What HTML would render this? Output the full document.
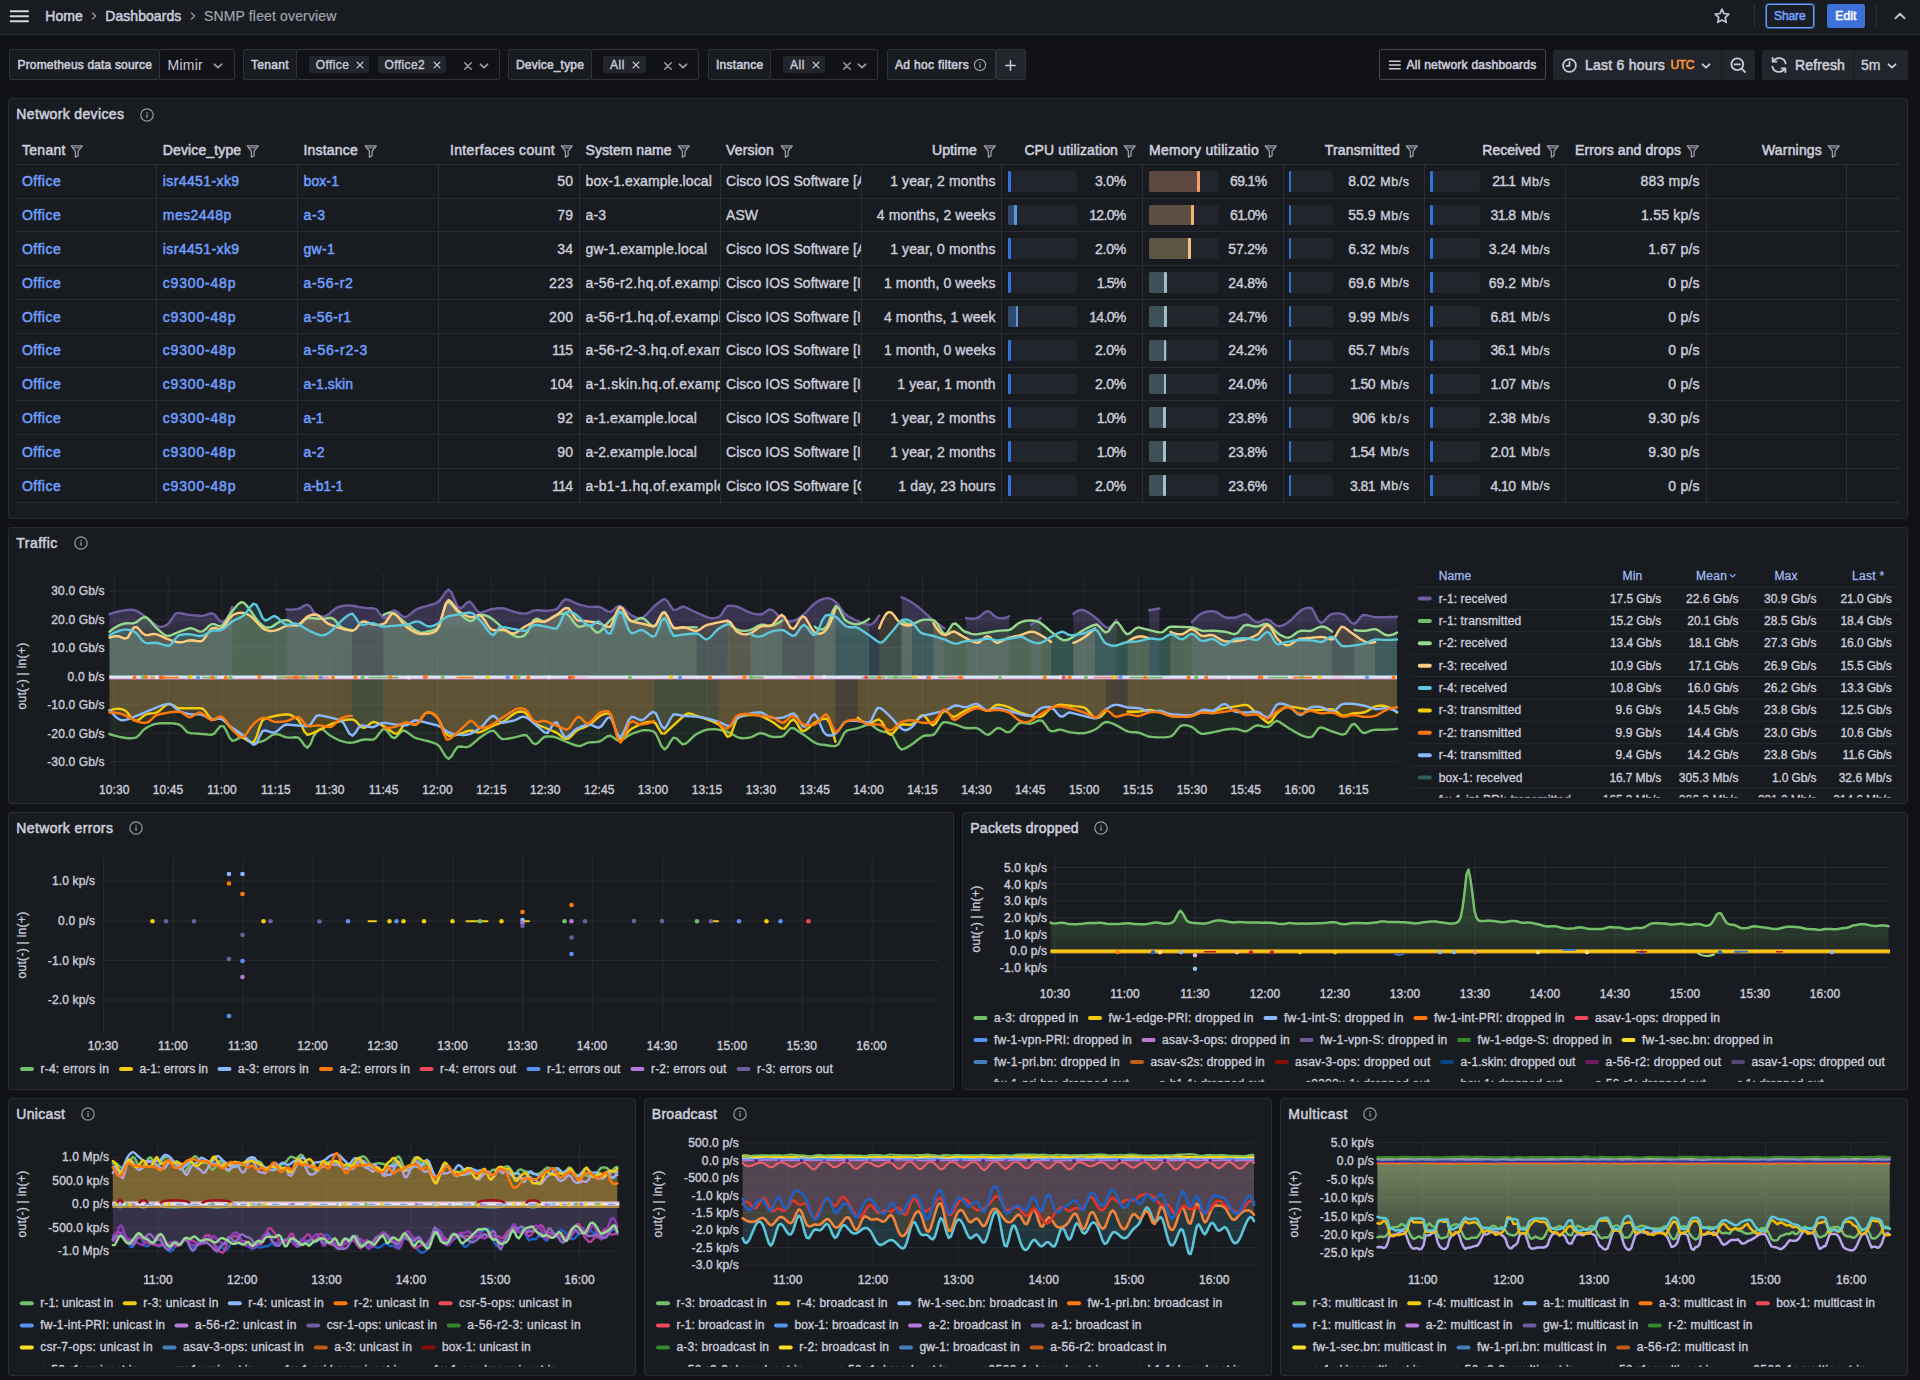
<!DOCTYPE html>
<html lang="en"><head><meta charset="utf-8"><title>SNMP fleet overview - Dashboards - Grafana</title>
<style>
html,body{margin:0;padding:0}
body{width:1920px;height:1380px;background:#111217;overflow:hidden;position:relative;font-family:"Liberation Sans",Arial,sans-serif;color:#ccccdc;font-size:12px}
.a{position:absolute;box-sizing:border-box}
.bx{box-sizing:border-box}
.t{position:absolute;white-space:nowrap;line-height:20px;height:20px}
svg{overflow:hidden}
svg text{font-family:"Liberation Sans",Arial,sans-serif;font-size:12px;fill:#ccccdc}
</style></head>
<body>
<div class="a" style="left:0;top:0;width:1920px;height:35px;background:#181b1f;border-bottom:1px solid #2a2d33"></div>
<svg class="a" style="left:9px;top:7.5px" width="22" height="16" viewBox="0 0 22 16"><path d="M1.7 3.2H19M1.7 8.2H19M1.7 13.2H19" stroke="#d5d5e2" stroke-width="2" stroke-linecap="round"/></svg>
<span class="t" style="top:5.5px;font-size:14px;left:45.3px;letter-spacing:0.04px;-webkit-text-stroke:0.5px #ccccdc;">Home</span>
<svg class="a" style="left:89px;top:10px" width="10" height="12" viewBox="0 0 10 12"><path d="M3.5 3 L6.7 6 L3.5 9" fill="none" stroke="#9a9aa8" stroke-width="1.3" stroke-linecap="round" stroke-linejoin="round"/></svg>
<span class="t" style="top:5.5px;font-size:14px;left:105.3px;letter-spacing:0.05px;-webkit-text-stroke:0.5px #ccccdc;">Dashboards</span>
<svg class="a" style="left:187.5px;top:10px" width="10" height="12" viewBox="0 0 10 12"><path d="M3.5 3 L6.7 6 L3.5 9" fill="none" stroke="#9a9aa8" stroke-width="1.3" stroke-linecap="round" stroke-linejoin="round"/></svg>
<span class="t" style="top:5.5px;font-size:14px;left:204.0px;letter-spacing:0.15px;color:#a4a4b3;-webkit-text-stroke:0.2px #a4a4b3;">SNMP fleet overview</span>
<svg class="a" style="left:1713px;top:7px" width="18" height="18" viewBox="0 0 18 18"><path d="M9 2.2 L11 6.6 L15.8 7.2 L12.3 10.5 L13.2 15.3 L9 13 L4.8 15.3 L5.7 10.5 L2.2 7.2 L7 6.6 Z" fill="none" stroke="#bdbdcc" stroke-width="1.8" stroke-linejoin="round"/></svg>
<div class="a" style="left:1754px;top:4px;width:1px;height:23px;background:#2e3036"></div>
<div class="a bx" style="left:1766.0px;top:4.0px;width:47.5px;height:23.5px;background:#1b1d24;border:1px solid #6e9fff;border-radius:3px;box-shadow:0 0 0 1px #3a5a9a;"></div>
<span class="t" style="top:5.5px;font-size:12px;left:1774.0px;letter-spacing:-0.10px;color:#6e9fff;-webkit-text-stroke:0.55px #6e9fff;">Share</span>
<div class="a bx" style="left:1827.0px;top:4.0px;width:37.5px;height:23.5px;background:#3d71d9;border-radius:2px;"></div>
<span class="t" style="top:5.5px;font-size:12px;left:1835.3px;letter-spacing:0.08px;color:#ffffff;-webkit-text-stroke:0.55px #ffffff;">Edit</span>
<div class="a" style="left:1875.5px;top:4px;width:1px;height:23px;background:#2e3036"></div>
<svg class="a" style="left:1893px;top:10px" width="14" height="12" viewBox="0 0 14 12"><path d="M2.5 8.2 L7 3.8 L11.5 8.2" fill="none" stroke="#bdbdcc" stroke-width="2" stroke-linecap="round" stroke-linejoin="round"/></svg>
<div class="a bx" style="left:9.0px;top:49.0px;width:151.0px;height:31.0px;background:#181b1f;border:1px solid #2f3239;border-radius:2px;"></div>
<span class="t" style="top:54.7px;font-size:12px;left:17.5px;letter-spacing:0.17px;-webkit-text-stroke:0.55px #ccccdc;">Prometheus data source</span>
<div class="a bx" style="left:159.0px;top:49.0px;width:75.5px;height:31.0px;background:#111217;border:1px solid #2f3239;border-radius:2px;"></div>
<span class="t" style="top:55.0px;font-size:14px;left:167.5px;letter-spacing:0.26px;">Mimir</span>
<svg class="a" style="left:212.0px;top:59.5px" width="12" height="12" viewBox="0 0 12 12"><path d="M2.5 4.3 L6 7.7 L9.5 4.3" fill="none" stroke="#9a9aa8" stroke-width="1.8" stroke-linecap="round" stroke-linejoin="round"/></svg>
<div class="a bx" style="left:242.5px;top:49.0px;width:54.5px;height:31.0px;background:#181b1f;border:1px solid #2f3239;border-radius:2px;"></div>
<span class="t" style="top:54.7px;font-size:12px;left:251.0px;letter-spacing:0.33px;-webkit-text-stroke:0.55px #ccccdc;">Tenant</span>
<div class="a bx" style="left:296.0px;top:49.0px;width:203.5px;height:31.0px;background:#111217;border:1px solid #2f3239;border-radius:2px;"></div>
<div class="a bx" style="left:308.8px;top:56.3px;width:60.7px;height:16.5px;background:#22252b;border-radius:2px;"></div>
<span class="t" style="top:54.5px;font-size:12px;left:315.8px;letter-spacing:0.40px;-webkit-text-stroke:0.35px #ccccdc;">Office</span>
<svg class="a" style="left:354.0px;top:58.8px" width="12" height="12" viewBox="-6 -6 12 12"><path d="M-2.9 -2.9 L2.9 2.9 M2.9 -2.9 L-2.9 2.9" fill="none" stroke="#ccccdc" stroke-width="1.3" stroke-linecap="round"/></svg>
<div class="a bx" style="left:377.5px;top:56.3px;width:68.5px;height:16.5px;background:#22252b;border-radius:2px;"></div>
<span class="t" style="top:54.5px;font-size:12px;left:384.5px;letter-spacing:0.39px;-webkit-text-stroke:0.35px #ccccdc;">Office2</span>
<svg class="a" style="left:430.5px;top:58.8px" width="12" height="12" viewBox="-6 -6 12 12"><path d="M-2.9 -2.9 L2.9 2.9 M2.9 -2.9 L-2.9 2.9" fill="none" stroke="#ccccdc" stroke-width="1.3" stroke-linecap="round"/></svg>
<svg class="a" style="left:462.2px;top:59.5px" width="12" height="12" viewBox="-6 -6 12 12"><path d="M-3.3 -3.3 L3.3 3.3 M3.3 -3.3 L-3.3 3.3" fill="none" stroke="#9a9aa8" stroke-width="1.5" stroke-linecap="round"/></svg>
<svg class="a" style="left:477.5px;top:59.5px" width="12" height="12" viewBox="0 0 12 12"><path d="M2.5 4.3 L6 7.7 L9.5 4.3" fill="none" stroke="#9a9aa8" stroke-width="1.8" stroke-linecap="round" stroke-linejoin="round"/></svg>
<div class="a bx" style="left:507.5px;top:49.0px;width:84.5px;height:31.0px;background:#181b1f;border:1px solid #2f3239;border-radius:2px;"></div>
<span class="t" style="top:54.7px;font-size:12px;left:516.0px;letter-spacing:0.18px;-webkit-text-stroke:0.55px #ccccdc;">Device_type</span>
<div class="a bx" style="left:591.0px;top:49.0px;width:107.5px;height:31.0px;background:#111217;border:1px solid #2f3239;border-radius:2px;"></div>
<div class="a bx" style="left:603.0px;top:56.3px;width:42.5px;height:16.5px;background:#22252b;border-radius:2px;"></div>
<span class="t" style="top:54.5px;font-size:12px;left:610.0px;letter-spacing:0.55px;-webkit-text-stroke:0.35px #ccccdc;">All</span>
<svg class="a" style="left:630.0px;top:58.8px" width="12" height="12" viewBox="-6 -6 12 12"><path d="M-2.9 -2.9 L2.9 2.9 M2.9 -2.9 L-2.9 2.9" fill="none" stroke="#ccccdc" stroke-width="1.3" stroke-linecap="round"/></svg>
<svg class="a" style="left:661.7px;top:59.5px" width="12" height="12" viewBox="-6 -6 12 12"><path d="M-3.3 -3.3 L3.3 3.3 M3.3 -3.3 L-3.3 3.3" fill="none" stroke="#9a9aa8" stroke-width="1.5" stroke-linecap="round"/></svg>
<svg class="a" style="left:677.0px;top:59.5px" width="12" height="12" viewBox="0 0 12 12"><path d="M2.5 4.3 L6 7.7 L9.5 4.3" fill="none" stroke="#9a9aa8" stroke-width="1.8" stroke-linecap="round" stroke-linejoin="round"/></svg>
<div class="a bx" style="left:707.5px;top:49.0px;width:63.5px;height:31.0px;background:#181b1f;border:1px solid #2f3239;border-radius:2px;"></div>
<span class="t" style="top:54.7px;font-size:12px;left:716.0px;letter-spacing:0.27px;-webkit-text-stroke:0.55px #ccccdc;">Instance</span>
<div class="a bx" style="left:770.0px;top:49.0px;width:108.0px;height:31.0px;background:#111217;border:1px solid #2f3239;border-radius:2px;"></div>
<div class="a bx" style="left:783.0px;top:56.3px;width:42.0px;height:16.5px;background:#22252b;border-radius:2px;"></div>
<span class="t" style="top:54.5px;font-size:12px;left:790.0px;letter-spacing:0.55px;-webkit-text-stroke:0.35px #ccccdc;">All</span>
<svg class="a" style="left:809.5px;top:58.8px" width="12" height="12" viewBox="-6 -6 12 12"><path d="M-2.9 -2.9 L2.9 2.9 M2.9 -2.9 L-2.9 2.9" fill="none" stroke="#ccccdc" stroke-width="1.3" stroke-linecap="round"/></svg>
<svg class="a" style="left:841.0px;top:59.5px" width="12" height="12" viewBox="-6 -6 12 12"><path d="M-3.3 -3.3 L3.3 3.3 M3.3 -3.3 L-3.3 3.3" fill="none" stroke="#9a9aa8" stroke-width="1.5" stroke-linecap="round"/></svg>
<svg class="a" style="left:856.0px;top:59.5px" width="12" height="12" viewBox="0 0 12 12"><path d="M2.5 4.3 L6 7.7 L9.5 4.3" fill="none" stroke="#9a9aa8" stroke-width="1.8" stroke-linecap="round" stroke-linejoin="round"/></svg>
<div class="a bx" style="left:886.7px;top:49.0px;width:109.3px;height:31.0px;background:#181b1f;border:1px solid #2f3239;border-radius:2px;"></div>
<span class="t" style="top:55.0px;font-size:12px;left:895.0px;letter-spacing:0.33px;-webkit-text-stroke:0.55px #ccccdc;">Ad hoc filters</span>
<svg class="a" style="left:972.3px;top:57.0px" width="16" height="16" viewBox="0 0 16 16"><circle cx="8" cy="8" r="5.6" fill="none" stroke="#9a9aa8" stroke-width="1.2"/><rect x="7.4" y="7.2" width="1.3" height="3.6" fill="#9a9aa8"/><rect x="7.4" y="5" width="1.3" height="1.3" fill="#9a9aa8"/></svg>
<div class="a bx" style="left:995.5px;top:49.0px;width:30.0px;height:31.0px;background:#22252b;border:1px solid #2f3239;border-radius:2px;"></div>
<svg class="a" style="left:1004px;top:58.5px" width="13" height="13" viewBox="0 0 13 13"><path d="M6.5 1.8V11.2M1.8 6.5H11.2" stroke="#ccccdc" stroke-width="1.5" stroke-linecap="round"/></svg>
<div class="a bx" style="left:1379.0px;top:49.0px;width:166.5px;height:31.0px;background:#111217;border:1px solid #44474f;border-radius:2px;"></div>
<svg class="a" style="left:1388px;top:59px" width="14" height="12" viewBox="0 0 14 12"><path d="M1.5 2.2H12.2M1.5 6H12.2M1.5 9.8H12.2" stroke="#ccccdc" stroke-width="1.5" stroke-linecap="round"/></svg>
<span class="t" style="top:55.0px;font-size:12px;left:1406.5px;letter-spacing:0.24px;-webkit-text-stroke:0.55px #ccccdc;">All network dashboards</span>
<div class="a bx" style="left:1552.5px;top:49.5px;width:168.5px;height:30.5px;background:#22252b;border-radius:2px;"></div>
<div class="a bx" style="left:1721.5px;top:49.5px;width:33.0px;height:30.5px;background:#22252b;border-radius:2px;"></div>
<div class="a" style="left:1721px;top:49.5px;width:1px;height:30.5px;background:#1b1d22"></div>
<svg class="a" style="left:1561px;top:56.5px" width="17" height="17" viewBox="0 0 17 17"><circle cx="8.5" cy="8.5" r="6.4" fill="none" stroke="#ccccdc" stroke-width="1.7"/><path d="M8.5 4.8V8.8H5.6" fill="none" stroke="#ccccdc" stroke-width="1.7" stroke-linecap="round" stroke-linejoin="round"/></svg>
<span class="t" style="top:55.0px;font-size:14px;left:1585.0px;letter-spacing:0.25px;-webkit-text-stroke:0.55px #ccccdc;">Last 6 hours</span>
<span class="t" style="top:55.3px;font-size:12px;left:1670.5px;letter-spacing:-0.39px;color:#ff9830;-webkit-text-stroke:0.55px #ff9830;">UTC</span>
<svg class="a" style="left:1699.5px;top:59.5px" width="12" height="12" viewBox="0 0 12 12"><path d="M2.5 4.3 L6 7.7 L9.5 4.3" fill="none" stroke="#ccccdc" stroke-width="1.8" stroke-linecap="round" stroke-linejoin="round"/></svg>
<svg class="a" style="left:1728.5px;top:56px" width="19" height="19" viewBox="0 0 19 19"><circle cx="8.3" cy="8.3" r="5.9" fill="none" stroke="#ccccdc" stroke-width="1.8"/><path d="M5.6 8.3H11M12.8 12.8L16 16" fill="none" stroke="#ccccdc" stroke-width="1.8" stroke-linecap="round"/></svg>
<div class="a bx" style="left:1761.5px;top:49.5px;width:91.5px;height:30.5px;background:#22252b;border-radius:2px;"></div>
<div class="a bx" style="left:1853.5px;top:49.5px;width:54.5px;height:30.5px;background:#22252b;border-radius:2px;"></div>
<div class="a" style="left:1853px;top:49.5px;width:1px;height:30.5px;background:#1b1d22"></div>
<svg class="a" style="left:1768.5px;top:55px" width="20" height="20" viewBox="0 0 20 20"><path d="M16.6 8.3A6.8 6.8 0 0 0 4.3 6.2M3.4 11.7A6.8 6.8 0 0 0 15.7 13.8" fill="none" stroke="#ccccdc" stroke-width="1.8" stroke-linecap="round"/><path d="M3.6 2.8V6.6H7.4M16.4 17.2V13.4H12.6" fill="none" stroke="#ccccdc" stroke-width="1.8" stroke-linecap="round" stroke-linejoin="round"/></svg>
<span class="t" style="top:55.0px;font-size:14px;left:1795.0px;letter-spacing:0.14px;-webkit-text-stroke:0.55px #ccccdc;">Refresh</span>
<span class="t" style="top:55.0px;font-size:14px;left:1861.0px;letter-spacing:0.03px;-webkit-text-stroke:0.4px #ccccdc;">5m</span>
<svg class="a" style="left:1885.5px;top:59.5px" width="12" height="12" viewBox="0 0 12 12"><path d="M2.5 4.3 L6 7.7 L9.5 4.3" fill="none" stroke="#ccccdc" stroke-width="1.8" stroke-linecap="round" stroke-linejoin="round"/></svg>
<div class="a" style="left:8.0px;top:98.0px;width:1900.0px;height:421.0px;background:#181b1f;border:1px solid #292b32;border-radius:3px"></div>
<span class="t" style="top:104.3px;font-size:14px;left:16.3px;letter-spacing:0.35px;-webkit-text-stroke:0.55px #ccccdc;">Network devices</span>
<svg class="a" style="left:138.5px;top:106.5px" width="16" height="16" viewBox="0 0 16 16"><circle cx="8" cy="8" r="6.2" fill="none" stroke="#9a9aa8" stroke-width="1.2"/><rect x="7.4" y="7.2" width="1.3" height="3.6" fill="#9a9aa8"/><rect x="7.4" y="5" width="1.3" height="1.3" fill="#9a9aa8"/></svg>
<span class="t" style="top:140.3px;font-size:14px;left:22.0px;letter-spacing:0.29px;-webkit-text-stroke:0.55px #ccccdc;">Tenant</span>
<svg class="a" style="left:70.3px;top:143.8px" width="14" height="15" viewBox="0 0 14 15"><path d="M1.2 1.8H12.3L8.1 7.2V11.6L5.4 13.2V7.2Z" fill="none" stroke="#a0a0ae" stroke-width="1.25" stroke-linejoin="round"/><path d="M2.6 3.9H10.9" stroke="#a0a0ae" stroke-width="1"/></svg>
<span class="t" style="top:140.3px;font-size:14px;left:162.8px;letter-spacing:0.13px;-webkit-text-stroke:0.55px #ccccdc;">Device_type</span>
<svg class="a" style="left:246.2px;top:143.8px" width="14" height="15" viewBox="0 0 14 15"><path d="M1.2 1.8H12.3L8.1 7.2V11.6L5.4 13.2V7.2Z" fill="none" stroke="#a0a0ae" stroke-width="1.25" stroke-linejoin="round"/><path d="M2.6 3.9H10.9" stroke="#a0a0ae" stroke-width="1"/></svg>
<span class="t" style="top:140.3px;font-size:14px;left:303.5px;letter-spacing:0.20px;-webkit-text-stroke:0.55px #ccccdc;">Instance</span>
<svg class="a" style="left:363.5px;top:143.8px" width="14" height="15" viewBox="0 0 14 15"><path d="M1.2 1.8H12.3L8.1 7.2V11.6L5.4 13.2V7.2Z" fill="none" stroke="#a0a0ae" stroke-width="1.25" stroke-linejoin="round"/><path d="M2.6 3.9H10.9" stroke="#a0a0ae" stroke-width="1"/></svg>
<span class="t" style="top:140.3px;font-size:14px;left:450.0px;letter-spacing:0.34px;-webkit-text-stroke:0.55px #ccccdc;">Interfaces count</span>
<svg class="a" style="left:559.5px;top:143.8px" width="14" height="15" viewBox="0 0 14 15"><path d="M1.2 1.8H12.3L8.1 7.2V11.6L5.4 13.2V7.2Z" fill="none" stroke="#a0a0ae" stroke-width="1.25" stroke-linejoin="round"/><path d="M2.6 3.9H10.9" stroke="#a0a0ae" stroke-width="1"/></svg>
<span class="t" style="top:140.3px;font-size:14px;left:585.5px;letter-spacing:0.04px;-webkit-text-stroke:0.55px #ccccdc;">System name</span>
<svg class="a" style="left:677.0px;top:143.8px" width="14" height="15" viewBox="0 0 14 15"><path d="M1.2 1.8H12.3L8.1 7.2V11.6L5.4 13.2V7.2Z" fill="none" stroke="#a0a0ae" stroke-width="1.25" stroke-linejoin="round"/><path d="M2.6 3.9H10.9" stroke="#a0a0ae" stroke-width="1"/></svg>
<span class="t" style="top:140.3px;font-size:14px;left:726.0px;letter-spacing:0.19px;-webkit-text-stroke:0.55px #ccccdc;">Version</span>
<svg class="a" style="left:779.5px;top:143.8px" width="14" height="15" viewBox="0 0 14 15"><path d="M1.2 1.8H12.3L8.1 7.2V11.6L5.4 13.2V7.2Z" fill="none" stroke="#a0a0ae" stroke-width="1.25" stroke-linejoin="round"/><path d="M2.6 3.9H10.9" stroke="#a0a0ae" stroke-width="1"/></svg>
<span class="t" style="top:140.3px;font-size:14px;left:932.0px;letter-spacing:0.11px;-webkit-text-stroke:0.55px #ccccdc;">Uptime</span>
<svg class="a" style="left:982.5px;top:143.8px" width="14" height="15" viewBox="0 0 14 15"><path d="M1.2 1.8H12.3L8.1 7.2V11.6L5.4 13.2V7.2Z" fill="none" stroke="#a0a0ae" stroke-width="1.25" stroke-linejoin="round"/><path d="M2.6 3.9H10.9" stroke="#a0a0ae" stroke-width="1"/></svg>
<span class="t" style="top:140.3px;font-size:14px;left:1024.4px;letter-spacing:0.12px;-webkit-text-stroke:0.55px #ccccdc;">CPU utilization</span>
<svg class="a" style="left:1123.1px;top:143.8px" width="14" height="15" viewBox="0 0 14 15"><path d="M1.2 1.8H12.3L8.1 7.2V11.6L5.4 13.2V7.2Z" fill="none" stroke="#a0a0ae" stroke-width="1.25" stroke-linejoin="round"/><path d="M2.6 3.9H10.9" stroke="#a0a0ae" stroke-width="1"/></svg>
<span class="t" style="top:140.3px;font-size:14px;left:1149.0px;letter-spacing:0.29px;-webkit-text-stroke:0.55px #ccccdc;">Memory utilizatio</span>
<svg class="a" style="left:1264.0px;top:143.8px" width="14" height="15" viewBox="0 0 14 15"><path d="M1.2 1.8H12.3L8.1 7.2V11.6L5.4 13.2V7.2Z" fill="none" stroke="#a0a0ae" stroke-width="1.25" stroke-linejoin="round"/><path d="M2.6 3.9H10.9" stroke="#a0a0ae" stroke-width="1"/></svg>
<span class="t" style="top:140.3px;font-size:14px;left:1324.8px;letter-spacing:0.16px;-webkit-text-stroke:0.55px #ccccdc;">Transmitted</span>
<svg class="a" style="left:1404.5px;top:143.8px" width="14" height="15" viewBox="0 0 14 15"><path d="M1.2 1.8H12.3L8.1 7.2V11.6L5.4 13.2V7.2Z" fill="none" stroke="#a0a0ae" stroke-width="1.25" stroke-linejoin="round"/><path d="M2.6 3.9H10.9" stroke="#a0a0ae" stroke-width="1"/></svg>
<span class="t" style="top:140.3px;font-size:14px;left:1482.3px;letter-spacing:-0.02px;-webkit-text-stroke:0.55px #ccccdc;">Received</span>
<svg class="a" style="left:1545.5px;top:143.8px" width="14" height="15" viewBox="0 0 14 15"><path d="M1.2 1.8H12.3L8.1 7.2V11.6L5.4 13.2V7.2Z" fill="none" stroke="#a0a0ae" stroke-width="1.25" stroke-linejoin="round"/><path d="M2.6 3.9H10.9" stroke="#a0a0ae" stroke-width="1"/></svg>
<span class="t" style="top:140.3px;font-size:14px;left:1575.0px;letter-spacing:0.11px;-webkit-text-stroke:0.55px #ccccdc;">Errors and drops</span>
<svg class="a" style="left:1686.0px;top:143.8px" width="14" height="15" viewBox="0 0 14 15"><path d="M1.2 1.8H12.3L8.1 7.2V11.6L5.4 13.2V7.2Z" fill="none" stroke="#a0a0ae" stroke-width="1.25" stroke-linejoin="round"/><path d="M2.6 3.9H10.9" stroke="#a0a0ae" stroke-width="1"/></svg>
<span class="t" style="top:140.3px;font-size:14px;left:1762.0px;letter-spacing:0.17px;-webkit-text-stroke:0.55px #ccccdc;">Warnings</span>
<svg class="a" style="left:1827.0px;top:143.8px" width="14" height="15" viewBox="0 0 14 15"><path d="M1.2 1.8H12.3L8.1 7.2V11.6L5.4 13.2V7.2Z" fill="none" stroke="#a0a0ae" stroke-width="1.25" stroke-linejoin="round"/><path d="M2.6 3.9H10.9" stroke="#a0a0ae" stroke-width="1"/></svg>
<div class="a" style="left:16px;top:163.7px;width:1884px;height:1px;background:#2a2d33"></div>
<div class="a" style="left:16px;top:197.5px;width:1884px;height:1px;background:#2a2d33"></div>
<div class="a" style="left:16px;top:231.3px;width:1884px;height:1px;background:#2a2d33"></div>
<div class="a" style="left:16px;top:265.1px;width:1884px;height:1px;background:#2a2d33"></div>
<div class="a" style="left:16px;top:298.9px;width:1884px;height:1px;background:#2a2d33"></div>
<div class="a" style="left:16px;top:332.7px;width:1884px;height:1px;background:#2a2d33"></div>
<div class="a" style="left:16px;top:366.5px;width:1884px;height:1px;background:#2a2d33"></div>
<div class="a" style="left:16px;top:400.3px;width:1884px;height:1px;background:#2a2d33"></div>
<div class="a" style="left:16px;top:434.1px;width:1884px;height:1px;background:#2a2d33"></div>
<div class="a" style="left:16px;top:467.9px;width:1884px;height:1px;background:#2a2d33"></div>
<div class="a" style="left:16px;top:501.7px;width:1884px;height:1px;background:#2a2d33"></div>
<div class="a" style="left:156.3px;top:164.2px;width:1px;height:340.0px;background:#2a2d33"></div>
<div class="a" style="left:297.2px;top:164.2px;width:1px;height:340.0px;background:#2a2d33"></div>
<div class="a" style="left:438.0px;top:164.2px;width:1px;height:340.0px;background:#2a2d33"></div>
<div class="a" style="left:578.8px;top:164.2px;width:1px;height:340.0px;background:#2a2d33"></div>
<div class="a" style="left:719.7px;top:164.2px;width:1px;height:340.0px;background:#2a2d33"></div>
<div class="a" style="left:860.5px;top:164.2px;width:1px;height:340.0px;background:#2a2d33"></div>
<div class="a" style="left:1001.3px;top:164.2px;width:1px;height:340.0px;background:#2a2d33"></div>
<div class="a" style="left:1142.1px;top:164.2px;width:1px;height:340.0px;background:#2a2d33"></div>
<div class="a" style="left:1283.0px;top:164.2px;width:1px;height:340.0px;background:#2a2d33"></div>
<div class="a" style="left:1423.8px;top:164.2px;width:1px;height:340.0px;background:#2a2d33"></div>
<div class="a" style="left:1564.6px;top:164.2px;width:1px;height:340.0px;background:#2a2d33"></div>
<div class="a" style="left:1705.5px;top:164.2px;width:1px;height:340.0px;background:#2a2d33"></div>
<div class="a" style="left:1846.3px;top:164.2px;width:1px;height:340.0px;background:#2a2d33"></div>
<span class="t" style="top:171.4px;font-size:14px;left:22.0px;letter-spacing:0.48px;color:#6e9fff;-webkit-text-stroke:0.5px #6e9fff;">Office</span>
<span class="t" style="top:171.4px;font-size:14px;left:162.8px;letter-spacing:0.39px;color:#6e9fff;-webkit-text-stroke:0.5px #6e9fff;">isr4451-xk9</span>
<span class="t" style="top:171.4px;font-size:14px;left:303.5px;letter-spacing:0.10px;color:#6e9fff;-webkit-text-stroke:0.5px #6e9fff;">box-1</span>
<span class="t" style="top:171.4px;font-size:14px;right:1346.7px;letter-spacing:0.30px;-webkit-text-stroke:0.4px #ccccdc;">50</span>
<div class="a" style="left:585.5px;top:169.4px;width:134.5px;height:24px;overflow:hidden"><span class="t" style="left:0;top:2px;font-size:14px;letter-spacing:0.1px;-webkit-text-stroke:0.4px #ccccdc">box-1.example.local</span></div>
<div class="a" style="left:726px;top:169.4px;width:135px;height:24px;overflow:hidden"><span class="t" style="left:0;top:2px;font-size:14px;letter-spacing:0.05px;-webkit-text-stroke:0.4px #ccccdc">Cisco IOS Software [Amsterdam], ISR Software</span></div>
<span class="t" style="top:171.4px;font-size:14px;right:924.4px;letter-spacing:0.12px;-webkit-text-stroke:0.4px #ccccdc;">1 year, 2 months</span>
<div class="a bx" style="left:1007.6px;top:170.8px;width:69.2px;height:20.8px;background:#22252b;border-radius:2px;"></div>
<div class="a bx" style="left:1008.0px;top:170.8px;width:2.6px;height:20.8px;background:#3274d9;border-radius:1px;"></div>
<span class="t" style="top:171.4px;font-size:14px;right:793.9px;letter-spacing:-0.20px;-webkit-text-stroke:0.4px #ccccdc;">3.0%</span>
<div class="a bx" style="left:1148.5px;top:170.8px;width:70.0px;height:20.8px;background:#22252b;border-radius:2px;"></div>
<div class="a bx" style="left:1148.5px;top:170.8px;width:51.5px;height:20.8px;background:#5c4840;border-radius:2px;"></div>
<div class="a bx" style="left:1197.2px;top:170.8px;width:2.8px;height:20.8px;background:#f2a06e;border-radius:1px;"></div>
<span class="t" style="top:171.4px;font-size:14px;right:653.5px;letter-spacing:-0.66px;-webkit-text-stroke:0.4px #ccccdc;">69.1%</span>
<div class="a bx" style="left:1288.6px;top:170.8px;width:44.8px;height:20.8px;background:#22252b;border-radius:2px;"></div>
<div class="a bx" style="left:1288.8px;top:170.8px;width:2.6px;height:20.8px;background:#3274d9;border-radius:1px;"></div>
<span class="t" style="top:171.9px;font-size:12.5px;right:510.4px;letter-spacing:0.55px;-webkit-text-stroke:0.4px #ccccdc;">Mb/s</span>
<span class="t" style="top:171.4px;font-size:14px;right:544.5px;-webkit-text-stroke:0.4px #ccccdc;">8.02</span>
<div class="a bx" style="left:1429.7px;top:170.8px;width:50.8px;height:20.8px;background:#22252b;border-radius:2px;"></div>
<div class="a bx" style="left:1430.0px;top:170.8px;width:2.6px;height:20.8px;background:#3274d9;border-radius:1px;"></div>
<span class="t" style="top:171.9px;font-size:12.5px;right:369.7px;letter-spacing:0.55px;-webkit-text-stroke:0.4px #ccccdc;">Mb/s</span>
<span class="t" style="top:171.4px;font-size:14px;right:405.1px;letter-spacing:-1.15px;-webkit-text-stroke:0.4px #ccccdc;">21.1</span>
<span class="t" style="top:171.4px;font-size:14px;right:220.3px;letter-spacing:0.20px;-webkit-text-stroke:0.4px #ccccdc;">883 mp/s</span>
<span class="t" style="top:205.2px;font-size:14px;left:22.0px;letter-spacing:0.48px;color:#6e9fff;-webkit-text-stroke:0.5px #6e9fff;">Office</span>
<span class="t" style="top:205.2px;font-size:14px;left:162.8px;letter-spacing:0.45px;color:#6e9fff;-webkit-text-stroke:0.5px #6e9fff;">mes2448p</span>
<span class="t" style="top:205.2px;font-size:14px;left:303.5px;letter-spacing:0.59px;color:#6e9fff;-webkit-text-stroke:0.5px #6e9fff;">a-3</span>
<span class="t" style="top:205.2px;font-size:14px;right:1346.7px;letter-spacing:0.30px;-webkit-text-stroke:0.4px #ccccdc;">79</span>
<div class="a" style="left:585.5px;top:203.2px;width:134.5px;height:24px;overflow:hidden"><span class="t" style="left:0;top:2px;font-size:14px;letter-spacing:0.1px;-webkit-text-stroke:0.4px #ccccdc">a-3</span></div>
<div class="a" style="left:726px;top:203.2px;width:135px;height:24px;overflow:hidden"><span class="t" style="left:0;top:2px;font-size:14px;letter-spacing:0.05px;-webkit-text-stroke:0.4px #ccccdc">ASW</span></div>
<span class="t" style="top:205.2px;font-size:14px;right:924.4px;letter-spacing:0.12px;-webkit-text-stroke:0.4px #ccccdc;">4 months, 2 weeks</span>
<div class="a bx" style="left:1007.6px;top:204.6px;width:69.2px;height:20.8px;background:#22252b;border-radius:2px;"></div>
<div class="a bx" style="left:1007.6px;top:204.6px;width:9.1px;height:20.8px;background:#2f4a6b;border-radius:2px;"></div>
<div class="a bx" style="left:1014.1px;top:204.6px;width:2.6px;height:20.8px;background:#5a98e4;border-radius:1px;"></div>
<span class="t" style="top:205.2px;font-size:14px;right:794.4px;letter-spacing:-0.66px;-webkit-text-stroke:0.4px #ccccdc;">12.0%</span>
<div class="a bx" style="left:1148.5px;top:204.6px;width:70.0px;height:20.8px;background:#22252b;border-radius:2px;"></div>
<div class="a bx" style="left:1148.5px;top:204.6px;width:45.4px;height:20.8px;background:#5c4e42;border-radius:2px;"></div>
<div class="a bx" style="left:1191.1px;top:204.6px;width:2.8px;height:20.8px;background:#f2b072;border-radius:1px;"></div>
<span class="t" style="top:205.2px;font-size:14px;right:653.5px;letter-spacing:-0.66px;-webkit-text-stroke:0.4px #ccccdc;">61.0%</span>
<div class="a bx" style="left:1288.6px;top:204.6px;width:44.8px;height:20.8px;background:#22252b;border-radius:2px;"></div>
<div class="a bx" style="left:1288.8px;top:204.6px;width:2.6px;height:20.8px;background:#3274d9;border-radius:1px;"></div>
<span class="t" style="top:205.7px;font-size:12.5px;right:510.4px;letter-spacing:0.55px;-webkit-text-stroke:0.4px #ccccdc;">Mb/s</span>
<span class="t" style="top:205.2px;font-size:14px;right:544.5px;-webkit-text-stroke:0.4px #ccccdc;">55.9</span>
<div class="a bx" style="left:1429.7px;top:204.6px;width:50.8px;height:20.8px;background:#22252b;border-radius:2px;"></div>
<div class="a bx" style="left:1430.0px;top:204.6px;width:2.6px;height:20.8px;background:#3274d9;border-radius:1px;"></div>
<span class="t" style="top:205.7px;font-size:12.5px;right:369.7px;letter-spacing:0.55px;-webkit-text-stroke:0.4px #ccccdc;">Mb/s</span>
<span class="t" style="top:205.2px;font-size:14px;right:404.6px;letter-spacing:-0.58px;-webkit-text-stroke:0.4px #ccccdc;">31.8</span>
<span class="t" style="top:205.2px;font-size:14px;right:220.3px;letter-spacing:0.20px;-webkit-text-stroke:0.4px #ccccdc;">1.55 kp/s</span>
<span class="t" style="top:239.0px;font-size:14px;left:22.0px;letter-spacing:0.48px;color:#6e9fff;-webkit-text-stroke:0.5px #6e9fff;">Office</span>
<span class="t" style="top:239.0px;font-size:14px;left:162.8px;letter-spacing:0.39px;color:#6e9fff;-webkit-text-stroke:0.5px #6e9fff;">isr4451-xk9</span>
<span class="t" style="top:239.0px;font-size:14px;left:303.5px;letter-spacing:0.29px;color:#6e9fff;-webkit-text-stroke:0.5px #6e9fff;">gw-1</span>
<span class="t" style="top:239.0px;font-size:14px;right:1346.7px;letter-spacing:0.30px;-webkit-text-stroke:0.4px #ccccdc;">34</span>
<div class="a" style="left:585.5px;top:237.0px;width:134.5px;height:24px;overflow:hidden"><span class="t" style="left:0;top:2px;font-size:14px;letter-spacing:0.1px;-webkit-text-stroke:0.4px #ccccdc">gw-1.example.local</span></div>
<div class="a" style="left:726px;top:237.0px;width:135px;height:24px;overflow:hidden"><span class="t" style="left:0;top:2px;font-size:14px;letter-spacing:0.05px;-webkit-text-stroke:0.4px #ccccdc">Cisco IOS Software [Amsterdam], ISR Software</span></div>
<span class="t" style="top:239.0px;font-size:14px;right:924.4px;letter-spacing:0.12px;-webkit-text-stroke:0.4px #ccccdc;">1 year, 0 months</span>
<div class="a bx" style="left:1007.6px;top:238.4px;width:69.2px;height:20.8px;background:#22252b;border-radius:2px;"></div>
<div class="a bx" style="left:1008.0px;top:238.4px;width:2.6px;height:20.8px;background:#3274d9;border-radius:1px;"></div>
<span class="t" style="top:239.0px;font-size:14px;right:793.9px;letter-spacing:-0.20px;-webkit-text-stroke:0.4px #ccccdc;">2.0%</span>
<div class="a bx" style="left:1148.5px;top:238.4px;width:70.0px;height:20.8px;background:#22252b;border-radius:2px;"></div>
<div class="a bx" style="left:1148.5px;top:238.4px;width:42.6px;height:20.8px;background:#5e5444;border-radius:2px;"></div>
<div class="a bx" style="left:1188.3px;top:238.4px;width:2.8px;height:20.8px;background:#f2c27e;border-radius:1px;"></div>
<span class="t" style="top:239.0px;font-size:14px;right:653.0px;letter-spacing:-0.20px;-webkit-text-stroke:0.4px #ccccdc;">57.2%</span>
<div class="a bx" style="left:1288.6px;top:238.4px;width:44.8px;height:20.8px;background:#22252b;border-radius:2px;"></div>
<div class="a bx" style="left:1288.8px;top:238.4px;width:2.6px;height:20.8px;background:#3274d9;border-radius:1px;"></div>
<span class="t" style="top:239.5px;font-size:12.5px;right:510.4px;letter-spacing:0.55px;-webkit-text-stroke:0.4px #ccccdc;">Mb/s</span>
<span class="t" style="top:239.0px;font-size:14px;right:544.5px;-webkit-text-stroke:0.4px #ccccdc;">6.32</span>
<div class="a bx" style="left:1429.7px;top:238.4px;width:50.8px;height:20.8px;background:#22252b;border-radius:2px;"></div>
<div class="a bx" style="left:1430.0px;top:238.4px;width:2.6px;height:20.8px;background:#3274d9;border-radius:1px;"></div>
<span class="t" style="top:239.5px;font-size:12.5px;right:369.7px;letter-spacing:0.55px;-webkit-text-stroke:0.4px #ccccdc;">Mb/s</span>
<span class="t" style="top:239.0px;font-size:14px;right:404.0px;-webkit-text-stroke:0.4px #ccccdc;">3.24</span>
<span class="t" style="top:239.0px;font-size:14px;right:220.3px;letter-spacing:0.20px;-webkit-text-stroke:0.4px #ccccdc;">1.67 p/s</span>
<span class="t" style="top:272.8px;font-size:14px;left:22.0px;letter-spacing:0.48px;color:#6e9fff;-webkit-text-stroke:0.5px #6e9fff;">Office</span>
<span class="t" style="top:272.8px;font-size:14px;left:162.8px;letter-spacing:0.81px;color:#6e9fff;-webkit-text-stroke:0.5px #6e9fff;">c9300-48p</span>
<span class="t" style="top:272.8px;font-size:14px;left:303.5px;letter-spacing:0.70px;color:#6e9fff;-webkit-text-stroke:0.5px #6e9fff;">a-56-r2</span>
<span class="t" style="top:272.8px;font-size:14px;right:1346.7px;letter-spacing:0.30px;-webkit-text-stroke:0.4px #ccccdc;">223</span>
<div class="a" style="left:585.5px;top:270.8px;width:134.5px;height:24px;overflow:hidden"><span class="t" style="left:0;top:2px;font-size:14px;letter-spacing:0.38px;-webkit-text-stroke:0.4px #ccccdc">a-56-r2.hq.of.example.local</span></div>
<div class="a" style="left:726px;top:270.8px;width:135px;height:24px;overflow:hidden"><span class="t" style="left:0;top:2px;font-size:14px;letter-spacing:0.05px;-webkit-text-stroke:0.4px #ccccdc">Cisco IOS Software [IOSXE], Catalyst L3 Switch</span></div>
<span class="t" style="top:272.8px;font-size:14px;right:924.4px;letter-spacing:0.12px;-webkit-text-stroke:0.4px #ccccdc;">1 month, 0 weeks</span>
<div class="a bx" style="left:1007.6px;top:272.2px;width:69.2px;height:20.8px;background:#22252b;border-radius:2px;"></div>
<div class="a bx" style="left:1008.0px;top:272.2px;width:2.6px;height:20.8px;background:#3274d9;border-radius:1px;"></div>
<span class="t" style="top:272.8px;font-size:14px;right:794.5px;letter-spacing:-0.78px;-webkit-text-stroke:0.4px #ccccdc;">1.5%</span>
<div class="a bx" style="left:1148.5px;top:272.2px;width:70.0px;height:20.8px;background:#22252b;border-radius:2px;"></div>
<div class="a bx" style="left:1148.5px;top:272.2px;width:18.5px;height:20.8px;background:#3e5058;border-radius:2px;"></div>
<div class="a bx" style="left:1164.2px;top:272.2px;width:2.8px;height:20.8px;background:#a3bec6;border-radius:1px;"></div>
<span class="t" style="top:272.8px;font-size:14px;right:653.0px;letter-spacing:-0.20px;-webkit-text-stroke:0.4px #ccccdc;">24.8%</span>
<div class="a bx" style="left:1288.6px;top:272.2px;width:44.8px;height:20.8px;background:#22252b;border-radius:2px;"></div>
<div class="a bx" style="left:1288.8px;top:272.2px;width:2.6px;height:20.8px;background:#3274d9;border-radius:1px;"></div>
<span class="t" style="top:273.3px;font-size:12.5px;right:510.4px;letter-spacing:0.55px;-webkit-text-stroke:0.4px #ccccdc;">Mb/s</span>
<span class="t" style="top:272.8px;font-size:14px;right:544.5px;-webkit-text-stroke:0.4px #ccccdc;">69.6</span>
<div class="a bx" style="left:1429.7px;top:272.2px;width:50.8px;height:20.8px;background:#22252b;border-radius:2px;"></div>
<div class="a bx" style="left:1430.0px;top:272.2px;width:2.6px;height:20.8px;background:#3274d9;border-radius:1px;"></div>
<span class="t" style="top:273.3px;font-size:12.5px;right:369.7px;letter-spacing:0.55px;-webkit-text-stroke:0.4px #ccccdc;">Mb/s</span>
<span class="t" style="top:272.8px;font-size:14px;right:404.0px;-webkit-text-stroke:0.4px #ccccdc;">69.2</span>
<span class="t" style="top:272.8px;font-size:14px;right:220.3px;letter-spacing:0.20px;-webkit-text-stroke:0.4px #ccccdc;">0 p/s</span>
<span class="t" style="top:306.6px;font-size:14px;left:22.0px;letter-spacing:0.48px;color:#6e9fff;-webkit-text-stroke:0.5px #6e9fff;">Office</span>
<span class="t" style="top:306.6px;font-size:14px;left:162.8px;letter-spacing:0.81px;color:#6e9fff;-webkit-text-stroke:0.5px #6e9fff;">c9300-48p</span>
<span class="t" style="top:306.6px;font-size:14px;left:303.5px;letter-spacing:0.41px;color:#6e9fff;-webkit-text-stroke:0.5px #6e9fff;">a-56-r1</span>
<span class="t" style="top:306.6px;font-size:14px;right:1346.7px;letter-spacing:0.30px;-webkit-text-stroke:0.4px #ccccdc;">200</span>
<div class="a" style="left:585.5px;top:304.6px;width:134.5px;height:24px;overflow:hidden"><span class="t" style="left:0;top:2px;font-size:14px;letter-spacing:0.38px;-webkit-text-stroke:0.4px #ccccdc">a-56-r1.hq.of.example.local</span></div>
<div class="a" style="left:726px;top:304.6px;width:135px;height:24px;overflow:hidden"><span class="t" style="left:0;top:2px;font-size:14px;letter-spacing:0.05px;-webkit-text-stroke:0.4px #ccccdc">Cisco IOS Software [IOSXE], Catalyst L3 Switch</span></div>
<span class="t" style="top:306.6px;font-size:14px;right:924.4px;letter-spacing:0.12px;-webkit-text-stroke:0.4px #ccccdc;">4 months, 1 week</span>
<div class="a bx" style="left:1007.6px;top:306.0px;width:69.2px;height:20.8px;background:#22252b;border-radius:2px;"></div>
<div class="a bx" style="left:1007.6px;top:306.0px;width:10.6px;height:20.8px;background:#2f4a6b;border-radius:2px;"></div>
<div class="a bx" style="left:1015.6px;top:306.0px;width:2.6px;height:20.8px;background:#5a98e4;border-radius:1px;"></div>
<span class="t" style="top:306.6px;font-size:14px;right:794.4px;letter-spacing:-0.66px;-webkit-text-stroke:0.4px #ccccdc;">14.0%</span>
<div class="a bx" style="left:1148.5px;top:306.0px;width:70.0px;height:20.8px;background:#22252b;border-radius:2px;"></div>
<div class="a bx" style="left:1148.5px;top:306.0px;width:18.4px;height:20.8px;background:#3e5058;border-radius:2px;"></div>
<div class="a bx" style="left:1164.1px;top:306.0px;width:2.8px;height:20.8px;background:#a3bec6;border-radius:1px;"></div>
<span class="t" style="top:306.6px;font-size:14px;right:653.0px;letter-spacing:-0.20px;-webkit-text-stroke:0.4px #ccccdc;">24.7%</span>
<div class="a bx" style="left:1288.6px;top:306.0px;width:44.8px;height:20.8px;background:#22252b;border-radius:2px;"></div>
<div class="a bx" style="left:1288.8px;top:306.0px;width:2.6px;height:20.8px;background:#3274d9;border-radius:1px;"></div>
<span class="t" style="top:307.1px;font-size:12.5px;right:510.4px;letter-spacing:0.55px;-webkit-text-stroke:0.4px #ccccdc;">Mb/s</span>
<span class="t" style="top:306.6px;font-size:14px;right:544.5px;-webkit-text-stroke:0.4px #ccccdc;">9.99</span>
<div class="a bx" style="left:1429.7px;top:306.0px;width:50.8px;height:20.8px;background:#22252b;border-radius:2px;"></div>
<div class="a bx" style="left:1430.0px;top:306.0px;width:2.6px;height:20.8px;background:#3274d9;border-radius:1px;"></div>
<span class="t" style="top:307.1px;font-size:12.5px;right:369.7px;letter-spacing:0.55px;-webkit-text-stroke:0.4px #ccccdc;">Mb/s</span>
<span class="t" style="top:306.6px;font-size:14px;right:404.6px;letter-spacing:-0.58px;-webkit-text-stroke:0.4px #ccccdc;">6.81</span>
<span class="t" style="top:306.6px;font-size:14px;right:220.3px;letter-spacing:0.20px;-webkit-text-stroke:0.4px #ccccdc;">0 p/s</span>
<span class="t" style="top:340.4px;font-size:14px;left:22.0px;letter-spacing:0.48px;color:#6e9fff;-webkit-text-stroke:0.5px #6e9fff;">Office</span>
<span class="t" style="top:340.4px;font-size:14px;left:162.8px;letter-spacing:0.81px;color:#6e9fff;-webkit-text-stroke:0.5px #6e9fff;">c9300-48p</span>
<span class="t" style="top:340.4px;font-size:14px;left:303.5px;letter-spacing:0.77px;color:#6e9fff;-webkit-text-stroke:0.5px #6e9fff;">a-56-r2-3</span>
<span class="t" style="top:340.4px;font-size:14px;right:1347.7px;letter-spacing:-0.70px;-webkit-text-stroke:0.4px #ccccdc;">115</span>
<div class="a" style="left:585.5px;top:338.4px;width:134.5px;height:24px;overflow:hidden"><span class="t" style="left:0;top:2px;font-size:14px;letter-spacing:0.38px;-webkit-text-stroke:0.4px #ccccdc">a-56-r2-3.hq.of.example.local</span></div>
<div class="a" style="left:726px;top:338.4px;width:135px;height:24px;overflow:hidden"><span class="t" style="left:0;top:2px;font-size:14px;letter-spacing:0.05px;-webkit-text-stroke:0.4px #ccccdc">Cisco IOS Software [IOSXE], Catalyst L3 Switch</span></div>
<span class="t" style="top:340.4px;font-size:14px;right:924.4px;letter-spacing:0.12px;-webkit-text-stroke:0.4px #ccccdc;">1 month, 0 weeks</span>
<div class="a bx" style="left:1007.6px;top:339.8px;width:69.2px;height:20.8px;background:#22252b;border-radius:2px;"></div>
<div class="a bx" style="left:1008.0px;top:339.8px;width:2.6px;height:20.8px;background:#3274d9;border-radius:1px;"></div>
<span class="t" style="top:340.4px;font-size:14px;right:793.9px;letter-spacing:-0.20px;-webkit-text-stroke:0.4px #ccccdc;">2.0%</span>
<div class="a bx" style="left:1148.5px;top:339.8px;width:70.0px;height:20.8px;background:#22252b;border-radius:2px;"></div>
<div class="a bx" style="left:1148.5px;top:339.8px;width:18.0px;height:20.8px;background:#3e5058;border-radius:2px;"></div>
<div class="a bx" style="left:1163.7px;top:339.8px;width:2.8px;height:20.8px;background:#a3bec6;border-radius:1px;"></div>
<span class="t" style="top:340.4px;font-size:14px;right:653.0px;letter-spacing:-0.20px;-webkit-text-stroke:0.4px #ccccdc;">24.2%</span>
<div class="a bx" style="left:1288.6px;top:339.8px;width:44.8px;height:20.8px;background:#22252b;border-radius:2px;"></div>
<div class="a bx" style="left:1288.8px;top:339.8px;width:2.6px;height:20.8px;background:#3274d9;border-radius:1px;"></div>
<span class="t" style="top:340.9px;font-size:12.5px;right:510.4px;letter-spacing:0.55px;-webkit-text-stroke:0.4px #ccccdc;">Mb/s</span>
<span class="t" style="top:340.4px;font-size:14px;right:544.5px;-webkit-text-stroke:0.4px #ccccdc;">65.7</span>
<div class="a bx" style="left:1429.7px;top:339.8px;width:50.8px;height:20.8px;background:#22252b;border-radius:2px;"></div>
<div class="a bx" style="left:1430.0px;top:339.8px;width:2.6px;height:20.8px;background:#3274d9;border-radius:1px;"></div>
<span class="t" style="top:340.9px;font-size:12.5px;right:369.7px;letter-spacing:0.55px;-webkit-text-stroke:0.4px #ccccdc;">Mb/s</span>
<span class="t" style="top:340.4px;font-size:14px;right:404.6px;letter-spacing:-0.58px;-webkit-text-stroke:0.4px #ccccdc;">36.1</span>
<span class="t" style="top:340.4px;font-size:14px;right:220.3px;letter-spacing:0.20px;-webkit-text-stroke:0.4px #ccccdc;">0 p/s</span>
<span class="t" style="top:374.2px;font-size:14px;left:22.0px;letter-spacing:0.48px;color:#6e9fff;-webkit-text-stroke:0.5px #6e9fff;">Office</span>
<span class="t" style="top:374.2px;font-size:14px;left:162.8px;letter-spacing:0.81px;color:#6e9fff;-webkit-text-stroke:0.5px #6e9fff;">c9300-48p</span>
<span class="t" style="top:374.2px;font-size:14px;left:303.5px;letter-spacing:0.06px;color:#6e9fff;-webkit-text-stroke:0.5px #6e9fff;">a-1.skin</span>
<span class="t" style="top:374.2px;font-size:14px;right:1347.2px;letter-spacing:-0.20px;-webkit-text-stroke:0.4px #ccccdc;">104</span>
<div class="a" style="left:585.5px;top:372.2px;width:134.5px;height:24px;overflow:hidden"><span class="t" style="left:0;top:2px;font-size:14px;letter-spacing:0.38px;-webkit-text-stroke:0.4px #ccccdc">a-1.skin.hq.of.example.local</span></div>
<div class="a" style="left:726px;top:372.2px;width:135px;height:24px;overflow:hidden"><span class="t" style="left:0;top:2px;font-size:14px;letter-spacing:0.05px;-webkit-text-stroke:0.4px #ccccdc">Cisco IOS Software [IOSXE], Catalyst L3 Switch</span></div>
<span class="t" style="top:374.2px;font-size:14px;right:924.4px;letter-spacing:0.12px;-webkit-text-stroke:0.4px #ccccdc;">1 year, 1 month</span>
<div class="a bx" style="left:1007.6px;top:373.6px;width:69.2px;height:20.8px;background:#22252b;border-radius:2px;"></div>
<div class="a bx" style="left:1008.0px;top:373.6px;width:2.6px;height:20.8px;background:#3274d9;border-radius:1px;"></div>
<span class="t" style="top:374.2px;font-size:14px;right:793.9px;letter-spacing:-0.20px;-webkit-text-stroke:0.4px #ccccdc;">2.0%</span>
<div class="a bx" style="left:1148.5px;top:373.6px;width:70.0px;height:20.8px;background:#22252b;border-radius:2px;"></div>
<div class="a bx" style="left:1148.5px;top:373.6px;width:17.9px;height:20.8px;background:#3e5058;border-radius:2px;"></div>
<div class="a bx" style="left:1163.6px;top:373.6px;width:2.8px;height:20.8px;background:#a3bec6;border-radius:1px;"></div>
<span class="t" style="top:374.2px;font-size:14px;right:653.0px;letter-spacing:-0.20px;-webkit-text-stroke:0.4px #ccccdc;">24.0%</span>
<div class="a bx" style="left:1288.6px;top:373.6px;width:44.8px;height:20.8px;background:#22252b;border-radius:2px;"></div>
<div class="a bx" style="left:1288.8px;top:373.6px;width:2.6px;height:20.8px;background:#3274d9;border-radius:1px;"></div>
<span class="t" style="top:374.7px;font-size:12.5px;right:510.4px;letter-spacing:0.55px;-webkit-text-stroke:0.4px #ccccdc;">Mb/s</span>
<span class="t" style="top:374.2px;font-size:14px;right:545.1px;letter-spacing:-0.58px;-webkit-text-stroke:0.4px #ccccdc;">1.50</span>
<div class="a bx" style="left:1429.7px;top:373.6px;width:50.8px;height:20.8px;background:#22252b;border-radius:2px;"></div>
<div class="a bx" style="left:1430.0px;top:373.6px;width:2.6px;height:20.8px;background:#3274d9;border-radius:1px;"></div>
<span class="t" style="top:374.7px;font-size:12.5px;right:369.7px;letter-spacing:0.55px;-webkit-text-stroke:0.4px #ccccdc;">Mb/s</span>
<span class="t" style="top:374.2px;font-size:14px;right:404.6px;letter-spacing:-0.58px;-webkit-text-stroke:0.4px #ccccdc;">1.07</span>
<span class="t" style="top:374.2px;font-size:14px;right:220.3px;letter-spacing:0.20px;-webkit-text-stroke:0.4px #ccccdc;">0 p/s</span>
<span class="t" style="top:408.0px;font-size:14px;left:22.0px;letter-spacing:0.48px;color:#6e9fff;-webkit-text-stroke:0.5px #6e9fff;">Office</span>
<span class="t" style="top:408.0px;font-size:14px;left:162.8px;letter-spacing:0.81px;color:#6e9fff;-webkit-text-stroke:0.5px #6e9fff;">c9300-48p</span>
<span class="t" style="top:408.0px;font-size:14px;left:303.5px;letter-spacing:-0.08px;color:#6e9fff;-webkit-text-stroke:0.5px #6e9fff;">a-1</span>
<span class="t" style="top:408.0px;font-size:14px;right:1346.7px;letter-spacing:0.30px;-webkit-text-stroke:0.4px #ccccdc;">92</span>
<div class="a" style="left:585.5px;top:406.0px;width:134.5px;height:24px;overflow:hidden"><span class="t" style="left:0;top:2px;font-size:14px;letter-spacing:0.1px;-webkit-text-stroke:0.4px #ccccdc">a-1.example.local</span></div>
<div class="a" style="left:726px;top:406.0px;width:135px;height:24px;overflow:hidden"><span class="t" style="left:0;top:2px;font-size:14px;letter-spacing:0.05px;-webkit-text-stroke:0.4px #ccccdc">Cisco IOS Software [IOSXE], Catalyst L3 Switch</span></div>
<span class="t" style="top:408.0px;font-size:14px;right:924.4px;letter-spacing:0.12px;-webkit-text-stroke:0.4px #ccccdc;">1 year, 2 months</span>
<div class="a bx" style="left:1007.6px;top:407.4px;width:69.2px;height:20.8px;background:#22252b;border-radius:2px;"></div>
<div class="a bx" style="left:1008.0px;top:407.4px;width:2.6px;height:20.8px;background:#3274d9;border-radius:1px;"></div>
<span class="t" style="top:408.0px;font-size:14px;right:794.5px;letter-spacing:-0.78px;-webkit-text-stroke:0.4px #ccccdc;">1.0%</span>
<div class="a bx" style="left:1148.5px;top:407.4px;width:70.0px;height:20.8px;background:#22252b;border-radius:2px;"></div>
<div class="a bx" style="left:1148.5px;top:407.4px;width:17.7px;height:20.8px;background:#3e5058;border-radius:2px;"></div>
<div class="a bx" style="left:1163.4px;top:407.4px;width:2.8px;height:20.8px;background:#a3bec6;border-radius:1px;"></div>
<span class="t" style="top:408.0px;font-size:14px;right:653.0px;letter-spacing:-0.20px;-webkit-text-stroke:0.4px #ccccdc;">23.8%</span>
<div class="a bx" style="left:1288.6px;top:407.4px;width:44.8px;height:20.8px;background:#22252b;border-radius:2px;"></div>
<div class="a bx" style="left:1288.8px;top:407.4px;width:2.6px;height:20.8px;background:#3274d9;border-radius:1px;"></div>
<span class="t" style="top:408.5px;font-size:12.5px;right:509.4px;letter-spacing:1.59px;-webkit-text-stroke:0.4px #ccccdc;">kb/s</span>
<span class="t" style="top:408.0px;font-size:14px;right:544.5px;-webkit-text-stroke:0.4px #ccccdc;">906</span>
<div class="a bx" style="left:1429.7px;top:407.4px;width:50.8px;height:20.8px;background:#22252b;border-radius:2px;"></div>
<div class="a bx" style="left:1430.0px;top:407.4px;width:2.6px;height:20.8px;background:#3274d9;border-radius:1px;"></div>
<span class="t" style="top:408.5px;font-size:12.5px;right:369.7px;letter-spacing:0.55px;-webkit-text-stroke:0.4px #ccccdc;">Mb/s</span>
<span class="t" style="top:408.0px;font-size:14px;right:404.0px;-webkit-text-stroke:0.4px #ccccdc;">2.38</span>
<span class="t" style="top:408.0px;font-size:14px;right:220.3px;letter-spacing:0.20px;-webkit-text-stroke:0.4px #ccccdc;">9.30 p/s</span>
<span class="t" style="top:441.8px;font-size:14px;left:22.0px;letter-spacing:0.48px;color:#6e9fff;-webkit-text-stroke:0.5px #6e9fff;">Office</span>
<span class="t" style="top:441.8px;font-size:14px;left:162.8px;letter-spacing:0.81px;color:#6e9fff;-webkit-text-stroke:0.5px #6e9fff;">c9300-48p</span>
<span class="t" style="top:441.8px;font-size:14px;left:303.5px;letter-spacing:0.42px;color:#6e9fff;-webkit-text-stroke:0.5px #6e9fff;">a-2</span>
<span class="t" style="top:441.8px;font-size:14px;right:1346.7px;letter-spacing:0.30px;-webkit-text-stroke:0.4px #ccccdc;">90</span>
<div class="a" style="left:585.5px;top:439.8px;width:134.5px;height:24px;overflow:hidden"><span class="t" style="left:0;top:2px;font-size:14px;letter-spacing:0.1px;-webkit-text-stroke:0.4px #ccccdc">a-2.example.local</span></div>
<div class="a" style="left:726px;top:439.8px;width:135px;height:24px;overflow:hidden"><span class="t" style="left:0;top:2px;font-size:14px;letter-spacing:0.05px;-webkit-text-stroke:0.4px #ccccdc">Cisco IOS Software [IOSXE], Catalyst L3 Switch</span></div>
<span class="t" style="top:441.8px;font-size:14px;right:924.4px;letter-spacing:0.12px;-webkit-text-stroke:0.4px #ccccdc;">1 year, 2 months</span>
<div class="a bx" style="left:1007.6px;top:441.2px;width:69.2px;height:20.8px;background:#22252b;border-radius:2px;"></div>
<div class="a bx" style="left:1008.0px;top:441.2px;width:2.6px;height:20.8px;background:#3274d9;border-radius:1px;"></div>
<span class="t" style="top:441.8px;font-size:14px;right:794.5px;letter-spacing:-0.78px;-webkit-text-stroke:0.4px #ccccdc;">1.0%</span>
<div class="a bx" style="left:1148.5px;top:441.2px;width:70.0px;height:20.8px;background:#22252b;border-radius:2px;"></div>
<div class="a bx" style="left:1148.5px;top:441.2px;width:17.7px;height:20.8px;background:#3e5058;border-radius:2px;"></div>
<div class="a bx" style="left:1163.4px;top:441.2px;width:2.8px;height:20.8px;background:#a3bec6;border-radius:1px;"></div>
<span class="t" style="top:441.8px;font-size:14px;right:653.0px;letter-spacing:-0.20px;-webkit-text-stroke:0.4px #ccccdc;">23.8%</span>
<div class="a bx" style="left:1288.6px;top:441.2px;width:44.8px;height:20.8px;background:#22252b;border-radius:2px;"></div>
<div class="a bx" style="left:1288.8px;top:441.2px;width:2.6px;height:20.8px;background:#3274d9;border-radius:1px;"></div>
<span class="t" style="top:442.3px;font-size:12.5px;right:510.4px;letter-spacing:0.55px;-webkit-text-stroke:0.4px #ccccdc;">Mb/s</span>
<span class="t" style="top:441.8px;font-size:14px;right:545.1px;letter-spacing:-0.58px;-webkit-text-stroke:0.4px #ccccdc;">1.54</span>
<div class="a bx" style="left:1429.7px;top:441.2px;width:50.8px;height:20.8px;background:#22252b;border-radius:2px;"></div>
<div class="a bx" style="left:1430.0px;top:441.2px;width:2.6px;height:20.8px;background:#3274d9;border-radius:1px;"></div>
<span class="t" style="top:442.3px;font-size:12.5px;right:369.7px;letter-spacing:0.55px;-webkit-text-stroke:0.4px #ccccdc;">Mb/s</span>
<span class="t" style="top:441.8px;font-size:14px;right:404.6px;letter-spacing:-0.58px;-webkit-text-stroke:0.4px #ccccdc;">2.01</span>
<span class="t" style="top:441.8px;font-size:14px;right:220.3px;letter-spacing:0.20px;-webkit-text-stroke:0.4px #ccccdc;">9.30 p/s</span>
<span class="t" style="top:475.6px;font-size:14px;left:22.0px;letter-spacing:0.48px;color:#6e9fff;-webkit-text-stroke:0.5px #6e9fff;">Office</span>
<span class="t" style="top:475.6px;font-size:14px;left:162.8px;letter-spacing:0.81px;color:#6e9fff;-webkit-text-stroke:0.5px #6e9fff;">c9300-48p</span>
<span class="t" style="top:475.6px;font-size:14px;left:303.5px;letter-spacing:-0.16px;color:#6e9fff;-webkit-text-stroke:0.5px #6e9fff;">a-b1-1</span>
<span class="t" style="top:475.6px;font-size:14px;right:1347.7px;letter-spacing:-0.70px;-webkit-text-stroke:0.4px #ccccdc;">114</span>
<div class="a" style="left:585.5px;top:473.6px;width:134.5px;height:24px;overflow:hidden"><span class="t" style="left:0;top:2px;font-size:14px;letter-spacing:0.38px;-webkit-text-stroke:0.4px #ccccdc">a-b1-1.hq.of.example.local</span></div>
<div class="a" style="left:726px;top:473.6px;width:135px;height:24px;overflow:hidden"><span class="t" style="left:0;top:2px;font-size:14px;letter-spacing:0.05px;-webkit-text-stroke:0.4px #ccccdc">Cisco IOS Software [Cupertino], Catalyst L3 Switch</span></div>
<span class="t" style="top:475.6px;font-size:14px;right:924.4px;letter-spacing:0.12px;-webkit-text-stroke:0.4px #ccccdc;">1 day, 23 hours</span>
<div class="a bx" style="left:1007.6px;top:475.0px;width:69.2px;height:20.8px;background:#22252b;border-radius:2px;"></div>
<div class="a bx" style="left:1008.0px;top:475.0px;width:2.6px;height:20.8px;background:#3274d9;border-radius:1px;"></div>
<span class="t" style="top:475.6px;font-size:14px;right:793.9px;letter-spacing:-0.20px;-webkit-text-stroke:0.4px #ccccdc;">2.0%</span>
<div class="a bx" style="left:1148.5px;top:475.0px;width:70.0px;height:20.8px;background:#22252b;border-radius:2px;"></div>
<div class="a bx" style="left:1148.5px;top:475.0px;width:17.6px;height:20.8px;background:#3e5058;border-radius:2px;"></div>
<div class="a bx" style="left:1163.3px;top:475.0px;width:2.8px;height:20.8px;background:#a3bec6;border-radius:1px;"></div>
<span class="t" style="top:475.6px;font-size:14px;right:653.0px;letter-spacing:-0.20px;-webkit-text-stroke:0.4px #ccccdc;">23.6%</span>
<div class="a bx" style="left:1288.6px;top:475.0px;width:44.8px;height:20.8px;background:#22252b;border-radius:2px;"></div>
<div class="a bx" style="left:1288.8px;top:475.0px;width:2.6px;height:20.8px;background:#3274d9;border-radius:1px;"></div>
<span class="t" style="top:476.1px;font-size:12.5px;right:510.4px;letter-spacing:0.55px;-webkit-text-stroke:0.4px #ccccdc;">Mb/s</span>
<span class="t" style="top:475.6px;font-size:14px;right:545.1px;letter-spacing:-0.58px;-webkit-text-stroke:0.4px #ccccdc;">3.81</span>
<div class="a bx" style="left:1429.7px;top:475.0px;width:50.8px;height:20.8px;background:#22252b;border-radius:2px;"></div>
<div class="a bx" style="left:1430.0px;top:475.0px;width:2.6px;height:20.8px;background:#3274d9;border-radius:1px;"></div>
<span class="t" style="top:476.1px;font-size:12.5px;right:369.7px;letter-spacing:0.55px;-webkit-text-stroke:0.4px #ccccdc;">Mb/s</span>
<span class="t" style="top:475.6px;font-size:14px;right:404.6px;letter-spacing:-0.58px;-webkit-text-stroke:0.4px #ccccdc;">4.10</span>
<span class="t" style="top:475.6px;font-size:14px;right:220.3px;letter-spacing:0.20px;-webkit-text-stroke:0.4px #ccccdc;">0 p/s</span>
<div class="a" style="left:8.0px;top:527.0px;width:1900.0px;height:276.5px;background:#181b1f;border:1px solid #292b32;border-radius:3px"></div>
<span class="t" style="top:533.3px;font-size:14px;left:16.3px;letter-spacing:0.48px;-webkit-text-stroke:0.55px #ccccdc;">Traffic</span>
<svg class="a" style="left:72.5px;top:535.0px" width="16" height="16" viewBox="0 0 16 16"><circle cx="8" cy="8" r="6.2" fill="none" stroke="#9a9aa8" stroke-width="1.2"/><rect x="7.4" y="7.2" width="1.3" height="3.6" fill="#9a9aa8"/><rect x="7.4" y="5" width="1.3" height="1.3" fill="#9a9aa8"/></svg>
<svg class="a" style="left:9px;top:560px" width="1898" height="242.5" viewBox="9 560 1898 242.5">
<path d="M114.2 573.0V775.0M168.1 573.0V775.0M222.0 573.0V775.0M275.9 573.0V775.0M329.8 573.0V775.0M383.6 573.0V775.0M437.5 573.0V775.0M491.4 573.0V775.0M545.3 573.0V775.0M599.2 573.0V775.0M653.1 573.0V775.0M707.0 573.0V775.0M760.9 573.0V775.0M814.7 573.0V775.0M868.6 573.0V775.0M922.5 573.0V775.0M976.4 573.0V775.0M1030.3 573.0V775.0M1084.2 573.0V775.0M1138.1 573.0V775.0M1192.0 573.0V775.0M1245.8 573.0V775.0M1299.7 573.0V775.0M1353.6 573.0V775.0M109.4 590.9H1397.0M109.4 619.4H1397.0M109.4 647.8H1397.0M109.4 676.3H1397.0M109.4 704.8H1397.0M109.4 733.2H1397.0M109.4 761.6H1397.0" stroke="#272a30" stroke-width="1" fill="none"/>
<defs><linearGradient id="gp" gradientUnits="userSpaceOnUse" x1="0" y1="620.8" x2="0" y2="636.5"><stop offset="0" stop-color="#705DA0" stop-opacity="0.36"/><stop offset="1" stop-color="#705DA0" stop-opacity="0.17"/></linearGradient></defs>
<path d="M109.5 614.2l3-1.1 3-.9 3-.7 3-.6 3-.5 3-.5 3-.2 3 .3 3 .9 3 1.7 3 2 3 2.2 3 2.3 3 2.5 3 2.4 3 2.1 3 .8 3-.5 3-1.3 3-2.7 3-4.8 3-4 3-.7 3 .5 3 .6 3 .6 3 .4 3 .3 3 .2 3 .3 3 .1 3-.7 3-1.2 3-.8 3 1.3 3 3.7 3 3.3 3 .5 3-2.8 3-5.3 2.8-7.1V676.3H109.5Z" fill="url(#gp)"/>
<path d="M286.5 609.4l3 .2 3 0 3-.3 3-.4 3-1.5 3-1.8 3-1 3 2.4 3 5.2 3 2.4 3 1.5 3 .6 3-.6 3-1.8 3-2.5 3-2.6 3-1.9 3-.9 3-.5 3-.4 3 0 3 .3 3 .5 3 .6 3 .5 3 .4 3 .3 3 .1 3 .2 3 .9 3 4.1 3 3.9 3 .3 3-2.8 3-3.4 3-1.1 3 1.7 3 2.8 3 2.2 3-.1 3-2.1 3-2.6 3-2.4 3-1.4 3-.9 3-.8 3-.8 3-.9 3-1 3-1.2 3-2.1 3-4.1 3-4.4 3-2.6 3 2.7 3 7.2 3 6.9 3 2.1 3-2.3 3-3.3 3-1.4 3 2.7 3 4.5 3 3.6 3 .3 3-1 3-1.3 3-1 3-.4 3-.4 3-.3 3 .1 3 .5 3 1 3 1.2 3 .9 3 .8 3 .6 3 .3 3-.1 3-1.2 3-1.4 3-.7 3 .1 3 .2 3 .2 3 0 3-.3 3-.5 3-.8 3-3.3 3-4.3 3-2.4 3 .7 3 1.4 3 1.5 3 1.3 3 .9 3 .8 3 .7 3 .5 3 .1 3-.2 3 0 3 .9 3 1.9 3 1.8 3 .5 3-2 3-2.7 3-1.4 3 1.4 3 2.9 3 3.1 3 2.2 3 1.5 3 1.1 3 .3 3-1.2 3-2.6 3-3.3 3-3.2 3-2.8 3-2.5 3-2.2 3-1.6 3 2.2 3 5 3 3.8 3-.1 3-1.7 3-1.5 3 .6 3 1.5 3 1.5 3 1.5 3 1.4 3 1.3 3 1.2 3 1.3 3 1 3 .3 3-.3 3-.6 3-2.6 3-5.3 3-3.4 3-.3 3 .2 3 .6 3 1.1 3 1.4 3 1.6 3 1.4 3 1.2 3 .7 3 .4 3 .2 3-1 3-2.4 3-1.7 3 .7 3 2.6 3 3.1 3 2.3 3 1.6 3 1.3 3 .5 3-.6 3-1.3 3-1.8 3-2.3 3-2.7 3-3.1 3-3.2 3-2.8 3-2.1 3-1.7 3-1.1 3-.7 3 .3 3 1.3 3 2.2 3 3.1 3 4.4 3 4.1 3 2.5 3 1.6 3 1.5 3 1.4 3 1.3 3 1.2 3 1 3 .8 3-.4 3-2.5 3-3.9 1.7-2.6V676.3H286.5Z" fill="url(#gp)"/>
<path d="M901.6 597.3l3 1.3 3 1.4 3 1.7 3 1.9 3 2.2 3 2.3 3 2.5 3 2.7 3 2.8 3 2.8 3 2.4 3 2.3 3 2.1 3 2 .9 .6V676.3H901.6Z" fill="url(#gp)"/>
<path d="M966 618l3 .6 3 .1 3-.3 3-.7 3-2.1 3-2.7 3-1.7 3 .7 3 2.7 3 2.6 3 .9 3 .1 3-.4 3-1 1-.6V676.3H966Z" fill="url(#gp)"/>
<path d="M1031.3 624.8l3-2.1 3-2.2 3-2.2 .5-.3V676.3H1031.3Z" fill="url(#gp)"/>
<path d="M1073.4 613.7l3-2.2 3-1.4 3-.2 3 1.1 3 1.6 3 2 3 2.2 3 2.4 3 3.1 3 3 3 2.3 3 .1 3-2.5 3-4 1-1.5V676.3H1073.4Z" fill="url(#gp)"/>
<path d="M1149.1 610.2l3-.5 3-.5 3-.5 1.3-.2V676.3H1149.1Z" fill="url(#gp)"/>
<path d="M1192 622.3l3-3.5 3-2.9 3-2.1 3-1.3 3-.9 3-.4 3 .1 3 .6 3 1.7 3 2.2 3 1.4 3 .5 3 .1 3-.1 3-.5 3-1.3 3-1.3 3-.3 3 1.8 3 3 3 2.6 3 .6 3-1 3-1.4 3-.6 3 1.2 3 2.7 3 2.4 3 .6 3-.6 3-1.3 3-1.9 3-2.4 3-3 3-3 3-2.7 3-2 3-1.2 3-.4 3 .8 3 5.4 3 6.4 3 2.8 3-1.9 3-3.5 3-2.9 3-1 3-.4 3 0 3 .5 3 1.4 3 3.5 3 3.7 3 1.5 3-2.3 3-4 3-2.7 3 .2 3 .7 3 .7 3 .5 3 0 3 .1 3 0 3-.1 3-.1 3-.1 3-.2 1-.1V676.3H1192Z" fill="url(#gp)"/>
<path d="M109.5 631.7l3-2.4 3-2.1 3-1.6 3-1.3 3-.8 3-.2 3 .1 3-.1 3-1.1 3-2.4 3-2.2 3-.5 3 2 3 3.4 3 3.6 3 2.8 3 2.7 3 2.6 3 1.7 3-.1 3-1.1 3-1.4 3-1.3 3-1.1 3-1.1 3-.9 3-.8 3 .7 3 1.5 3 1.3 3-.2 3-2.1 3-3 3-2.2 3 0 3 1.6 3 .7 3-2.1 3-4.3 3-4.8 3-4.2 3-3.8 3-3.4 3-1.7 3 1.1 3 3.4 3 4 3 4.3 3 4.4 3 3.6 3 2.7 3 1.6 3 .5 3-.8 3-1.8 3-2.1 3-1.6 3-.9 3-.5 3 1 3 2.2 3 2 3 .3 3-2.3 3-3.2 3-2 3 0 3 .2 3 .3 3 .3 3 0 3-.3 3-.5 3-.1 3 1.6 3 3.8 3 3.2 3 1.5 3 1.2 3 .7 2.3 .1V676.3H109.5Z" fill="#96D98D" fill-opacity="0.17"/>
<path d="M383.6 614.9l3-1.6 3-.8 3 .4 3 2 3 2.4 3 2.4 3 2.4 3 2.3 3 2.3 3 2.2 3 2 3 1.5 3 .2 3-.5 3-.9 3-.6 3-1 3-1.6 3-6.9 3-10.5 3-8 3-.1 3 3.1 3 3.8 3 3.4 3 2.6 3 2.5 3 2.1 3 1.2 3-1.6 3-3.1 3-1.9 3 .2 3 .7 3 1.1 3 1.8 3 2.4 3 2.6 3 2.7 3 2.5 3 2.3 3 2.1 3 1.9 3 1.6 3 .6 3-.5 3-1.3 3-3.6 3-6.1 3-5.4 3-1.6 3 1.1 3 1.6 3 .1 3-1.7 3-2 3-1.8 3-1.2 3-.8 3-.4 3 .3 3 2.5 3 4.2 3 4.1 3 2.1 3-.2 3-1.1 3-.6 3 1.4 3 3.7 3 2.8 3-.8 3-3 3-3.6 3-3.4 3-2.9 3-2.8 3-2.5 3-1.9 3 1.2 3 3.8 3 3.7 3 .9 3-1.1 3-1.6 3-.7 3 1.2 3 2.7 3 2.9 3 1.7 3-2.6 3-6.3 3-5.1 3 .7 3 5.9 3 6.5 3 2.7 3-.3 3-.3 3-.3 3 0 3 0 3-.1 3 .1 1.1 0V676.3H383.6Z" fill="#96D98D" fill-opacity="0.17"/>
<path d="M727.7 621.4l3 3.5 3 2.7 3 1.9 3 1 3 .4 3 0 3-.5 3-.9 3-1.7 3-1.8 3-1.2 3 0 3 .6 3 .4 3-.5 3-1 3-1.5 3-1.9 .4-.4V676.3H727.7Z" fill="#96D98D" fill-opacity="0.17"/>
<path d="M814.8 626.6l3 2.4 3 .6 3-.8 3-2.3 3-7 3-8.7 3-4.8 3 2.3 3 5.8 3 5.6 3 2.2 3 1.2 3 .9 3 .2 3-.5 3-1.1 3-1.5 3-2.2 .1-.1V676.3H814.8Z" fill="#96D98D" fill-opacity="0.17"/>
<path d="M901.6 620.5l3 1.9 3 1.2 3 .4 3-.4 3-1.2 3-1.5 3-1 3-.3 3 0 3 .4 3 .7 3 3.3 3 5.4 3 4.3 3-.2 3-4.7 3-4.7 3-.6 3 2.6 3 3.1 3 2.3 3 1 3 1.1 3 .7 3 .1 3-.5 3-.5 3-.5 3-.5 3-.5 3-.5 3-.5 3-.3 3-.2 3-.1 3-.4 3-1.8 3-2.6 3-2.4 3-1.3 3-.8 3-.4 3-.1 3 .2 3 .4 3 1.2 3 2.2 3 2.5 3 2.6 3 2.5 3 2.4 3 2.3 3 2.1 3 1.4 3-.2 3-1.3 3-1.7 3-1.9 3-2 3-1.9 3-1.8 3-1.6 3-1.5 3-1.3 3-.6 3 2.3 3 3.4 3 2.3 3-1.4 3-4.4 3-4.1 3-.4 3 3.7 3 4.9 3 3.3 3-.6 3-2.6 3-2.6 3-.9 3 .7 3 .8 3 .7 3 .8 3 .7 3 .7 3 .6 3-.3 3-2.4 3-2.5 3-.6 3 .1 3 0 3 .2 3 .1 3 .1 3 .2 3 .2 3 .9 3 1.3 3 1 3 .3 3-.1 3-.1 3 0 3 .1 3 .3 3 .3 3 .3 3 .8 3 1 3 .6 3-1.2 3-3.7 3-3.6 3-.9 3 .5 3 .7 3 .5 3-.3 3-1.1 3-1.1 3 0 3 1.8 3 3.3 3 3.2 3 2.2 3 1.7 3 1.2 3 .3 3-1.2 3-2.2 3-2.3 3-1.2 3-.1 3 .2 3 .1 3-.7 3-1.5 3-1.5 3-.8 3 .4 3 1.4 3 2.1 1.5 1.3V676.3H901.6Z" fill="#96D98D" fill-opacity="0.17"/>
<path d="M1354.5 630l3 .5 3 .2 3 .1 3-.1 3-.7 3-.6 3-.2 3 1.2 3 2.1 3 2 3 .8 3-.1 3-.8 3-1.5 .5-.3V676.3H1354.5Z" fill="#96D98D" fill-opacity="0.17"/>
<path d="M109.5 637.7l3-1.1 3-.4 3-.1 3 1.3 3 1.3 3-.8 3-5.1 3-5.2 3-.7 3 2.8 3 3.5 3 1.9 3-.1 3-.7 3-.4 3 .7 3 1.2 3 1.4 3 1.4 3 1.1 3 1.1 3 .9 3 .6 3 0 3-.7 3-.9 3-.5 3 .3 3 .5 3 .3 3-.6 3-3.6 3-4.9 3-3.7 3-.7 3 .8 3 .3 3-1.9 3-4.2 3-4.5 3-3 3-1.5 3-.9 3-.2 3 .5 3 1.1 3 1.7 3 2.7 3 3.2 3 3.3 3 2.8 3 1.9 3 .8 3 .3 3-.4 3-.7 3-1.4 3-1.5 3-1.3 3-.4 3 0 3 0 3-.8 3-2.4 3-3 3-2.6 3-1.3 3-.7 3 .2 3 1.4 3 2.7 3 3 3 2.1 3 1.2 3 1.1 3 1.1 3 .9 3 .9 3 .8 3 .5 3 .4 3-1.5 3-3.9 3-3.4 3-.5 3 .9 3 1.2 3 1 3 .3 3-.2 3-.5 3-1.5 3-4.4 3-4.2 3-.7 3 2.6 3 4.1 3 4 3 2.8 3 2.1 3 1.9 3 1.6 3 1.1 3 .4 3 0 3-.2 3-.4 3-1 3-1.9 3-4.9 3-10.8 3-10.7 3-4.1 3 2.3 3 3.9 3 3.9 3 2.4 3 1.7 3 1.6 3 1.2 3 .1 3-1.1 3-.8 3 1 3 3.8 3 4.9 3 4 3 1.3 3 0 3-.2 3-.2 3 .6 3 1.5 3 1.4 3 .2 3-1.6 3-2.2 3-2.3 3-1.7 3-1.6 3-1.5 3-1.3 3-.2 3 .6 3 0 3-1.3 3-1.7 3-1.8 3-1.9 3-2.4 3-2.5 3-2.1 3 .2 3 3.9 3 5 3 3.2 3 .5 3 .2 3 .2 3 .4 3 .4 3 .5 3 .6 3 .9 3 1.5 3 1.4 3-.1 3-6.3 3-8.5 3-5.1 3 1.7 3 4.9 3 5.2 3 2.7 3 .7 3 .6 3 .6 3 .7 3 .7 3 .8 3 .8 3-.5 3-5.4 3-6.1 3-2.2 3 4 3 6.8 3 4.9 3 .5 3-.5 3-.5 3 .3 3 1 3 1.3 3 .9 3-.1 3-1.7 3-2.3 3-1.7 3-.7 3-.6 3-.7 3-.6 3-.6 3-.6 3-.6 3 1.6 3 4.6 3 4.5 3 1.9 3 .9 3 .3 3-.4 3-1.1 3-2.1 3-2.3 3-1.9 3-.7 3 .1 3 0 3-1.2 3-3.5 3-4 3-2.5 3 2.2 3 5.5 3 5.2 3 1.2 3-3.7 3-5.5 3-3.4 3 1.5 3 5 3 5.8 3 3.8 3 1.2 3 0 3-1.3 3-2.9 3-5 3-7.1 2.9-8.8V676.3H109.5Z" fill="#FFCB7D" fill-opacity="0.17"/>
<path d="M879.2 628.3l3-7.5 3-5.6 3-3.1 3 .3 3 3.1 3 4.2 3 3.5 3 1.4 3 .7 3 .2 2.7-.7V676.3H879.2Z" fill="#FFCB7D" fill-opacity="0.17"/>
<path d="M933.4 623.1l3 4.9 3 3.8 3 2.5 3 .9 3-1.2 3-2 3-.5 3 1.6 3 1.8 3 1.8 3 1.7 3 1.5 3 1.4 3 1.2 3 .3 3-2.3 3-2.9 3-1.6 3 1.5 3 3.1 3 2.2 3-.5 3-1.5 3-1.6 3-1.3 3-.7 3-.7 3-.7 3-.7 3-1 3-1.2 3-.9 3-.4 3 .8 3 1.4 3 1.7 3 1.7 3 2 3 2.2 .7 .6V676.3H933.4Z" fill="#FFCB7D" fill-opacity="0.17"/>
<path d="M1073.4 642.9l3-1.1 3-1.5 3-1.7 3-2 3-2.4 3-2.6 3-2.8 .5-.5V676.3H1073.4Z" fill="#FFCB7D" fill-opacity="0.17"/>
<path d="M1127.6 642l3-2.2 3-1.7 3-1.1 3-.6 3 .1 3 .6 3 1.2 .5 .3V676.3H1127.6Z" fill="#FFCB7D" fill-opacity="0.17"/>
<path d="M1170.5 631.7l3 1.5 3 .8 3 .3 3-.1 3-1.7 3-2.1 3-1.3 3 1.1 3 2.6 3 2.5 3 .8 3-.4 3-.7 3 .1 3 1.3 3 1.9 3 1.8 3 1.1 3 .2 3 .1 3-.2 3-.3 3-.5 3-.5 3-.6 3-.9 3-1.2 3-1.3 3-1.5 3-3.1 3-3.8 3-2.5 3 .8 3 4.6 3 5.7 3 3.8 3 2.6 3 2 3 .9 3-.9 3-2.1 3-2.3 3-1.5 3-.3 3-.2 3-.3 3-.2 3-.3 3-.2 3-.3 3 .2 3 .9 3 1 3 .4 3-3.3 3-5.5 3-4 3 .8 3 2.3 3 2.3 3 2.3 3 2 3 2.1 3 1.9 3 1.7 3 .7 3-.1 3-.5 .6-.1V676.3H1170.5Z" fill="#FFCB7D" fill-opacity="0.17"/>
<path d="M109.5 635.5l3-1.9 3-1.5 3-1.1 3-.9 3-.5 3 0 3 .6 3 1.1 3 2 3 3.7 3 3.7 3 2.2 3 .3 3-.2 3-.2 3 .2 3 .8 3 1 3 .8 3 .1 3-2.9 3-4.3 3-3.1 3-.7 3-.4 3-.1 3 .2 3 .5 3 .7 3 .4 3-.2 3-1.4 3-1.9 3-1.6 3-.4 3 0 3-.3 3-1.4 3-2.4 3-2.7 3-2.4 3-1.6 3-1.4 3-1.4 3-2.1 3-4 3-4.2 3-3 3 1.3 3 6.2 3 6.7 3 2.8 3-1.2 3-2.3 3-1.1 3 1.6 3 2.8 3 2.8 3 1.6 3 0 3-.9 3-.4 3 .9 3 1.7 3 1.9 3 1.7 3 1.6 3 1.4 3 1.3 3 1 3 .4 3-.6 3-1.7 3-2.4 3-2.9 3-3.2 3-3 3-2.8 3-2.4 3-2 3-.6 3 3.7 3 4.9 3 2.5 3-.3 3-.8 3-.7 3 .1 3 1.1 3 1.4 3 .8 3-.1 3-.2 3-.3 3-.2 3-.3 3-.2 3-.2 3-.2 3-.9 3-1.3 3-1 3 0 3 1.3 3 1.8 3 1.5 3 .3 3-.8 3-1.3 3-2 3-2.5 3-2.3 3-1.4 3-.6 3-.5 3-.5 3-.6 3-.5 3-.5 3-.5 3 .6 3 2.5 3 3.2 3 3.1 3 3.9 3 4.3 3 3.6 3 1.5 3-3.8 3-4.3 3-.2 3 .5 3 .6 3 .6 3 .5 3 .6 3 .5 3 .5 3-.1 3-2.2 3-2.7 3-.8 3 .4 3 .5 3 .6 3 .5 3 .7 3 .6 3 .3 3-4.2 3-7 3-5 3-.7 3 .6 3 1.3 3 2.3 3 2.9 3 3.1 3 2.6 3 1.6 3-1 3-2.3 3-1.3 3 2.1 3 5 3 4.6 3 .5 3-7.1 3-9.5 3-5.8 3 2.6 3 7.7 3 8.1 3 3.8 3-.6 3-1.6 3-1.2 3 .5 3 2 3 2.3 3 1.8 3-1 3-7 3-7.8 3-2.7 3 4.8 3 7.6 3 5.2 3 0 3-.6 3-.5 3-.4 3-.2 3-.3 3-.2 3 0 3 1.9 3 2.8 3 1.3 3-1.5 3-3 3-3.5 3-2.8 3-1.8 3-1.5 3-1.1 1-.3V676.3H109.5Z" fill="#5BC8DC" fill-opacity="0.17"/>
<path d="M750.3 633.4l3 1.9 3 1.1 3 .3 3-.7 3-1.5 3-1.7 3-1.2 3-.7 3-.5 3-.3 3 0 3 1.6 3 2.3 3 1.8 3-.6 3-4 3-4.5 3-1.9 3 2.5 3 4.6 3 3.2 3-1.4 3-6.1 3-7.3 3-4.6 3-.7 3 0 3 1 3 1.9 3 3.1 3 3.1 3 2.3 3 .8 3 0 3-.1 3 1 3 2 3 2 3 2 3 2 3 2.2 3 2.2 3 1.9 3-.2 3-2.7 3-3.7 3-3.3 3-3.6 3-3.9 3-3.4 3-2 3-.2 3 1.2 3 2 3 3.4 3 4.1 3 2.9 3 1 3 .6 3 .6 3 .8 3 .9 3 .9 3 1 3 .9 3 1.4 3 1.5 3 1 3 0 3-.9 3-1.1 3-.5 3-.3 3-.2 3-.2 3-.3 3-.6 3-.5 3-.4 3 .3 3 .8 3 .7 3-.3 3-.5 3-.4 3-.5 3-.5 3-.4 3-.5 3-.4 3 .5 3 1.6 3 1.7 3 1.1 3 1.1 3 .4 3-.6 3-1.6 3-1.9 3-1.9 3-1.6 3-1.7 3-1.4 3-1 3 1.2 3 1.9 3 .4 3-.2 3-.4 3-.4 3-.6 3-.9 3-1.5 3-1.3 3-.6 3 2.7 3 5.4 3 4.9 3 2 3 1 3 .5 3-.2 3-.9 3-1.1 3-1 3-.6 3-.2 3-.1 3-.2 3-.5 3-.8 3-.9 3-.6 3-.1 3 .5 3 .4 3-.1 3-1.6 3-2 3-1.4 3 .5 3 2 3 1.9 3 .7 3-1.6 3-2.5 3-1.5 3 1 3 2.8 3 2.7 3 .9 3-.7 3-1.1 3-.5 3 1.1 3 2.1 3 2.1 3 1 3-1.2 3-2.3 3-2.2 3-.8 3-.3 3-.1 3-.1 3 .3 3 .6 3 .6 3 .2 3-2.1 3-3.2 3-2.5 3 .5 3 4.8 3 5.3 3 1.8 3-.8 3-1 3-.8 3-.5 3-.6 3-.4 3-.4 3-.1 3 .1 3 .2 3 .2 3 .4 3 .6 3 .6 3-.5 3-2 3-2.2 3-.7 3 2 3 3.8 3 3.2 3 .7 3-.2 3-.2 3-.4 3-.4 3-.5 3-.5 3-.7 3-1.4 3-1.4 3-1 3-.2 3 .2 3 .3 3 .1 3-.1 3-.1 3-.2 1.7-.1V676.3H750.3Z" fill="#5BC8DC" fill-opacity="0.17"/>
<path d="M109.5 734l3 1 3 .9 3 .7 3 .6 3 .6 3 .4 3 .1 3-.2 3-.8 3-2.7 3-3.7 3-2.5 3-1.7 3-1.5 3-1.1 3-.5 3-.3 3-.1 3-.1 3 .1 3 .2 3 .4 3 .6 3 1.6 3 3.3 3 3 3 .9 3 .2 3 .2 3 .2 3 .3 3 .2 3 .3 3 .2 3-1.4 3-3.9 3-3.4 3 0 3 5.1 3 6.5 3 3.2 3-.8 3-1.7 3-1.1 3 .9 3 1.9 3 1.8 3 .7 3-.1 3-.5 3-.9 3-1.3 3-2.1 3-2.2 3-1.4 3 .1 3 1 3 1.3 3 .9 3 .2 3-.1 3-.2 3 .4 3 3.3 3 4.5 3 2.3 3-3.8 3-7.6 3-4.4 3-3 3 .2 3 2.5 3 2.7 3 1.9 3 1.7 3 1.5 3 1.3 3 .9 3 .7 3 .3 3-.1 3-.6 3-1 3-1 3-.5 3 0 3 .2 3-.1 3-2.4 3-4.2 3-3.6 3-.1 3 3.5 3 4.1 3 1.3 3-2.4 3-3.5 3-1.9 3 1.3 3 2.2 3 2.4 3 1.7 3 .9 3 .7 3 .7 3 .7 3 .8 3 1 3 1.2 3 2.4 3 5 3 5 3 2.5 3-2.5 3-5.4 3-4 3-.5 3 .4 3 .3 3-.9 3-2.3 3-2.6 3-2.6 3-2.3 3-2.1 3-1.9 3-1.4 3-.5 3 2.8 3 3.9 3 1.8 3-.2 3-.4 3-.5 3-.6 3-.7 3-.8 3-.8 3 .2 3 3.3 3 4.1 3 1.6 3-1.9 3-3.2 3-2.4 3-.3 3-.1 3 .3 3 1 3 1.2 3 1.3 3 1.3 3 1.2 3 1.2 3 1.1 3 .9 3 .1 3-1.3 3-1.5 3-.8 3-.2 3-.1 3-.3 3-1.2 3-2.2 3-2.1 3-.6 3 1.8 3 2.4 3 1.1 3-1.3 3-2 3-2.1 3-1.6 3-1.2 3-1 3-.9 3-.7 3-.1 3 .3 3 .7 3 1.9 3 6.2 3 7 3 3.3 3-2.6 3-5.3 3-3.9 3 .7 3 3.1 3 2.8 3-.5 3-2.5 3-3 3-2.8 3-1.9 3-1.5 3-1.4 3-.9 3-.4 3-.2 3 .1 3 .3 3 .6 3 .7 3 1 3 1.3 3 1.8 3 1.8 3 1 3 .4 3-.1 3-.4 3-.6 3-1.5 3-1.6 3-.9 3 .6 3 1.2 3 1.3 3 .6 3 .2 3-.1 3-.2 3-1.6 3-3.6 3-3.2 3-.2 3 1.9 3 2 3 2.1 3 2 3 2.2 3 2.1 3 2 3 1.4 3 .7 3 .3 3 .5 3 .5 3 .2 3 .1 3-1.9 3-5.7 3-5.9 3-2.3 3-.7 3-.5 3-.6 3-.8 3-1.2 3-1.1 3-.8 3 .5 3 2.1 3 2.3 3 1.5 3 .7 3 .4 3 .7 3 2.4 3 5.8 3 5.9 3 2.6 3-.9 3-1.5 3-1.8 3-2.1 3-2.4 3-2.3 3-2.1 3-.9 3 0 3-.1 3-1.3 3-4.1 3-4.8 3-3.1 3 .2 3 .7 3 .8 3 .9 3 1 3 1.1 3 1 3 .5 3-.1 3-.3 3 .1 3 1.4 3 2.4 3 2.3 3 .7 3-1.9 3-2.9 3-2 3 .5 3 1.8 3 1.8 3 0 3-2.3 3-3.4 3-2.9 3-.8 3 .3 3 .5 3 .2 3-.9 3-1.4 3-1 3 .6 3 3.9 3 4.5 3 2 3-.4 3-1 3-.4 3 .7 3 1 3 .9 3 .4 3 .4 3 .2 3 0 3-.1 3-.7 3-.9 3-1.2 3-1.5 3-2.5 3-2.7 3-1.6 3 .2 3 .9 3 1.3 3 1.5 3 1.7 3 1.8 3 1.6 3 .9 3 .3 3 .1 3 .4 3 1 3 1.3 3 1.2 3 .6 3 .3 3 .2 3 .1 3 0 3-.1 3-.4 3-.7 3-2.9 3-4.1 3-3.2 3-.9 3 .2 3 .8 3 1.2 3 2.3 3 2.7 3 1.6 3-.2 3-.4 3-.6 3-.6 3-.6 3-.7 3-.7 3-.6 3-.3 3-.2 3-.2 3 .3 3 1.1 3 1 3 0 3-1.5 3-2.2 3-1.8 3-.4 3 .7 3 .8 3 .3 3-1.5 3-2.9 3-1.9 3 1.1 3 2.1 3 2.1 3 2 3 1.7 3 1.8 3 1.7 3 1.6 3 1.3 3 .8 3 .4 3-.9 3-4.1 3-4.2 3-.9 3 1.1 3 1.2 3 1.2 3 1.1 3 1 3 .9 3 .8 3-.7 3-4.3 3-4.6 3-1.1 3 2.9 3 4.1 3 2.2 3-.6 3-1.3 3-1.1 3-.4 3 0 3 .1 3 0 3-.2 3-.2 3-.2 3-.3 .5-.1V676.3H109.5Z" fill="#73BF69" fill-opacity="0.08"/>
<path d="M109.5 710.8l3-1.3 3-.6 3-.1 3 .4 3 .9 3 2.6 3 4 3 3.4 3 .9 3-1.6 3-2.6 3-2.2 3-.8 3-.4 3-.3 3-.9 3-2.2 3-2.9 3-2.4 3-.8 3 1.2 3 1.8 3 1.3 3 0 3 0 3 0 3 0 3 0 3 0 3 0 3 .3 3 3 3 4.4 3 3.3 3 .2 3-1.6 3-.9 3 2.1 3 3.7 3 3.9 3 3.2 3 2.3 3 2.3 3 2.2 3 2.1 3 1.8 3 1.4 3 .6 3-5.5 3-9.7 3-7.2 3-1.5 3-1 3-.8 3-.7 3-.6 3-.5 3-.4 3-.4 3 .4 3 1.3 3 1.9 3 2.3 3 5.3 3 6.3 3 3.2 3-.9 3-1.2 3-1.4 3-1.4 3-1.6 3-1.5 3-1.5 3-1.4 3-1 3-1 3-.9 3-.7 3-.6 3-.3 3-.1 3 1.4 3 3.4 3 3.1 3 .6 3-1.9 3-2.6 3-1.6 3 .8 3 1.4 3 1.6 3 1.8 3 2 3 2.1 3 1.9 3 .3 3-3.7 3-4.8 3-2.5 3 .3 3 1.3 3 .5 3-2.1 3-4.4 3-4.3 3-1.7 3 .4 3 1.6 3 2.6 3 4.1 3 6.3 3 5.8 3 2.6 3 0 3-.4 3-.7 3-.9 3-1.1 3-1.1 3-.9 3 .1 3 1.1 3 .8 3-.9 3-1.5 3-1.6 3-1.5 3-1.4 3-1.2 3-1.2 3-1.3 3-1.8 3-2.3 3-2.4 3-2.1 3-1.4 3-.5 3 .4 3 1.8 3 3.7 3 4 3 2.4 3 1.2 3 1.3 3 1.2 3 1.3 3 1.2 3 1.3 3 1.3 3 2.2 3 2.6 3 1.6 3-.5 3-2.5 3-3.3 3-2.6 3-1.4 3-1.1 3-1.2 3-1.7 3-2.4 3-2.7 3-2.6 3-1.9 3-1.2 3-.5 3 1.2 3 8.4 3 10.7 3 6.2 3-1.5 3-3.4 3-3.6 3-2.6 3-1.6 3-1.6 3-1.4 3-1.1 3-.8 3-.3 3-.1 3 1.2 3 5.2 3 5.1 3 .2 3-2.7 3-2.8 3-2.7 3-2.8 3-2.7 3-2.8 3-2.6 3-1.1 3 .5 3 1.2 3 1.1 3 .9 3 1 3 1.1 3 1.1 3 1.2 3 1.4 3 1.4 3 2.8 3 5.4 3 4.3 3-1.2 3-8 3-8.2 3-2.3 3-.9 3-.7 3-.4 3 0 3 0 3 .2 3 .6 3 1.2 3 1.5 3 1.7 3 1.7 3 2.1 3 2.3 3 2 3 .2 3-3.4 3-4.1 3-1.7 3 3.1 3 5.4 3 3.5 3-1.1 3-2.3 3-2.7 3-2.3 3-1.7 3-1.5 3-.9 3-.3 3 3.9 3 8.5 2.9 10.7V676.3H109.5Z" fill="#F2CC0C" fill-opacity="0.15"/>
<path d="M857.7 717.7l3 2.5 3 1.8 3 1.1 3 .6 3-1.1 3-2.1 3-1.1 3 2.2 3 5.7 3 5.6 3 1.9 3-2.2 3-3.7 3-3.3 3-1.3 3 .2 3 .3 3-.2 3-2.1 3-3.4 3-3.2 3-.7 3 3.2 3 4.4 3 2.6 3-1.9 3-5.2 3-5.2 3-2.3 3 1.6 3 2.9 3 1.7 3-1.2 3-1.9 3-1.8 3-1.6 3-1.3 3-1.2 3-1.1 3-.5 3 1.2 3 2 3 1.2 3-.9 3-2.4 3-2.2 3-.5 3 .4 3 .7 3 .9 3 1.3 3 1.5 3 1.4 3 1.3 3 1.2 3 1 3 .9 3 .9 3 .6 3 .2 3-.3 3-1.7 3-3.1 3-2.9 3-1.7 3-1.4 3-1 3-.2 3 .3 3 .3 3 .3 3 .4 3 .3 3 .4 3 .4 3 1.1 3 3.1 3 3.7 3 2.5 3 .3 3-1.3 3-2.8 2.4-3V676.3H857.7Z" fill="#F2CC0C" fill-opacity="0.15"/>
<path d="M1127.6 711.6l3 .2 3 0 3-.1 3-.1 3-.6 3-.8 3-.3 3 .3 3 .7 3 .8 3 .9 3 1 3 1.1 3 1 3 .6 3 .3 3 .2 3 0 3-.1 3-.2 3-.3 3-.7 3-1.4 3-1.5 3-1 3-.1 3 .3 3 0 3-.7 3-.9 3-1 3-.8 3-.5 3-.5 3-.5 3-.5 3-.5 3-.5 3-.5 3 .3 3 2.2 3 3.2 3 2.8 3 2.7 3 2.8 3 2.5 3 1.7 3-2.1 3-4.4 3-3.8 3-2.3 3-2.4 3-1.5 3 0 3 .4 3 .4 3 .5 3 .5 3 .5 3 .6 3 .4 3 .2 3 0 3-.1 3-.1 3-.3 3-.3 3-.2 3 .8 3 2.6 3 2.5 3 .9 3-.6 3-.9 3-.9 3-.3 3-.2 3-.2 3-.5 3-1.4 3-2 3-1.8 3-1 3-.4 3 .1 3 .5 3 1 3 1.4 3 1.9 2.4 1.9V676.3H1127.6Z" fill="#F2CC0C" fill-opacity="0.15"/>
<path d="M109.5 709.9l3 3.6 3 3.1 3 2.4 3 1.3 3-.2 3-.8 3-1 3-1.1 3-1.3 3-1.3 3-1.3 3-1.3 3-1.2 3-1.3 3-1.2 3-1.3 3-1.2 3-1 3-.7 3-.1 3 1.5 3 2.7 3 2.3 3 1.3 3 1.1 3 .9 3 .6 3-.1 3-.2 3 .1 3 .9 3 1.4 3 1.6 3 1.2 3 .2 3-.7 3 0 3 1.5 3 2.6 3 2.7 3 2.4 3 2.1 3 2 3 1.9 3 2.3 3 3 3 3.1 3 2.5 3-1.5 3-6.7 3-5.6 3-.7 3 .9 3 1.1 3 .1 3-1.6 3-2.8 3-2.5 3-1.1 3 .2 3 .3 3 .2 3 .3 3 .2 3 .3 3 .2 3-1.6 3-4.6 3-4.2 3-.5 3 .6 3 .6 3 .7 3 .7 3 .8 3 .7 3 .8 3 2.8 3 5.5 3 5.3 3 1.9 3-3.1 3-4.8 3-2.4 3 .3 3 .8 3 .7 3-.1 3-1.4 3-1.7 3-1.1 3 .1 3 .4 3 .5 3 .5 3 .3 3 .3 3 .3 3 .1 3-1.5 3-2.4 3-1.3 3 .6 3 .7 3 .7 3 .8 3 .7 3 .8 3 .7 3 1.1 3 2.1 3 2.2 3 1.7 3 1.1 3 .7 3 .5 3 .3 3 .1 3-.3 3-.6 3-1.2 3-1.7 3-2.1 3-2.2 3-3.2 3-3.6 3-3 3-1.3 3 2.2 3 3.3 3 1.5 3-.5 3-.6 3-.7 3-.7 3-1.3 3-1.6 3-.8 3 .9 3 2.1 3 2.6 3 2.6 3 2.4 3 2.6 3 2.5 3 .7 3-4.3 3-5.1 3-1.4 3 4.8 3 6.8 3 3.7 3-1.5 3-2.7 3-2.8 3-2.2 3-1.3 3-1.1 3-.9 3-.5 3 .9 3 1.5 3 1 3-1.6 3-4.3 3-4.1 3-.5 3 6.3 3 8.5 3 5.1 3-2.3 3-7.1 3-7.5 3-3.6 3 .6 3 1.6 3 1.2 3-.6 3-2.5 3-2.9 3-2.2 3 .8 3 6.4 3 7.1 3 2.4 3-3.9 3-6.2 3-4.2 3 .1 3 .6 3 .6 3 .3 3 .2 3 .2 3 .2 3 .3 3 .4 3 .5 3 .6 3 .7 3 .8 3 .9 3 1 3 1.2 3 1.7 3 1.3 3-.4 3-3.2 3-3.7 3-1.7 3-1.2 3-1.1 3-.9 3-.7 3-.5 3-.2 3 .1 3 1 3 1.9 3 1.8 3 .7 3 .2 3-.1 3-.3 3-.6 3-1.4 3-1.5 3-.9 3 2.6 3 5.6 3 4.7 3 .4 3-4.6 3-5.6 3-2.3 3 3.7 3 7.2 3 6.9 3 3.1 3 .5 3-.3 3-1.5 3-3 3-4.5 3-3.9 3-1.3 3-.3 3 .1 3 .1 3 .3 3 .5 3 .6 3 .5 3-2.5 3-6.8 3-5.6 3 .2 3 2.2 3 2.7 3 2.9 3 3.1 3 3.4 3 3.4 3 2.9 3 1.5 3-.5 3-1.6 3-2.5 3-3.9 3-3.9 3-1.9 3-.7 3-.7 3-.7 3-.7 3-.7 3-.7 3-.7 3-.9 3-1.7 3-1.8 3-1.1 3 .2 3 1 3 .6 3-.4 3-1.2 3-1.3 3-.5 3 1.3 3 2.6 3 2.3 3 .6 3-.9 3-1.2 3-.5 3 .6 3 .7 3 .7 3 .8 3 .9 3 1 3 .9 3 .9 3 .7 3 .5 3 .1 3-1.3 3-2.8 3-2.8 3-1.4 3-.6 3-.1 3 .6 3 2.5 3 3.8 3 2.7 3-.3 3-2.3 3-1.5 3 .7 3 .8 3 .7 3 .8 3 .7 3 .7 3 .8 3 .6 3 .1 3-2.3 3-3.5 3-3 3-1.8 3-1.7 3-1.1 3 0 3 .6 3 .9 3 .8 3 .3 3 .2 3 .2 3 .3 3 .7 3 1.2 3 1.1 3 .6 3-.4 3-.5 3-.2 3 .7 3 1.2 3 1.2 3 .5 3 .3 3 .2 3 .2 3 .2 3 0 3 0 3-.2 3-1.1 3-2 3-1.7 3-.5 3 .5 3 .5 3-.1 3-1.7 3-2.5 3-2 3-.3 3 2.1 3 3.2 3 2.1 3 .5 3 .3 3 .2 3 0 3-.2 3-.4 3-.2 3 .4 3 2 3 2.3 3 1.3 3-2.4 3-5.5 3-4.9 3-1.2 3 .1 3 .7 3 1.2 3 2.3 3 3.1 3 2.8 3 1.2 3-1.5 3-3.1 3-2.7 3-.8 3-.3 3 .1 3 .3 3 1.2 3 1.8 3 1.3 3-.1 3-2.2 3-3 3-2 3-.4 3-.1 3 .1 3 .3 3 .5 3 .5 3 .5 3 .8 3 1 3 1.1 3 .7 3 0 3-.5 3-.4 3 .2 3 .6 3 1 3 1.4 .5 .2V676.3H109.5Z" fill="#8AB8FF" fill-opacity="0.12"/>
<path d="M109.5 712.5l3 0 3 .2 3 .5 3 .7 3 1.2 3 1.5 3 1.7 3 1.5 3 1.3 3 1 3 .6 3 .2 3-.9 3-2.7 3-2.9 3-1.5 3-.8 3-.6 3-.6 3-.5 3-.4 3-.2 3-.1 3 .6 3 2.1 3 2.2 3 .7 3-1.5 3-2.2 3-1.1 3 1.1 3 2.3 3 2.6 3 1.7 3-.6 3-2.1 3-1.2 3 1.7 3 3.8 3 4.3 3 3.7 3 3.2 3 2.9 3 1.5 3-1 3-4 3-4.8 3-3.5 3-2.7 3-2.3 3-1.3 3 .1 3 1.3 3 1.6 3 1.1 3 .1 3-.2 3-.3 3-.4 3-1 3-1.5 3-1.3 3-.4 3 2.6 3 4 3 2.6 3 .2 3-.4 3-.4 3-.1 3 .4 3 .7 3 .6 3-.3 3-2.5 3-3.2 3-2.5 3-1.3 3-.9 3-.5 2.3 0V676.3H109.5Z" fill="#FF780A" fill-opacity="0.125"/>
<path d="M383.6 728l3 0 3-.2 3-.4 3-.8 3-1.3 3-1.5 3-1.1 3 0 3 .9 3 .9 3-.1 3-2.8 3-4.6 3-3.8 3-1.2 3 .6 3 1.9 3 2.8 3 6.8 3 9.1 3 6.4 3-.5 3-2.4 3-2.6 3-2.7 3-2.7 3-2.9 3-2.8 3-2.3 3 1.3 3 3.6 3 2.3 3-.2 3-.5 3-.8 3-1.5 3-2 3-2 3-2 3-2 3-1.9 3-1.9 3-1.9 3-1.9 3-.9 3-.1 3 .7 3 2.6 3 5 3 4.3 3 1.2 3-.5 3-.8 3 .3 3 1.3 3 1.2 3 1.3 3 1.2 3 1.3 3 1.2 3 1.2 3-1.8 3-4.6 3-4.6 3-2.1 3 1.9 3 3.4 3 1.9 3-1.8 3-3.3 3-3.5 3-2.5 3-1.3 3-.4 3 .4 3 4.6 3 11 3 11.1 3 4.4 3-4.5 3-8.5 3-7.1 3-1.2 3 1.3 3 1.5 3 .4 3-.4 3-.6 3-.9 3-1.4 .2-.1V676.3H383.6Z" fill="#FF780A" fill-opacity="0.125"/>
<path d="M718.2 722l3 3.9 3 2.3 3 .3 3-2.2 3-5.1 3-4.9 3-1.5 3-.5 3-.3 3 0 3 .4 3 .5 3 .5 3 .5 3 .3 3 .2 3 .2 3 .5 3 1.6 3 2.1 3 1.7 3 0 3-2.6 3-2.9 3-1.1 3 1.9 3 3.2 3 2.8 3 1.2 3 .3 3-.2 3-.4 3-1.6 3-3.5 3-3.5 3-1.9 3 4.1 3 8 3 5.7 3-1.1 3-4 3-4.1 3-1.8 3-.7 3-.4 3-.1 3 .6 3 1.3 3 1.5 3 1.2 3 .4 3-.2 3-.2 3 .4 3 1.8 3 2.3 3 1.5 3-.5 3-2.5 3-3.1 3-2.2 3-.9 3-.7 3-.3 3 .2 3 .8 3 .9 3 .7 3 .2 3-.1 3-.5 3-.8 3-3.3 3-4.7 3-3.8 3-.2 3 4.4 3 5 3 1 3-1.9 3-2.2 3-2 3-1.6 3-1.7 3-1.4 3-1 3 .1 3 1 3 1.1 3 .4 3-.3 3-.4 3-.2 3 .2 3 .6 3 .8 3 1.1 3 2 3 2.7 3 2.6 3 1.6 3 .8 3 0 3-1.1 3-1.9 3-2 3-2.1 3-1.9 3-1.8 3-1.7 3-1.7 3-1.1 3-.6 3 0 3 .3 3 .6 3 .7 3 .8 3 .9 3 1 3 1 3 1 3 1.3 3 1.5 3 1.5 3 .7 3-2.1 3-3.3 3-2.3 3 .8 3 2.6 3 2.7 3 .6 3-.7 3-1 3-.7 3 .1 3 .6 3 .7 3 .3 3-.6 3-1.3 3-1.2 3-.5 3-.3 3 0 3 .2 3 .7 3 1.2 3 1.1 3 .7 3 .4 3 .3 3 .1 3 0 3-.2 3-.3 3-.4 3-.9 3-1.3 3-1 3-.2 3 .4 3 .5 3-.1 3-.4 3-.4 3-.5 3-.4 3-.5 3-.6 3-.5 3 .3 3 1.8 3 2.2 3 .9 3-.2 3-.5 3-.3 3 .4 3 1.6 3 1.7 3 .7 3-1.3 3-2.6 3-2.7 3-1.8 3-1.4 3-1 3-.5 3 1 3 2.3 3 2.4 3 1.2 3-.7 3-1.5 3-1.1 3 .1 3 .9 3 1 3 .5 3-.2 3-.4 3-.3 3 .2 3 1.2 3 1.6 3 1.1 3 .1 3-.7 3-.8 3-.1 3 .5 3 .6 3 .5 3 .2 3 0 3-.3 3-.7 3-1.3 3-1.9 3-1.8 3-1.3 3-.9 3-.8 3-.5 .8-.1V676.3H718.2Z" fill="#FF780A" fill-opacity="0.125"/>
<path d="M109.5 614.2l3-1.1 3-.9 3-.7 3-.6 3-.5 3-.5 3-.2 3 .3 3 .9 3 1.7 3 2 3 2.2 3 2.3 3 2.5 3 2.4 3 2.1 3 .8 3-.5 3-1.3 3-2.7 3-4.8 3-4 3-.7 3 .5 3 .6 3 .6 3 .4 3 .3 3 .2 3 .3 3 .1 3-.7 3-1.2 3-.8 3 1.3 3 3.7 3 3.3 3 .5 3-2.8 3-5.3 2.8-7.1" fill="none" stroke="#705DA0" stroke-width="2.4" stroke-linejoin="round" stroke-linecap="round"/>
<path d="M286.5 609.4l3 .2 3 0 3-.3 3-.4 3-1.5 3-1.8 3-1 3 2.4 3 5.2 3 2.4 3 1.5 3 .6 3-.6 3-1.8 3-2.5 3-2.6 3-1.9 3-.9 3-.5 3-.4 3 0 3 .3 3 .5 3 .6 3 .5 3 .4 3 .3 3 .1 3 .2 3 .9 3 4.1 3 3.9 3 .3 3-2.8 3-3.4 3-1.1 3 1.7 3 2.8 3 2.2 3-.1 3-2.1 3-2.6 3-2.4 3-1.4 3-.9 3-.8 3-.8 3-.9 3-1 3-1.2 3-2.1 3-4.1 3-4.4 3-2.6 3 2.7 3 7.2 3 6.9 3 2.1 3-2.3 3-3.3 3-1.4 3 2.7 3 4.5 3 3.6 3 .3 3-1 3-1.3 3-1 3-.4 3-.4 3-.3 3 .1 3 .5 3 1 3 1.2 3 .9 3 .8 3 .6 3 .3 3-.1 3-1.2 3-1.4 3-.7 3 .1 3 .2 3 .2 3 0 3-.3 3-.5 3-.8 3-3.3 3-4.3 3-2.4 3 .7 3 1.4 3 1.5 3 1.3 3 .9 3 .8 3 .7 3 .5 3 .1 3-.2 3 0 3 .9 3 1.9 3 1.8 3 .5 3-2 3-2.7 3-1.4 3 1.4 3 2.9 3 3.1 3 2.2 3 1.5 3 1.1 3 .3 3-1.2 3-2.6 3-3.3 3-3.2 3-2.8 3-2.5 3-2.2 3-1.6 3 2.2 3 5 3 3.8 3-.1 3-1.7 3-1.5 3 .6 3 1.5 3 1.5 3 1.5 3 1.4 3 1.3 3 1.2 3 1.3 3 1 3 .3 3-.3 3-.6 3-2.6 3-5.3 3-3.4 3-.3 3 .2 3 .6 3 1.1 3 1.4 3 1.6 3 1.4 3 1.2 3 .7 3 .4 3 .2 3-1 3-2.4 3-1.7 3 .7 3 2.6 3 3.1 3 2.3 3 1.6 3 1.3 3 .5 3-.6 3-1.3 3-1.8 3-2.3 3-2.7 3-3.1 3-3.2 3-2.8 3-2.1 3-1.7 3-1.1 3-.7 3 .3 3 1.3 3 2.2 3 3.1 3 4.4 3 4.1 3 2.5 3 1.6 3 1.5 3 1.4 3 1.3 3 1.2 3 1 3 .8 3-.4 3-2.5 3-3.9 1.7-2.6" fill="none" stroke="#705DA0" stroke-width="2.4" stroke-linejoin="round" stroke-linecap="round"/>
<path d="M901.6 597.3l3 1.3 3 1.4 3 1.7 3 1.9 3 2.2 3 2.3 3 2.5 3 2.7 3 2.8 3 2.8 3 2.4 3 2.3 3 2.1 3 2 .9 .6" fill="none" stroke="#705DA0" stroke-width="2.4" stroke-linejoin="round" stroke-linecap="round"/>
<path d="M966 618l3 .6 3 .1 3-.3 3-.7 3-2.1 3-2.7 3-1.7 3 .7 3 2.7 3 2.6 3 .9 3 .1 3-.4 3-1 1-.6" fill="none" stroke="#705DA0" stroke-width="2.4" stroke-linejoin="round" stroke-linecap="round"/>
<path d="M1031.3 624.8l3-2.1 3-2.2 3-2.2 .5-.3" fill="none" stroke="#705DA0" stroke-width="2.4" stroke-linejoin="round" stroke-linecap="round"/>
<path d="M1073.4 613.7l3-2.2 3-1.4 3-.2 3 1.1 3 1.6 3 2 3 2.2 3 2.4 3 3.1 3 3 3 2.3 3 .1 3-2.5 3-4 1-1.5" fill="none" stroke="#705DA0" stroke-width="2.4" stroke-linejoin="round" stroke-linecap="round"/>
<path d="M1149.1 610.2l3-.5 3-.5 3-.5 1.3-.2" fill="none" stroke="#705DA0" stroke-width="2.4" stroke-linejoin="round" stroke-linecap="round"/>
<path d="M1192 622.3l3-3.5 3-2.9 3-2.1 3-1.3 3-.9 3-.4 3 .1 3 .6 3 1.7 3 2.2 3 1.4 3 .5 3 .1 3-.1 3-.5 3-1.3 3-1.3 3-.3 3 1.8 3 3 3 2.6 3 .6 3-1 3-1.4 3-.6 3 1.2 3 2.7 3 2.4 3 .6 3-.6 3-1.3 3-1.9 3-2.4 3-3 3-3 3-2.7 3-2 3-1.2 3-.4 3 .8 3 5.4 3 6.4 3 2.8 3-1.9 3-3.5 3-2.9 3-1 3-.4 3 0 3 .5 3 1.4 3 3.5 3 3.7 3 1.5 3-2.3 3-4 3-2.7 3 .2 3 .7 3 .7 3 .5 3 0 3 .1 3 0 3-.1 3-.1 3-.1 3-.2 1-.1" fill="none" stroke="#705DA0" stroke-width="2.4" stroke-linejoin="round" stroke-linecap="round"/>
<path d="M109.5 631.7l3-2.4 3-2.1 3-1.6 3-1.3 3-.8 3-.2 3 .1 3-.1 3-1.1 3-2.4 3-2.2 3-.5 3 2 3 3.4 3 3.6 3 2.8 3 2.7 3 2.6 3 1.7 3-.1 3-1.1 3-1.4 3-1.3 3-1.1 3-1.1 3-.9 3-.8 3 .7 3 1.5 3 1.3 3-.2 3-2.1 3-3 3-2.2 3 0 3 1.6 3 .7 3-2.1 3-4.3 3-4.8 3-4.2 3-3.8 3-3.4 3-1.7 3 1.1 3 3.4 3 4 3 4.3 3 4.4 3 3.6 3 2.7 3 1.6 3 .5 3-.8 3-1.8 3-2.1 3-1.6 3-.9 3-.5 3 1 3 2.2 3 2 3 .3 3-2.3 3-3.2 3-2 3 0 3 .2 3 .3 3 .3 3 0 3-.3 3-.5 3-.1 3 1.6 3 3.8 3 3.2 3 1.5 3 1.2 3 .7 2.3 .1" fill="none" stroke="#96D98D" stroke-width="2.4" stroke-linejoin="round" stroke-linecap="round"/>
<path d="M383.6 614.9l3-1.6 3-.8 3 .4 3 2 3 2.4 3 2.4 3 2.4 3 2.3 3 2.3 3 2.2 3 2 3 1.5 3 .2 3-.5 3-.9 3-.6 3-1 3-1.6 3-6.9 3-10.5 3-8 3-.1 3 3.1 3 3.8 3 3.4 3 2.6 3 2.5 3 2.1 3 1.2 3-1.6 3-3.1 3-1.9 3 .2 3 .7 3 1.1 3 1.8 3 2.4 3 2.6 3 2.7 3 2.5 3 2.3 3 2.1 3 1.9 3 1.6 3 .6 3-.5 3-1.3 3-3.6 3-6.1 3-5.4 3-1.6 3 1.1 3 1.6 3 .1 3-1.7 3-2 3-1.8 3-1.2 3-.8 3-.4 3 .3 3 2.5 3 4.2 3 4.1 3 2.1 3-.2 3-1.1 3-.6 3 1.4 3 3.7 3 2.8 3-.8 3-3 3-3.6 3-3.4 3-2.9 3-2.8 3-2.5 3-1.9 3 1.2 3 3.8 3 3.7 3 .9 3-1.1 3-1.6 3-.7 3 1.2 3 2.7 3 2.9 3 1.7 3-2.6 3-6.3 3-5.1 3 .7 3 5.9 3 6.5 3 2.7 3-.3 3-.3 3-.3 3 0 3 0 3-.1 3 .1 1.1 0" fill="none" stroke="#96D98D" stroke-width="2.4" stroke-linejoin="round" stroke-linecap="round"/>
<path d="M727.7 621.4l3 3.5 3 2.7 3 1.9 3 1 3 .4 3 0 3-.5 3-.9 3-1.7 3-1.8 3-1.2 3 0 3 .6 3 .4 3-.5 3-1 3-1.5 3-1.9 .4-.4" fill="none" stroke="#96D98D" stroke-width="2.4" stroke-linejoin="round" stroke-linecap="round"/>
<path d="M814.8 626.6l3 2.4 3 .6 3-.8 3-2.3 3-7 3-8.7 3-4.8 3 2.3 3 5.8 3 5.6 3 2.2 3 1.2 3 .9 3 .2 3-.5 3-1.1 3-1.5 3-2.2 .1-.1" fill="none" stroke="#96D98D" stroke-width="2.4" stroke-linejoin="round" stroke-linecap="round"/>
<path d="M901.6 620.5l3 1.9 3 1.2 3 .4 3-.4 3-1.2 3-1.5 3-1 3-.3 3 0 3 .4 3 .7 3 3.3 3 5.4 3 4.3 3-.2 3-4.7 3-4.7 3-.6 3 2.6 3 3.1 3 2.3 3 1 3 1.1 3 .7 3 .1 3-.5 3-.5 3-.5 3-.5 3-.5 3-.5 3-.5 3-.3 3-.2 3-.1 3-.4 3-1.8 3-2.6 3-2.4 3-1.3 3-.8 3-.4 3-.1 3 .2 3 .4 3 1.2 3 2.2 3 2.5 3 2.6 3 2.5 3 2.4 3 2.3 3 2.1 3 1.4 3-.2 3-1.3 3-1.7 3-1.9 3-2 3-1.9 3-1.8 3-1.6 3-1.5 3-1.3 3-.6 3 2.3 3 3.4 3 2.3 3-1.4 3-4.4 3-4.1 3-.4 3 3.7 3 4.9 3 3.3 3-.6 3-2.6 3-2.6 3-.9 3 .7 3 .8 3 .7 3 .8 3 .7 3 .7 3 .6 3-.3 3-2.4 3-2.5 3-.6 3 .1 3 0 3 .2 3 .1 3 .1 3 .2 3 .2 3 .9 3 1.3 3 1 3 .3 3-.1 3-.1 3 0 3 .1 3 .3 3 .3 3 .3 3 .8 3 1 3 .6 3-1.2 3-3.7 3-3.6 3-.9 3 .5 3 .7 3 .5 3-.3 3-1.1 3-1.1 3 0 3 1.8 3 3.3 3 3.2 3 2.2 3 1.7 3 1.2 3 .3 3-1.2 3-2.2 3-2.3 3-1.2 3-.1 3 .2 3 .1 3-.7 3-1.5 3-1.5 3-.8 3 .4 3 1.4 3 2.1 1.5 1.3" fill="none" stroke="#96D98D" stroke-width="2.4" stroke-linejoin="round" stroke-linecap="round"/>
<path d="M1354.5 630l3 .5 3 .2 3 .1 3-.1 3-.7 3-.6 3-.2 3 1.2 3 2.1 3 2 3 .8 3-.1 3-.8 3-1.5 .5-.3" fill="none" stroke="#96D98D" stroke-width="2.4" stroke-linejoin="round" stroke-linecap="round"/>
<path d="M109.5 637.7l3-1.1 3-.4 3-.1 3 1.3 3 1.3 3-.8 3-5.1 3-5.2 3-.7 3 2.8 3 3.5 3 1.9 3-.1 3-.7 3-.4 3 .7 3 1.2 3 1.4 3 1.4 3 1.1 3 1.1 3 .9 3 .6 3 0 3-.7 3-.9 3-.5 3 .3 3 .5 3 .3 3-.6 3-3.6 3-4.9 3-3.7 3-.7 3 .8 3 .3 3-1.9 3-4.2 3-4.5 3-3 3-1.5 3-.9 3-.2 3 .5 3 1.1 3 1.7 3 2.7 3 3.2 3 3.3 3 2.8 3 1.9 3 .8 3 .3 3-.4 3-.7 3-1.4 3-1.5 3-1.3 3-.4 3 0 3 0 3-.8 3-2.4 3-3 3-2.6 3-1.3 3-.7 3 .2 3 1.4 3 2.7 3 3 3 2.1 3 1.2 3 1.1 3 1.1 3 .9 3 .9 3 .8 3 .5 3 .4 3-1.5 3-3.9 3-3.4 3-.5 3 .9 3 1.2 3 1 3 .3 3-.2 3-.5 3-1.5 3-4.4 3-4.2 3-.7 3 2.6 3 4.1 3 4 3 2.8 3 2.1 3 1.9 3 1.6 3 1.1 3 .4 3 0 3-.2 3-.4 3-1 3-1.9 3-4.9 3-10.8 3-10.7 3-4.1 3 2.3 3 3.9 3 3.9 3 2.4 3 1.7 3 1.6 3 1.2 3 .1 3-1.1 3-.8 3 1 3 3.8 3 4.9 3 4 3 1.3 3 0 3-.2 3-.2 3 .6 3 1.5 3 1.4 3 .2 3-1.6 3-2.2 3-2.3 3-1.7 3-1.6 3-1.5 3-1.3 3-.2 3 .6 3 0 3-1.3 3-1.7 3-1.8 3-1.9 3-2.4 3-2.5 3-2.1 3 .2 3 3.9 3 5 3 3.2 3 .5 3 .2 3 .2 3 .4 3 .4 3 .5 3 .6 3 .9 3 1.5 3 1.4 3-.1 3-6.3 3-8.5 3-5.1 3 1.7 3 4.9 3 5.2 3 2.7 3 .7 3 .6 3 .6 3 .7 3 .7 3 .8 3 .8 3-.5 3-5.4 3-6.1 3-2.2 3 4 3 6.8 3 4.9 3 .5 3-.5 3-.5 3 .3 3 1 3 1.3 3 .9 3-.1 3-1.7 3-2.3 3-1.7 3-.7 3-.6 3-.7 3-.6 3-.6 3-.6 3-.6 3 1.6 3 4.6 3 4.5 3 1.9 3 .9 3 .3 3-.4 3-1.1 3-2.1 3-2.3 3-1.9 3-.7 3 .1 3 0 3-1.2 3-3.5 3-4 3-2.5 3 2.2 3 5.5 3 5.2 3 1.2 3-3.7 3-5.5 3-3.4 3 1.5 3 5 3 5.8 3 3.8 3 1.2 3 0 3-1.3 3-2.9 3-5 3-7.1 2.9-8.8" fill="none" stroke="#FFCB7D" stroke-width="2.4" stroke-linejoin="round" stroke-linecap="round"/>
<path d="M879.2 628.3l3-7.5 3-5.6 3-3.1 3 .3 3 3.1 3 4.2 3 3.5 3 1.4 3 .7 3 .2 2.7-.7" fill="none" stroke="#FFCB7D" stroke-width="2.4" stroke-linejoin="round" stroke-linecap="round"/>
<path d="M933.4 623.1l3 4.9 3 3.8 3 2.5 3 .9 3-1.2 3-2 3-.5 3 1.6 3 1.8 3 1.8 3 1.7 3 1.5 3 1.4 3 1.2 3 .3 3-2.3 3-2.9 3-1.6 3 1.5 3 3.1 3 2.2 3-.5 3-1.5 3-1.6 3-1.3 3-.7 3-.7 3-.7 3-.7 3-1 3-1.2 3-.9 3-.4 3 .8 3 1.4 3 1.7 3 1.7 3 2 3 2.2 .7 .6" fill="none" stroke="#FFCB7D" stroke-width="2.4" stroke-linejoin="round" stroke-linecap="round"/>
<path d="M1073.4 642.9l3-1.1 3-1.5 3-1.7 3-2 3-2.4 3-2.6 3-2.8 .5-.5" fill="none" stroke="#FFCB7D" stroke-width="2.4" stroke-linejoin="round" stroke-linecap="round"/>
<path d="M1127.6 642l3-2.2 3-1.7 3-1.1 3-.6 3 .1 3 .6 3 1.2 .5 .3" fill="none" stroke="#FFCB7D" stroke-width="2.4" stroke-linejoin="round" stroke-linecap="round"/>
<path d="M1170.5 631.7l3 1.5 3 .8 3 .3 3-.1 3-1.7 3-2.1 3-1.3 3 1.1 3 2.6 3 2.5 3 .8 3-.4 3-.7 3 .1 3 1.3 3 1.9 3 1.8 3 1.1 3 .2 3 .1 3-.2 3-.3 3-.5 3-.5 3-.6 3-.9 3-1.2 3-1.3 3-1.5 3-3.1 3-3.8 3-2.5 3 .8 3 4.6 3 5.7 3 3.8 3 2.6 3 2 3 .9 3-.9 3-2.1 3-2.3 3-1.5 3-.3 3-.2 3-.3 3-.2 3-.3 3-.2 3-.3 3 .2 3 .9 3 1 3 .4 3-3.3 3-5.5 3-4 3 .8 3 2.3 3 2.3 3 2.3 3 2 3 2.1 3 1.9 3 1.7 3 .7 3-.1 3-.5 .6-.1" fill="none" stroke="#FFCB7D" stroke-width="2.4" stroke-linejoin="round" stroke-linecap="round"/>
<path d="M109.5 635.5l3-1.9 3-1.5 3-1.1 3-.9 3-.5 3 0 3 .6 3 1.1 3 2 3 3.7 3 3.7 3 2.2 3 .3 3-.2 3-.2 3 .2 3 .8 3 1 3 .8 3 .1 3-2.9 3-4.3 3-3.1 3-.7 3-.4 3-.1 3 .2 3 .5 3 .7 3 .4 3-.2 3-1.4 3-1.9 3-1.6 3-.4 3 0 3-.3 3-1.4 3-2.4 3-2.7 3-2.4 3-1.6 3-1.4 3-1.4 3-2.1 3-4 3-4.2 3-3 3 1.3 3 6.2 3 6.7 3 2.8 3-1.2 3-2.3 3-1.1 3 1.6 3 2.8 3 2.8 3 1.6 3 0 3-.9 3-.4 3 .9 3 1.7 3 1.9 3 1.7 3 1.6 3 1.4 3 1.3 3 1 3 .4 3-.6 3-1.7 3-2.4 3-2.9 3-3.2 3-3 3-2.8 3-2.4 3-2 3-.6 3 3.7 3 4.9 3 2.5 3-.3 3-.8 3-.7 3 .1 3 1.1 3 1.4 3 .8 3-.1 3-.2 3-.3 3-.2 3-.3 3-.2 3-.2 3-.2 3-.9 3-1.3 3-1 3 0 3 1.3 3 1.8 3 1.5 3 .3 3-.8 3-1.3 3-2 3-2.5 3-2.3 3-1.4 3-.6 3-.5 3-.5 3-.6 3-.5 3-.5 3-.5 3 .6 3 2.5 3 3.2 3 3.1 3 3.9 3 4.3 3 3.6 3 1.5 3-3.8 3-4.3 3-.2 3 .5 3 .6 3 .6 3 .5 3 .6 3 .5 3 .5 3-.1 3-2.2 3-2.7 3-.8 3 .4 3 .5 3 .6 3 .5 3 .7 3 .6 3 .3 3-4.2 3-7 3-5 3-.7 3 .6 3 1.3 3 2.3 3 2.9 3 3.1 3 2.6 3 1.6 3-1 3-2.3 3-1.3 3 2.1 3 5 3 4.6 3 .5 3-7.1 3-9.5 3-5.8 3 2.6 3 7.7 3 8.1 3 3.8 3-.6 3-1.6 3-1.2 3 .5 3 2 3 2.3 3 1.8 3-1 3-7 3-7.8 3-2.7 3 4.8 3 7.6 3 5.2 3 0 3-.6 3-.5 3-.4 3-.2 3-.3 3-.2 3 0 3 1.9 3 2.8 3 1.3 3-1.5 3-3 3-3.5 3-2.8 3-1.8 3-1.5 3-1.1 1-.3" fill="none" stroke="#5BC8DC" stroke-width="2.4" stroke-linejoin="round" stroke-linecap="round"/>
<path d="M750.3 633.4l3 1.9 3 1.1 3 .3 3-.7 3-1.5 3-1.7 3-1.2 3-.7 3-.5 3-.3 3 0 3 1.6 3 2.3 3 1.8 3-.6 3-4 3-4.5 3-1.9 3 2.5 3 4.6 3 3.2 3-1.4 3-6.1 3-7.3 3-4.6 3-.7 3 0 3 1 3 1.9 3 3.1 3 3.1 3 2.3 3 .8 3 0 3-.1 3 1 3 2 3 2 3 2 3 2 3 2.2 3 2.2 3 1.9 3-.2 3-2.7 3-3.7 3-3.3 3-3.6 3-3.9 3-3.4 3-2 3-.2 3 1.2 3 2 3 3.4 3 4.1 3 2.9 3 1 3 .6 3 .6 3 .8 3 .9 3 .9 3 1 3 .9 3 1.4 3 1.5 3 1 3 0 3-.9 3-1.1 3-.5 3-.3 3-.2 3-.2 3-.3 3-.6 3-.5 3-.4 3 .3 3 .8 3 .7 3-.3 3-.5 3-.4 3-.5 3-.5 3-.4 3-.5 3-.4 3 .5 3 1.6 3 1.7 3 1.1 3 1.1 3 .4 3-.6 3-1.6 3-1.9 3-1.9 3-1.6 3-1.7 3-1.4 3-1 3 1.2 3 1.9 3 .4 3-.2 3-.4 3-.4 3-.6 3-.9 3-1.5 3-1.3 3-.6 3 2.7 3 5.4 3 4.9 3 2 3 1 3 .5 3-.2 3-.9 3-1.1 3-1 3-.6 3-.2 3-.1 3-.2 3-.5 3-.8 3-.9 3-.6 3-.1 3 .5 3 .4 3-.1 3-1.6 3-2 3-1.4 3 .5 3 2 3 1.9 3 .7 3-1.6 3-2.5 3-1.5 3 1 3 2.8 3 2.7 3 .9 3-.7 3-1.1 3-.5 3 1.1 3 2.1 3 2.1 3 1 3-1.2 3-2.3 3-2.2 3-.8 3-.3 3-.1 3-.1 3 .3 3 .6 3 .6 3 .2 3-2.1 3-3.2 3-2.5 3 .5 3 4.8 3 5.3 3 1.8 3-.8 3-1 3-.8 3-.5 3-.6 3-.4 3-.4 3-.1 3 .1 3 .2 3 .2 3 .4 3 .6 3 .6 3-.5 3-2 3-2.2 3-.7 3 2 3 3.8 3 3.2 3 .7 3-.2 3-.2 3-.4 3-.4 3-.5 3-.5 3-.7 3-1.4 3-1.4 3-1 3-.2 3 .2 3 .3 3 .1 3-.1 3-.1 3-.2 1.7-.1" fill="none" stroke="#5BC8DC" stroke-width="2.4" stroke-linejoin="round" stroke-linecap="round"/>
<path d="M109.5 734l3 1 3 .9 3 .7 3 .6 3 .6 3 .4 3 .1 3-.2 3-.8 3-2.7 3-3.7 3-2.5 3-1.7 3-1.5 3-1.1 3-.5 3-.3 3-.1 3-.1 3 .1 3 .2 3 .4 3 .6 3 1.6 3 3.3 3 3 3 .9 3 .2 3 .2 3 .2 3 .3 3 .2 3 .3 3 .2 3-1.4 3-3.9 3-3.4 3 0 3 5.1 3 6.5 3 3.2 3-.8 3-1.7 3-1.1 3 .9 3 1.9 3 1.8 3 .7 3-.1 3-.5 3-.9 3-1.3 3-2.1 3-2.2 3-1.4 3 .1 3 1 3 1.3 3 .9 3 .2 3-.1 3-.2 3 .4 3 3.3 3 4.5 3 2.3 3-3.8 3-7.6 3-4.4 3-3 3 .2 3 2.5 3 2.7 3 1.9 3 1.7 3 1.5 3 1.3 3 .9 3 .7 3 .3 3-.1 3-.6 3-1 3-1 3-.5 3 0 3 .2 3-.1 3-2.4 3-4.2 3-3.6 3-.1 3 3.5 3 4.1 3 1.3 3-2.4 3-3.5 3-1.9 3 1.3 3 2.2 3 2.4 3 1.7 3 .9 3 .7 3 .7 3 .7 3 .8 3 1 3 1.2 3 2.4 3 5 3 5 3 2.5 3-2.5 3-5.4 3-4 3-.5 3 .4 3 .3 3-.9 3-2.3 3-2.6 3-2.6 3-2.3 3-2.1 3-1.9 3-1.4 3-.5 3 2.8 3 3.9 3 1.8 3-.2 3-.4 3-.5 3-.6 3-.7 3-.8 3-.8 3 .2 3 3.3 3 4.1 3 1.6 3-1.9 3-3.2 3-2.4 3-.3 3-.1 3 .3 3 1 3 1.2 3 1.3 3 1.3 3 1.2 3 1.2 3 1.1 3 .9 3 .1 3-1.3 3-1.5 3-.8 3-.2 3-.1 3-.3 3-1.2 3-2.2 3-2.1 3-.6 3 1.8 3 2.4 3 1.1 3-1.3 3-2 3-2.1 3-1.6 3-1.2 3-1 3-.9 3-.7 3-.1 3 .3 3 .7 3 1.9 3 6.2 3 7 3 3.3 3-2.6 3-5.3 3-3.9 3 .7 3 3.1 3 2.8 3-.5 3-2.5 3-3 3-2.8 3-1.9 3-1.5 3-1.4 3-.9 3-.4 3-.2 3 .1 3 .3 3 .6 3 .7 3 1 3 1.3 3 1.8 3 1.8 3 1 3 .4 3-.1 3-.4 3-.6 3-1.5 3-1.6 3-.9 3 .6 3 1.2 3 1.3 3 .6 3 .2 3-.1 3-.2 3-1.6 3-3.6 3-3.2 3-.2 3 1.9 3 2 3 2.1 3 2 3 2.2 3 2.1 3 2 3 1.4 3 .7 3 .3 3 .5 3 .5 3 .2 3 .1 3-1.9 3-5.7 3-5.9 3-2.3 3-.7 3-.5 3-.6 3-.8 3-1.2 3-1.1 3-.8 3 .5 3 2.1 3 2.3 3 1.5 3 .7 3 .4 3 .7 3 2.4 3 5.8 3 5.9 3 2.6 3-.9 3-1.5 3-1.8 3-2.1 3-2.4 3-2.3 3-2.1 3-.9 3 0 3-.1 3-1.3 3-4.1 3-4.8 3-3.1 3 .2 3 .7 3 .8 3 .9 3 1 3 1.1 3 1 3 .5 3-.1 3-.3 3 .1 3 1.4 3 2.4 3 2.3 3 .7 3-1.9 3-2.9 3-2 3 .5 3 1.8 3 1.8 3 0 3-2.3 3-3.4 3-2.9 3-.8 3 .3 3 .5 3 .2 3-.9 3-1.4 3-1 3 .6 3 3.9 3 4.5 3 2 3-.4 3-1 3-.4 3 .7 3 1 3 .9 3 .4 3 .4 3 .2 3 0 3-.1 3-.7 3-.9 3-1.2 3-1.5 3-2.5 3-2.7 3-1.6 3 .2 3 .9 3 1.3 3 1.5 3 1.7 3 1.8 3 1.6 3 .9 3 .3 3 .1 3 .4 3 1 3 1.3 3 1.2 3 .6 3 .3 3 .2 3 .1 3 0 3-.1 3-.4 3-.7 3-2.9 3-4.1 3-3.2 3-.9 3 .2 3 .8 3 1.2 3 2.3 3 2.7 3 1.6 3-.2 3-.4 3-.6 3-.6 3-.6 3-.7 3-.7 3-.6 3-.3 3-.2 3-.2 3 .3 3 1.1 3 1 3 0 3-1.5 3-2.2 3-1.8 3-.4 3 .7 3 .8 3 .3 3-1.5 3-2.9 3-1.9 3 1.1 3 2.1 3 2.1 3 2 3 1.7 3 1.8 3 1.7 3 1.6 3 1.3 3 .8 3 .4 3-.9 3-4.1 3-4.2 3-.9 3 1.1 3 1.2 3 1.2 3 1.1 3 1 3 .9 3 .8 3-.7 3-4.3 3-4.6 3-1.1 3 2.9 3 4.1 3 2.2 3-.6 3-1.3 3-1.1 3-.4 3 0 3 .1 3 0 3-.2 3-.2 3-.2 3-.3 .5-.1" fill="none" stroke="#73BF69" stroke-width="2.4" stroke-linejoin="round" stroke-linecap="round"/>
<path d="M109.5 710.8l3-1.3 3-.6 3-.1 3 .4 3 .9 3 2.6 3 4 3 3.4 3 .9 3-1.6 3-2.6 3-2.2 3-.8 3-.4 3-.3 3-.9 3-2.2 3-2.9 3-2.4 3-.8 3 1.2 3 1.8 3 1.3 3 0 3 0 3 0 3 0 3 0 3 0 3 0 3 .3 3 3 3 4.4 3 3.3 3 .2 3-1.6 3-.9 3 2.1 3 3.7 3 3.9 3 3.2 3 2.3 3 2.3 3 2.2 3 2.1 3 1.8 3 1.4 3 .6 3-5.5 3-9.7 3-7.2 3-1.5 3-1 3-.8 3-.7 3-.6 3-.5 3-.4 3-.4 3 .4 3 1.3 3 1.9 3 2.3 3 5.3 3 6.3 3 3.2 3-.9 3-1.2 3-1.4 3-1.4 3-1.6 3-1.5 3-1.5 3-1.4 3-1 3-1 3-.9 3-.7 3-.6 3-.3 3-.1 3 1.4 3 3.4 3 3.1 3 .6 3-1.9 3-2.6 3-1.6 3 .8 3 1.4 3 1.6 3 1.8 3 2 3 2.1 3 1.9 3 .3 3-3.7 3-4.8 3-2.5 3 .3 3 1.3 3 .5 3-2.1 3-4.4 3-4.3 3-1.7 3 .4 3 1.6 3 2.6 3 4.1 3 6.3 3 5.8 3 2.6 3 0 3-.4 3-.7 3-.9 3-1.1 3-1.1 3-.9 3 .1 3 1.1 3 .8 3-.9 3-1.5 3-1.6 3-1.5 3-1.4 3-1.2 3-1.2 3-1.3 3-1.8 3-2.3 3-2.4 3-2.1 3-1.4 3-.5 3 .4 3 1.8 3 3.7 3 4 3 2.4 3 1.2 3 1.3 3 1.2 3 1.3 3 1.2 3 1.3 3 1.3 3 2.2 3 2.6 3 1.6 3-.5 3-2.5 3-3.3 3-2.6 3-1.4 3-1.1 3-1.2 3-1.7 3-2.4 3-2.7 3-2.6 3-1.9 3-1.2 3-.5 3 1.2 3 8.4 3 10.7 3 6.2 3-1.5 3-3.4 3-3.6 3-2.6 3-1.6 3-1.6 3-1.4 3-1.1 3-.8 3-.3 3-.1 3 1.2 3 5.2 3 5.1 3 .2 3-2.7 3-2.8 3-2.7 3-2.8 3-2.7 3-2.8 3-2.6 3-1.1 3 .5 3 1.2 3 1.1 3 .9 3 1 3 1.1 3 1.1 3 1.2 3 1.4 3 1.4 3 2.8 3 5.4 3 4.3 3-1.2 3-8 3-8.2 3-2.3 3-.9 3-.7 3-.4 3 0 3 0 3 .2 3 .6 3 1.2 3 1.5 3 1.7 3 1.7 3 2.1 3 2.3 3 2 3 .2 3-3.4 3-4.1 3-1.7 3 3.1 3 5.4 3 3.5 3-1.1 3-2.3 3-2.7 3-2.3 3-1.7 3-1.5 3-.9 3-.3 3 3.9 3 8.5 2.9 10.7" fill="none" stroke="#F2CC0C" stroke-width="2.4" stroke-linejoin="round" stroke-linecap="round"/>
<path d="M857.7 717.7l3 2.5 3 1.8 3 1.1 3 .6 3-1.1 3-2.1 3-1.1 3 2.2 3 5.7 3 5.6 3 1.9 3-2.2 3-3.7 3-3.3 3-1.3 3 .2 3 .3 3-.2 3-2.1 3-3.4 3-3.2 3-.7 3 3.2 3 4.4 3 2.6 3-1.9 3-5.2 3-5.2 3-2.3 3 1.6 3 2.9 3 1.7 3-1.2 3-1.9 3-1.8 3-1.6 3-1.3 3-1.2 3-1.1 3-.5 3 1.2 3 2 3 1.2 3-.9 3-2.4 3-2.2 3-.5 3 .4 3 .7 3 .9 3 1.3 3 1.5 3 1.4 3 1.3 3 1.2 3 1 3 .9 3 .9 3 .6 3 .2 3-.3 3-1.7 3-3.1 3-2.9 3-1.7 3-1.4 3-1 3-.2 3 .3 3 .3 3 .3 3 .4 3 .3 3 .4 3 .4 3 1.1 3 3.1 3 3.7 3 2.5 3 .3 3-1.3 3-2.8 2.4-3" fill="none" stroke="#F2CC0C" stroke-width="2.4" stroke-linejoin="round" stroke-linecap="round"/>
<path d="M1127.6 711.6l3 .2 3 0 3-.1 3-.1 3-.6 3-.8 3-.3 3 .3 3 .7 3 .8 3 .9 3 1 3 1.1 3 1 3 .6 3 .3 3 .2 3 0 3-.1 3-.2 3-.3 3-.7 3-1.4 3-1.5 3-1 3-.1 3 .3 3 0 3-.7 3-.9 3-1 3-.8 3-.5 3-.5 3-.5 3-.5 3-.5 3-.5 3-.5 3 .3 3 2.2 3 3.2 3 2.8 3 2.7 3 2.8 3 2.5 3 1.7 3-2.1 3-4.4 3-3.8 3-2.3 3-2.4 3-1.5 3 0 3 .4 3 .4 3 .5 3 .5 3 .5 3 .6 3 .4 3 .2 3 0 3-.1 3-.1 3-.3 3-.3 3-.2 3 .8 3 2.6 3 2.5 3 .9 3-.6 3-.9 3-.9 3-.3 3-.2 3-.2 3-.5 3-1.4 3-2 3-1.8 3-1 3-.4 3 .1 3 .5 3 1 3 1.4 3 1.9 2.4 1.9" fill="none" stroke="#F2CC0C" stroke-width="2.4" stroke-linejoin="round" stroke-linecap="round"/>
<path d="M109.5 709.9l3 3.6 3 3.1 3 2.4 3 1.3 3-.2 3-.8 3-1 3-1.1 3-1.3 3-1.3 3-1.3 3-1.3 3-1.2 3-1.3 3-1.2 3-1.3 3-1.2 3-1 3-.7 3-.1 3 1.5 3 2.7 3 2.3 3 1.3 3 1.1 3 .9 3 .6 3-.1 3-.2 3 .1 3 .9 3 1.4 3 1.6 3 1.2 3 .2 3-.7 3 0 3 1.5 3 2.6 3 2.7 3 2.4 3 2.1 3 2 3 1.9 3 2.3 3 3 3 3.1 3 2.5 3-1.5 3-6.7 3-5.6 3-.7 3 .9 3 1.1 3 .1 3-1.6 3-2.8 3-2.5 3-1.1 3 .2 3 .3 3 .2 3 .3 3 .2 3 .3 3 .2 3-1.6 3-4.6 3-4.2 3-.5 3 .6 3 .6 3 .7 3 .7 3 .8 3 .7 3 .8 3 2.8 3 5.5 3 5.3 3 1.9 3-3.1 3-4.8 3-2.4 3 .3 3 .8 3 .7 3-.1 3-1.4 3-1.7 3-1.1 3 .1 3 .4 3 .5 3 .5 3 .3 3 .3 3 .3 3 .1 3-1.5 3-2.4 3-1.3 3 .6 3 .7 3 .7 3 .8 3 .7 3 .8 3 .7 3 1.1 3 2.1 3 2.2 3 1.7 3 1.1 3 .7 3 .5 3 .3 3 .1 3-.3 3-.6 3-1.2 3-1.7 3-2.1 3-2.2 3-3.2 3-3.6 3-3 3-1.3 3 2.2 3 3.3 3 1.5 3-.5 3-.6 3-.7 3-.7 3-1.3 3-1.6 3-.8 3 .9 3 2.1 3 2.6 3 2.6 3 2.4 3 2.6 3 2.5 3 .7 3-4.3 3-5.1 3-1.4 3 4.8 3 6.8 3 3.7 3-1.5 3-2.7 3-2.8 3-2.2 3-1.3 3-1.1 3-.9 3-.5 3 .9 3 1.5 3 1 3-1.6 3-4.3 3-4.1 3-.5 3 6.3 3 8.5 3 5.1 3-2.3 3-7.1 3-7.5 3-3.6 3 .6 3 1.6 3 1.2 3-.6 3-2.5 3-2.9 3-2.2 3 .8 3 6.4 3 7.1 3 2.4 3-3.9 3-6.2 3-4.2 3 .1 3 .6 3 .6 3 .3 3 .2 3 .2 3 .2 3 .3 3 .4 3 .5 3 .6 3 .7 3 .8 3 .9 3 1 3 1.2 3 1.7 3 1.3 3-.4 3-3.2 3-3.7 3-1.7 3-1.2 3-1.1 3-.9 3-.7 3-.5 3-.2 3 .1 3 1 3 1.9 3 1.8 3 .7 3 .2 3-.1 3-.3 3-.6 3-1.4 3-1.5 3-.9 3 2.6 3 5.6 3 4.7 3 .4 3-4.6 3-5.6 3-2.3 3 3.7 3 7.2 3 6.9 3 3.1 3 .5 3-.3 3-1.5 3-3 3-4.5 3-3.9 3-1.3 3-.3 3 .1 3 .1 3 .3 3 .5 3 .6 3 .5 3-2.5 3-6.8 3-5.6 3 .2 3 2.2 3 2.7 3 2.9 3 3.1 3 3.4 3 3.4 3 2.9 3 1.5 3-.5 3-1.6 3-2.5 3-3.9 3-3.9 3-1.9 3-.7 3-.7 3-.7 3-.7 3-.7 3-.7 3-.7 3-.9 3-1.7 3-1.8 3-1.1 3 .2 3 1 3 .6 3-.4 3-1.2 3-1.3 3-.5 3 1.3 3 2.6 3 2.3 3 .6 3-.9 3-1.2 3-.5 3 .6 3 .7 3 .7 3 .8 3 .9 3 1 3 .9 3 .9 3 .7 3 .5 3 .1 3-1.3 3-2.8 3-2.8 3-1.4 3-.6 3-.1 3 .6 3 2.5 3 3.8 3 2.7 3-.3 3-2.3 3-1.5 3 .7 3 .8 3 .7 3 .8 3 .7 3 .7 3 .8 3 .6 3 .1 3-2.3 3-3.5 3-3 3-1.8 3-1.7 3-1.1 3 0 3 .6 3 .9 3 .8 3 .3 3 .2 3 .2 3 .3 3 .7 3 1.2 3 1.1 3 .6 3-.4 3-.5 3-.2 3 .7 3 1.2 3 1.2 3 .5 3 .3 3 .2 3 .2 3 .2 3 0 3 0 3-.2 3-1.1 3-2 3-1.7 3-.5 3 .5 3 .5 3-.1 3-1.7 3-2.5 3-2 3-.3 3 2.1 3 3.2 3 2.1 3 .5 3 .3 3 .2 3 0 3-.2 3-.4 3-.2 3 .4 3 2 3 2.3 3 1.3 3-2.4 3-5.5 3-4.9 3-1.2 3 .1 3 .7 3 1.2 3 2.3 3 3.1 3 2.8 3 1.2 3-1.5 3-3.1 3-2.7 3-.8 3-.3 3 .1 3 .3 3 1.2 3 1.8 3 1.3 3-.1 3-2.2 3-3 3-2 3-.4 3-.1 3 .1 3 .3 3 .5 3 .5 3 .5 3 .8 3 1 3 1.1 3 .7 3 0 3-.5 3-.4 3 .2 3 .6 3 1 3 1.4 .5 .2" fill="none" stroke="#8AB8FF" stroke-width="2.4" stroke-linejoin="round" stroke-linecap="round"/>
<path d="M109.5 712.5l3 0 3 .2 3 .5 3 .7 3 1.2 3 1.5 3 1.7 3 1.5 3 1.3 3 1 3 .6 3 .2 3-.9 3-2.7 3-2.9 3-1.5 3-.8 3-.6 3-.6 3-.5 3-.4 3-.2 3-.1 3 .6 3 2.1 3 2.2 3 .7 3-1.5 3-2.2 3-1.1 3 1.1 3 2.3 3 2.6 3 1.7 3-.6 3-2.1 3-1.2 3 1.7 3 3.8 3 4.3 3 3.7 3 3.2 3 2.9 3 1.5 3-1 3-4 3-4.8 3-3.5 3-2.7 3-2.3 3-1.3 3 .1 3 1.3 3 1.6 3 1.1 3 .1 3-.2 3-.3 3-.4 3-1 3-1.5 3-1.3 3-.4 3 2.6 3 4 3 2.6 3 .2 3-.4 3-.4 3-.1 3 .4 3 .7 3 .6 3-.3 3-2.5 3-3.2 3-2.5 3-1.3 3-.9 3-.5 2.3 0" fill="none" stroke="#FF780A" stroke-width="2.4" stroke-linejoin="round" stroke-linecap="round"/>
<path d="M383.6 728l3 0 3-.2 3-.4 3-.8 3-1.3 3-1.5 3-1.1 3 0 3 .9 3 .9 3-.1 3-2.8 3-4.6 3-3.8 3-1.2 3 .6 3 1.9 3 2.8 3 6.8 3 9.1 3 6.4 3-.5 3-2.4 3-2.6 3-2.7 3-2.7 3-2.9 3-2.8 3-2.3 3 1.3 3 3.6 3 2.3 3-.2 3-.5 3-.8 3-1.5 3-2 3-2 3-2 3-2 3-1.9 3-1.9 3-1.9 3-1.9 3-.9 3-.1 3 .7 3 2.6 3 5 3 4.3 3 1.2 3-.5 3-.8 3 .3 3 1.3 3 1.2 3 1.3 3 1.2 3 1.3 3 1.2 3 1.2 3-1.8 3-4.6 3-4.6 3-2.1 3 1.9 3 3.4 3 1.9 3-1.8 3-3.3 3-3.5 3-2.5 3-1.3 3-.4 3 .4 3 4.6 3 11 3 11.1 3 4.4 3-4.5 3-8.5 3-7.1 3-1.2 3 1.3 3 1.5 3 .4 3-.4 3-.6 3-.9 3-1.4 .2-.1" fill="none" stroke="#FF780A" stroke-width="2.4" stroke-linejoin="round" stroke-linecap="round"/>
<path d="M718.2 722l3 3.9 3 2.3 3 .3 3-2.2 3-5.1 3-4.9 3-1.5 3-.5 3-.3 3 0 3 .4 3 .5 3 .5 3 .5 3 .3 3 .2 3 .2 3 .5 3 1.6 3 2.1 3 1.7 3 0 3-2.6 3-2.9 3-1.1 3 1.9 3 3.2 3 2.8 3 1.2 3 .3 3-.2 3-.4 3-1.6 3-3.5 3-3.5 3-1.9 3 4.1 3 8 3 5.7 3-1.1 3-4 3-4.1 3-1.8 3-.7 3-.4 3-.1 3 .6 3 1.3 3 1.5 3 1.2 3 .4 3-.2 3-.2 3 .4 3 1.8 3 2.3 3 1.5 3-.5 3-2.5 3-3.1 3-2.2 3-.9 3-.7 3-.3 3 .2 3 .8 3 .9 3 .7 3 .2 3-.1 3-.5 3-.8 3-3.3 3-4.7 3-3.8 3-.2 3 4.4 3 5 3 1 3-1.9 3-2.2 3-2 3-1.6 3-1.7 3-1.4 3-1 3 .1 3 1 3 1.1 3 .4 3-.3 3-.4 3-.2 3 .2 3 .6 3 .8 3 1.1 3 2 3 2.7 3 2.6 3 1.6 3 .8 3 0 3-1.1 3-1.9 3-2 3-2.1 3-1.9 3-1.8 3-1.7 3-1.7 3-1.1 3-.6 3 0 3 .3 3 .6 3 .7 3 .8 3 .9 3 1 3 1 3 1 3 1.3 3 1.5 3 1.5 3 .7 3-2.1 3-3.3 3-2.3 3 .8 3 2.6 3 2.7 3 .6 3-.7 3-1 3-.7 3 .1 3 .6 3 .7 3 .3 3-.6 3-1.3 3-1.2 3-.5 3-.3 3 0 3 .2 3 .7 3 1.2 3 1.1 3 .7 3 .4 3 .3 3 .1 3 0 3-.2 3-.3 3-.4 3-.9 3-1.3 3-1 3-.2 3 .4 3 .5 3-.1 3-.4 3-.4 3-.5 3-.4 3-.5 3-.6 3-.5 3 .3 3 1.8 3 2.2 3 .9 3-.2 3-.5 3-.3 3 .4 3 1.6 3 1.7 3 .7 3-1.3 3-2.6 3-2.7 3-1.8 3-1.4 3-1 3-.5 3 1 3 2.3 3 2.4 3 1.2 3-.7 3-1.5 3-1.1 3 .1 3 .9 3 1 3 .5 3-.2 3-.4 3-.3 3 .2 3 1.2 3 1.6 3 1.1 3 .1 3-.7 3-.8 3-.1 3 .5 3 .6 3 .5 3 .2 3 0 3-.3 3-.7 3-1.3 3-1.9 3-1.8 3-1.3 3-.9 3-.8 3-.5 .8-.1" fill="none" stroke="#FF780A" stroke-width="2.4" stroke-linejoin="round" stroke-linecap="round"/>
<path d="M109.4 678.3H1397.0" stroke="#b98bd0" stroke-width="2.2"/>
<path d="M109.4 677.5H1397.0" stroke="#f5c9e2" stroke-width="2.6"/>
<path d="M109.4 676.6H1397.0" stroke="#d6ebfa" stroke-width="2.4"/>
<path d="M274.2 677.5h22.4" stroke="#e98a7a" stroke-width="1.6"/>
<path d="M734.8 677.5h17.2" stroke="#f7b6d8" stroke-width="1.6"/>
<path d="M861.8 677.5h23.4" stroke="#73BF69" stroke-width="1.6"/>
<path d="M150.0 677.5h28.9" stroke="#FF780A" stroke-width="1.6"/>
<path d="M298.2 677.5h30.6" stroke="#e98a7a" stroke-width="1.6"/>
<path d="M1267.8 677.5h20.1" stroke="#73BF69" stroke-width="1.6"/>
<path d="M201.9 677.5h15.2" stroke="#73BF69" stroke-width="1.6"/>
<path d="M275.7 677.5h31.3" stroke="#73BF69" stroke-width="1.6"/>
<path d="M1292.8 677.5h19.2" stroke="#FF780A" stroke-width="1.6"/>
<path d="M887.2 677.5h25.5" stroke="#73BF69" stroke-width="1.6"/>
<path d="M572.9 677.5h13.3" stroke="#f7b6d8" stroke-width="1.6"/>
<path d="M749.9 677.5h13.6" stroke="#e98a7a" stroke-width="1.6"/>
<path d="M938.0 677.5h8.9" stroke="#73BF69" stroke-width="1.6"/>
<path d="M456.5 677.5h17.0" stroke="#FF780A" stroke-width="1.6"/>
<path d="M285.8 677.5h20.2" stroke="#FF780A" stroke-width="1.6"/>
<path d="M1093.6 677.5h26.1" stroke="#e98a7a" stroke-width="1.6"/>
<path d="M947.4 677.5h16.8" stroke="#e98a7a" stroke-width="1.6"/>
<path d="M751.1 677.5h12.2" stroke="#73BF69" stroke-width="1.6"/>
<path d="M1129.3 677.5h33.9" stroke="#73BF69" stroke-width="1.6"/>
<path d="M796.7 677.5h26.0" stroke="#f7b6d8" stroke-width="1.6"/>
<path d="M1333.3 677.5h9.4" stroke="#f7b6d8" stroke-width="1.6"/>
<path d="M368.5 677.5h30.0" stroke="#73BF69" stroke-width="1.6"/>
<circle cx="134.5" cy="677.5" r="2" fill="#FF780A"/>
<circle cx="143.0" cy="677.2" r="2" fill="#73BF69"/>
<circle cx="146.0" cy="677.0" r="2" fill="#FF780A"/>
<circle cx="156.8" cy="677.2" r="2" fill="#e8e8f0"/>
<circle cx="161.0" cy="677.3" r="2" fill="#F2495C"/>
<circle cx="162.8" cy="677.7" r="2" fill="#FF780A"/>
<circle cx="189.6" cy="677.0" r="2" fill="#73BF69"/>
<circle cx="190.9" cy="677.0" r="2" fill="#F2CC0C"/>
<circle cx="198.0" cy="677.4" r="2" fill="#5794F2"/>
<circle cx="212.4" cy="677.8" r="2" fill="#FF780A"/>
<circle cx="225.9" cy="677.7" r="2" fill="#FF780A"/>
<circle cx="230.6" cy="677.5" r="2" fill="#73BF69"/>
<circle cx="259.3" cy="677.0" r="2" fill="#FF780A"/>
<circle cx="274.7" cy="677.6" r="2" fill="#e8e8f0"/>
<circle cx="295.8" cy="677.5" r="2" fill="#F2495C"/>
<circle cx="296.3" cy="677.0" r="2" fill="#FF780A"/>
<circle cx="303.6" cy="677.3" r="2" fill="#73BF69"/>
<circle cx="316.5" cy="676.9" r="2" fill="#F2CC0C"/>
<circle cx="320.7" cy="677.6" r="2" fill="#5794F2"/>
<circle cx="333.0" cy="677.5" r="2" fill="#FF780A"/>
<circle cx="355.5" cy="677.6" r="2" fill="#FF780A"/>
<circle cx="362.5" cy="677.6" r="2" fill="#73BF69"/>
<circle cx="390.2" cy="677.1" r="2" fill="#FF780A"/>
<circle cx="408.8" cy="677.6" r="2" fill="#e8e8f0"/>
<circle cx="425.0" cy="677.1" r="2" fill="#F2495C"/>
<circle cx="426.0" cy="677.0" r="2" fill="#FF780A"/>
<circle cx="442.7" cy="677.3" r="2" fill="#73BF69"/>
<circle cx="487.5" cy="677.3" r="2" fill="#F2CC0C"/>
<circle cx="507.7" cy="677.2" r="2" fill="#5794F2"/>
<circle cx="514.9" cy="677.4" r="2" fill="#FF780A"/>
<circle cx="516.0" cy="677.4" r="2" fill="#FF780A"/>
<circle cx="518.8" cy="677.1" r="2" fill="#73BF69"/>
<circle cx="528.3" cy="677.5" r="2" fill="#FF780A"/>
<circle cx="548.7" cy="677.2" r="2" fill="#e8e8f0"/>
<circle cx="569.9" cy="677.6" r="2" fill="#F2495C"/>
<circle cx="572.7" cy="677.2" r="2" fill="#FF780A"/>
<circle cx="630.0" cy="677.6" r="2" fill="#73BF69"/>
<circle cx="671.1" cy="677.3" r="2" fill="#F2CC0C"/>
<circle cx="680.2" cy="677.4" r="2" fill="#5794F2"/>
<circle cx="709.9" cy="677.5" r="2" fill="#FF780A"/>
<circle cx="744.4" cy="677.4" r="2" fill="#FF780A"/>
<circle cx="751.0" cy="677.1" r="2" fill="#73BF69"/>
<circle cx="812.0" cy="677.8" r="2" fill="#FF780A"/>
<circle cx="824.1" cy="677.0" r="2" fill="#e8e8f0"/>
<circle cx="866.0" cy="677.2" r="2" fill="#F2495C"/>
<circle cx="879.5" cy="677.4" r="2" fill="#FF780A"/>
<circle cx="895.7" cy="676.9" r="2" fill="#73BF69"/>
<circle cx="915.1" cy="677.0" r="2" fill="#F2CC0C"/>
<circle cx="928.2" cy="677.6" r="2" fill="#5794F2"/>
<circle cx="929.0" cy="677.6" r="2" fill="#FF780A"/>
<circle cx="960.5" cy="677.5" r="2" fill="#FF780A"/>
<circle cx="1000.0" cy="677.7" r="2" fill="#73BF69"/>
<circle cx="1044.7" cy="677.6" r="2" fill="#FF780A"/>
<circle cx="1060.3" cy="677.2" r="2" fill="#e8e8f0"/>
<circle cx="1063.6" cy="677.5" r="2" fill="#F2495C"/>
<circle cx="1069.6" cy="677.2" r="2" fill="#FF780A"/>
<circle cx="1085.9" cy="677.6" r="2" fill="#73BF69"/>
<circle cx="1114.0" cy="677.2" r="2" fill="#F2CC0C"/>
<circle cx="1120.7" cy="677.0" r="2" fill="#5794F2"/>
<circle cx="1144.9" cy="677.7" r="2" fill="#FF780A"/>
<circle cx="1188.5" cy="677.5" r="2" fill="#FF780A"/>
<circle cx="1196.3" cy="677.6" r="2" fill="#73BF69"/>
<circle cx="1206.2" cy="677.4" r="2" fill="#FF780A"/>
<circle cx="1228.6" cy="677.6" r="2" fill="#e8e8f0"/>
<circle cx="1259.8" cy="677.3" r="2" fill="#F2495C"/>
<circle cx="1261.2" cy="677.4" r="2" fill="#FF780A"/>
<circle cx="1301.9" cy="677.0" r="2" fill="#73BF69"/>
<circle cx="1319.3" cy="677.4" r="2" fill="#F2CC0C"/>
<circle cx="1367.1" cy="677.6" r="2" fill="#5794F2"/>
<circle cx="1393.5" cy="677.5" r="2" fill="#FF780A"/>
<text x="104.7" y="595.3" text-anchor="end" letter-spacing="0.15" fill="#c7c7d6" stroke="#c7c7d6" stroke-width="0.4">30.0 Gb/s</text>
<text x="104.7" y="623.8" text-anchor="end" letter-spacing="0.15" fill="#c7c7d6" stroke="#c7c7d6" stroke-width="0.4">20.0 Gb/s</text>
<text x="104.7" y="652.3" text-anchor="end" letter-spacing="0.15" fill="#c7c7d6" stroke="#c7c7d6" stroke-width="0.4">10.0 Gb/s</text>
<text x="104.7" y="680.6" text-anchor="end" letter-spacing="0.15" fill="#c7c7d6" stroke="#c7c7d6" stroke-width="0.4">0.0 b/s</text>
<text x="104.7" y="709.0" text-anchor="end" letter-spacing="0.15" fill="#c7c7d6" stroke="#c7c7d6" stroke-width="0.4">-10.0 Gb/s</text>
<text x="104.7" y="737.5" text-anchor="end" letter-spacing="0.15" fill="#c7c7d6" stroke="#c7c7d6" stroke-width="0.4">-20.0 Gb/s</text>
<text x="104.7" y="765.9" text-anchor="end" letter-spacing="0.15" fill="#c7c7d6" stroke="#c7c7d6" stroke-width="0.4">-30.0 Gb/s</text>
<text x="114.2" y="793.9" text-anchor="middle" letter-spacing="0.10" fill="#c7c7d6" stroke="#c7c7d6" stroke-width="0.4">10:30</text>
<text x="168.1" y="793.9" text-anchor="middle" letter-spacing="0.10" fill="#c7c7d6" stroke="#c7c7d6" stroke-width="0.4">10:45</text>
<text x="222.0" y="793.9" text-anchor="middle" letter-spacing="0.10" fill="#c7c7d6" stroke="#c7c7d6" stroke-width="0.4">11:00</text>
<text x="275.9" y="793.9" text-anchor="middle" letter-spacing="0.10" fill="#c7c7d6" stroke="#c7c7d6" stroke-width="0.4">11:15</text>
<text x="329.8" y="793.9" text-anchor="middle" letter-spacing="0.10" fill="#c7c7d6" stroke="#c7c7d6" stroke-width="0.4">11:30</text>
<text x="383.6" y="793.9" text-anchor="middle" letter-spacing="0.10" fill="#c7c7d6" stroke="#c7c7d6" stroke-width="0.4">11:45</text>
<text x="437.5" y="793.9" text-anchor="middle" letter-spacing="0.10" fill="#c7c7d6" stroke="#c7c7d6" stroke-width="0.4">12:00</text>
<text x="491.4" y="793.9" text-anchor="middle" letter-spacing="0.10" fill="#c7c7d6" stroke="#c7c7d6" stroke-width="0.4">12:15</text>
<text x="545.3" y="793.9" text-anchor="middle" letter-spacing="0.10" fill="#c7c7d6" stroke="#c7c7d6" stroke-width="0.4">12:30</text>
<text x="599.2" y="793.9" text-anchor="middle" letter-spacing="0.10" fill="#c7c7d6" stroke="#c7c7d6" stroke-width="0.4">12:45</text>
<text x="653.1" y="793.9" text-anchor="middle" letter-spacing="0.10" fill="#c7c7d6" stroke="#c7c7d6" stroke-width="0.4">13:00</text>
<text x="707.0" y="793.9" text-anchor="middle" letter-spacing="0.10" fill="#c7c7d6" stroke="#c7c7d6" stroke-width="0.4">13:15</text>
<text x="760.9" y="793.9" text-anchor="middle" letter-spacing="0.10" fill="#c7c7d6" stroke="#c7c7d6" stroke-width="0.4">13:30</text>
<text x="814.7" y="793.9" text-anchor="middle" letter-spacing="0.10" fill="#c7c7d6" stroke="#c7c7d6" stroke-width="0.4">13:45</text>
<text x="868.6" y="793.9" text-anchor="middle" letter-spacing="0.10" fill="#c7c7d6" stroke="#c7c7d6" stroke-width="0.4">14:00</text>
<text x="922.5" y="793.9" text-anchor="middle" letter-spacing="0.10" fill="#c7c7d6" stroke="#c7c7d6" stroke-width="0.4">14:15</text>
<text x="976.4" y="793.9" text-anchor="middle" letter-spacing="0.10" fill="#c7c7d6" stroke="#c7c7d6" stroke-width="0.4">14:30</text>
<text x="1030.3" y="793.9" text-anchor="middle" letter-spacing="0.10" fill="#c7c7d6" stroke="#c7c7d6" stroke-width="0.4">14:45</text>
<text x="1084.2" y="793.9" text-anchor="middle" letter-spacing="0.10" fill="#c7c7d6" stroke="#c7c7d6" stroke-width="0.4">15:00</text>
<text x="1138.1" y="793.9" text-anchor="middle" letter-spacing="0.10" fill="#c7c7d6" stroke="#c7c7d6" stroke-width="0.4">15:15</text>
<text x="1192.0" y="793.9" text-anchor="middle" letter-spacing="0.10" fill="#c7c7d6" stroke="#c7c7d6" stroke-width="0.4">15:30</text>
<text x="1245.8" y="793.9" text-anchor="middle" letter-spacing="0.10" fill="#c7c7d6" stroke="#c7c7d6" stroke-width="0.4">15:45</text>
<text x="1299.7" y="793.9" text-anchor="middle" letter-spacing="0.10" fill="#c7c7d6" stroke="#c7c7d6" stroke-width="0.4">16:00</text>
<text x="1353.6" y="793.9" text-anchor="middle" letter-spacing="0.10" fill="#c7c7d6" stroke="#c7c7d6" stroke-width="0.4">16:15</text>
<text transform="translate(26.3 676.0) rotate(-90)" text-anchor="middle" letter-spacing="0.3" fill="#c7c7d6" stroke="#c7c7d6" stroke-width="0.3">out(-) | in(+)</text>
<clipPath id="lc"><rect x="1405" y="560" width="500" height="237.6"/></clipPath><g clip-path="url(#lc)">
<text x="1438.7" y="579.8" letter-spacing="0.12" fill="#6e9fff" stroke="#6e9fff" stroke-width="0.3">Name</text>
<text x="1642.5" y="579.8" text-anchor="end" letter-spacing="0.20" fill="#6e9fff" stroke="#6e9fff" stroke-width="0.3">Min</text>
<text x="1727.3" y="579.8" text-anchor="end" letter-spacing="0.30" fill="#6e9fff" stroke="#6e9fff" stroke-width="0.3">Mean</text>
<path d="M1730 574.5L1732.6 577L1735.2 574.5" fill="none" stroke="#6e9fff" stroke-width="1.2" stroke-linecap="round" stroke-linejoin="round"/>
<text x="1797.7" y="579.8" text-anchor="end" letter-spacing="0.20" fill="#6e9fff" stroke="#6e9fff" stroke-width="0.3">Max</text>
<text x="1884.6" y="579.8" text-anchor="end" letter-spacing="0.30" fill="#6e9fff" stroke="#6e9fff" stroke-width="0.3">Last *</text>
<path d="M1411.0 587.1H1899.7M1411.0 609.5H1899.7M1411.0 631.8H1899.7M1411.0 654.2H1899.7M1411.0 676.6H1899.7M1411.0 699.0H1899.7M1411.0 721.3H1899.7M1411.0 743.7H1899.7M1411.0 766.1H1899.7M1411.0 788.4H1899.7" stroke="#272a30" stroke-width="1" fill="none"/>
<rect x="1417.8" y="596.6" width="14" height="4" rx="2" fill="#705DA0"/>
<text x="1438.7" y="602.6" letter-spacing="0.12" stroke="#ccccdc" stroke-width="0.35">r-1: received</text>
<text x="1661.2" y="602.6" text-anchor="end" letter-spacing="-0.10" stroke="#ccccdc" stroke-width="0.35">17.5 Gb/s</text>
<text x="1738.6" y="602.6" text-anchor="end" letter-spacing="0.05" stroke="#ccccdc" stroke-width="0.35">22.6 Gb/s</text>
<text x="1816.5" y="602.6" text-anchor="end" letter-spacing="0.05" stroke="#ccccdc" stroke-width="0.35">30.9 Gb/s</text>
<text x="1891.7" y="602.6" text-anchor="end" letter-spacing="-0.10" stroke="#ccccdc" stroke-width="0.35">21.0 Gb/s</text>
<rect x="1417.8" y="619.0" width="14" height="4" rx="2" fill="#73BF69"/>
<text x="1438.7" y="625.0" letter-spacing="0.12" stroke="#ccccdc" stroke-width="0.35">r-1: transmitted</text>
<text x="1661.2" y="625.0" text-anchor="end" letter-spacing="-0.10" stroke="#ccccdc" stroke-width="0.35">15.2 Gb/s</text>
<text x="1738.5" y="625.0" text-anchor="end" letter-spacing="-0.10" stroke="#ccccdc" stroke-width="0.35">20.1 Gb/s</text>
<text x="1816.5" y="625.0" text-anchor="end" letter-spacing="0.05" stroke="#ccccdc" stroke-width="0.35">28.5 Gb/s</text>
<text x="1891.7" y="625.0" text-anchor="end" letter-spacing="-0.10" stroke="#ccccdc" stroke-width="0.35">18.4 Gb/s</text>
<rect x="1417.8" y="641.3" width="14" height="4" rx="2" fill="#96D98D"/>
<text x="1438.7" y="647.3" letter-spacing="0.12" stroke="#ccccdc" stroke-width="0.35">r-2: received</text>
<text x="1661.2" y="647.3" text-anchor="end" letter-spacing="-0.10" stroke="#ccccdc" stroke-width="0.35">13.4 Gb/s</text>
<text x="1738.3" y="647.3" text-anchor="end" letter-spacing="-0.25" stroke="#ccccdc" stroke-width="0.35">18.1 Gb/s</text>
<text x="1816.5" y="647.3" text-anchor="end" letter-spacing="0.05" stroke="#ccccdc" stroke-width="0.35">27.3 Gb/s</text>
<text x="1891.7" y="647.3" text-anchor="end" letter-spacing="-0.10" stroke="#ccccdc" stroke-width="0.35">16.0 Gb/s</text>
<rect x="1417.8" y="663.7" width="14" height="4" rx="2" fill="#FFCB7D"/>
<text x="1438.7" y="669.7" letter-spacing="0.12" stroke="#ccccdc" stroke-width="0.35">r-3: received</text>
<text x="1661.2" y="669.7" text-anchor="end" letter-spacing="-0.10" stroke="#ccccdc" stroke-width="0.35">10.9 Gb/s</text>
<text x="1738.3" y="669.7" text-anchor="end" letter-spacing="-0.25" stroke="#ccccdc" stroke-width="0.35">17.1 Gb/s</text>
<text x="1816.5" y="669.7" text-anchor="end" letter-spacing="0.05" stroke="#ccccdc" stroke-width="0.35">26.9 Gb/s</text>
<text x="1891.7" y="669.7" text-anchor="end" letter-spacing="-0.10" stroke="#ccccdc" stroke-width="0.35">15.5 Gb/s</text>
<rect x="1417.8" y="686.1" width="14" height="4" rx="2" fill="#5BC8DC"/>
<text x="1438.7" y="692.1" letter-spacing="0.12" stroke="#ccccdc" stroke-width="0.35">r-4: received</text>
<text x="1661.2" y="692.1" text-anchor="end" letter-spacing="-0.10" stroke="#ccccdc" stroke-width="0.35">10.8 Gb/s</text>
<text x="1738.5" y="692.1" text-anchor="end" letter-spacing="-0.10" stroke="#ccccdc" stroke-width="0.35">16.0 Gb/s</text>
<text x="1816.5" y="692.1" text-anchor="end" letter-spacing="0.05" stroke="#ccccdc" stroke-width="0.35">26.2 Gb/s</text>
<text x="1891.7" y="692.1" text-anchor="end" letter-spacing="-0.10" stroke="#ccccdc" stroke-width="0.35">13.3 Gb/s</text>
<rect x="1417.8" y="708.4" width="14" height="4" rx="2" fill="#F2CC0C"/>
<text x="1438.7" y="714.4" letter-spacing="0.12" stroke="#ccccdc" stroke-width="0.35">r-3: transmitted</text>
<text x="1661.3" y="714.4" text-anchor="end" letter-spacing="0.05" stroke="#ccccdc" stroke-width="0.35">9.6 Gb/s</text>
<text x="1738.5" y="714.4" text-anchor="end" letter-spacing="-0.10" stroke="#ccccdc" stroke-width="0.35">14.5 Gb/s</text>
<text x="1816.5" y="714.4" text-anchor="end" letter-spacing="0.05" stroke="#ccccdc" stroke-width="0.35">23.8 Gb/s</text>
<text x="1891.7" y="714.4" text-anchor="end" letter-spacing="-0.10" stroke="#ccccdc" stroke-width="0.35">12.5 Gb/s</text>
<rect x="1417.8" y="730.8" width="14" height="4" rx="2" fill="#FF780A"/>
<text x="1438.7" y="736.8" letter-spacing="0.12" stroke="#ccccdc" stroke-width="0.35">r-2: transmitted</text>
<text x="1661.3" y="736.8" text-anchor="end" letter-spacing="0.05" stroke="#ccccdc" stroke-width="0.35">9.9 Gb/s</text>
<text x="1738.5" y="736.8" text-anchor="end" letter-spacing="-0.10" stroke="#ccccdc" stroke-width="0.35">14.4 Gb/s</text>
<text x="1816.5" y="736.8" text-anchor="end" letter-spacing="0.05" stroke="#ccccdc" stroke-width="0.35">23.0 Gb/s</text>
<text x="1891.7" y="736.8" text-anchor="end" letter-spacing="-0.10" stroke="#ccccdc" stroke-width="0.35">10.6 Gb/s</text>
<rect x="1417.8" y="753.2" width="14" height="4" rx="2" fill="#8AB8FF"/>
<text x="1438.7" y="759.2" letter-spacing="0.12" stroke="#ccccdc" stroke-width="0.35">r-4: transmitted</text>
<text x="1661.3" y="759.2" text-anchor="end" letter-spacing="0.05" stroke="#ccccdc" stroke-width="0.35">9.4 Gb/s</text>
<text x="1738.5" y="759.2" text-anchor="end" letter-spacing="-0.10" stroke="#ccccdc" stroke-width="0.35">14.2 Gb/s</text>
<text x="1816.5" y="759.2" text-anchor="end" letter-spacing="0.05" stroke="#ccccdc" stroke-width="0.35">23.8 Gb/s</text>
<text x="1891.5" y="759.2" text-anchor="end" letter-spacing="-0.25" stroke="#ccccdc" stroke-width="0.35">11.6 Gb/s</text>
<rect x="1417.8" y="775.6" width="14" height="4" rx="2" fill="#2f6060"/>
<text x="1438.7" y="781.6" letter-spacing="0.12" stroke="#ccccdc" stroke-width="0.35">box-1: received</text>
<text x="1661.2" y="781.6" text-anchor="end" letter-spacing="-0.10" stroke="#ccccdc" stroke-width="0.35">16.7 Mb/s</text>
<text x="1738.6" y="781.6" text-anchor="end" letter-spacing="0.05" stroke="#ccccdc" stroke-width="0.35">305.3 Mb/s</text>
<text x="1816.4" y="781.6" text-anchor="end" letter-spacing="-0.12" stroke="#ccccdc" stroke-width="0.35">1.0 Gb/s</text>
<text x="1891.8" y="781.6" text-anchor="end" letter-spacing="0.05" stroke="#ccccdc" stroke-width="0.35">32.6 Mb/s</text>
<rect x="1417.8" y="797.9" width="14" height="4" rx="2" fill="#3d71d9"/>
<text x="1438.7" y="803.9" letter-spacing="0.12" stroke="#ccccdc" stroke-width="0.35">fw-1-int-PRI: transmitted</text>
<text x="1661.2" y="803.9" text-anchor="end" letter-spacing="-0.09" stroke="#ccccdc" stroke-width="0.35">165.3 Mb/s</text>
<text x="1738.6" y="803.9" text-anchor="end" letter-spacing="0.05" stroke="#ccccdc" stroke-width="0.35">286.3 Mb/s</text>
<text x="1816.4" y="803.9" text-anchor="end" letter-spacing="-0.09" stroke="#ccccdc" stroke-width="0.35">391.2 Mb/s</text>
<text x="1891.7" y="803.9" text-anchor="end" letter-spacing="-0.09" stroke="#ccccdc" stroke-width="0.35">314.6 Mb/s</text>
</g></svg>
<div class="a" style="left:8.0px;top:812.0px;width:946.0px;height:277.5px;background:#181b1f;border:1px solid #292b32;border-radius:3px"></div>
<span class="t" style="top:818.3px;font-size:14px;left:16.3px;letter-spacing:0.37px;-webkit-text-stroke:0.55px #ccccdc;">Network errors</span>
<svg class="a" style="left:128.0px;top:820.3px" width="16" height="16" viewBox="0 0 16 16"><circle cx="8" cy="8" r="6.2" fill="none" stroke="#9a9aa8" stroke-width="1.2"/><rect x="7.4" y="7.2" width="1.3" height="3.6" fill="#9a9aa8"/><rect x="7.4" y="5" width="1.3" height="1.3" fill="#9a9aa8"/></svg>
<svg class="a" style="left:9px;top:845px" width="944" height="243.5" viewBox="9 845 944 243.5">
<path d="M103.5 857.5V1032.0M173.4 857.5V1032.0M243.2 857.5V1032.0M313.1 857.5V1032.0M383.0 857.5V1032.0M452.9 857.5V1032.0M522.8 857.5V1032.0M592.6 857.5V1032.0M662.5 857.5V1032.0M732.4 857.5V1032.0M802.2 857.5V1032.0M872.1 857.5V1032.0M103.5 881.0H938.5M103.5 921.0H938.5M103.5 960.5H938.5M103.5 1000.0H938.5" stroke="#272a30" stroke-width="1" fill="none"/>
<path d="M368.5 921.3H376.0" stroke="#F2CC0C" stroke-width="2" stroke-linecap="round"/>
<path d="M466.5 921.3H487.5" stroke="#F2CC0C" stroke-width="2" stroke-linecap="round"/>
<path d="M522.5 921.3H529.0" stroke="#F2CC0C" stroke-width="2" stroke-linecap="round"/>
<path d="M711.0 921.3H718.0" stroke="#F2CC0C" stroke-width="2" stroke-linecap="round"/>
<circle cx="480" cy="921.3" r="2.2" fill="#73BF69"/>
<circle cx="152.5" cy="921.3" r="2.3" fill="#F2CC0C"/>
<circle cx="166.0" cy="921.3" r="2.3" fill="#705DA0"/>
<circle cx="194.0" cy="921.3" r="2.3" fill="#705DA0"/>
<circle cx="229.0" cy="874.0" r="2.3" fill="#8AB8FF"/>
<circle cx="242.5" cy="874.0" r="2.3" fill="#8AB8FF"/>
<circle cx="229.0" cy="883.5" r="2.3" fill="#FF780A"/>
<circle cx="242.5" cy="894.0" r="2.3" fill="#FF780A"/>
<circle cx="242.5" cy="935.0" r="2.3" fill="#705DA0"/>
<circle cx="229.0" cy="959.0" r="2.3" fill="#705DA0"/>
<circle cx="242.5" cy="961.0" r="2.3" fill="#5794F2"/>
<circle cx="229.0" cy="1016.0" r="2.3" fill="#5794F2"/>
<circle cx="242.5" cy="977.0" r="2.3" fill="#B877D9"/>
<circle cx="263.5" cy="921.3" r="2.3" fill="#F2CC0C"/>
<circle cx="270.5" cy="921.3" r="2.3" fill="#705DA0"/>
<circle cx="319.5" cy="921.5" r="2.3" fill="#705DA0"/>
<circle cx="348.0" cy="921.3" r="2.3" fill="#5794F2"/>
<circle cx="389.5" cy="921.3" r="2.3" fill="#F2CC0C"/>
<circle cx="396.5" cy="921.3" r="2.3" fill="#5794F2"/>
<circle cx="403.5" cy="921.3" r="2.3" fill="#F2CC0C"/>
<circle cx="424.0" cy="921.3" r="2.3" fill="#F2CC0C"/>
<circle cx="452.5" cy="921.3" r="2.3" fill="#F2CC0C"/>
<circle cx="501.5" cy="921.3" r="2.3" fill="#F2CC0C"/>
<circle cx="522.5" cy="912.0" r="2.3" fill="#FF780A"/>
<circle cx="522.5" cy="920.0" r="2.3" fill="#8AB8FF"/>
<circle cx="522.5" cy="923.0" r="2.3" fill="#B877D9"/>
<circle cx="522.5" cy="926.0" r="2.3" fill="#705DA0"/>
<circle cx="564.5" cy="921.3" r="2.3" fill="#73BF69"/>
<circle cx="571.5" cy="921.3" r="2.3" fill="#B877D9"/>
<circle cx="571.5" cy="905.0" r="2.3" fill="#FF780A"/>
<circle cx="585.0" cy="921.3" r="2.3" fill="#705DA0"/>
<circle cx="571.5" cy="937.5" r="2.3" fill="#705DA0"/>
<circle cx="571.5" cy="954.0" r="2.3" fill="#5794F2"/>
<circle cx="634.0" cy="921.0" r="2.3" fill="#705DA0"/>
<circle cx="662.0" cy="921.0" r="2.3" fill="#705DA0"/>
<circle cx="697.0" cy="921.3" r="2.3" fill="#73BF69"/>
<circle cx="711.0" cy="921.3" r="2.3" fill="#705DA0"/>
<circle cx="739.0" cy="921.3" r="2.3" fill="#5794F2"/>
<circle cx="766.5" cy="921.3" r="2.3" fill="#F2CC0C"/>
<circle cx="780.5" cy="921.3" r="2.3" fill="#5794F2"/>
<circle cx="808.5" cy="921.3" r="2.3" fill="#F2495C"/>
<text x="95.2" y="885.3" text-anchor="end" letter-spacing="0.15" fill="#c7c7d6" stroke="#c7c7d6" stroke-width="0.4">1.0 kp/s</text>
<text x="95.2" y="925.3" text-anchor="end" letter-spacing="0.15" fill="#c7c7d6" stroke="#c7c7d6" stroke-width="0.4">0.0 p/s</text>
<text x="95.2" y="964.8" text-anchor="end" letter-spacing="0.15" fill="#c7c7d6" stroke="#c7c7d6" stroke-width="0.4">-1.0 kp/s</text>
<text x="95.2" y="1004.3" text-anchor="end" letter-spacing="0.15" fill="#c7c7d6" stroke="#c7c7d6" stroke-width="0.4">-2.0 kp/s</text>
<text x="103.0" y="1049.6" text-anchor="middle" letter-spacing="0.10" fill="#c7c7d6" stroke="#c7c7d6" stroke-width="0.4">10:30</text>
<text x="172.9" y="1049.6" text-anchor="middle" letter-spacing="0.10" fill="#c7c7d6" stroke="#c7c7d6" stroke-width="0.4">11:00</text>
<text x="242.8" y="1049.6" text-anchor="middle" letter-spacing="0.10" fill="#c7c7d6" stroke="#c7c7d6" stroke-width="0.4">11:30</text>
<text x="312.6" y="1049.6" text-anchor="middle" letter-spacing="0.10" fill="#c7c7d6" stroke="#c7c7d6" stroke-width="0.4">12:00</text>
<text x="382.5" y="1049.6" text-anchor="middle" letter-spacing="0.10" fill="#c7c7d6" stroke="#c7c7d6" stroke-width="0.4">12:30</text>
<text x="452.4" y="1049.6" text-anchor="middle" letter-spacing="0.10" fill="#c7c7d6" stroke="#c7c7d6" stroke-width="0.4">13:00</text>
<text x="522.2" y="1049.6" text-anchor="middle" letter-spacing="0.10" fill="#c7c7d6" stroke="#c7c7d6" stroke-width="0.4">13:30</text>
<text x="592.1" y="1049.6" text-anchor="middle" letter-spacing="0.10" fill="#c7c7d6" stroke="#c7c7d6" stroke-width="0.4">14:00</text>
<text x="662.0" y="1049.6" text-anchor="middle" letter-spacing="0.10" fill="#c7c7d6" stroke="#c7c7d6" stroke-width="0.4">14:30</text>
<text x="731.9" y="1049.6" text-anchor="middle" letter-spacing="0.10" fill="#c7c7d6" stroke="#c7c7d6" stroke-width="0.4">15:00</text>
<text x="801.8" y="1049.6" text-anchor="middle" letter-spacing="0.10" fill="#c7c7d6" stroke="#c7c7d6" stroke-width="0.4">15:30</text>
<text x="871.6" y="1049.6" text-anchor="middle" letter-spacing="0.10" fill="#c7c7d6" stroke="#c7c7d6" stroke-width="0.4">16:00</text>
<text transform="translate(26.3 945.0) rotate(-90)" text-anchor="middle" letter-spacing="0.3" fill="#c7c7d6" stroke="#c7c7d6" stroke-width="0.3">out(-) | in(+)</text>
<rect x="20.0" y="1067.0" width="14" height="4" rx="2" fill="#73BF69"/>
<text x="40.5" y="1072.9" letter-spacing="0.23" stroke="#ccccdc" stroke-width="0.35">r-4: errors in</text>
<rect x="119.0" y="1067.0" width="14" height="4" rx="2" fill="#F2CC0C"/>
<text x="139.5" y="1072.9" letter-spacing="0.03" stroke="#ccccdc" stroke-width="0.35">a-1: errors in</text>
<rect x="217.5" y="1067.0" width="14" height="4" rx="2" fill="#8AB8FF"/>
<text x="238.0" y="1072.9" letter-spacing="0.21" stroke="#ccccdc" stroke-width="0.35">a-3: errors in</text>
<rect x="319.0" y="1067.0" width="14" height="4" rx="2" fill="#FF780A"/>
<text x="339.5" y="1072.9" letter-spacing="0.18" stroke="#ccccdc" stroke-width="0.35">a-2: errors in</text>
<rect x="419.5" y="1067.0" width="14" height="4" rx="2" fill="#F2495C"/>
<text x="440.0" y="1072.9" letter-spacing="0.25" stroke="#ccccdc" stroke-width="0.35">r-4: errors out</text>
<rect x="526.5" y="1067.0" width="14" height="4" rx="2" fill="#5794F2"/>
<text x="547.0" y="1072.9" letter-spacing="0.05" stroke="#ccccdc" stroke-width="0.35">r-1: errors out</text>
<rect x="630.5" y="1067.0" width="14" height="4" rx="2" fill="#B877D9"/>
<text x="651.0" y="1072.9" letter-spacing="0.19" stroke="#ccccdc" stroke-width="0.35">r-2: errors out</text>
<rect x="736.5" y="1067.0" width="14" height="4" rx="2" fill="#705DA0"/>
<text x="757.0" y="1072.9" letter-spacing="0.22" stroke="#ccccdc" stroke-width="0.35">r-3: errors out</text>
</svg>
<div class="a" style="left:962.0px;top:812.0px;width:946.0px;height:277.5px;background:#181b1f;border:1px solid #292b32;border-radius:3px"></div>
<span class="t" style="top:818.3px;font-size:14px;left:970.3px;letter-spacing:0.23px;-webkit-text-stroke:0.55px #ccccdc;">Packets dropped</span>
<svg class="a" style="left:1093.0px;top:820.3px" width="16" height="16" viewBox="0 0 16 16"><circle cx="8" cy="8" r="6.2" fill="none" stroke="#9a9aa8" stroke-width="1.2"/><rect x="7.4" y="7.2" width="1.3" height="3.6" fill="#9a9aa8"/><rect x="7.4" y="5" width="1.3" height="1.3" fill="#9a9aa8"/></svg>
<svg class="a" style="left:963px;top:845px" width="944" height="243.5" viewBox="963 845 944 243.5">
<path d="M1055.0 857.5V977.5M1125.0 857.5V977.5M1195.0 857.5V977.5M1265.0 857.5V977.5M1335.0 857.5V977.5M1405.0 857.5V977.5M1475.0 857.5V977.5M1545.0 857.5V977.5M1615.0 857.5V977.5M1685.0 857.5V977.5M1755.0 857.5V977.5M1825.0 857.5V977.5M1050.5 867.5H1890.0M1050.5 884.2H1890.0M1050.5 900.9H1890.0M1050.5 917.6H1890.0M1050.5 934.3H1890.0M1050.5 951.0H1890.0M1050.5 967.7H1890.0" stroke="#272a30" stroke-width="1" fill="none"/>
<defs><linearGradient id="gd" gradientUnits="userSpaceOnUse" x1="0" y1="917.6" x2="0" y2="951.0"><stop offset="0" stop-color="#73BF69" stop-opacity="0.22"/><stop offset="1" stop-color="#73BF69" stop-opacity="0.10"/></linearGradient></defs>
<path d="M1050.5 922.6l2 .7 2 .1 2-.1 2-.2 2-.4 2 .1 2 .3 2 .4 2 .4 2 .2 2 .1 2 0 2 0 2-.1 2-.1 2-.2 2-.3 2-.2 2-.2 2-.1 2 0 2-.1 2 0 2-.1 2 0 2 .2 2 .3 2 .4 2 .2 2 .1 2 0 2 0 2 0 2-.1 2-.1 2-.2 2-.1 2-.2 2 0 2 .2 2 .2 2 .2 2 .2 2 .1 2 .1 2 0 2-.1 2-.2 2-.3 2-.4 2-.3 2-.4 2 0 2 .2 2 .3 2 .4 2 .2 2 0 2-.1 2-.3 2-.9 2-2.1 2-3.7 2-3.9 2-2 2 2.4 2 3.4 2 3.8 2 1.5 2 .8 2 .2 2 .1 2 .2 2 .1 2 .2 2 0 2 0 2-.2 2-.5 2-.6 2-.7 2-.5 2-.3 2-.2 2 .1 2 .2 2 .3 2 .4 2 .4 2 .3 2 .3 2-.1 2 0 2-.2 2 0 2 .1 2 .1 2 .1 2 0 2 0 2 0 2 0 2 .2 2 0 2 .1 2 0 2-.1 2 .1 2 .1 2 0 2 .2 2 .1 2 .3 2 .4 2 .2 2 .1 2-.3 2-.3 2-.4 2 0 2 .1 2 .3 2 .1 2 .1 2-.1 2-.1 2 .1 2 .1 2-.1 2 0 2-.1 2-.1 2-.1 2 0 2-.1 2-.1 2-.2 2-.1 2-.2 2-.3 2 0 2 0 2 .3 2 .6 2 .7 2 .2 2 .2 2-.2 2-.4 2-.4 2-.3 2-.1 2 0 2 .1 2 .1 2 .2 2 0 2 0 2-.1 2-.2 2-.2 2-.2 2-.2 2-.4 2-.4 2-.2 2 0 2 .3 2 .2 2 .2 2-.1 2-.1 2 0 2 .1 2 .2 2 .1 2 0 2 .1 2 .1 2 .4 2 .2 2 .3 2-.1 2-.1 2-.4 2-.4 2-.3 2-.2 2-.1 2-.2 2-.1 2 0 2 .1 2 .4 2 .3 2 .3 2 .3 2 .2 2 .3 2 .1 2-.1 2-.1 2-.5 2-1.4 2-3.5 2-9.9 2-15.1 2-18.8 2-4.5 2 10 2 14.5 2 16.7 2 6.8 2 2.9 2 .5 2 .1 2-.2 2-.2 2-.1 2 .1 2 .2 2 .2 2 .3 2 .3 2 .3 2 .2 2-.1 2-.3 2-.4 2-.4 2-.1 2 0 2 .3 2 .6 2 .5 2 .4 2 0 2-.1 2 0 2 .1 2 .4 2 .4 2 .4 2 .4 2 .6 2 .6 2 .6 2 .3 2 .1 2-.2 2-.1 2 .1 2 .1 2 .5 2 .6 2 .4 2 .5 2 .2 2 .1 2-.1 2-.1 2-.3 2-.5 2-.3 2-.1 2 .2 2 .4 2 .6 2 .3 2 .2 2-.1 2 0 2 0 2 .1 2 0 2-.1 2-.5 2-.7 2-.4 2-.2 2 .1 2 .2 2 0 2 .1 2 .2 2 .4 2 .7 2 .2 2 .1 2-.2 2-.4 2-.4 2-.2 2 0 2 0 2-.1 2-.6 2-1.2 2-1.1 2-1 2-.6 2-.1 2-.1 2 .1 2 .3 2 0 2 0 2 .3 2 .4 2 .4 2-.1 2-.1 2-.3 2-.2 2-.1 2 0 2 .4 2 .3 2 .2 2 0 2-.2 2-.4 2-.1 2 .1 2 .2 2 .6 2 .6 2 .3 2-.4 2-.9 2-2.4 2-3.5 2-3.9 2-1.4 2-.4 2 3.3 2 3.6 2 3 2 1.2 2 .6 2 .2 2 .2 2 .9 2 1 2 1 2 .3 2 0 2-.1 2-.4 2-.7 2-.4 2-.3 2 .1 2 .3 2 .2 2 .3 2 .2 2 .3 2 .3 2 .4 2 .3 2 .2 2 0 2-.2 2-.4 2-.6 2-.5 2-.4 2-.1 2 0 2 .1 2 .1 2 .1 2 .2 2 .4 2 .4 2 .5 2 .5 2 .1 2 .1 2 0 2 .1 2 .3 2 .3 2-.1 2-.3 2-.5 2-.1 2 0 2 .2 2 .2 2 0 2-.1 2-.3 2-.3 2-.3 2-.2 2-.1 2-.7 2-.8 2-.9 2-.4 2-.3 2-.4 2-.3 2 0 2 0 2 .3 2 .4 2 .5 2 .4 2 .2 2-.1 2-.1 2-.4 2 0 2 .1 2 .2 2 .5V951H1050.5Z" fill="url(#gd)"/>
<path d="M1050.5 922.6l2 .7 2 .1 2-.1 2-.2 2-.4 2 .1 2 .3 2 .4 2 .4 2 .2 2 .1 2 0 2 0 2-.1 2-.1 2-.2 2-.3 2-.2 2-.2 2-.1 2 0 2-.1 2 0 2-.1 2 0 2 .2 2 .3 2 .4 2 .2 2 .1 2 0 2 0 2 0 2-.1 2-.1 2-.2 2-.1 2-.2 2 0 2 .2 2 .2 2 .2 2 .2 2 .1 2 .1 2 0 2-.1 2-.2 2-.3 2-.4 2-.3 2-.4 2 0 2 .2 2 .3 2 .4 2 .2 2 0 2-.1 2-.3 2-.9 2-2.1 2-3.7 2-3.9 2-2 2 2.4 2 3.4 2 3.8 2 1.5 2 .8 2 .2 2 .1 2 .2 2 .1 2 .2 2 0 2 0 2-.2 2-.5 2-.6 2-.7 2-.5 2-.3 2-.2 2 .1 2 .2 2 .3 2 .4 2 .4 2 .3 2 .3 2-.1 2 0 2-.2 2 0 2 .1 2 .1 2 .1 2 0 2 0 2 0 2 0 2 .2 2 0 2 .1 2 0 2-.1 2 .1 2 .1 2 0 2 .2 2 .1 2 .3 2 .4 2 .2 2 .1 2-.3 2-.3 2-.4 2 0 2 .1 2 .3 2 .1 2 .1 2-.1 2-.1 2 .1 2 .1 2-.1 2 0 2-.1 2-.1 2-.1 2 0 2-.1 2-.1 2-.2 2-.1 2-.2 2-.3 2 0 2 0 2 .3 2 .6 2 .7 2 .2 2 .2 2-.2 2-.4 2-.4 2-.3 2-.1 2 0 2 .1 2 .1 2 .2 2 0 2 0 2-.1 2-.2 2-.2 2-.2 2-.2 2-.4 2-.4 2-.2 2 0 2 .3 2 .2 2 .2 2-.1 2-.1 2 0 2 .1 2 .2 2 .1 2 0 2 .1 2 .1 2 .4 2 .2 2 .3 2-.1 2-.1 2-.4 2-.4 2-.3 2-.2 2-.1 2-.2 2-.1 2 0 2 .1 2 .4 2 .3 2 .3 2 .3 2 .2 2 .3 2 .1 2-.1 2-.1 2-.5 2-1.4 2-3.5 2-9.9 2-15.1 2-18.8 2-4.5 2 10 2 14.5 2 16.7 2 6.8 2 2.9 2 .5 2 .1 2-.2 2-.2 2-.1 2 .1 2 .2 2 .2 2 .3 2 .3 2 .3 2 .2 2-.1 2-.3 2-.4 2-.4 2-.1 2 0 2 .3 2 .6 2 .5 2 .4 2 0 2-.1 2 0 2 .1 2 .4 2 .4 2 .4 2 .4 2 .6 2 .6 2 .6 2 .3 2 .1 2-.2 2-.1 2 .1 2 .1 2 .5 2 .6 2 .4 2 .5 2 .2 2 .1 2-.1 2-.1 2-.3 2-.5 2-.3 2-.1 2 .2 2 .4 2 .6 2 .3 2 .2 2-.1 2 0 2 0 2 .1 2 0 2-.1 2-.5 2-.7 2-.4 2-.2 2 .1 2 .2 2 0 2 .1 2 .2 2 .4 2 .7 2 .2 2 .1 2-.2 2-.4 2-.4 2-.2 2 0 2 0 2-.1 2-.6 2-1.2 2-1.1 2-1 2-.6 2-.1 2-.1 2 .1 2 .3 2 0 2 0 2 .3 2 .4 2 .4 2-.1 2-.1 2-.3 2-.2 2-.1 2 0 2 .4 2 .3 2 .2 2 0 2-.2 2-.4 2-.1 2 .1 2 .2 2 .6 2 .6 2 .3 2-.4 2-.9 2-2.4 2-3.5 2-3.9 2-1.4 2-.4 2 3.3 2 3.6 2 3 2 1.2 2 .6 2 .2 2 .2 2 .9 2 1 2 1 2 .3 2 0 2-.1 2-.4 2-.7 2-.4 2-.3 2 .1 2 .3 2 .2 2 .3 2 .2 2 .3 2 .3 2 .4 2 .3 2 .2 2 0 2-.2 2-.4 2-.6 2-.5 2-.4 2-.1 2 0 2 .1 2 .1 2 .1 2 .2 2 .4 2 .4 2 .5 2 .5 2 .1 2 .1 2 0 2 .1 2 .3 2 .3 2-.1 2-.3 2-.5 2-.1 2 0 2 .2 2 .2 2 0 2-.1 2-.3 2-.3 2-.3 2-.2 2-.1 2-.7 2-.8 2-.9 2-.4 2-.3 2-.4 2-.3 2 0 2 0 2 .3 2 .4 2 .5 2 .4 2 .2 2-.1 2-.1 2-.4 2 0 2 .1 2 .2 2 .5" fill="none" stroke="#73BF69" stroke-width="2.5" stroke-linejoin="round" stroke-linecap="round"/>
<path d="M1050.5 951.3H1890.0" stroke="#d9922e" stroke-width="4.2"/>
<path d="M1050.5 951.3H1890.0" stroke="#F2CC0C" stroke-width="2.6"/>
<path d="M1698 953.5C1702 956 1708 957 1714 954.5" fill="none" stroke="#96D98D" stroke-width="2" stroke-linecap="round"/>
<circle cx="1117.5" cy="952.3" r="2.1" fill="#FF780A"/>
<circle cx="1153.0" cy="952.3" r="2.1" fill="#1F60C4"/>
<circle cx="1160.0" cy="952.3" r="2.1" fill="#FFE08A"/>
<circle cx="1181.0" cy="952.3" r="2.1" fill="#8AB8FF"/>
<circle cx="1237.0" cy="952.3" r="2.1" fill="#F9BA8F"/>
<circle cx="1251.0" cy="952.3" r="2.1" fill="#C4162A"/>
<circle cx="1272.0" cy="952.3" r="2.1" fill="#C4162A"/>
<circle cx="1300.0" cy="952.3" r="2.1" fill="#F2CC0C"/>
<circle cx="1335.0" cy="952.3" r="2.1" fill="#F2CC0C"/>
<circle cx="1440.0" cy="952.3" r="2.1" fill="#8AB8FF"/>
<circle cx="1454.0" cy="952.3" r="2.1" fill="#8AB8FF"/>
<circle cx="1475.0" cy="952.3" r="2.1" fill="#F29191"/>
<circle cx="1538.0" cy="952.3" r="2.1" fill="#FFE08A"/>
<circle cx="1587.0" cy="952.3" r="2.1" fill="#FFE08A"/>
<circle cx="1642.0" cy="952.3" r="2.1" fill="#1F60C4"/>
<circle cx="1720.0" cy="952.3" r="2.1" fill="#1F60C4"/>
<circle cx="1832.0" cy="952.3" r="2.1" fill="#8AB8FF"/>
<circle cx="1195" cy="955.3" r="2.2" fill="#E5A8E2"/><circle cx="1195" cy="968.7" r="2.2" fill="#8AC6E8"/>
<path d="M1204 951.8H1216M1636 951.8H1647M1735 951.8H1741M1776 951.8H1783" stroke="#C4162A" stroke-width="1.6"/>
<path d="M1394 953.5C1397 955.5 1401 955.5 1404 953.5M1562 949.8H1576M1734 951.6H1748" fill="none" stroke="#3274D9" stroke-width="1.8"/>
<text x="1047.2" y="871.8" text-anchor="end" letter-spacing="0.15" fill="#c7c7d6" stroke="#c7c7d6" stroke-width="0.4">5.0 kp/s</text>
<text x="1047.2" y="888.5" text-anchor="end" letter-spacing="0.15" fill="#c7c7d6" stroke="#c7c7d6" stroke-width="0.4">4.0 kp/s</text>
<text x="1047.2" y="905.2" text-anchor="end" letter-spacing="0.15" fill="#c7c7d6" stroke="#c7c7d6" stroke-width="0.4">3.0 kp/s</text>
<text x="1047.2" y="921.9" text-anchor="end" letter-spacing="0.15" fill="#c7c7d6" stroke="#c7c7d6" stroke-width="0.4">2.0 kp/s</text>
<text x="1047.2" y="938.6" text-anchor="end" letter-spacing="0.15" fill="#c7c7d6" stroke="#c7c7d6" stroke-width="0.4">1.0 kp/s</text>
<text x="1047.2" y="955.3" text-anchor="end" letter-spacing="0.15" fill="#c7c7d6" stroke="#c7c7d6" stroke-width="0.4">0.0 p/s</text>
<text x="1047.2" y="972.0" text-anchor="end" letter-spacing="0.15" fill="#c7c7d6" stroke="#c7c7d6" stroke-width="0.4">-1.0 kp/s</text>
<text x="1055.0" y="997.9" text-anchor="middle" letter-spacing="0.10" fill="#c7c7d6" stroke="#c7c7d6" stroke-width="0.4">10:30</text>
<text x="1125.0" y="997.9" text-anchor="middle" letter-spacing="0.10" fill="#c7c7d6" stroke="#c7c7d6" stroke-width="0.4">11:00</text>
<text x="1195.0" y="997.9" text-anchor="middle" letter-spacing="0.10" fill="#c7c7d6" stroke="#c7c7d6" stroke-width="0.4">11:30</text>
<text x="1265.0" y="997.9" text-anchor="middle" letter-spacing="0.10" fill="#c7c7d6" stroke="#c7c7d6" stroke-width="0.4">12:00</text>
<text x="1335.0" y="997.9" text-anchor="middle" letter-spacing="0.10" fill="#c7c7d6" stroke="#c7c7d6" stroke-width="0.4">12:30</text>
<text x="1405.0" y="997.9" text-anchor="middle" letter-spacing="0.10" fill="#c7c7d6" stroke="#c7c7d6" stroke-width="0.4">13:00</text>
<text x="1475.0" y="997.9" text-anchor="middle" letter-spacing="0.10" fill="#c7c7d6" stroke="#c7c7d6" stroke-width="0.4">13:30</text>
<text x="1545.0" y="997.9" text-anchor="middle" letter-spacing="0.10" fill="#c7c7d6" stroke="#c7c7d6" stroke-width="0.4">14:00</text>
<text x="1615.0" y="997.9" text-anchor="middle" letter-spacing="0.10" fill="#c7c7d6" stroke="#c7c7d6" stroke-width="0.4">14:30</text>
<text x="1685.0" y="997.9" text-anchor="middle" letter-spacing="0.10" fill="#c7c7d6" stroke="#c7c7d6" stroke-width="0.4">15:00</text>
<text x="1755.0" y="997.9" text-anchor="middle" letter-spacing="0.10" fill="#c7c7d6" stroke="#c7c7d6" stroke-width="0.4">15:30</text>
<text x="1825.0" y="997.9" text-anchor="middle" letter-spacing="0.10" fill="#c7c7d6" stroke="#c7c7d6" stroke-width="0.4">16:00</text>
<text transform="translate(979.5 919.0) rotate(-90)" text-anchor="middle" letter-spacing="0.3" fill="#c7c7d6" stroke="#c7c7d6" stroke-width="0.3">out(-) | in(+)</text>
<clipPath id="ld"><rect x="963" y="1000" width="944" height="81.8"/></clipPath><g clip-path="url(#ld)">
<rect x="973.5" y="1016.0" width="14" height="4" rx="2" fill="#73BF69"/>
<text x="994.0" y="1021.9" letter-spacing="0.25" stroke="#ccccdc" stroke-width="0.35">a-3: dropped in</text>
<rect x="1088.0" y="1016.0" width="14" height="4" rx="2" fill="#F2CC0C"/>
<text x="1108.5" y="1021.9" letter-spacing="0.17" stroke="#ccccdc" stroke-width="0.35">fw-1-edge-PRI: dropped in</text>
<rect x="1263.5" y="1016.0" width="14" height="4" rx="2" fill="#8AB8FF"/>
<text x="1284.0" y="1021.9" letter-spacing="0.22" stroke="#ccccdc" stroke-width="0.35">fw-1-int-S: dropped in</text>
<rect x="1413.5" y="1016.0" width="14" height="4" rx="2" fill="#FF780A"/>
<text x="1434.0" y="1021.9" letter-spacing="0.16" stroke="#ccccdc" stroke-width="0.35">fw-1-int-PRI: dropped in</text>
<rect x="1574.5" y="1016.0" width="14" height="4" rx="2" fill="#F2495C"/>
<text x="1595.0" y="1021.9" letter-spacing="0.10" stroke="#ccccdc" stroke-width="0.35">asav-1-ops: dropped in</text>
<rect x="973.5" y="1038.0" width="14" height="4" rx="2" fill="#5794F2"/>
<text x="994.0" y="1043.9" letter-spacing="0.19" stroke="#ccccdc" stroke-width="0.35">fw-1-vpn-PRI: dropped in</text>
<rect x="1141.5" y="1038.0" width="14" height="4" rx="2" fill="#B877D9"/>
<text x="1162.0" y="1043.9" letter-spacing="0.24" stroke="#ccccdc" stroke-width="0.35">asav-3-ops: dropped in</text>
<rect x="1299.5" y="1038.0" width="14" height="4" rx="2" fill="#705DA0"/>
<text x="1320.0" y="1043.9" letter-spacing="0.28" stroke="#ccccdc" stroke-width="0.35">fw-1-vpn-S: dropped in</text>
<rect x="1457.0" y="1038.0" width="14" height="4" rx="2" fill="#37872D"/>
<text x="1477.5" y="1043.9" letter-spacing="0.25" stroke="#ccccdc" stroke-width="0.35">fw-1-edge-S: dropped in</text>
<rect x="1621.5" y="1038.0" width="14" height="4" rx="2" fill="#FADE2A"/>
<text x="1642.0" y="1043.9" letter-spacing="0.24" stroke="#ccccdc" stroke-width="0.35">fw-1-sec.bn: dropped in</text>
<rect x="973.5" y="1060.1" width="14" height="4" rx="2" fill="#447EBC"/>
<text x="994.0" y="1066.0" letter-spacing="0.26" stroke="#ccccdc" stroke-width="0.35">fw-1-pri.bn: dropped in</text>
<rect x="1130.0" y="1060.1" width="14" height="4" rx="2" fill="#C15C17"/>
<text x="1150.5" y="1066.0" letter-spacing="0.15" stroke="#ccccdc" stroke-width="0.35">asav-s2s: dropped in</text>
<rect x="1274.5" y="1060.1" width="14" height="4" rx="2" fill="#890F02"/>
<text x="1295.0" y="1066.0" letter-spacing="0.24" stroke="#ccccdc" stroke-width="0.35">asav-3-ops: dropped out</text>
<rect x="1440.0" y="1060.1" width="14" height="4" rx="2" fill="#0A437C"/>
<text x="1460.5" y="1066.0" letter-spacing="0.11" stroke="#ccccdc" stroke-width="0.35">a-1.skin: dropped out</text>
<rect x="1585.0" y="1060.1" width="14" height="4" rx="2" fill="#6D1F62"/>
<text x="1605.5" y="1066.0" letter-spacing="0.33" stroke="#ccccdc" stroke-width="0.35">a-56-r2: dropped out</text>
<rect x="1731.0" y="1060.1" width="14" height="4" rx="2" fill="#584477"/>
<text x="1751.5" y="1066.0" letter-spacing="0.15" stroke="#ccccdc" stroke-width="0.35">asav-1-ops: dropped out</text>
<rect x="973.5" y="1082.2" width="14" height="4" rx="2" fill="#B7DBAB"/>
<text x="994.0" y="1088.1" letter-spacing="0.32" stroke="#ccccdc" stroke-width="0.35">fw-1-pri.bn: dropped out</text>
<rect x="1138.5" y="1082.2" width="14" height="4" rx="2" fill="#F4D598"/>
<text x="1159.0" y="1088.1" letter-spacing="-0.02" stroke="#ccccdc" stroke-width="0.35">a-b1-1: dropped out</text>
<rect x="1284.5" y="1082.2" width="14" height="4" rx="2" fill="#70DBED"/>
<text x="1305.0" y="1088.1" letter-spacing="0.23" stroke="#ccccdc" stroke-width="0.35">c9300x-1: dropped out</text>
<rect x="1440.0" y="1082.2" width="14" height="4" rx="2" fill="#F9BA8F"/>
<text x="1460.5" y="1088.1" letter-spacing="0.07" stroke="#ccccdc" stroke-width="0.35">box-1: dropped out</text>
<rect x="1574.5" y="1082.2" width="14" height="4" rx="2" fill="#F29191"/>
<text x="1595.0" y="1088.1" letter-spacing="0.08" stroke="#ccccdc" stroke-width="0.35">a-56-r1: dropped out</text>
<rect x="1717.0" y="1082.2" width="14" height="4" rx="2" fill="#82B5D8"/>
<text x="1737.5" y="1088.1" letter-spacing="0.04" stroke="#ccccdc" stroke-width="0.35">r-1: dropped out</text>
</g></svg>
<div class="a" style="left:8.0px;top:1098.0px;width:627.5px;height:277.5px;background:#181b1f;border:1px solid #292b32;border-radius:3px"></div>
<span class="t" style="top:1104.3px;font-size:14px;left:16.3px;letter-spacing:0.33px;-webkit-text-stroke:0.55px #ccccdc;">Unicast</span>
<svg class="a" style="left:79.7px;top:1106.0px" width="16" height="16" viewBox="0 0 16 16"><circle cx="8" cy="8" r="6.2" fill="none" stroke="#9a9aa8" stroke-width="1.2"/><rect x="7.4" y="7.2" width="1.3" height="3.6" fill="#9a9aa8"/><rect x="7.4" y="5" width="1.3" height="1.3" fill="#9a9aa8"/></svg>
<svg class="a" style="left:9px;top:1130px" width="625.5" height="244.5" viewBox="9 1130 625.5 244.5">
<path d="M158.0 1143.3V1260.0M242.3 1143.3V1260.0M326.6 1143.3V1260.0M410.9 1143.3V1260.0M495.2 1143.3V1260.0M579.5 1143.3V1260.0M112.3 1157.0H619.3M112.3 1180.5H619.3M112.3 1204.0H619.3M112.3 1227.5H619.3M112.3 1251.0H619.3" stroke="#272a30" stroke-width="1" fill="none"/>
<path d="M112.8 1163.5l2-.9 2 1.1 2 2 2 1.7 2 .3 2-2 2-2.1 2-1.2 2-2.6 2-2.8 2 1 2 4.1 2 4.4 2 1.6 2-1.5 2-2.6 2-3 2-3 2-.6 2 2.6 2 4 2 2.5 2-1.2 2-3.1 2-2.8 2-1.9 2-.7 2 0 2 1.7 2 2.8 2 .8 2-.9 2 1 2 3.5 2 4.5 2 1.8 2-2.1 2-3.9 2-4.2 2-3.8 2-1.8 2 .9 2 2.8 2 2.8 2 .5 2-.6 2 .1 2 2.4 2 3.4 2 1.2 2-1.7 2-4 2-2.8 2-.2 2 1.7 2 3.6 2 4.2 2 .8 2-2.8 2-1.4 2 0 2-.3 2-.9 2-1 2 0 2-.2 2-2.2 2-2.8 2-1.6 2 .2 2 1.4 2 1.2 2 .6 2 .8 2 2.9 2 3.6 2 .2 2-1.8 2-.9 2 .8 2 1.8 2 .3 2-1.5 2-2.3 2-1.5 2-.9 2-2.1 2-2.8 2-1.5 2 .3 2 1.3 2-.1 2-1.8 2-1.5 2 .9 2 3.9 2 4 2 2.4 2 1 2 1 2 1.9 2 1.3 2-.7 2-3.3 2-3.3 2-.8 2-.1 2-.8 2-.9 2-.3 2 .8 2 .5 2-.5 2 .5 2 1.8 2 1.8 2 1.1 2-.1 2-1.2 2-1.9 2-2 2-1.9 2-1.6 2-1.3 2-.7 2 .6 2 2.2 2 3.2 2 2.1 2 .1 2-.6 2-.5 2-.1 2 .2 2 .3 2 .7 2 .9 2 .7 2-.3 2-1.7 2-3.4 2-3.5 2-.8 2 2.9 2 5.5 2 3.3 2-.2 2-.8 2-1.9 2-4.3 2-3.5 2-.2 2 2.8 2 3.7 2 1.8 2-.5 2-1.8 2 .4 2 3.8 2 6 2 4.4 2-.4 2-3.2 2-3.8 2-2.8 2-1.8 2-.7 2 1.6 2 3.7 2 3.1 2 2 2 .8 2-1.4 2-3.2 2-2.6 2 .1 2 3.3 2 2 2-1.8 2-2.4 2-.6 2 1.9 2 2.8 2 1.5 2-1.6 2-2.7 2 .6 2 1.3 2-2 2-1.8 2 .1 2 .2 2-.6 2-.9 2-.9 2-.7 2-.6 2 .3 2 2.8 2 3.2 2 1.3 2-1.5 2-2.6 2-.5 2 1.1 2 .9 2 .4 2 .1 2 1 2 1.1 2 .2 2-.1 2-.4 2-.9 2-1.6 2-1.9 2-1.4 2-.1 2 .9 2 .8 2-.6 2-.7 2 .6 2 2.1 2 2.1 2-.4 2-2.6 2-2.5 2 1 2 4 2 1.8 2 .6 2 1.5 2 .5 2-1.4 2-.4 2 .7 2 .6 2 .2 2-.1 2-.7 2-1.8 2-3.4 2-2.6 2-.4 2 0 2 .4 2 2 2 1.5 2-1.4 2-2.3 2-.7 .5 .4V1204H112.8Z" fill="#73BF69" fill-opacity="0.12"/>
<path d="M112.8 1167.2l2-1.2 2 2.4 2 2.9 2 0 2-3.3 2-5 2-4.6 2-3.2 2-2.2 2-1 2 1 2 2 2 1.8 2 1.8 2 1.8 2 .6 2 .1 2 .5 2 .6 2 .1 2-.7 2-.8 2 0 2-1.2 2-3 2-1.8 2 .3 2 1 2 1.9 2 2.5 2 2.8 2 2.7 2 2.5 2 1 2-1.3 2-2 2-1.9 2-1.9 2-.8 2 1.3 2 1.1 2-.9 2-2.8 2-2.5 2 .2 2 1.4 2 1 2 1.3 2 .7 2-1.5 2-2.7 2-2 2 .1 2 2 2 2 2 1.7 2 1.5 2 1.7 2 1.5 2 .5 2-1 2-2.2 2-1.2 2 .4 2 .2 2-1 2-2.3 2-2 2-.7 2-.2 2 .8 2 3.1 2 3.1 2 1.4 2 .7 2 .8 2 .7 2 1 2 1.3 2 .3 2-.9 2-1.4 2-2 2-2.6 2-1 2 1.1 2 1.1 2 0 2-1.2 2-1.5 2-1.1 2-.5 2-.6 2-1.5 2-.9 2 1.5 2 4.1 2 4.1 2-.5 2-2.7 2-1.3 2-.3 2-.1 2-.4 2-.7 2-1 2-1.6 2-1.8 2-1.2 2-.8 2-.6 2-.1 2 .8 2 1.7 2 2.3 2 1.9 2 1.9 2 1.5 2-1.2 2-3 2-1.6 2 .1 2 .6 2 .7 2 1 2 1.3 2 1.9 2 2.2 2 .2 2-1.7 2 0 2 2.2 2 2.6 2 2.7 2 2 2-.6 2-2.9 2-3.2 2-1.5 2 .3 2-.3 2-1.3 2 0 2 1.9 2 3 2 1.6 2-.5 2-.6 2-1 2-2.1 2-1 2 1 2 .5 2-1.1 2-2.6 2-2.7 2-1.2 2 1.7 2 4.6 2 5.5 2 4.3 2 1.2 2-2.7 2-4.7 2-3.4 2-1.3 2 .3 2 2.2 2 3 2 .9 2-1.9 2-3.1 2-1.5 2 1.3 2 2.3 2 1.5 2-.5 2-1.1 2-.3 2 1.1 2 1.5 2 .3 2-.4 2-.4 2 0 2 .5 2 1 2 1.4 2 1.8 2 .4 2-1.7 2-3.1 2-2.4 2 0 2 .6 2 .2 2 1.6 2 2.3 2 1 2 .3 2 .1 2-.8 2 0 2 4.1 2 4.3 2-.2 2-4.2 2-4.9 2-1.2 2 1.4 2 1 2 1.1 2 1.1 2-.5 2-2 2-2.4 2-.1 2 2.3 2 .6 2-2.1 2-2.7 2-.9 2 1.8 2 2 2 .7 2-.8 2-1.6 2-1.1 2 1.1 2 3.1 2 2.6 2 .8 2-1.1 2-2.1 2-2.3 2-2.1 2-.6 2 1.9 2 2.1 2 .4 2-.5 2 .1 2 2 2 1.6 2-.9 2-2.1 2-1.2 2 2 2 3 2 1 2-1.3 2-3.6 .5-1.3V1204H112.8Z" fill="#8AB8FF" fill-opacity="0.1"/>
<path d="M112.8 1173l2-4 2 .1 2 3 2 4.5 2 1.6 2-5.8 2-7.4 2-3.4 2-.8 2 1.1 2 3.3 2 3.4 2 1.3 2-.4 2-1.6 2-2.5 2-2.6 2-1.8 2 .2 2 2 2 1 2 .5 2 1.7 2 1.9 2 .8 2-1.1 2-2.7 2-3.4 2-2 2 .6 2 2 2 1.9 2 1 2 1.6 2 3.2 2 3.5 2 1.2 2-3 2-4.6 2-2.2 2 .4 2 1.8 2 1.4 2 1.5 2 2.4 2 .3 2-3.2 2-3.7 2-2.1 2-.1 2 .2 2-.8 2 .1 2 1.4 2 1.9 2 1.6 2 1 2 .5 2-.9 2-3.7 2-3.1 2 1.3 2 3.8 2 3.7 2 1.9 2-1.2 2-4.7 2-4.7 2-2.1 2 .5 2 3.1 2 4.9 2 3.4 2 .3 2 .4 2 .8 2-2 2-2.8 2-1.3 2-2.1 2-2.4 2 .8 2 2.9 2 1.8 2-.2 2-.8 2 3 2 4.7 2 .8 2-2.6 2-4 2-4.3 2-3 2-.6 2 1.5 2 2.9 2 4.1 2 3.6 2 1.2 2-.3 2-.6 2-2 2-3 2-1.4 2-.4 2-1.2 2-2 2-1.5 2 .7 2 1.6 2 .1 2-.2 2 .8 2 1.5 2 1.4 2 .7 2 .2 2-.1 2 .1 2 0 2-1.5 2-2.9 2-3.1 2 .2 2 3.3 2 2.3 2 .7 2 .8 2 1.6 2 1.4 2-1.8 2-2.9 2 .6 2 3.5 2 4 2 .9 2-1.3 2 .1 2-.3 2-3.1 2-5 2-4.3 2-.5 2 3.9 2 6.7 2 4.7 2 .1 2-3.8 2-5.7 2-5.1 2-2 2 1.5 2 2.3 2 2.6 2 3.5 2 1.7 2-.9 2 .2 2 3 2 4.6 2 3 2-1 2-3.5 2-3.5 2-1 2 .5 2-.1 2-.9 2-1 2 .9 2 1.9 2 1.2 2-.1 2-.8 2 .2 2 .3 2-1.3 2-1.7 2 0 2 2 2 3.2 2 2.1 2 0 2-2.1 2-2.1 2-1.6 2-1.7 2-.3 2 2.5 2 2.4 2-.5 2-3.8 2-2.9 2 2.4 2 1.7 2-2.3 2-.5 2 2.1 2 1.9 2 1.7 2 1.7 2 .3 2-.8 2 .2 2 .7 2-.1 2-.9 2-.8 2 1.1 2 1.5 2 .2 2 1.3 2 2.9 2 .6 2-2 2-3.1 2-2.4 2-1.2 2-1.6 2-1.2 2 1.8 2 3.2 2 2.4 2 .9 2-.7 2-1.7 2-2 2-1.5 2 1.1 2 3.2 2 2.5 2 1 2-.2 2-.8 2-.8 2 .5 2 .2 2-2.6 2-2.9 2-.8 2 1.3 2 1.7 2 0 2-.2 2 .3 2-1.6 2-3 2-.9 2-.3 2-1.8 2-.8 2 3.2 .5 1.8V1204H112.8Z" fill="#AEA2E0" fill-opacity="0.08"/>
<path d="M112.8 1161.1l2 1.4 2 3.4 2 3.9 2 2.7 2-.1 2-4.3 2-5.5 2-3.2 2 1.2 2 3.8 2 2.3 2 .1 2-1.3 2-2.9 2-2.5 2 1.6 2 3.6 2 1.8 2-.6 2-2.6 2-4.4 2-2.5 2 3.1 2 3.5 2 0 2-1.5 2-1.1 2 .6 2 1.2 2 .4 2-.4 2-.4 2 .5 2 1 2 .1 2-1.2 2-2 2-.6 2 .9 2 2 2 2 2 1 2-1 2-2.1 2-1.4 2-.2 2 .7 2 .1 2-1.5 2-3.4 2-.9 2 3.8 2 4.5 2 2 2-1.1 2-1.4 2 .5 2 .2 2-1.2 2-1.2 2-.5 2 .3 2 .7 2 .4 2-.3 2-.7 2-.6 2-.5 2-.4 2 .4 2 .8 2 .7 2 .6 2 1.1 2 2.6 2 2.6 2-.7 2-2 2-.4 2 .3 2-.1 2-.3 2 .1 2 1.3 2 .7 2-.2 2 1 2 1.9 2 .9 2-2.2 2-5.2 2-4.7 2-1.4 2 2.5 2 2.2 2-1.3 2-2 2-.9 2 .5 2 2.6 2 4.6 2 3 2-.9 2-4.3 2-3.7 2 .7 2 2.1 2 .7 2-1 2-1.7 2-.9 2 .4 2 1.5 2 1.7 2 .9 2-.5 2-.6 2 .4 2 1.3 2 .3 2-3.4 2-4.1 2-1 2 2 2 3.3 2 2.2 2 .2 2-1.2 2 .7 2 3 2 .7 2-1.1 2 .7 2 1.7 2 .6 2-2.6 2-4.1 2-2 2-1.4 2-2.4 2-.1 2 2.7 2 2.9 2 3.1 2 3.3 2 .3 2-2.9 2-1 2-.2 2-2.5 2-3.6 2-2.6 2 0 2 1.9 2 1.6 2 .3 2 .2 2 3.8 2 7.2 2 6.8 2 4 2-.3 2-4.8 2-7.2 2-6.1 2-2.5 2 1.6 2 3.1 2 2.7 2 1.9 2 .6 2-.7 2 .7 2 2.2 2-.7 2-3.4 2-2.5 2 0 2 2.6 2 3.8 2 3.3 2 1.1 2-1.8 2-4 2-3.5 2-.6 2 3.7 2 4.9 2 2.3 2-1.6 2-4.6 2-4.1 2-2.3 2-.5 2 1.2 2 1.5 2-.2 2-.6 2 2.2 2 4.6 2 4.7 2 1.1 2-2.4 2-2.9 2-2 2-.7 2 1 2 2.8 2 3.7 2 2.6 2 0 2 .1 2 .6 2-1.7 2-4.5 2-5.2 2-1.9 2 2 2 1.6 2 .1 2 .4 2-.2 2-1.3 2-.1 2 1.3 2 .6 2-1.7 2-3.8 2-1.2 2 2.6 2 3.5 2 3.4 2 3 2-1.3 2-5.8 2-4.9 2-1.2 2 3 2 3.9 2 2.3 2 .4 2-1.4 2-2.3 2-.1 2 3 2 .1 2-3.4 2-2.2 2-.2 2 .8 2 .2 2-2.1 .5-1.1V1204H112.8Z" fill="#F2CC0C" fill-opacity="0.22"/>
<path d="M112.8 1167.2l2 3.4 2 3.4 2 2.1 2-.4 2-3 2-4.3 2-3.8 2-1.5 2 .8 2 1.6 2 .2 2-.1 2 .9 2 .4 2-.4 2-.1 2 .2 2-.2 2 .2 2 .5 2 0 2 .5 2 2.1 2 .9 2-2.4 2-4.2 2-3.5 2-.4 2 2.4 2 3.5 2 1.8 2 0 2-.1 2-.7 2-2.1 2-2 2-1.3 2-1.4 2-1.2 2-.3 2 .8 2 1.2 2 .2 2-.3 2 .6 2 .4 2-.3 2 1.2 2 2 2 .9 2-.1 2 .1 2 .8 2 1.3 2 .8 2-.7 2-2.6 2-2.4 2-.8 2 .8 2 .9 2-.4 2-.5 2 .4 2 .9 2 1.4 2 1.9 2 .3 2-1.7 2 0 2 2 2 1.5 2-.1 2-1.4 2 .3 2 2.1 2 1 2-1.6 2-4.1 2-2.9 2 .2 2 3.1 2 3.9 2 2.1 2-.4 2-2.1 2-1.8 2 .1 2 1.9 2 0 2-3.6 2-2.5 2 .2 2 1.2 2 .4 2-1.1 2-.1 2 1.4 2 1.3 2 .4 2-.4 2 1.1 2 1.5 2-2.1 2-2.7 2 1.2 2 2.4 2 .1 2-3.5 2-5.6 2-4.7 2-1.5 2 2.8 2 5.9 2 6.7 2 4.3 2 .5 2-2.7 2-2.3 2-.6 2-.8 2-1 2-.6 2 .1 2 .4 2-.4 2-.9 2-.3 2 .6 2 1.4 2 2.6 2 2.4 2 .3 2 .3 2 1 2-1.9 2-3.6 2-.1 2 2.8 2 3.2 2 .1 2-2.5 2-.9 2 .3 2-.5 2-1.3 2-1.8 2-1.1 2-.5 2 0 2-.2 2 0 2 2.1 2 2.7 2-.2 2-1.5 2-.4 2 1.9 2 3.6 2 3.6 2 1.5 2-1.6 2-2 2-1.4 2-1.7 2-2.6 2-2.7 2-.1 2 3.4 2 3.8 2 2.3 2 0 2-1 2-.8 2-.5 2-.5 2-1.1 2-1.1 2-.1 2 .9 2 1.5 2 1.4 2-.4 2-2.4 2-1 2 1.2 2 1.1 2 .7 2 .8 2 .7 2-.3 2-2.7 2-2.8 2-.1 2 .7 2 .5 2 2.9 2 5.2 2 5.2 2 3.5 2 1 2-.9 2-1.9 2-2.5 2-2.3 2-1.5 2-.4 2 .3 2 .5 2 .3 2-.1 2-.6 2-1.1 2-1.8 2-2.1 2-2 2-1.1 2-.3 2-1.1 2-1.2 2 1 2 3.3 2 4.1 2 1.4 2-1.5 2-1.6 2-1.4 2-1.4 2-.1 2 1.5 2 2.1 2 2.4 2 2.2 2-.7 2-3.5 2-2.2 2-.5 2-.2 2 .3 2 1.4 2 2 2 1.5 2-.2 2-1.4 2-2 2-2 2-.1 2 3.7 2 4.9 2 2.6 2 .5 2-.7 .5-.2V1204H112.8Z" fill="#FF780A" fill-opacity="0.17"/>
<path d="M112.8 1235.4l2 1 2 .9 2-.4 2-2.9 2-2.3 2 2.6 2 5.3 2 4.6 2 2.8 2-.1 2-4.1 2-5.4 2-2.8 2 2.1 2 5.3 2 3.5 2 .9 2-.5 2-1.9 2-2 2 .6 2 2.4 2 1.7 2-.6 2-1.8 2 .8 2 3.4 2 2.7 2 .5 2-1.8 2-2.8 2-2.2 2-.8 2-.8 2-1.8 2-1.6 2 .5 2 4 2 4.1 2-.1 2-2.9 2-3 2-.6 2 .3 2-2.4 2-2.9 2-1.4 2 .2 2 1.8 2 3.6 2 3.7 2 2.1 2 .1 2-.4 2 1.5 2 2 2 .1 2-3.2 2-4.6 2-1.6 2 1.2 2 1.4 2-.2 2-1.7 2-.7 2 1.2 2 2.2 2 2.6 2 1.9 2 0 2-1.3 2-.6 2 .3 2 .6 2-.5 2-1.1 2 .1 2-.4 2-2.2 2-.2 2 2.2 2 0 2-2.5 2-2.7 2-.8 2 1.2 2-.1 2-1.5 2-.8 2 2.1 2 4.3 2 1.2 2-2.8 2-3.7 2-.9 2 3.3 2 2 2-.5 2-.3 2 0 2-.7 2-1.2 2-1.1 2-.4 2-1.1 2-3.1 2-1.4 2 2.1 2 2.2 2 2.1 2 3.2 2 2.1 2-.7 2-2.1 2-1.9 2-.5 2-.5 2-1.4 2-1.1 2 .6 2 3 2 3.6 2 1.9 2-1 2-2.4 2 .2 2 2 2 .8 2-.1 2-.2 2 .6 2 .8 2 .3 2-.9 2-1.7 2-1.5 2-.2 2 1.6 2 1.2 2-.5 2 1 2 1.5 2-2.5 2-4.4 2-2.5 2-.3 2 .6 2-.5 2 0 2 3 2 3.8 2 2.9 2 2.5 2 1.8 2 .1 2-1 2-1.9 2-4 2-5.1 2-3 2-2.8 2-3.8 2-1.5 2 2.2 2 3.7 2 4 2 3.2 2 .6 2-1.8 2-1.6 2-1.2 2-1.4 2 .7 2 3.4 2 3.5 2 1.9 2-.4 2-1.9 2-2.7 2-3.2 2-2.5 2-.2 2-.4 2-2.6 2-2 2-.7 2-1.2 2-.2 2 3.4 2 6 2 5.8 2 1.9 2-.8 2-.4 2-1.5 2-3.2 2-2.4 2-1.8 2-2.8 2-1.5 2 1 2 0 2-1.8 2-1.3 2 .6 2 2.9 2 4.1 2 3.2 2-.3 2-1.3 2 .8 2-.7 2-3.3 2-1.7 2 1.8 2 4.1 2 1.3 2-3.5 2-2.9 2-.3 2 1.1 2-.5 2-3.2 2-1.9 2 .8 2 1.7 2 2.3 2 2.5 2 1.8 2 .5 2-1.1 2-2.1 2-2.2 2-.9 2 .9 2 .5 2-.8 2-2.1 2-.8 2 1.5 2 1.2 2 1 2 2.3 2 .9 2-2.4 2-2 2-.4 2-.5 2-1.1 2-1.3 2-.4 2 1.7 .5 1V1204H112.8Z" fill="#1F60C4" fill-opacity="0.06"/>
<path d="M112.8 1238.9l2-4.5 2-2.3 2-.2 2 1.9 2 2.6 2 1.9 2 1.5 2 1.8 2 1.6 2 .4 2-2.1 2-2.7 2-1.3 2 .2 2 1.2 2 2.1 2 1.8 2 .8 2 .1 2 .4 2 .8 2 .8 2-.5 2-.4 2 .1 2-.6 2-.7 2 .6 2 .7 2 .1 2 .5 2 .6 2-.3 2-1.7 2-2.5 2-1.3 2 .3 2 0 2-.3 2 .3 2 1 2 1.5 2 1.5 2-.5 2-3.9 2-3.9 2-1.2 2 .1 2 1.6 2 4.3 2 4.8 2 3.3 2 1.9 2 1.1 2 .7 2-2.6 2-7 2-5.1 2-1.1 2-.6 2-.6 2 .4 2 1.9 2 2.3 2 .8 2-.2 2 .9 2 1.6 2 1 2-.6 2-1.4 2-.1 2 1.3 2 1 2-2.5 2-5.7 2-5.3 2-2.8 2 0 2 2 2 3 2 3.2 2 2.8 2 1.9 2 .9 2-.1 2-1.8 2-3.2 2-3.5 2 .3 2 4.9 2 3.5 2 .1 2-1.2 2-2 2-2.3 2-2.1 2-.5 2 2.7 2 3.1 2 .2 2-2.4 2-3.1 2-1.1 2 1 2 2.1 2 2.9 2 3.1 2 1.8 2 .5 2 .5 2 1.1 2 1.5 2-1.2 2-3.7 2-3.5 2-1.1 2 1.7 2 .8 2-.7 2 .6 2 2.5 2 3.5 2 1.2 2-2.4 2-4 2-2.1 2 2.7 2 3.2 2 .6 2-1.6 2-2.9 2-3.2 2-3.3 2-2.6 2 0 2 2.5 2 2.9 2 2 2 .8 2 .7 2 .7 2 .1 2-1.4 2-2.9 2-1.5 2 1.2 2 2.3 2 3 2 3.1 2 1.8 2-.4 2-1.5 2-1.2 2 .2 2 .7 2-.3 2-2.6 2-4 2-3.5 2-2 2-.6 2 .5 2 1.1 2 1.8 2 2 2 1.3 2-.2 2-1.8 2-2.5 2-1.4 2 1 2 1.4 2 .6 2 .1 2-.3 2-.7 2 .4 2 1.5 2 .1 2-1.4 2-.4 2 .6 2 .8 2 .6 2-.1 2-.8 2-.4 2 .6 2 .5 2-.5 2-.8 2-.1 2 1.3 2 .2 2-2.3 2-3.1 2-2.3 2-.7 2 .1 2 .2 2 .9 2 1.3 2 .5 2 0 2 .2 2 1.6 2 1.9 2-.9 2-2.6 2-1.8 2-1.9 2-2.2 2-1.6 2 1.2 2 4.8 2 2.7 2-1.4 2 .1 2 2.5 2 1.4 2-.3 2-1.3 2-.7 2 1 2 2.3 2 .2 2-4.1 2-3.6 2-1.6 2-2 2-2.2 2-.2 2 3.3 2 6 2 4.1 2 2.2 2 2.1 2 .2 2-2.4 2-2 2-.5 2 0 2-1.8 2-4.1 2-1.9 2 1.2 2 2.4 2 1.7 2 .1 2-.8 2-.7 .5 0V1204H112.8Z" fill="#B83E9E" fill-opacity="0.07"/>

<path d="M112.8 1239.7l2-2.9 2-1 2-.1 2-.1 2 .7 2 2.8 2 2.3 2 .4 2 1.6 2 1.8 2-1.8 2-4.5 2-4.1 2-.2 2 2.6 2 .3 2-1.9 2-1.5 2 .5 2 2.4 2 2.4 2 1 2-.7 2 .8 2 3.7 2 3.2 2 1.7 2 .7 2-1.6 2-3.9 2-2.7 2 .4 2 2.2 2 .3 2-3.7 2-2.6 2 1.4 2 4.6 2 4.7 2 2 2-1.5 2-3.4 2-2.2 2-.8 2-.5 2-.1 2 .5 2 1.1 2 1.7 2 2.2 2 2.2 2 1.3 2-1.7 2-3.5 2-1.4 2-1.5 2-3.7 2-2.5 2 .6 2 2.4 2 1.7 2-1.3 2-3.1 2-2.8 2-.2 2 1.6 2 1 2 .6 2 1 2 2.7 2 3.1 2 .5 2-1.1 2-1.2 2-1.6 2-2.6 2-3.9 2-1.2 2 4 2 4.2 2 2.2 2 1.8 2 .4 2-2.4 2-2.6 2-1 2-.7 2-1 2-.6 2 .6 2 2.5 2 3 2 2.1 2-.5 2-1.5 2-.9 2-.8 2-1.1 2-1.4 2 0 2 2 2-.3 2-2.5 2 .9 2 2.8 2 .4 2-.2 2 .6 2 0 2 .3 2 2.2 2 2.3 2 .9 2-.2 2-.3 2 .2 2-.8 2-2.9 2-3.5 2-3.2 2-2.5 2 .2 2 3.9 2 4.2 2 1.6 2-1.3 2-2.1 2 .1 2 .5 2-1 2-2.8 2-2.4 2 .7 2 0 2-2.6 2-1 2 2 2 3.5 2 2.6 2 .4 2 .8 2 1.4 2-.9 2-2.9 2-3.3 2-.5 2 2.2 2 .3 2-.4 2 1.6 2 .1 2-2.8 2-1.1 2 2.1 2 3.6 2 2.5 2-.2 2-1.8 2-4 2-7.1 2-4.5 2 2.4 2 4.3 2 3.3 2 3.6 2 3 2 .5 2-3.5 2-5.5 2-1.7 2 1.5 2 1 2-.5 2-.9 2 1.2 2 2.7 2 1.4 2 .8 2 1 2 .3 2-.9 2-1.6 2-1.7 2-1.7 2-1.6 2-.7 2 1.3 2 .4 2-2.7 2-2.4 2 1.7 2 7 2 7.8 2 2.1 2-3.8 2-6.3 2-3.2 2-1.4 2-4.5 2-3.4 2 1 2 1.2 2-.8 2-1.6 2 .3 2 3.3 2 2 2-.4 2-.6 2-.3 2-.2 2 1.1 2 2.5 2 2.1 2 .6 2-1.3 2-3.4 2-3.8 2 .6 2 3.5 2 1.7 2 1.3 2 2.8 2 3 2 1.4 2-1.2 2-2 2-1.2 2-3.3 2-4.7 2-1 2 2.2 2 2.3 2-.6 2-2.4 2 1 2 3.3 2 1.1 2-.3 2-.2 2-.6 2-.4 2 .7 2 1.2 2 1.1 2 .3 2-1.2 2-3.2 2-3.8 2-2.5 2 .4 2 4.4 .5 1.9V1204H112.8Z" fill="#8A6BC0" fill-opacity="0.14"/>
<path d="M112.8 1245.1l2-.1 2-3.7 2-4.1 2-1.4 2 1.7 2 3.1 2 2.5 2 .5 2-1.2 2-2.3 2-3 2-2.7 2-1.3 2 1.2 2 2.6 2 1.4 2 .7 2 1.7 2 1.7 2 .6 2-1.6 2-3.2 2-3.2 2-1.1 2 2 2 4.1 2 4.3 2 2.3 2-.6 2-2.6 2-.9 2 1.3 2 1.2 2-.9 2-3.2 2-2.7 2-.4 2 .8 2 .1 2-1.7 2-.6 2 1.8 2 1.8 2 .8 2-.3 2-.7 2-.6 2 .3 2 1.1 2 1.4 2 .6 2-.7 2-1.9 2-1.9 2 0 2 1 2 .8 2 1.2 2 1.6 2 1.2 2 0 2-1 2-.3 2 1.2 2 .8 2-.5 2-2.1 2 0 2 3 2 1.1 2-1.9 2-2.7 2-.9 2 1.6 2-.7 2-3.1 2-1.5 2-.1 2-.2 2 .3 2 .4 2-1.2 2-1.2 2 1.7 2 4.8 2 5 2-.4 2-4.3 2-2.9 2-.5 2 1.2 2 1.4 2 1.5 2 1.9 2 .6 2-1.4 2 .4 2 1.9 2-1.4 2-2.5 2-.7 2-.7 2-1.5 2-.7 2 .2 2 .9 2 1.7 2 1.8 2-.6 2-2.4 2-1.6 2 2 2 4.6 2 0 2-4.3 2-2.2 2 .8 2 1.8 2-1.5 2-3.5 2 .8 2 4.1 2 3.8 2 1.8 2-.3 2-1.6 2-1.9 2-1.2 2 .8 2 2.1 2-.1 2-2.5 2-2.7 2-2.5 2-1.2 2 3.1 2 4.6 2-.5 2-3.3 2-1.8 2 .4 2 1.7 2 .7 2-1.7 2-3.9 2-1.6 2 2 2 2.7 2 3.2 2 4.2 2 .9 2-3.2 2-1.9 2 .8 2 1.8 2 2.5 2 2.4 2-.5 2-4.2 2-6.8 2-4.9 2 .5 2 4 2 4.6 2 1.7 2 .1 2 0 2-1.6 2-3.6 2-2.9 2-1 2 1.4 2 3.5 2 3.7 2 .8 2-1.7 2-1.5 2-1.4 2-2 2-2.1 2-2.1 2-2 2-1.2 2 .2 2-.2 2-.6 2 .8 2 3 2 4.9 2 2.4 2-.6 2 1 2 2.3 2 1.2 2-.1 2-.7 2-1.2 2-2.8 2-5.6 2-3.2 2 2.6 2 4.1 2 1.6 2-2.7 2-4.3 2-2.6 2-1.1 2-.3 2-.8 2 .1 2 2.7 2 2.5 2 1.1 2 1.6 2 1.4 2-.5 2-.3 2 1 2 1.3 2 .4 2-1.3 2-2.5 2-2.1 2 1 2 3.9 2 3.7 2 .1 2-4.6 2-5.1 2-3 2-1.7 2-.3 2 1.4 2 2.9 2 2.9 2 .2 2-2.9 2-4.5 2-3.1 2-.1 2 1.6 2 2.8 2 3.9 2 2.6 2-.3 2-1.1 2-.9 2-1.3 2-2 2-2.3 2-.4 2 4.3 .5 2.2V1204H112.8Z" fill="#96D98D" fill-opacity="0.05"/>
<path d="M112.8 1163.5l2-.9 2 1.1 2 2 2 1.7 2 .3 2-2 2-2.1 2-1.2 2-2.6 2-2.8 2 1 2 4.1 2 4.4 2 1.6 2-1.5 2-2.6 2-3 2-3 2-.6 2 2.6 2 4 2 2.5 2-1.2 2-3.1 2-2.8 2-1.9 2-.7 2 0 2 1.7 2 2.8 2 .8 2-.9 2 1 2 3.5 2 4.5 2 1.8 2-2.1 2-3.9 2-4.2 2-3.8 2-1.8 2 .9 2 2.8 2 2.8 2 .5 2-.6 2 .1 2 2.4 2 3.4 2 1.2 2-1.7 2-4 2-2.8 2-.2 2 1.7 2 3.6 2 4.2 2 .8 2-2.8 2-1.4 2 0 2-.3 2-.9 2-1 2 0 2-.2 2-2.2 2-2.8 2-1.6 2 .2 2 1.4 2 1.2 2 .6 2 .8 2 2.9 2 3.6 2 .2 2-1.8 2-.9 2 .8 2 1.8 2 .3 2-1.5 2-2.3 2-1.5 2-.9 2-2.1 2-2.8 2-1.5 2 .3 2 1.3 2-.1 2-1.8 2-1.5 2 .9 2 3.9 2 4 2 2.4 2 1 2 1 2 1.9 2 1.3 2-.7 2-3.3 2-3.3 2-.8 2-.1 2-.8 2-.9 2-.3 2 .8 2 .5 2-.5 2 .5 2 1.8 2 1.8 2 1.1 2-.1 2-1.2 2-1.9 2-2 2-1.9 2-1.6 2-1.3 2-.7 2 .6 2 2.2 2 3.2 2 2.1 2 .1 2-.6 2-.5 2-.1 2 .2 2 .3 2 .7 2 .9 2 .7 2-.3 2-1.7 2-3.4 2-3.5 2-.8 2 2.9 2 5.5 2 3.3 2-.2 2-.8 2-1.9 2-4.3 2-3.5 2-.2 2 2.8 2 3.7 2 1.8 2-.5 2-1.8 2 .4 2 3.8 2 6 2 4.4 2-.4 2-3.2 2-3.8 2-2.8 2-1.8 2-.7 2 1.6 2 3.7 2 3.1 2 2 2 .8 2-1.4 2-3.2 2-2.6 2 .1 2 3.3 2 2 2-1.8 2-2.4 2-.6 2 1.9 2 2.8 2 1.5 2-1.6 2-2.7 2 .6 2 1.3 2-2 2-1.8 2 .1 2 .2 2-.6 2-.9 2-.9 2-.7 2-.6 2 .3 2 2.8 2 3.2 2 1.3 2-1.5 2-2.6 2-.5 2 1.1 2 .9 2 .4 2 .1 2 1 2 1.1 2 .2 2-.1 2-.4 2-.9 2-1.6 2-1.9 2-1.4 2-.1 2 .9 2 .8 2-.6 2-.7 2 .6 2 2.1 2 2.1 2-.4 2-2.6 2-2.5 2 1 2 4 2 1.8 2 .6 2 1.5 2 .5 2-1.4 2-.4 2 .7 2 .6 2 .2 2-.1 2-.7 2-1.8 2-3.4 2-2.6 2-.4 2 0 2 .4 2 2 2 1.5 2-1.4 2-2.3 2-.7 .5 .4" fill="none" stroke="#73BF69" stroke-width="2.4" stroke-linejoin="round" stroke-linecap="round"/>
<path d="M112.8 1167.2l2-1.2 2 2.4 2 2.9 2 0 2-3.3 2-5 2-4.6 2-3.2 2-2.2 2-1 2 1 2 2 2 1.8 2 1.8 2 1.8 2 .6 2 .1 2 .5 2 .6 2 .1 2-.7 2-.8 2 0 2-1.2 2-3 2-1.8 2 .3 2 1 2 1.9 2 2.5 2 2.8 2 2.7 2 2.5 2 1 2-1.3 2-2 2-1.9 2-1.9 2-.8 2 1.3 2 1.1 2-.9 2-2.8 2-2.5 2 .2 2 1.4 2 1 2 1.3 2 .7 2-1.5 2-2.7 2-2 2 .1 2 2 2 2 2 1.7 2 1.5 2 1.7 2 1.5 2 .5 2-1 2-2.2 2-1.2 2 .4 2 .2 2-1 2-2.3 2-2 2-.7 2-.2 2 .8 2 3.1 2 3.1 2 1.4 2 .7 2 .8 2 .7 2 1 2 1.3 2 .3 2-.9 2-1.4 2-2 2-2.6 2-1 2 1.1 2 1.1 2 0 2-1.2 2-1.5 2-1.1 2-.5 2-.6 2-1.5 2-.9 2 1.5 2 4.1 2 4.1 2-.5 2-2.7 2-1.3 2-.3 2-.1 2-.4 2-.7 2-1 2-1.6 2-1.8 2-1.2 2-.8 2-.6 2-.1 2 .8 2 1.7 2 2.3 2 1.9 2 1.9 2 1.5 2-1.2 2-3 2-1.6 2 .1 2 .6 2 .7 2 1 2 1.3 2 1.9 2 2.2 2 .2 2-1.7 2 0 2 2.2 2 2.6 2 2.7 2 2 2-.6 2-2.9 2-3.2 2-1.5 2 .3 2-.3 2-1.3 2 0 2 1.9 2 3 2 1.6 2-.5 2-.6 2-1 2-2.1 2-1 2 1 2 .5 2-1.1 2-2.6 2-2.7 2-1.2 2 1.7 2 4.6 2 5.5 2 4.3 2 1.2 2-2.7 2-4.7 2-3.4 2-1.3 2 .3 2 2.2 2 3 2 .9 2-1.9 2-3.1 2-1.5 2 1.3 2 2.3 2 1.5 2-.5 2-1.1 2-.3 2 1.1 2 1.5 2 .3 2-.4 2-.4 2 0 2 .5 2 1 2 1.4 2 1.8 2 .4 2-1.7 2-3.1 2-2.4 2 0 2 .6 2 .2 2 1.6 2 2.3 2 1 2 .3 2 .1 2-.8 2 0 2 4.1 2 4.3 2-.2 2-4.2 2-4.9 2-1.2 2 1.4 2 1 2 1.1 2 1.1 2-.5 2-2 2-2.4 2-.1 2 2.3 2 .6 2-2.1 2-2.7 2-.9 2 1.8 2 2 2 .7 2-.8 2-1.6 2-1.1 2 1.1 2 3.1 2 2.6 2 .8 2-1.1 2-2.1 2-2.3 2-2.1 2-.6 2 1.9 2 2.1 2 .4 2-.5 2 .1 2 2 2 1.6 2-.9 2-2.1 2-1.2 2 2 2 3 2 1 2-1.3 2-3.6 .5-1.3" fill="none" stroke="#8AB8FF" stroke-width="2.4" stroke-linejoin="round" stroke-linecap="round"/>
<path d="M112.8 1173l2-4 2 .1 2 3 2 4.5 2 1.6 2-5.8 2-7.4 2-3.4 2-.8 2 1.1 2 3.3 2 3.4 2 1.3 2-.4 2-1.6 2-2.5 2-2.6 2-1.8 2 .2 2 2 2 1 2 .5 2 1.7 2 1.9 2 .8 2-1.1 2-2.7 2-3.4 2-2 2 .6 2 2 2 1.9 2 1 2 1.6 2 3.2 2 3.5 2 1.2 2-3 2-4.6 2-2.2 2 .4 2 1.8 2 1.4 2 1.5 2 2.4 2 .3 2-3.2 2-3.7 2-2.1 2-.1 2 .2 2-.8 2 .1 2 1.4 2 1.9 2 1.6 2 1 2 .5 2-.9 2-3.7 2-3.1 2 1.3 2 3.8 2 3.7 2 1.9 2-1.2 2-4.7 2-4.7 2-2.1 2 .5 2 3.1 2 4.9 2 3.4 2 .3 2 .4 2 .8 2-2 2-2.8 2-1.3 2-2.1 2-2.4 2 .8 2 2.9 2 1.8 2-.2 2-.8 2 3 2 4.7 2 .8 2-2.6 2-4 2-4.3 2-3 2-.6 2 1.5 2 2.9 2 4.1 2 3.6 2 1.2 2-.3 2-.6 2-2 2-3 2-1.4 2-.4 2-1.2 2-2 2-1.5 2 .7 2 1.6 2 .1 2-.2 2 .8 2 1.5 2 1.4 2 .7 2 .2 2-.1 2 .1 2 0 2-1.5 2-2.9 2-3.1 2 .2 2 3.3 2 2.3 2 .7 2 .8 2 1.6 2 1.4 2-1.8 2-2.9 2 .6 2 3.5 2 4 2 .9 2-1.3 2 .1 2-.3 2-3.1 2-5 2-4.3 2-.5 2 3.9 2 6.7 2 4.7 2 .1 2-3.8 2-5.7 2-5.1 2-2 2 1.5 2 2.3 2 2.6 2 3.5 2 1.7 2-.9 2 .2 2 3 2 4.6 2 3 2-1 2-3.5 2-3.5 2-1 2 .5 2-.1 2-.9 2-1 2 .9 2 1.9 2 1.2 2-.1 2-.8 2 .2 2 .3 2-1.3 2-1.7 2 0 2 2 2 3.2 2 2.1 2 0 2-2.1 2-2.1 2-1.6 2-1.7 2-.3 2 2.5 2 2.4 2-.5 2-3.8 2-2.9 2 2.4 2 1.7 2-2.3 2-.5 2 2.1 2 1.9 2 1.7 2 1.7 2 .3 2-.8 2 .2 2 .7 2-.1 2-.9 2-.8 2 1.1 2 1.5 2 .2 2 1.3 2 2.9 2 .6 2-2 2-3.1 2-2.4 2-1.2 2-1.6 2-1.2 2 1.8 2 3.2 2 2.4 2 .9 2-.7 2-1.7 2-2 2-1.5 2 1.1 2 3.2 2 2.5 2 1 2-.2 2-.8 2-.8 2 .5 2 .2 2-2.6 2-2.9 2-.8 2 1.3 2 1.7 2 0 2-.2 2 .3 2-1.6 2-3 2-.9 2-.3 2-1.8 2-.8 2 3.2 .5 1.8" fill="none" stroke="#AEA2E0" stroke-width="2.4" stroke-linejoin="round" stroke-linecap="round"/>
<path d="M112.8 1161.1l2 1.4 2 3.4 2 3.9 2 2.7 2-.1 2-4.3 2-5.5 2-3.2 2 1.2 2 3.8 2 2.3 2 .1 2-1.3 2-2.9 2-2.5 2 1.6 2 3.6 2 1.8 2-.6 2-2.6 2-4.4 2-2.5 2 3.1 2 3.5 2 0 2-1.5 2-1.1 2 .6 2 1.2 2 .4 2-.4 2-.4 2 .5 2 1 2 .1 2-1.2 2-2 2-.6 2 .9 2 2 2 2 2 1 2-1 2-2.1 2-1.4 2-.2 2 .7 2 .1 2-1.5 2-3.4 2-.9 2 3.8 2 4.5 2 2 2-1.1 2-1.4 2 .5 2 .2 2-1.2 2-1.2 2-.5 2 .3 2 .7 2 .4 2-.3 2-.7 2-.6 2-.5 2-.4 2 .4 2 .8 2 .7 2 .6 2 1.1 2 2.6 2 2.6 2-.7 2-2 2-.4 2 .3 2-.1 2-.3 2 .1 2 1.3 2 .7 2-.2 2 1 2 1.9 2 .9 2-2.2 2-5.2 2-4.7 2-1.4 2 2.5 2 2.2 2-1.3 2-2 2-.9 2 .5 2 2.6 2 4.6 2 3 2-.9 2-4.3 2-3.7 2 .7 2 2.1 2 .7 2-1 2-1.7 2-.9 2 .4 2 1.5 2 1.7 2 .9 2-.5 2-.6 2 .4 2 1.3 2 .3 2-3.4 2-4.1 2-1 2 2 2 3.3 2 2.2 2 .2 2-1.2 2 .7 2 3 2 .7 2-1.1 2 .7 2 1.7 2 .6 2-2.6 2-4.1 2-2 2-1.4 2-2.4 2-.1 2 2.7 2 2.9 2 3.1 2 3.3 2 .3 2-2.9 2-1 2-.2 2-2.5 2-3.6 2-2.6 2 0 2 1.9 2 1.6 2 .3 2 .2 2 3.8 2 7.2 2 6.8 2 4 2-.3 2-4.8 2-7.2 2-6.1 2-2.5 2 1.6 2 3.1 2 2.7 2 1.9 2 .6 2-.7 2 .7 2 2.2 2-.7 2-3.4 2-2.5 2 0 2 2.6 2 3.8 2 3.3 2 1.1 2-1.8 2-4 2-3.5 2-.6 2 3.7 2 4.9 2 2.3 2-1.6 2-4.6 2-4.1 2-2.3 2-.5 2 1.2 2 1.5 2-.2 2-.6 2 2.2 2 4.6 2 4.7 2 1.1 2-2.4 2-2.9 2-2 2-.7 2 1 2 2.8 2 3.7 2 2.6 2 0 2 .1 2 .6 2-1.7 2-4.5 2-5.2 2-1.9 2 2 2 1.6 2 .1 2 .4 2-.2 2-1.3 2-.1 2 1.3 2 .6 2-1.7 2-3.8 2-1.2 2 2.6 2 3.5 2 3.4 2 3 2-1.3 2-5.8 2-4.9 2-1.2 2 3 2 3.9 2 2.3 2 .4 2-1.4 2-2.3 2-.1 2 3 2 .1 2-3.4 2-2.2 2-.2 2 .8 2 .2 2-2.1 .5-1.1" fill="none" stroke="#F2CC0C" stroke-width="2.4" stroke-linejoin="round" stroke-linecap="round"/>
<path d="M112.8 1167.2l2 3.4 2 3.4 2 2.1 2-.4 2-3 2-4.3 2-3.8 2-1.5 2 .8 2 1.6 2 .2 2-.1 2 .9 2 .4 2-.4 2-.1 2 .2 2-.2 2 .2 2 .5 2 0 2 .5 2 2.1 2 .9 2-2.4 2-4.2 2-3.5 2-.4 2 2.4 2 3.5 2 1.8 2 0 2-.1 2-.7 2-2.1 2-2 2-1.3 2-1.4 2-1.2 2-.3 2 .8 2 1.2 2 .2 2-.3 2 .6 2 .4 2-.3 2 1.2 2 2 2 .9 2-.1 2 .1 2 .8 2 1.3 2 .8 2-.7 2-2.6 2-2.4 2-.8 2 .8 2 .9 2-.4 2-.5 2 .4 2 .9 2 1.4 2 1.9 2 .3 2-1.7 2 0 2 2 2 1.5 2-.1 2-1.4 2 .3 2 2.1 2 1 2-1.6 2-4.1 2-2.9 2 .2 2 3.1 2 3.9 2 2.1 2-.4 2-2.1 2-1.8 2 .1 2 1.9 2 0 2-3.6 2-2.5 2 .2 2 1.2 2 .4 2-1.1 2-.1 2 1.4 2 1.3 2 .4 2-.4 2 1.1 2 1.5 2-2.1 2-2.7 2 1.2 2 2.4 2 .1 2-3.5 2-5.6 2-4.7 2-1.5 2 2.8 2 5.9 2 6.7 2 4.3 2 .5 2-2.7 2-2.3 2-.6 2-.8 2-1 2-.6 2 .1 2 .4 2-.4 2-.9 2-.3 2 .6 2 1.4 2 2.6 2 2.4 2 .3 2 .3 2 1 2-1.9 2-3.6 2-.1 2 2.8 2 3.2 2 .1 2-2.5 2-.9 2 .3 2-.5 2-1.3 2-1.8 2-1.1 2-.5 2 0 2-.2 2 0 2 2.1 2 2.7 2-.2 2-1.5 2-.4 2 1.9 2 3.6 2 3.6 2 1.5 2-1.6 2-2 2-1.4 2-1.7 2-2.6 2-2.7 2-.1 2 3.4 2 3.8 2 2.3 2 0 2-1 2-.8 2-.5 2-.5 2-1.1 2-1.1 2-.1 2 .9 2 1.5 2 1.4 2-.4 2-2.4 2-1 2 1.2 2 1.1 2 .7 2 .8 2 .7 2-.3 2-2.7 2-2.8 2-.1 2 .7 2 .5 2 2.9 2 5.2 2 5.2 2 3.5 2 1 2-.9 2-1.9 2-2.5 2-2.3 2-1.5 2-.4 2 .3 2 .5 2 .3 2-.1 2-.6 2-1.1 2-1.8 2-2.1 2-2 2-1.1 2-.3 2-1.1 2-1.2 2 1 2 3.3 2 4.1 2 1.4 2-1.5 2-1.6 2-1.4 2-1.4 2-.1 2 1.5 2 2.1 2 2.4 2 2.2 2-.7 2-3.5 2-2.2 2-.5 2-.2 2 .3 2 1.4 2 2 2 1.5 2-.2 2-1.4 2-2 2-2 2-.1 2 3.7 2 4.9 2 2.6 2 .5 2-.7 .5-.2" fill="none" stroke="#FF780A" stroke-width="2.4" stroke-linejoin="round" stroke-linecap="round"/>
<path d="M112.8 1235.4l2 1 2 .9 2-.4 2-2.9 2-2.3 2 2.6 2 5.3 2 4.6 2 2.8 2-.1 2-4.1 2-5.4 2-2.8 2 2.1 2 5.3 2 3.5 2 .9 2-.5 2-1.9 2-2 2 .6 2 2.4 2 1.7 2-.6 2-1.8 2 .8 2 3.4 2 2.7 2 .5 2-1.8 2-2.8 2-2.2 2-.8 2-.8 2-1.8 2-1.6 2 .5 2 4 2 4.1 2-.1 2-2.9 2-3 2-.6 2 .3 2-2.4 2-2.9 2-1.4 2 .2 2 1.8 2 3.6 2 3.7 2 2.1 2 .1 2-.4 2 1.5 2 2 2 .1 2-3.2 2-4.6 2-1.6 2 1.2 2 1.4 2-.2 2-1.7 2-.7 2 1.2 2 2.2 2 2.6 2 1.9 2 0 2-1.3 2-.6 2 .3 2 .6 2-.5 2-1.1 2 .1 2-.4 2-2.2 2-.2 2 2.2 2 0 2-2.5 2-2.7 2-.8 2 1.2 2-.1 2-1.5 2-.8 2 2.1 2 4.3 2 1.2 2-2.8 2-3.7 2-.9 2 3.3 2 2 2-.5 2-.3 2 0 2-.7 2-1.2 2-1.1 2-.4 2-1.1 2-3.1 2-1.4 2 2.1 2 2.2 2 2.1 2 3.2 2 2.1 2-.7 2-2.1 2-1.9 2-.5 2-.5 2-1.4 2-1.1 2 .6 2 3 2 3.6 2 1.9 2-1 2-2.4 2 .2 2 2 2 .8 2-.1 2-.2 2 .6 2 .8 2 .3 2-.9 2-1.7 2-1.5 2-.2 2 1.6 2 1.2 2-.5 2 1 2 1.5 2-2.5 2-4.4 2-2.5 2-.3 2 .6 2-.5 2 0 2 3 2 3.8 2 2.9 2 2.5 2 1.8 2 .1 2-1 2-1.9 2-4 2-5.1 2-3 2-2.8 2-3.8 2-1.5 2 2.2 2 3.7 2 4 2 3.2 2 .6 2-1.8 2-1.6 2-1.2 2-1.4 2 .7 2 3.4 2 3.5 2 1.9 2-.4 2-1.9 2-2.7 2-3.2 2-2.5 2-.2 2-.4 2-2.6 2-2 2-.7 2-1.2 2-.2 2 3.4 2 6 2 5.8 2 1.9 2-.8 2-.4 2-1.5 2-3.2 2-2.4 2-1.8 2-2.8 2-1.5 2 1 2 0 2-1.8 2-1.3 2 .6 2 2.9 2 4.1 2 3.2 2-.3 2-1.3 2 .8 2-.7 2-3.3 2-1.7 2 1.8 2 4.1 2 1.3 2-3.5 2-2.9 2-.3 2 1.1 2-.5 2-3.2 2-1.9 2 .8 2 1.7 2 2.3 2 2.5 2 1.8 2 .5 2-1.1 2-2.1 2-2.2 2-.9 2 .9 2 .5 2-.8 2-2.1 2-.8 2 1.5 2 1.2 2 1 2 2.3 2 .9 2-2.4 2-2 2-.4 2-.5 2-1.1 2-1.3 2-.4 2 1.7 .5 1" fill="none" stroke="#1F60C4" stroke-width="2.4" stroke-linejoin="round" stroke-linecap="round"/>
<path d="M112.8 1238.9l2-4.5 2-2.3 2-.2 2 1.9 2 2.6 2 1.9 2 1.5 2 1.8 2 1.6 2 .4 2-2.1 2-2.7 2-1.3 2 .2 2 1.2 2 2.1 2 1.8 2 .8 2 .1 2 .4 2 .8 2 .8 2-.5 2-.4 2 .1 2-.6 2-.7 2 .6 2 .7 2 .1 2 .5 2 .6 2-.3 2-1.7 2-2.5 2-1.3 2 .3 2 0 2-.3 2 .3 2 1 2 1.5 2 1.5 2-.5 2-3.9 2-3.9 2-1.2 2 .1 2 1.6 2 4.3 2 4.8 2 3.3 2 1.9 2 1.1 2 .7 2-2.6 2-7 2-5.1 2-1.1 2-.6 2-.6 2 .4 2 1.9 2 2.3 2 .8 2-.2 2 .9 2 1.6 2 1 2-.6 2-1.4 2-.1 2 1.3 2 1 2-2.5 2-5.7 2-5.3 2-2.8 2 0 2 2 2 3 2 3.2 2 2.8 2 1.9 2 .9 2-.1 2-1.8 2-3.2 2-3.5 2 .3 2 4.9 2 3.5 2 .1 2-1.2 2-2 2-2.3 2-2.1 2-.5 2 2.7 2 3.1 2 .2 2-2.4 2-3.1 2-1.1 2 1 2 2.1 2 2.9 2 3.1 2 1.8 2 .5 2 .5 2 1.1 2 1.5 2-1.2 2-3.7 2-3.5 2-1.1 2 1.7 2 .8 2-.7 2 .6 2 2.5 2 3.5 2 1.2 2-2.4 2-4 2-2.1 2 2.7 2 3.2 2 .6 2-1.6 2-2.9 2-3.2 2-3.3 2-2.6 2 0 2 2.5 2 2.9 2 2 2 .8 2 .7 2 .7 2 .1 2-1.4 2-2.9 2-1.5 2 1.2 2 2.3 2 3 2 3.1 2 1.8 2-.4 2-1.5 2-1.2 2 .2 2 .7 2-.3 2-2.6 2-4 2-3.5 2-2 2-.6 2 .5 2 1.1 2 1.8 2 2 2 1.3 2-.2 2-1.8 2-2.5 2-1.4 2 1 2 1.4 2 .6 2 .1 2-.3 2-.7 2 .4 2 1.5 2 .1 2-1.4 2-.4 2 .6 2 .8 2 .6 2-.1 2-.8 2-.4 2 .6 2 .5 2-.5 2-.8 2-.1 2 1.3 2 .2 2-2.3 2-3.1 2-2.3 2-.7 2 .1 2 .2 2 .9 2 1.3 2 .5 2 0 2 .2 2 1.6 2 1.9 2-.9 2-2.6 2-1.8 2-1.9 2-2.2 2-1.6 2 1.2 2 4.8 2 2.7 2-1.4 2 .1 2 2.5 2 1.4 2-.3 2-1.3 2-.7 2 1 2 2.3 2 .2 2-4.1 2-3.6 2-1.6 2-2 2-2.2 2-.2 2 3.3 2 6 2 4.1 2 2.2 2 2.1 2 .2 2-2.4 2-2 2-.5 2 0 2-1.8 2-4.1 2-1.9 2 1.2 2 2.4 2 1.7 2 .1 2-.8 2-.7 .5 0" fill="none" stroke="#B83E9E" stroke-width="2.4" stroke-linejoin="round" stroke-linecap="round"/>
<path d="M112.8 1241.3l2-1.7 2-6.1 2-6.1 2-2.2 2 2.8 2 6 2 4.4 2 .6 2 .7 2 2 2 .8 2 0 2 .6 2 1.6 2 .7 2-3.7 2-4.1 2 1 2 2.8 2 1.1 2-2.9 2-4.1 2-.6 2 3.3 2 5.1 2 2.2 2-1 2-1.3 2-1.1 2-.5 2 .8 2 1.6 2 .1 2-1.3 2-2 2-1.3 2 .3 2 2.3 2 2.6 2 .7 2-.6 2-.9 2-.7 2 0 2 .5 2-.3 2-1.7 2-2.4 2-2.1 2-1 2 .7 2 2.2 2 2.1 2 1.3 2 .7 2 0 2-1.2 2-2.7 2-3.2 2-2.2 2-1.1 2-.2 2 2.1 2 4.2 2 4.2 2 2.5 2 .4 2 0 2 .7 2 1.1 2 0 2-2.5 2-3.2 2-2.5 2-3.1 2-3.1 2-.5 2 2.4 2 4.3 2 3.4 2 1 2-1.3 2-1.9 2-.4 2 2.1 2 3.2 2-.6 2-2.9 2-.8 2 1.3 2 2.4 2 1.8 2-.7 2-4.1 2-3.2 2 1 2 1.3 2-.4 2-1.4 2-2 2-2.4 2-1 2 1.7 2 5 2 4.7 2 .3 2-3.3 2-3.8 2-.5 2 2.3 2 2 2 2.5 2 2.7 2 .2 2-2.1 2-1.6 2-1.1 2-1.2 2-1.2 2-.7 2 .1 2 .1 2-.9 2-.2 2 1.8 2 3.2 2 3.4 2 1.6 2-1.2 2-3.8 2-3.4 2-2.5 2-2.2 2-2 2-1.4 2 .5 2 1.8 2 1.3 2 1.4 2 2.5 2 3.6 2 3.5 2 1.6 2-2 2-6.1 2-6.2 2-3.2 2 .6 2 2.8 2 2.7 2 1.2 2-.1 2 .8 2 2.3 2 3 2 1.2 2-1.8 2-3.3 2-3.2 2-2 2-1.6 2-2.1 2-1.1 2 1.3 2 5 2 5.6 2 2.7 2-.2 2-2.2 2-2.5 2-2.4 2-2.3 2-1.8 2-1 2 .1 2 .1 2-1.4 2-.3 2 2.2 2 2.2 2-.2 2-3 2-1.7 2 2.7 2 3.6 2 1.5 2-1.9 2-3 2-.9 2 2.2 2 3.6 2 1 2 0 2 1.9 2 .5 2-2.5 2-2.2 2-2.4 2-5.4 2-4.7 2-.6 2 3.3 2 4.3 2 1.3 2-.7 2-.4 2-1.1 2-1.9 2-1.4 2-.9 2-.8 2-.2 2 1 2 2.9 2 4.1 2 3.9 2 1.4 2-1.4 2-2 2-.6 2 1 2 .6 2-.8 2 .9 2 2.4 2 .3 2-.5 2 .3 2-1.7 2-3.6 2-2.3 2-.8 2-.9 2-1.4 2-.7 2 2.4 2 2.6 2-1.7 2-3.7 2-2.2 2 2 2 5.2 2 4.9 2 2.2 2-1.5 2-3 2-4.1 2-6 2-5.3 2-1.7 2 1.9 2 5.4 .5 1.9" fill="none" stroke="#8F3BB8" stroke-width="2.4" stroke-linejoin="round" stroke-linecap="round"/>
<path d="M112.8 1239.7l2-2.9 2-1 2-.1 2-.1 2 .7 2 2.8 2 2.3 2 .4 2 1.6 2 1.8 2-1.8 2-4.5 2-4.1 2-.2 2 2.6 2 .3 2-1.9 2-1.5 2 .5 2 2.4 2 2.4 2 1 2-.7 2 .8 2 3.7 2 3.2 2 1.7 2 .7 2-1.6 2-3.9 2-2.7 2 .4 2 2.2 2 .3 2-3.7 2-2.6 2 1.4 2 4.6 2 4.7 2 2 2-1.5 2-3.4 2-2.2 2-.8 2-.5 2-.1 2 .5 2 1.1 2 1.7 2 2.2 2 2.2 2 1.3 2-1.7 2-3.5 2-1.4 2-1.5 2-3.7 2-2.5 2 .6 2 2.4 2 1.7 2-1.3 2-3.1 2-2.8 2-.2 2 1.6 2 1 2 .6 2 1 2 2.7 2 3.1 2 .5 2-1.1 2-1.2 2-1.6 2-2.6 2-3.9 2-1.2 2 4 2 4.2 2 2.2 2 1.8 2 .4 2-2.4 2-2.6 2-1 2-.7 2-1 2-.6 2 .6 2 2.5 2 3 2 2.1 2-.5 2-1.5 2-.9 2-.8 2-1.1 2-1.4 2 0 2 2 2-.3 2-2.5 2 .9 2 2.8 2 .4 2-.2 2 .6 2 0 2 .3 2 2.2 2 2.3 2 .9 2-.2 2-.3 2 .2 2-.8 2-2.9 2-3.5 2-3.2 2-2.5 2 .2 2 3.9 2 4.2 2 1.6 2-1.3 2-2.1 2 .1 2 .5 2-1 2-2.8 2-2.4 2 .7 2 0 2-2.6 2-1 2 2 2 3.5 2 2.6 2 .4 2 .8 2 1.4 2-.9 2-2.9 2-3.3 2-.5 2 2.2 2 .3 2-.4 2 1.6 2 .1 2-2.8 2-1.1 2 2.1 2 3.6 2 2.5 2-.2 2-1.8 2-4 2-7.1 2-4.5 2 2.4 2 4.3 2 3.3 2 3.6 2 3 2 .5 2-3.5 2-5.5 2-1.7 2 1.5 2 1 2-.5 2-.9 2 1.2 2 2.7 2 1.4 2 .8 2 1 2 .3 2-.9 2-1.6 2-1.7 2-1.7 2-1.6 2-.7 2 1.3 2 .4 2-2.7 2-2.4 2 1.7 2 7 2 7.8 2 2.1 2-3.8 2-6.3 2-3.2 2-1.4 2-4.5 2-3.4 2 1 2 1.2 2-.8 2-1.6 2 .3 2 3.3 2 2 2-.4 2-.6 2-.3 2-.2 2 1.1 2 2.5 2 2.1 2 .6 2-1.3 2-3.4 2-3.8 2 .6 2 3.5 2 1.7 2 1.3 2 2.8 2 3 2 1.4 2-1.2 2-2 2-1.2 2-3.3 2-4.7 2-1 2 2.2 2 2.3 2-.6 2-2.4 2 1 2 3.3 2 1.1 2-.3 2-.2 2-.6 2-.4 2 .7 2 1.2 2 1.1 2 .3 2-1.2 2-3.2 2-3.8 2-2.5 2 .4 2 4.4 .5 1.9" fill="none" stroke="#8A6BC0" stroke-width="2.4" stroke-linejoin="round" stroke-linecap="round"/>
<path d="M112.8 1245.1l2-.1 2-3.7 2-4.1 2-1.4 2 1.7 2 3.1 2 2.5 2 .5 2-1.2 2-2.3 2-3 2-2.7 2-1.3 2 1.2 2 2.6 2 1.4 2 .7 2 1.7 2 1.7 2 .6 2-1.6 2-3.2 2-3.2 2-1.1 2 2 2 4.1 2 4.3 2 2.3 2-.6 2-2.6 2-.9 2 1.3 2 1.2 2-.9 2-3.2 2-2.7 2-.4 2 .8 2 .1 2-1.7 2-.6 2 1.8 2 1.8 2 .8 2-.3 2-.7 2-.6 2 .3 2 1.1 2 1.4 2 .6 2-.7 2-1.9 2-1.9 2 0 2 1 2 .8 2 1.2 2 1.6 2 1.2 2 0 2-1 2-.3 2 1.2 2 .8 2-.5 2-2.1 2 0 2 3 2 1.1 2-1.9 2-2.7 2-.9 2 1.6 2-.7 2-3.1 2-1.5 2-.1 2-.2 2 .3 2 .4 2-1.2 2-1.2 2 1.7 2 4.8 2 5 2-.4 2-4.3 2-2.9 2-.5 2 1.2 2 1.4 2 1.5 2 1.9 2 .6 2-1.4 2 .4 2 1.9 2-1.4 2-2.5 2-.7 2-.7 2-1.5 2-.7 2 .2 2 .9 2 1.7 2 1.8 2-.6 2-2.4 2-1.6 2 2 2 4.6 2 0 2-4.3 2-2.2 2 .8 2 1.8 2-1.5 2-3.5 2 .8 2 4.1 2 3.8 2 1.8 2-.3 2-1.6 2-1.9 2-1.2 2 .8 2 2.1 2-.1 2-2.5 2-2.7 2-2.5 2-1.2 2 3.1 2 4.6 2-.5 2-3.3 2-1.8 2 .4 2 1.7 2 .7 2-1.7 2-3.9 2-1.6 2 2 2 2.7 2 3.2 2 4.2 2 .9 2-3.2 2-1.9 2 .8 2 1.8 2 2.5 2 2.4 2-.5 2-4.2 2-6.8 2-4.9 2 .5 2 4 2 4.6 2 1.7 2 .1 2 0 2-1.6 2-3.6 2-2.9 2-1 2 1.4 2 3.5 2 3.7 2 .8 2-1.7 2-1.5 2-1.4 2-2 2-2.1 2-2.1 2-2 2-1.2 2 .2 2-.2 2-.6 2 .8 2 3 2 4.9 2 2.4 2-.6 2 1 2 2.3 2 1.2 2-.1 2-.7 2-1.2 2-2.8 2-5.6 2-3.2 2 2.6 2 4.1 2 1.6 2-2.7 2-4.3 2-2.6 2-1.1 2-.3 2-.8 2 .1 2 2.7 2 2.5 2 1.1 2 1.6 2 1.4 2-.5 2-.3 2 1 2 1.3 2 .4 2-1.3 2-2.5 2-2.1 2 1 2 3.9 2 3.7 2 .1 2-4.6 2-5.1 2-3 2-1.7 2-.3 2 1.4 2 2.9 2 2.9 2 .2 2-2.9 2-4.5 2-3.1 2-.1 2 1.6 2 2.8 2 3.9 2 2.6 2-.3 2-1.1 2-.9 2-1.3 2-2 2-2.3 2-.4 2 4.3 .5 2.2" fill="none" stroke="#96D98D" stroke-width="2.4" stroke-linejoin="round" stroke-linecap="round"/>
<path d="M117.0 1206.0C119.0 1208.6 121.0 1208.6 123.0 1206.0M139.0 1206.0C141.0 1208.6 146.0 1208.6 148.0 1206.0M160.0 1206.0C162.0 1208.6 188.0 1208.6 190.0 1206.0M202.0 1206.0C204.0 1208.6 230.0 1208.6 232.0 1206.0M477.0 1206.0C479.0 1208.6 503.0 1208.6 505.0 1206.0M526.0 1206.0C528.0 1208.6 538.0 1208.6 540.0 1206.0" fill="none" stroke="#5BC8DC" stroke-width="1.2"/>
<path d="M112.3 1206.9H619.3" stroke="#d9a63a" stroke-width="1.5"/>
<path d="M112.3 1203.7H619.3" stroke="#e6c3d3" stroke-width="4.2"/>
<path d="M112.3 1204.3H619.3" stroke="#e9f1fa" stroke-width="1.8"/>
<path d="M112.3 1204.4H619.3" stroke="#6fa0ee" stroke-width="1.2" stroke-dasharray="7 9"/>
<path d="M117.0 1203.5C119.0 1199.2 121.0 1199.2 123.0 1203.5M139.0 1203.5C141.0 1199.2 146.0 1199.2 148.0 1203.5M160.0 1203.5C162.0 1199.2 188.0 1199.2 190.0 1203.5M202.0 1203.5C204.0 1199.2 230.0 1199.2 232.0 1203.5M477.0 1203.5C479.0 1199.2 503.0 1199.2 505.0 1203.5M526.0 1203.5C528.0 1199.2 538.0 1199.2 540.0 1203.5" fill="none" stroke="#A01020" stroke-width="2.6"/>
<circle cx="116.6" cy="1204.1" r="1.7" fill="#F2CC0C"/>
<circle cx="120.7" cy="1204.5" r="1.7" fill="#8AB8FF"/>
<circle cx="127.1" cy="1204.2" r="1.7" fill="#73BF69"/>
<circle cx="130.1" cy="1204.7" r="1.7" fill="#F2CC0C"/>
<circle cx="133.7" cy="1204.7" r="1.7" fill="#B877D9"/>
<circle cx="153.0" cy="1204.0" r="1.7" fill="#8AB8FF"/>
<circle cx="164.9" cy="1203.9" r="1.7" fill="#FADE2A"/>
<circle cx="167.7" cy="1204.0" r="1.7" fill="#e8e8f0"/>
<circle cx="169.0" cy="1204.2" r="1.7" fill="#F2CC0C"/>
<circle cx="189.8" cy="1204.6" r="1.7" fill="#8AB8FF"/>
<circle cx="212.3" cy="1204.0" r="1.7" fill="#73BF69"/>
<circle cx="231.0" cy="1204.0" r="1.7" fill="#F2CC0C"/>
<circle cx="234.0" cy="1204.7" r="1.7" fill="#B877D9"/>
<circle cx="235.2" cy="1204.3" r="1.7" fill="#8AB8FF"/>
<circle cx="248.3" cy="1204.8" r="1.7" fill="#FADE2A"/>
<circle cx="248.7" cy="1204.8" r="1.7" fill="#e8e8f0"/>
<circle cx="251.4" cy="1204.5" r="1.7" fill="#F2CC0C"/>
<circle cx="254.0" cy="1204.2" r="1.7" fill="#8AB8FF"/>
<circle cx="258.8" cy="1204.4" r="1.7" fill="#73BF69"/>
<circle cx="264.9" cy="1204.6" r="1.7" fill="#F2CC0C"/>
<circle cx="292.7" cy="1203.9" r="1.7" fill="#B877D9"/>
<circle cx="309.4" cy="1204.7" r="1.7" fill="#8AB8FF"/>
<circle cx="311.3" cy="1204.6" r="1.7" fill="#FADE2A"/>
<circle cx="340.2" cy="1204.5" r="1.7" fill="#e8e8f0"/>
<circle cx="345.2" cy="1204.7" r="1.7" fill="#F2CC0C"/>
<circle cx="354.3" cy="1204.5" r="1.7" fill="#8AB8FF"/>
<circle cx="366.0" cy="1204.3" r="1.7" fill="#73BF69"/>
<circle cx="381.9" cy="1204.1" r="1.7" fill="#F2CC0C"/>
<circle cx="416.4" cy="1204.5" r="1.7" fill="#B877D9"/>
<circle cx="434.1" cy="1204.9" r="1.7" fill="#8AB8FF"/>
<circle cx="436.7" cy="1204.6" r="1.7" fill="#FADE2A"/>
<circle cx="453.3" cy="1204.1" r="1.7" fill="#e8e8f0"/>
<circle cx="464.1" cy="1204.4" r="1.7" fill="#F2CC0C"/>
<circle cx="464.4" cy="1204.8" r="1.7" fill="#8AB8FF"/>
<circle cx="476.2" cy="1204.2" r="1.7" fill="#73BF69"/>
<circle cx="478.0" cy="1204.9" r="1.7" fill="#F2CC0C"/>
<circle cx="481.4" cy="1204.4" r="1.7" fill="#B877D9"/>
<circle cx="505.8" cy="1204.6" r="1.7" fill="#8AB8FF"/>
<circle cx="513.4" cy="1204.3" r="1.7" fill="#FADE2A"/>
<circle cx="517.8" cy="1204.0" r="1.7" fill="#e8e8f0"/>
<circle cx="523.1" cy="1204.2" r="1.7" fill="#F2CC0C"/>
<circle cx="536.5" cy="1204.2" r="1.7" fill="#8AB8FF"/>
<circle cx="537.9" cy="1204.8" r="1.7" fill="#73BF69"/>
<circle cx="538.3" cy="1204.7" r="1.7" fill="#F2CC0C"/>
<circle cx="546.6" cy="1204.9" r="1.7" fill="#B877D9"/>
<circle cx="553.8" cy="1204.3" r="1.7" fill="#8AB8FF"/>
<circle cx="560.9" cy="1204.4" r="1.7" fill="#FADE2A"/>
<circle cx="569.2" cy="1204.7" r="1.7" fill="#e8e8f0"/>
<circle cx="569.2" cy="1204.3" r="1.7" fill="#F2CC0C"/>
<circle cx="574.5" cy="1204.5" r="1.7" fill="#8AB8FF"/>
<circle cx="576.4" cy="1204.3" r="1.7" fill="#73BF69"/>
<circle cx="579.0" cy="1204.6" r="1.7" fill="#F2CC0C"/>
<circle cx="580.8" cy="1204.2" r="1.7" fill="#B877D9"/>
<circle cx="585.0" cy="1204.8" r="1.7" fill="#8AB8FF"/>
<circle cx="585.8" cy="1204.8" r="1.7" fill="#FADE2A"/>
<circle cx="593.6" cy="1204.3" r="1.7" fill="#e8e8f0"/>
<circle cx="595.0" cy="1204.3" r="1.7" fill="#F2CC0C"/>
<circle cx="596.4" cy="1204.0" r="1.7" fill="#8AB8FF"/>
<circle cx="598.7" cy="1204.2" r="1.7" fill="#73BF69"/>
<circle cx="600.7" cy="1204.7" r="1.7" fill="#F2CC0C"/>
<text x="109.2" y="1161.3" text-anchor="end" letter-spacing="0.15" fill="#c7c7d6" stroke="#c7c7d6" stroke-width="0.4">1.0 Mp/s</text>
<text x="109.2" y="1184.8" text-anchor="end" letter-spacing="0.15" fill="#c7c7d6" stroke="#c7c7d6" stroke-width="0.4">500.0 kp/s</text>
<text x="109.2" y="1208.3" text-anchor="end" letter-spacing="0.15" fill="#c7c7d6" stroke="#c7c7d6" stroke-width="0.4">0.0 p/s</text>
<text x="109.2" y="1231.8" text-anchor="end" letter-spacing="0.15" fill="#c7c7d6" stroke="#c7c7d6" stroke-width="0.4">-500.0 kp/s</text>
<text x="109.2" y="1255.3" text-anchor="end" letter-spacing="0.15" fill="#c7c7d6" stroke="#c7c7d6" stroke-width="0.4">-1.0 Mp/s</text>
<text x="158.0" y="1283.6" text-anchor="middle" letter-spacing="0.10" fill="#c7c7d6" stroke="#c7c7d6" stroke-width="0.4">11:00</text>
<text x="242.3" y="1283.6" text-anchor="middle" letter-spacing="0.10" fill="#c7c7d6" stroke="#c7c7d6" stroke-width="0.4">12:00</text>
<text x="326.6" y="1283.6" text-anchor="middle" letter-spacing="0.10" fill="#c7c7d6" stroke="#c7c7d6" stroke-width="0.4">13:00</text>
<text x="410.9" y="1283.6" text-anchor="middle" letter-spacing="0.10" fill="#c7c7d6" stroke="#c7c7d6" stroke-width="0.4">14:00</text>
<text x="495.2" y="1283.6" text-anchor="middle" letter-spacing="0.10" fill="#c7c7d6" stroke="#c7c7d6" stroke-width="0.4">15:00</text>
<text x="579.5" y="1283.6" text-anchor="middle" letter-spacing="0.10" fill="#c7c7d6" stroke="#c7c7d6" stroke-width="0.4">16:00</text>
<text transform="translate(26.3 1204.0) rotate(-90)" text-anchor="middle" letter-spacing="0.3" fill="#c7c7d6" stroke="#c7c7d6" stroke-width="0.3">out(-) | in(+)</text>
<clipPath id="lu"><rect x="9" y="1290" width="626" height="77"/></clipPath><g clip-path="url(#lu)">
<rect x="19.8" y="1301.3" width="14" height="4" rx="2" fill="#73BF69"/>
<text x="40.3" y="1307.2" letter-spacing="0.06" stroke="#ccccdc" stroke-width="0.35">r-1: unicast in</text>
<rect x="122.8" y="1301.3" width="14" height="4" rx="2" fill="#F2CC0C"/>
<text x="143.3" y="1307.2" letter-spacing="0.22" stroke="#ccccdc" stroke-width="0.35">r-3: unicast in</text>
<rect x="227.8" y="1301.3" width="14" height="4" rx="2" fill="#8AB8FF"/>
<text x="248.3" y="1307.2" letter-spacing="0.24" stroke="#ccccdc" stroke-width="0.35">r-4: unicast in</text>
<rect x="333.5" y="1301.3" width="14" height="4" rx="2" fill="#FF780A"/>
<text x="354.0" y="1307.2" letter-spacing="0.20" stroke="#ccccdc" stroke-width="0.35">r-2: unicast in</text>
<rect x="438.5" y="1301.3" width="14" height="4" rx="2" fill="#F2495C"/>
<text x="459.0" y="1307.2" letter-spacing="0.27" stroke="#ccccdc" stroke-width="0.35">csr-5-ops: unicast in</text>
<rect x="19.8" y="1323.4" width="14" height="4" rx="2" fill="#5794F2"/>
<text x="40.3" y="1329.3" letter-spacing="0.17" stroke="#ccccdc" stroke-width="0.35">fw-1-int-PRI: unicast in</text>
<rect x="174.5" y="1323.4" width="14" height="4" rx="2" fill="#B877D9"/>
<text x="195.0" y="1329.3" letter-spacing="0.30" stroke="#ccccdc" stroke-width="0.35">a-56-r2: unicast in</text>
<rect x="306.2" y="1323.4" width="14" height="4" rx="2" fill="#705DA0"/>
<text x="326.7" y="1329.3" letter-spacing="0.14" stroke="#ccccdc" stroke-width="0.35">csr-1-ops: unicast in</text>
<rect x="446.8" y="1323.4" width="14" height="4" rx="2" fill="#37872D"/>
<text x="467.3" y="1329.3" letter-spacing="0.33" stroke="#ccccdc" stroke-width="0.35">a-56-r2-3: unicast in</text>
<rect x="19.8" y="1345.5" width="14" height="4" rx="2" fill="#FADE2A"/>
<text x="40.3" y="1351.4" letter-spacing="0.25" stroke="#ccccdc" stroke-width="0.35">csr-7-ops: unicast in</text>
<rect x="162.5" y="1345.5" width="14" height="4" rx="2" fill="#447EBC"/>
<text x="183.0" y="1351.4" letter-spacing="0.19" stroke="#ccccdc" stroke-width="0.35">asav-3-ops: unicast in</text>
<rect x="313.8" y="1345.5" width="14" height="4" rx="2" fill="#C15C17"/>
<text x="334.3" y="1351.4" letter-spacing="0.20" stroke="#ccccdc" stroke-width="0.35">a-3: unicast in</text>
<rect x="421.5" y="1345.5" width="14" height="4" rx="2" fill="#890F02"/>
<text x="442.0" y="1351.4" letter-spacing="0.08" stroke="#ccccdc" stroke-width="0.35">box-1: unicast in</text>
<rect x="19.8" y="1367.6" width="14" height="4" rx="2" fill="#0A437C"/>
<text x="40.3" y="1373.5" letter-spacing="0.10" stroke="#ccccdc" stroke-width="0.35">a-56-r1: unicast in</text>
<rect x="151.2" y="1367.6" width="14" height="4" rx="2" fill="#6D1F62"/>
<text x="171.7" y="1373.5" letter-spacing="-0.07" stroke="#ccccdc" stroke-width="0.35">gw-1: unicast in</text>
<rect x="264.5" y="1367.6" width="14" height="4" rx="2" fill="#584477"/>
<text x="285.0" y="1373.5" letter-spacing="0.18" stroke="#ccccdc" stroke-width="0.35">fw-1-pri.bn: unicast in</text>
<rect x="413.5" y="1367.6" width="14" height="4" rx="2" fill="#B7DBAB"/>
<text x="434.0" y="1373.5" letter-spacing="0.17" stroke="#ccccdc" stroke-width="0.35">fw-1-sec.bn: unicast in</text>
</g></svg>
<div class="a" style="left:643.5px;top:1098.0px;width:628.0px;height:277.5px;background:#181b1f;border:1px solid #292b32;border-radius:3px"></div>
<span class="t" style="top:1104.3px;font-size:14px;left:651.8px;letter-spacing:0.27px;-webkit-text-stroke:0.55px #ccccdc;">Broadcast</span>
<svg class="a" style="left:731.5px;top:1106.0px" width="16" height="16" viewBox="0 0 16 16"><circle cx="8" cy="8" r="6.2" fill="none" stroke="#9a9aa8" stroke-width="1.2"/><rect x="7.4" y="7.2" width="1.3" height="3.6" fill="#9a9aa8"/><rect x="7.4" y="5" width="1.3" height="1.3" fill="#9a9aa8"/></svg>
<svg class="a" style="left:644.5px;top:1130px" width="626" height="244.5" viewBox="644.5 1130 626 244.5">
<path d="M787.3 1142.7V1266.0M872.6 1142.7V1266.0M957.9 1142.7V1266.0M1043.2 1142.7V1266.0M1128.5 1142.7V1266.0M1213.8 1142.7V1266.0M741.7 1142.8H1255.0M741.7 1160.3H1255.0M741.7 1177.8H1255.0M741.7 1195.2H1255.0M741.7 1212.6H1255.0M741.7 1230.1H1255.0M741.7 1247.5H1255.0M741.7 1265.0H1255.0" stroke="#272a30" stroke-width="1" fill="none"/>
<path d="M742.2 1238.2l2 4.2 2 .5 2-2.3 2-4 2-4.9 2-4.8 2-3.6 2-1.8 2 .5 2 2.8 2 5.3 2 6.8 2 6 2 2.7 2-2.4 2-6.3 2-7 2-5 2-1.1 2 1.6 2 3.1 2 3.3 2 2.4 2 .3 2-2.8 2-6 2-6.5 2-3.7 2 1.9 2 6.9 2 8 2 5.5 2 .5 2-2.9 2-3.8 2-2.1 2 .1 2 .7 2-.1 2-2 2-2.8 2-1.6 2 1.4 2 4.5 2 5 2 3.1 2-1 2-4 2-4.6 2-2.9 2-.1 2 1.8 2 2.5 2 2.2 2 1.4 2 .5 2-.4 2-1.2 2-1.6 2-1.5 2-.9 2 0 2 1.1 2 2.3 2 3.5 2 4 2 3.4 2 2.1 2 .5 2-.6 2-1.2 2-1.4 2-1.1 2-.6 2 .3 2 1.3 2 1.9 2 2.1 2 2 2 .9 2-1.2 2-4.6 2-7.4 2-7.6 2-5.2 2-.3 2 3.6 2 4.9 2 3.5 2 1 2-.4 2-.1 2 1.4 2 2.3 2 1 2-2.3 2-6.4 2-7.6 2-4.9 2 1.1 2 6.3 2 7.6 2 4.6 2-1.1 2-5.1 2-6.3 2-4.4 2-1.5 2 1.1 2 3.1 2 4.7 2 4.9 2 3.8 2 1.4 2-1.2 2-1.9 2-.8 2 1.9 2 3.4 2 2.7 2-.2 2-4.1 2-6.6 2-7.6 2-7 2-4.8 2-.9 2 4.7 2 10.2 2 11.5 2 8.1 2 .5 2-6.3 2-8.5 2-5.8 2 .2 2 4.5 2 6.6 2 6.2 2 4.4 2 2.4 2-.2 2-2.6 2-3.7 2-3 2-.7 2 1.9 2 2.8 2 1.8 2-.4 2-1.9 2-1.7 2 0 2 2 2 2.1 2-.2 2-4.2 2-6.6 2-5.9 2-1.9 2 3.2 2 5.2 2 3.6 2-1.3 2-5.5 2-6.2 2-3.4 2 1.5 2 4.1 2 3.9 2 1 2-2.1 2-3.7 2-3.5 2-1.9 2 .2 2 2.3 2 4.5 2 5.9 2 5.5 2 3 2-.8 2-3.5 2-4.2 2-2.8 2-.5 2 .9 2 1.8 2 1.8 2 1.3 2 .4 2-.8 2-2.2 2-2.9 2-2.7 2-1.9 2-1.6 2-2.1 2-3.6 2-5.2 2-5.1 2-2.9 2 1.4 2 4.8 2 5.3 2 3.2 2-.9 2-2.6 2-1.4 2 2.6 2 6.7 2 8.2 2 7 2 3.6 2 .1 2-2.6 2-4.6 2-5.3 2-3.5 2 .7 2 6.6 2 9.4 2 7.4 2 .6 2-7.5 2-10.9 2-8.9 2-2.3 2 3.1 2 4.6 2 2.2 2-2.4 2-4.6 2-3.9 2-.5 2 2.5 2 3.4 2 2 2-.7 2-1.9 2-1.1 2 1.4 2 4.1 2 4.9 2 4 2 1.8 2-.5 2-2.4 2-3.9 2-4.9 2-5.1 2-4.7 2-3.4 2-1.4 2 1.4 1.3 2.7V1160.3H742.2Z" fill="#5BC4D8" fill-opacity="0.16"/>
<path d="M742.2 1218.2l2 1.5 2 1.1 2 .8 2 .3 2 0 2-.4 2-.9 2-1.3 2-1.1 2-.4 2 1.1 2 2.3 2 2.6 2 1.5 2-.6 2-2.1 2-2.7 2-2.1 2-.8 2 .4 2 1.4 2 2 2 1.8 2 .7 2-1.6 2-4.3 2-4.8 2-3.1 2 .8 2 4.3 2 5.6 2 4.6 2 1.7 2-.2 2-1 2-.7 2 .1 2 .1 2-.5 2-1.7 2-2.1 2-1.4 2 .3 2 2.2 2 2.9 2 2.4 2 .7 2-.9 2-2.1 2-2.8 2-2.7 2-1.8 2 .2 2 2.9 2 4.6 2 4 2 1.2 2-2.7 2-4.6 2-4.4 2-2.1 2 .3 2 1.5 2 1.3 2 .2 2-.4 2-.2 2 .5 2 1.2 2 .9 2-.4 2-2.2 2-2.7 2-1.5 2 1.5 2 4.6 2 5.9 2 5.3 2 3.2 2 .7 2-1.1 2-2.8 2-3.9 2-4.6 2-4.6 2-4.3 2-2.9 2-.7 2 2.7 2 5.8 2 6.6 2 4.8 2 .6 2-3.6 2-6.3 2-7.1 2-6.6 2-4.3 2-.4 2 4.7 2 8.6 2 8.9 2 5.5 2-.4 2-4.6 2-6.4 2-5.5 2-3.3 2-1.1 2 1.1 2 3.2 2 3.9 2 3.3 2 1.1 2-1.3 2-1.9 2-.8 2 1.7 2 3.2 2 2.6 2 0 2-3.4 2-5.1 2-4.9 2-3 2-.8 2 .8 2 2.1 2 2.7 2 2.8 2 2.6 2 1.8 2 .8 2-.3 2-1.5 2-2.6 2-2.4 2-.9 2 1.8 2 3.8 2 3.5 2 .6 2-4 2-6 2-4.8 2 0 2 5 2 6.8 2 4.9 2 .3 2-3.2 2-3.9 2-2 2 1 2 2.9 2 3.1 2 2.2 2 .9 2 0 2-.6 2-1 2-1.5 2-2.4 2-3.3 2-3.3 2-1.9 2 1.2 2 4.7 2 5.8 2 4 2-.7 2-4.9 2-6.3 2-4.6 2-.6 2 2.7 2 4.4 2 4.5 2 3.5 2 1.6 2-1.2 2-4.4 2-5.9 2-5.1 2-1.8 2 2.1 2 4.6 2 5.1 2 4.2 2 2.4 2 .3 2-2.2 2-4.4 2-4.7 2-3.3 2-.3 2 2 2 2.2 2 .2 2-2.6 2-3.4 2-1.7 2 2.1 2 5.1 2 4.8 2 1.1 2-4.4 2-7 2-5.6 2-.5 2 5.1 2 7.5 2 7 2 3.6 2 .2 2-2.9 2-5.5 2-6.7 2-5.6 2-1.9 2 3.7 2 6.6 2 5.5 2 .3 2-6 2-8.1 2-5.6 2 1 2 6.3 2 7.2 2 4.1 2-1.2 2-4.6 2-5.4 2-3.8 2-1.6 2-.3 2 .2 2 .2 2 .5 2 1.3 2 2.7 2 3.6 2 3.5 2 2.1 2 .1 2-1.5 2-2.4 2-2.2 2-1.7 2-1.1 2-.5 2 .2 2 1 2 1.8 1.3 1.6V1160.3H742.2Z" fill="#EF843C" fill-opacity="0.16"/>
<path d="M742.2 1204.2l2-2.5 2-.2 2 1.4 2 2.1 2 2 2 1.2 2-.6 2-2.8 2-3.7 2-2.8 2 .1 2 3.2 2 4.5 2 3.8 2 1.3 2-.7 2-1.4 2-.6 2 .9 2 1.1 2 .3 2-1.8 2-3.4 2-3.3 2-1.8 2 .5 2 1.7 2 1.7 2 .3 2-.7 2-.4 2 1.2 2 3.8 2 4.7 2 3.9 2 1 2-2.1 2-4 2-4.7 2-4.1 2-2.9 2-1.3 2 .8 2 2.5 2 2.6 2 1.3 2-1.4 2-3.1 2-3.3 2-1.6 2 .7 2 2.5 2 3.6 2 3.8 2 3.7 2 3 2 2.1 2 .8 2-.5 2-1.7 2-2.9 2-3.3 2-2.7 2-.9 2 1.5 2 2.8 2 2.6 2 1.1 2-.6 2-1.2 2-1 2 .1 2 .7 2 .4 2-.7 2-1.6 2-1.4 2-.1 2 2.2 2 3.1 2 2 2-1.1 2-4.6 2-5.7 2-4.4 2-.7 2 2.3 2 3.8 2 3.5 2 2 2 .9 2-.2 2-.9 2-1.5 2-2.1 2-2.7 2-2.9 2-2.2 2-.3 2 2.7 2 5.1 2 5.3 2 3.5 2 .2 2-2.3 2-3.7 2-3.8 2-3.2 2-2.3 2-1.1 2 .3 2 1.4 2 2.1 2 2.3 2 2.2 2 1.8 2 1.2 2 .4 2-.4 2-.8 2-1.2 2-1.5 2-1.8 2-2.2 2-2.6 2-2.4 2-1.2 2 .8 2 3.1 2 4.2 2 3.8 2 2 2 .2 2-1 2-1.2 2-.8 2 0 2 .9 2 2.1 2 2.7 2 2.3 2 .7 2-1.6 2-2.8 2-2.5 2-.5 2 1.9 2 3.3 2 3.7 2 3.1 2 2.1 2 .8 2-.8 2-2.4 2-3.2 2-3.4 2-2.9 2-2.1 2-1.1 2 0 2 1 2 1.3 2 .8 2-.2 2-1 2-1.1 2-.5 2 .5 2 .7 2-.4 2-2.3 2-3.9 2-3.7 2-2 2 1.2 2 3.2 2 3.9 2 3.1 2 1.7 2 .2 2-1.6 2-3.1 2-3.7 2-2.9 2-1 2 1.3 2 2.2 2 1.8 2 .1 2-1.1 2-1.5 2-.9 2 .2 2 .6 2 .3 2-.6 2-1.5 2-1.7 2-1.5 2-.8 2-.3 2 .1 2 .2 2 .5 2 1 2 1.6 2 2.4 2 2.5 2 1.9 2 .7 2-.5 2-.3 2 .9 2 2.8 2 3.6 2 2.8 2 .3 2-2.5 2-3.4 2-2.7 2-.4 2 1.2 2 1.7 2 .7 2-.7 2-1.1 2-.6 2 1 2 2.1 2 2.1 2 1.2 2-.6 2-1.7 2-2.5 2-2.8 2-2.6 2-1.8 2-.7 2 .7 2 1.6 2 2 2 1.7 2 1.4 2 1.2 2 1 2 1 2 .8 2 0 2-1 2-2 2-2.5 2-2.6 2-2.2 2-1.1 2 .2 1.3 1.2V1160.3H742.2Z" fill="#E0352B" fill-opacity="0.16"/>
<path d="M742.2 1198.7l2 6.7 2 3.7 2 1.2 2-.6 2-1.9 2-2.5 2-2.6 2-2.1 2-1 2 .4 2 2.3 2 3.9 2 3.5 2 1.1 2-2.7 2-5 2-4.6 2-1.3 2 3 2 4.7 2 3.5 2-.5 2-4 2-5.4 2-4.7 2-2.5 2-.6 2 .5 2 1.2 2 1.7 2 2.6 2 4.1 2 5.6 2 5.8 2 4.8 2 2.3 2-.6 2-2.8 2-4.6 2-5.4 2-5 2-2.9 2 .7 2 4.2 2 5.4 2 4 2 .6 2-2.1 2-3.3 2-2.8 2-1.1 2 .5 2 2 2 3.6 2 4 2 3 2 .6 2-2.4 2-4.3 2-4.7 2-3.8 2-2.2 2-.9 2 .6 2 1.7 2 2.6 2 3.1 2 3.1 2 2.6 2 1.3 2-.6 2-3 2-3.9 2-2.9 2-.2 2 2.7 2 3.8 2 3.1 2 .6 2-1.5 2-3 2-3.7 2-3.7 2-3.2 2-2.2 2-.7 2 1 2 2.7 2 4.8 2 6.1 2 5.8 2 3.3 2-1 2-4.8 2-6.8 2-7.1 2-5.8 2-3.4 2 .1 2 4.2 2 7.3 2 7.3 2 4.3 2-.7 2-4.1 2-5.2 2-4 2-1.7 2 .3 2 1.6 2 2.6 2 2.5 2 1.7 2-.3 2-2.1 2-2.2 2-.5 2 2.5 2 4.1 2 3.3 2-.1 2-4.3 2-6.7 2-6.9 2-5 2-2.2 2 .7 2 3.8 2 6.4 2 7.3 2 6.1 2 2.9 2-.3 2-2.1 2-2.6 2-1.9 2-1 2 .2 2 1.5 2 2 2 1.3 2-.9 2-4 2-5 2-3.4 2 .9 2 5 2 5.7 2 2.9 2-2.9 2-6.4 2-6.2 2-2 2 3.5 2 6.2 2 5.8 2 2.7 2-.3 2-2 2-2.1 2-1.4 2-1.1 2-1.1 2-1.6 2-1.7 2-.8 2 1.1 2 3.2 2 3.6 2 1.8 2-1.9 2-5.1 2-5.9 2-4 2-.4 2 2.5 2 3.8 2 3.6 2 2.4 2 .7 2-1.6 2-4 2-5.1 2-4.1 2-1.4 2 2 2 4.1 2 4.7 2 4 2 2.6 2 .9 2-1.1 2-2.9 2-3.3 2-2 2 .5 2 2.4 2 2.3 2 .4 2-2.5 2-3.7 2-2.8 2 0 2 2.3 2 2.7 2 .9 2-2.1 2-3.2 2-1.9 2 1.7 2 5.4 2 6.9 2 6.3 2 3.6 2 .5 2-2.6 2-5.7 2-7.8 2-7.1 2-3.5 2 2.1 2 5.6 2 5.5 2 1.8 2-3 2-4.7 2-2.6 2 2.4 2 6.2 2 6.3 2 2.8 2-2.5 2-5.6 2-6 2-3.6 2-1 2 .5 2 .9 2 .4 2 .4 2 1.2 2 2.4 2 3.5 2 3.7 2 3.3 2 1.9 2 .5 2-1.2 2-2.8 2-4 2-4.3 2-3.7 2-2.1 2 .5 2 4 1.3 4.9V1160.3H742.2Z" fill="#1F60C4" fill-opacity="0.16"/>
<path d="M742.2 1163.1l2 2 2 1 2 .2 2-.3 2-.7 2-.9 2-.9 2-.7 2-.3 2 .2 2 .9 2 1.6 2 1.4 2 .8 2-.4 2-1.3 2-1.6 2-1.3 2-.5 2 .2 2 .7 2 1.2 2 1.2 2 1 2 .3 2-.6 2-1.2 2-1.3 2-1 2-.5 2 .2 2 1.2 2 2 2 2.1 2 1.5 2-.1 2-1.6 2-2.3 2-2.1 2-1.2 2-.2 2 .6 2 1.2 2 1.7 2 1.4 2 .7 2-.5 2-1.3 2-1.6 2-1.3 2-.7 2 .1 2 .9 2 1.7 2 2 2 1.7 2 .5 2-1 2-1.9 2-1.9 2-1.4 2-.6 2 .2 2 .7 2 1.3 2 1.2 2 .9 2 .1 2-.7 2-1.2 2-1.2 2-1 2-.4 2 .4 2 1.4 2 2.1 2 2 2 1 2-.5 2-1.8 2-2.1 2-1.8 2-.9 2 0 2 1 2 1.9 2 2.2 2 1.8 2 .4 2-1.2 2-2.1 2-2.2 2-1.4 2-.4 2 .5 2 1.5 2 2.1 2 2.1 2 1.3 2-.2 2-1.7 2-2.3 2-2 2-1.2 2-.2 2 .6 2 1.3 2 1.8 2 1.5 2 .8 2-.4 2-1.3 2-1.7 2-1.4 2-.9 2 0 2 1 2 2 2 2.5 2 2 2 .4 2-1.4 2-2.3 2-2.5 2-1.6 2-.6 2 .5 2 1.3 2 2.1 2 2 2 1.3 2-.3 2-1.5 2-2.1 2-1.9 2-1 2-.1 2 .8 2 1.5 2 2 2 1.6 2 .7 2-.7 2-1.7 2-2 2-1.5 2-.6 2 .2 2 1 2 1.8 2 1.9 2 1.5 2 .2 2-1.2 2-1.9 2-2 2-1.2 2-.3 2 .6 2 1.5 2 2.1 2 2 2 1.2 2-.4 2-1.7 2-2.2 2-1.9 2-.8 2-.1 2 .6 2 1 2 1.2 2 .9 2 .4 2-.4 2-.9 2-1.1 2-1 2-.5 2 0 2 .9 2 1.7 2 2 2 1.6 2 .2 2-1.2 2-2 2-1.9 2-1.2 2-.2 2 .5 2 1.1 2 1.5 2 1.4 2 .9 2-.2 2-1.1 2-1.5 2-1.5 2-1 2-.4 2 .6 2 1.6 2 2.2 2 2 2 .8 2-.8 2-1.9 2-2.3 2-1.8 2-.8 2 .1 2 1.2 2 2.1 2 2.5 2 1.8 2 .3 2-1.5 2-2.2 2-2.2 2-1.3 2-.3 2 .6 2 1.2 2 1.5 2 1.5 2 .7 2-.3 2-1.2 2-1.6 2-1.4 2-.9 2-.2 2 .6 2 1.5 2 1.9 2 1.7 2 .7 2-.8 2-1.7 2-1.9 2-1.4 2-.5 2 .3 2 1.1 2 1.7 2 1.9 2 1.3 2 .2 2-1.1 2-1.9 2-2.1 2-1.7 2-.8 2 .6 1.3 1.4V1160.3H742.2Z" fill="#F2606E" fill-opacity="0.2"/>
<path d="M742.2 1238.2l2 4.2 2 .5 2-2.3 2-4 2-4.9 2-4.8 2-3.6 2-1.8 2 .5 2 2.8 2 5.3 2 6.8 2 6 2 2.7 2-2.4 2-6.3 2-7 2-5 2-1.1 2 1.6 2 3.1 2 3.3 2 2.4 2 .3 2-2.8 2-6 2-6.5 2-3.7 2 1.9 2 6.9 2 8 2 5.5 2 .5 2-2.9 2-3.8 2-2.1 2 .1 2 .7 2-.1 2-2 2-2.8 2-1.6 2 1.4 2 4.5 2 5 2 3.1 2-1 2-4 2-4.6 2-2.9 2-.1 2 1.8 2 2.5 2 2.2 2 1.4 2 .5 2-.4 2-1.2 2-1.6 2-1.5 2-.9 2 0 2 1.1 2 2.3 2 3.5 2 4 2 3.4 2 2.1 2 .5 2-.6 2-1.2 2-1.4 2-1.1 2-.6 2 .3 2 1.3 2 1.9 2 2.1 2 2 2 .9 2-1.2 2-4.6 2-7.4 2-7.6 2-5.2 2-.3 2 3.6 2 4.9 2 3.5 2 1 2-.4 2-.1 2 1.4 2 2.3 2 1 2-2.3 2-6.4 2-7.6 2-4.9 2 1.1 2 6.3 2 7.6 2 4.6 2-1.1 2-5.1 2-6.3 2-4.4 2-1.5 2 1.1 2 3.1 2 4.7 2 4.9 2 3.8 2 1.4 2-1.2 2-1.9 2-.8 2 1.9 2 3.4 2 2.7 2-.2 2-4.1 2-6.6 2-7.6 2-7 2-4.8 2-.9 2 4.7 2 10.2 2 11.5 2 8.1 2 .5 2-6.3 2-8.5 2-5.8 2 .2 2 4.5 2 6.6 2 6.2 2 4.4 2 2.4 2-.2 2-2.6 2-3.7 2-3 2-.7 2 1.9 2 2.8 2 1.8 2-.4 2-1.9 2-1.7 2 0 2 2 2 2.1 2-.2 2-4.2 2-6.6 2-5.9 2-1.9 2 3.2 2 5.2 2 3.6 2-1.3 2-5.5 2-6.2 2-3.4 2 1.5 2 4.1 2 3.9 2 1 2-2.1 2-3.7 2-3.5 2-1.9 2 .2 2 2.3 2 4.5 2 5.9 2 5.5 2 3 2-.8 2-3.5 2-4.2 2-2.8 2-.5 2 .9 2 1.8 2 1.8 2 1.3 2 .4 2-.8 2-2.2 2-2.9 2-2.7 2-1.9 2-1.6 2-2.1 2-3.6 2-5.2 2-5.1 2-2.9 2 1.4 2 4.8 2 5.3 2 3.2 2-.9 2-2.6 2-1.4 2 2.6 2 6.7 2 8.2 2 7 2 3.6 2 .1 2-2.6 2-4.6 2-5.3 2-3.5 2 .7 2 6.6 2 9.4 2 7.4 2 .6 2-7.5 2-10.9 2-8.9 2-2.3 2 3.1 2 4.6 2 2.2 2-2.4 2-4.6 2-3.9 2-.5 2 2.5 2 3.4 2 2 2-.7 2-1.9 2-1.1 2 1.4 2 4.1 2 4.9 2 4 2 1.8 2-.5 2-2.4 2-3.9 2-4.9 2-5.1 2-4.7 2-3.4 2-1.4 2 1.4 1.3 2.7" fill="none" stroke="#5BC4D8" stroke-width="2.6" stroke-linejoin="round" stroke-linecap="round"/>
<path d="M742.2 1218.2l2 1.5 2 1.1 2 .8 2 .3 2 0 2-.4 2-.9 2-1.3 2-1.1 2-.4 2 1.1 2 2.3 2 2.6 2 1.5 2-.6 2-2.1 2-2.7 2-2.1 2-.8 2 .4 2 1.4 2 2 2 1.8 2 .7 2-1.6 2-4.3 2-4.8 2-3.1 2 .8 2 4.3 2 5.6 2 4.6 2 1.7 2-.2 2-1 2-.7 2 .1 2 .1 2-.5 2-1.7 2-2.1 2-1.4 2 .3 2 2.2 2 2.9 2 2.4 2 .7 2-.9 2-2.1 2-2.8 2-2.7 2-1.8 2 .2 2 2.9 2 4.6 2 4 2 1.2 2-2.7 2-4.6 2-4.4 2-2.1 2 .3 2 1.5 2 1.3 2 .2 2-.4 2-.2 2 .5 2 1.2 2 .9 2-.4 2-2.2 2-2.7 2-1.5 2 1.5 2 4.6 2 5.9 2 5.3 2 3.2 2 .7 2-1.1 2-2.8 2-3.9 2-4.6 2-4.6 2-4.3 2-2.9 2-.7 2 2.7 2 5.8 2 6.6 2 4.8 2 .6 2-3.6 2-6.3 2-7.1 2-6.6 2-4.3 2-.4 2 4.7 2 8.6 2 8.9 2 5.5 2-.4 2-4.6 2-6.4 2-5.5 2-3.3 2-1.1 2 1.1 2 3.2 2 3.9 2 3.3 2 1.1 2-1.3 2-1.9 2-.8 2 1.7 2 3.2 2 2.6 2 0 2-3.4 2-5.1 2-4.9 2-3 2-.8 2 .8 2 2.1 2 2.7 2 2.8 2 2.6 2 1.8 2 .8 2-.3 2-1.5 2-2.6 2-2.4 2-.9 2 1.8 2 3.8 2 3.5 2 .6 2-4 2-6 2-4.8 2 0 2 5 2 6.8 2 4.9 2 .3 2-3.2 2-3.9 2-2 2 1 2 2.9 2 3.1 2 2.2 2 .9 2 0 2-.6 2-1 2-1.5 2-2.4 2-3.3 2-3.3 2-1.9 2 1.2 2 4.7 2 5.8 2 4 2-.7 2-4.9 2-6.3 2-4.6 2-.6 2 2.7 2 4.4 2 4.5 2 3.5 2 1.6 2-1.2 2-4.4 2-5.9 2-5.1 2-1.8 2 2.1 2 4.6 2 5.1 2 4.2 2 2.4 2 .3 2-2.2 2-4.4 2-4.7 2-3.3 2-.3 2 2 2 2.2 2 .2 2-2.6 2-3.4 2-1.7 2 2.1 2 5.1 2 4.8 2 1.1 2-4.4 2-7 2-5.6 2-.5 2 5.1 2 7.5 2 7 2 3.6 2 .2 2-2.9 2-5.5 2-6.7 2-5.6 2-1.9 2 3.7 2 6.6 2 5.5 2 .3 2-6 2-8.1 2-5.6 2 1 2 6.3 2 7.2 2 4.1 2-1.2 2-4.6 2-5.4 2-3.8 2-1.6 2-.3 2 .2 2 .2 2 .5 2 1.3 2 2.7 2 3.6 2 3.5 2 2.1 2 .1 2-1.5 2-2.4 2-2.2 2-1.7 2-1.1 2-.5 2 .2 2 1 2 1.8 1.3 1.6" fill="none" stroke="#EF843C" stroke-width="2.6" stroke-linejoin="round" stroke-linecap="round"/>
<path d="M742.2 1204.2l2-2.5 2-.2 2 1.4 2 2.1 2 2 2 1.2 2-.6 2-2.8 2-3.7 2-2.8 2 .1 2 3.2 2 4.5 2 3.8 2 1.3 2-.7 2-1.4 2-.6 2 .9 2 1.1 2 .3 2-1.8 2-3.4 2-3.3 2-1.8 2 .5 2 1.7 2 1.7 2 .3 2-.7 2-.4 2 1.2 2 3.8 2 4.7 2 3.9 2 1 2-2.1 2-4 2-4.7 2-4.1 2-2.9 2-1.3 2 .8 2 2.5 2 2.6 2 1.3 2-1.4 2-3.1 2-3.3 2-1.6 2 .7 2 2.5 2 3.6 2 3.8 2 3.7 2 3 2 2.1 2 .8 2-.5 2-1.7 2-2.9 2-3.3 2-2.7 2-.9 2 1.5 2 2.8 2 2.6 2 1.1 2-.6 2-1.2 2-1 2 .1 2 .7 2 .4 2-.7 2-1.6 2-1.4 2-.1 2 2.2 2 3.1 2 2 2-1.1 2-4.6 2-5.7 2-4.4 2-.7 2 2.3 2 3.8 2 3.5 2 2 2 .9 2-.2 2-.9 2-1.5 2-2.1 2-2.7 2-2.9 2-2.2 2-.3 2 2.7 2 5.1 2 5.3 2 3.5 2 .2 2-2.3 2-3.7 2-3.8 2-3.2 2-2.3 2-1.1 2 .3 2 1.4 2 2.1 2 2.3 2 2.2 2 1.8 2 1.2 2 .4 2-.4 2-.8 2-1.2 2-1.5 2-1.8 2-2.2 2-2.6 2-2.4 2-1.2 2 .8 2 3.1 2 4.2 2 3.8 2 2 2 .2 2-1 2-1.2 2-.8 2 0 2 .9 2 2.1 2 2.7 2 2.3 2 .7 2-1.6 2-2.8 2-2.5 2-.5 2 1.9 2 3.3 2 3.7 2 3.1 2 2.1 2 .8 2-.8 2-2.4 2-3.2 2-3.4 2-2.9 2-2.1 2-1.1 2 0 2 1 2 1.3 2 .8 2-.2 2-1 2-1.1 2-.5 2 .5 2 .7 2-.4 2-2.3 2-3.9 2-3.7 2-2 2 1.2 2 3.2 2 3.9 2 3.1 2 1.7 2 .2 2-1.6 2-3.1 2-3.7 2-2.9 2-1 2 1.3 2 2.2 2 1.8 2 .1 2-1.1 2-1.5 2-.9 2 .2 2 .6 2 .3 2-.6 2-1.5 2-1.7 2-1.5 2-.8 2-.3 2 .1 2 .2 2 .5 2 1 2 1.6 2 2.4 2 2.5 2 1.9 2 .7 2-.5 2-.3 2 .9 2 2.8 2 3.6 2 2.8 2 .3 2-2.5 2-3.4 2-2.7 2-.4 2 1.2 2 1.7 2 .7 2-.7 2-1.1 2-.6 2 1 2 2.1 2 2.1 2 1.2 2-.6 2-1.7 2-2.5 2-2.8 2-2.6 2-1.8 2-.7 2 .7 2 1.6 2 2 2 1.7 2 1.4 2 1.2 2 1 2 1 2 .8 2 0 2-1 2-2 2-2.5 2-2.6 2-2.2 2-1.1 2 .2 1.3 1.2" fill="none" stroke="#E0352B" stroke-width="2.6" stroke-linejoin="round" stroke-linecap="round"/>
<path d="M742.2 1198.7l2 6.7 2 3.7 2 1.2 2-.6 2-1.9 2-2.5 2-2.6 2-2.1 2-1 2 .4 2 2.3 2 3.9 2 3.5 2 1.1 2-2.7 2-5 2-4.6 2-1.3 2 3 2 4.7 2 3.5 2-.5 2-4 2-5.4 2-4.7 2-2.5 2-.6 2 .5 2 1.2 2 1.7 2 2.6 2 4.1 2 5.6 2 5.8 2 4.8 2 2.3 2-.6 2-2.8 2-4.6 2-5.4 2-5 2-2.9 2 .7 2 4.2 2 5.4 2 4 2 .6 2-2.1 2-3.3 2-2.8 2-1.1 2 .5 2 2 2 3.6 2 4 2 3 2 .6 2-2.4 2-4.3 2-4.7 2-3.8 2-2.2 2-.9 2 .6 2 1.7 2 2.6 2 3.1 2 3.1 2 2.6 2 1.3 2-.6 2-3 2-3.9 2-2.9 2-.2 2 2.7 2 3.8 2 3.1 2 .6 2-1.5 2-3 2-3.7 2-3.7 2-3.2 2-2.2 2-.7 2 1 2 2.7 2 4.8 2 6.1 2 5.8 2 3.3 2-1 2-4.8 2-6.8 2-7.1 2-5.8 2-3.4 2 .1 2 4.2 2 7.3 2 7.3 2 4.3 2-.7 2-4.1 2-5.2 2-4 2-1.7 2 .3 2 1.6 2 2.6 2 2.5 2 1.7 2-.3 2-2.1 2-2.2 2-.5 2 2.5 2 4.1 2 3.3 2-.1 2-4.3 2-6.7 2-6.9 2-5 2-2.2 2 .7 2 3.8 2 6.4 2 7.3 2 6.1 2 2.9 2-.3 2-2.1 2-2.6 2-1.9 2-1 2 .2 2 1.5 2 2 2 1.3 2-.9 2-4 2-5 2-3.4 2 .9 2 5 2 5.7 2 2.9 2-2.9 2-6.4 2-6.2 2-2 2 3.5 2 6.2 2 5.8 2 2.7 2-.3 2-2 2-2.1 2-1.4 2-1.1 2-1.1 2-1.6 2-1.7 2-.8 2 1.1 2 3.2 2 3.6 2 1.8 2-1.9 2-5.1 2-5.9 2-4 2-.4 2 2.5 2 3.8 2 3.6 2 2.4 2 .7 2-1.6 2-4 2-5.1 2-4.1 2-1.4 2 2 2 4.1 2 4.7 2 4 2 2.6 2 .9 2-1.1 2-2.9 2-3.3 2-2 2 .5 2 2.4 2 2.3 2 .4 2-2.5 2-3.7 2-2.8 2 0 2 2.3 2 2.7 2 .9 2-2.1 2-3.2 2-1.9 2 1.7 2 5.4 2 6.9 2 6.3 2 3.6 2 .5 2-2.6 2-5.7 2-7.8 2-7.1 2-3.5 2 2.1 2 5.6 2 5.5 2 1.8 2-3 2-4.7 2-2.6 2 2.4 2 6.2 2 6.3 2 2.8 2-2.5 2-5.6 2-6 2-3.6 2-1 2 .5 2 .9 2 .4 2 .4 2 1.2 2 2.4 2 3.5 2 3.7 2 3.3 2 1.9 2 .5 2-1.2 2-2.8 2-4 2-4.3 2-3.7 2-2.1 2 .5 2 4 1.3 4.9" fill="none" stroke="#1F60C4" stroke-width="2.6" stroke-linejoin="round" stroke-linecap="round"/>
<path d="M742.2 1163.1l2 2 2 1 2 .2 2-.3 2-.7 2-.9 2-.9 2-.7 2-.3 2 .2 2 .9 2 1.6 2 1.4 2 .8 2-.4 2-1.3 2-1.6 2-1.3 2-.5 2 .2 2 .7 2 1.2 2 1.2 2 1 2 .3 2-.6 2-1.2 2-1.3 2-1 2-.5 2 .2 2 1.2 2 2 2 2.1 2 1.5 2-.1 2-1.6 2-2.3 2-2.1 2-1.2 2-.2 2 .6 2 1.2 2 1.7 2 1.4 2 .7 2-.5 2-1.3 2-1.6 2-1.3 2-.7 2 .1 2 .9 2 1.7 2 2 2 1.7 2 .5 2-1 2-1.9 2-1.9 2-1.4 2-.6 2 .2 2 .7 2 1.3 2 1.2 2 .9 2 .1 2-.7 2-1.2 2-1.2 2-1 2-.4 2 .4 2 1.4 2 2.1 2 2 2 1 2-.5 2-1.8 2-2.1 2-1.8 2-.9 2 0 2 1 2 1.9 2 2.2 2 1.8 2 .4 2-1.2 2-2.1 2-2.2 2-1.4 2-.4 2 .5 2 1.5 2 2.1 2 2.1 2 1.3 2-.2 2-1.7 2-2.3 2-2 2-1.2 2-.2 2 .6 2 1.3 2 1.8 2 1.5 2 .8 2-.4 2-1.3 2-1.7 2-1.4 2-.9 2 0 2 1 2 2 2 2.5 2 2 2 .4 2-1.4 2-2.3 2-2.5 2-1.6 2-.6 2 .5 2 1.3 2 2.1 2 2 2 1.3 2-.3 2-1.5 2-2.1 2-1.9 2-1 2-.1 2 .8 2 1.5 2 2 2 1.6 2 .7 2-.7 2-1.7 2-2 2-1.5 2-.6 2 .2 2 1 2 1.8 2 1.9 2 1.5 2 .2 2-1.2 2-1.9 2-2 2-1.2 2-.3 2 .6 2 1.5 2 2.1 2 2 2 1.2 2-.4 2-1.7 2-2.2 2-1.9 2-.8 2-.1 2 .6 2 1 2 1.2 2 .9 2 .4 2-.4 2-.9 2-1.1 2-1 2-.5 2 0 2 .9 2 1.7 2 2 2 1.6 2 .2 2-1.2 2-2 2-1.9 2-1.2 2-.2 2 .5 2 1.1 2 1.5 2 1.4 2 .9 2-.2 2-1.1 2-1.5 2-1.5 2-1 2-.4 2 .6 2 1.6 2 2.2 2 2 2 .8 2-.8 2-1.9 2-2.3 2-1.8 2-.8 2 .1 2 1.2 2 2.1 2 2.5 2 1.8 2 .3 2-1.5 2-2.2 2-2.2 2-1.3 2-.3 2 .6 2 1.2 2 1.5 2 1.5 2 .7 2-.3 2-1.2 2-1.6 2-1.4 2-.9 2-.2 2 .6 2 1.5 2 1.9 2 1.7 2 .7 2-.8 2-1.7 2-1.9 2-1.4 2-.5 2 .3 2 1.1 2 1.7 2 1.9 2 1.3 2 .2 2-1.1 2-1.9 2-2.1 2-1.7 2-.8 2 .6 1.3 1.4" fill="none" stroke="#F2606E" stroke-width="2" stroke-linejoin="round" stroke-linecap="round"/>
<path d="M742.2 1160.7l3 0 3-.2 3-.2 3-.1 3 0 3 0 3 .2 3 .1 3-.1 3 0 3-.1 3-.1 3 .1 3-.2 3-.1 3 .3 3 .4 3 .2 3-.1 3-.3 3-.2 3 0 3 0 3 0 3 0 3 .3 3 .2 3 0 3-.2 3-.1 3 .3 3 .1 3-.2 3-.3 3 0 3 .1 3 .1 3 .2 3 0 3-.3 3-.3 3 .1 3 0 3 .2 3 .2 3 0 3-.1 3 .1 3 0 3-.2 3 0 3 .3 3-.1 3-.2 3 .1 3 .1 3-.1 3-.2 3-.1 3 .1 3 .1 3 0 3-.1 3-.3 3-.1 3 .1 3 .1 3 .1 3 .1 3 .2 3 .2 3-.1 3-.1 3-.1 3 0 3 .1 3 .1 3 0 3 0 3 .1 3 .1 3 0 3-.1 3-.1 3 0 3 0 3 0 3 0 3 .1 3 .1 3-.1 3-.1 3 0 3 .1 3 0 3 0 3-.3 3-.1 3 .2 3 0 3-.2 3-.1 3 .3 3 .2 3-.1 3-.1 3-.1 3 0 3 .2 3 0 3-.2 3-.2 3-.1 3 0 3-.1 3 0 3 0 3 .1 3 .2 3 .3 3-.3 3-.2 3 .1 3 .1 3 .1 3 .1 3 0 3 0 3 .1 3 0 3 .1 3-.1 3-.4 3-.2 3 0 3 .1 3 0 3 .1 3 .3 3 .1 3-.1 3-.1 3 0 3-.1 3 .2 3 0 3-.2 3-.1 3 .1 3 0 3 0 3-.1 3 .1 3 .1 3-.1 3 0 3 .1 3 0 3-.1 3 0 3-.1 3 0 3 .1 3 .1 3 0 3 0 3 .1 3 .1 3 0 3-.2 .8-.1" fill="none" stroke="#705DA0" stroke-width="1.8" stroke-linejoin="round" stroke-linecap="round"/>
<path d="M742.2 1160.5l3-.1 3-.2 3 0 3 .1 3 0 3-.2 3-.2 3-.1 3 0 3 .1 3 0 3 .2 3 .2 3-.1 3-.2 3 .1 3 0 3 .1 3-.1 3-.2 3 .1 3 .1 3 0 3 0 3-.1 3 .1 3 0 3 .1 3 0 3 0 3 0 3-.1 3-.1 3-.1 3 .2 3 .2 3-.1 3-.2 3 .1 3 0 3-.3 3 .1 3 0 3 .1 3 0 3-.1 3 .1 3 .1 3-.1 3-.1 3-.2 3 0 3 0 3 .1 3 .1 3 0 3 .1 3 .2 3 .2 3 .1 3-.1 3-.3 3-.1 3 .1 3 .1 3 .1 3 0 3-.1 3 0 3 0 3-.2 3-.1 3-.2 3 .1 3 .3 3 .1 3-.1 3-.1 3-.1 3 .1 3 .1 3 .1 3 0 3 .1 3 .1 3-.2 3 0 3 .1 3-.1 3-.2 3-.1 3 0 3-.1 3 .1 3 .2 3 .3 3 0 3-.2 3-.1 3-.1 3 .2 3 .1 3 .1 3-.1 3 0 3 .2 3-.1 3-.2 3-.1 3 .1 3 0 3 0 3-.1 3 0 3-.1 3 0 3 .3 3 .1 3-.1 3-.2 3-.1 3 .1 3 0 3-.1 3-.1 3 .2 3 .3 3-.1 3-.3 3 0 3 .2 3-.2 3-.3 3 .1 3 .2 3 0 3 .1 3-.1 3 0 3 .1 3 .1 3 0 3 .2 3 0 3-.2 3-.2 3 0 3 .1 3 0 3 0 3 .2 3 0 3-.1 3-.2 3-.1 3 .2 3 .2 3 0 3-.1 3-.3 3 .1 3 .2 3 .2 3 .1 3-.2 3-.2 3 .1 3 0 3-.1 3 0 .8 0" fill="none" stroke="#B877D9" stroke-width="1.8" stroke-linejoin="round" stroke-linecap="round"/>
<path d="M742.2 1158.5l3 .2 3-.2 3-.2 3 0 3 0 3 0 3 .1 3 .1 3-.2 3 0 3 .3 3 .1 3 0 3-.1 3 0 3 .2 3 .1 3-.2 3 .1 3 .2 3 .1 3-.1 3-.1 3 .1 3 .4 3 .1 3-.1 3-.2 3-.2 3-.2 3-.2 3-.3 3-.1 3 0 3 .2 3 .4 3 .1 3 0 3 .2 3 0 3-.3 3-.1 3-.1 3 0 3-.1 3-.1 3 0 3 .2 3 .3 3-.1 3-.3 3-.4 3 .1 3 .4 3 .2 3 .3 3 .2 3-.4 3-.3 3 0 3 .1 3 .2 3-.1 3-.2 3 .1 3-.1 3-.2 3 .1 3 .2 3 .1 3 .1 3 .2 3-.1 3 0 3 .1 3-.1 3-.4 3-.3 3 0 3 .4 3 0 3-.1 3 .1 3 .1 3-.1 3-.1 3 .1 3 .1 3-.2 3 0 3 .1 3 .1 3-.1 3 0 3 .3 3-.1 3-.1 3 .1 3 0 3-.2 3-.2 3 0 3 .2 3 .1 3-.1 3 0 3 .1 3 0 3-.1 3 .1 3 0 3-.2 3 0 3 .1 3 0 3 .1 3 .1 3 .1 3-.1 3-.2 3-.1 3 .1 3 .2 3 .2 3 .1 3 0 3-.1 3-.2 3 .1 3 0 3-.1 3 0 3-.1 3-.2 3 0 3 0 3 .2 3 0 3-.3 3-.3 3 0 3 .1 3 0 3 0 3 .1 3 .1 3 .1 3 0 3 .2 3 .3 3 0 3-.5 3-.5 3 0 3 .2 3 .2 3 0 3 0 3-.1 3 0 3 .4 3 .4 3 .1 3-.2 3-.3 3-.3 3 .3 3 .2 3 0 3-.2 .8-.1" fill="none" stroke="#5794F2" stroke-width="1.8" stroke-linejoin="round" stroke-linecap="round"/>
<path d="M742.2 1158.5l3 .1 3-.3 3-.2 3 0 3-.1 3-.4 3-.6 3 0 3 .1 3 .4 3 .4 3 0 3 0 3-.2 3 0 3 .3 3 .2 3 0 3-.2 3-.3 3 .2 3 .4 3-.2 3-.5 3-.2 3 .2 3 .2 3 0 3 .1 3 0 3 0 3 .1 3 0 3-.2 3-.3 3-.1 3 0 3 0 3 .3 3 .2 3 .2 3-.3 3-.5 3-.2 3 .3 3 .1 3-.4 3 .2 3 .2 3 0 3 .2 3 .3 3 .1 3-.2 3-.3 3-.3 3 .5 3 .5 3-.3 3-.5 3 .2 3 .4 3-.2 3-.7 3 .3 3 .5 3 .1 3-.1 3-.1 3-.1 3-.1 3 0 3-.1 3 0 3 .2 3 0 3-.2 3 0 3 .1 3-.1 3 0 3 .2 3 .2 3 .3 3 .2 3 .1 3-.1 3-.4 3-.3 3 0 3 .1 3 .3 3 .3 3-.2 3-.6 3-.4 3 .4 3 .1 3 .3 3 .4 3 .1 3-.2 3-.3 3-.3 3-.1 3 .2 3 .1 3-.3 3-.4 3 0 3 .4 3 .4 3 .2 3 0 3 0 3-.4 3-.2 3 .1 3 0 3 .2 3-.3 3-.2 3 0 3 .1 3 .2 3-.2 3-.2 3 .4 3-.1 3 .1 3 .3 3-.2 3-.6 3-.1 3 .4 3 .6 3 0 3-.4 3-.2 3-.1 3 .2 3 .6 3 .4 3-.2 3-.3 3 .1 3 .2 3-.4 3-.5 3 0 3 .4 3 .1 3-.2 3-.2 3 .1 3 .2 3 .1 3 .1 3-.2 3-.5 3-.3 3 .4 3 .2 3 0 3 .1 3 .1 3 0 3-.3 3-.2 3 0 .8 .1" fill="none" stroke="#8AB8FF" stroke-width="1.8" stroke-linejoin="round" stroke-linecap="round"/>
<path d="M742.2 1156.6l3 .1 3 .1 3 .1 3 .1 3 .1 3-.1 3-.3 3-.3 3 .4 3 .4 3-.1 3-.1 3 .1 3-.1 3-.1 3 .1 3 .1 3-.3 3-.4 3-.1 3 .2 3 .3 3 .1 3 0 3-.1 3 .1 3 0 3 0 3 .1 3 .2 3 .2 3-.1 3-.1 3-.1 3 0 3 .1 3 .2 3-.2 3-.2 3-.1 3-.2 3 .2 3 .3 3 0 3-.2 3 0 3-.2 3-.1 3 .2 3 .2 3 .3 3 0 3-.4 3-.2 3 .2 3 .4 3 .1 3-.2 3-.3 3 0 3-.2 3-.3 3 0 3 .3 3-.3 3-.1 3 .7 3 .5 3-.1 3-.3 3-.1 3 .1 3-.1 3-.2 3 .3 3 .4 3 0 3-.5 3-.4 3-.2 3 .3 3 .7 3 .2 3-.3 3-.2 3-.1 3-.2 3-.2 3-.1 3 0 3 .1 3 .1 3 .1 3 .5 3 .1 3 0 3-.2 3-.4 3-.3 3 .3 3 .1 3-.3 3-.1 3 .4 3 .3 3-.2 3-.2 3 .2 3 .2 3-.3 3-.3 3-.1 3-.1 3 .1 3 .4 3 .3 3-.2 3-.2 3-.1 3-.1 3 .1 3 .2 3-.1 3-.1 3 .1 3 .3 3 0 3-.1 3-.2 3-.2 3 0 3 .3 3 .2 3 .1 3-.2 3 0 3 .2 3-.1 3-.4 3-.3 3 .3 3 .3 3-.3 3-.1 3-.1 3 .3 3 0 3 .1 3 .1 3 0 3-.2 3-.1 3 .2 3 .3 3-.2 3-.1 3 .1 3 .3 3 .1 3-.3 3-.4 3-.2 3 .2 3 .3 3 0 3 0 3 0 3-.1 3 .2 3 .2 .8 0" fill="none" stroke="#FADE2A" stroke-width="1.8" stroke-linejoin="round" stroke-linecap="round"/>
<path d="M742.2 1155.5l3-.3 3 .3 3 .6 3 .2 3-.2 3 .1 3 .5 3-.2 3 .1 3 .3 3-.5 3-.4 3 .2 3 .3 3 .1 3-.2 3-.2 3-.3 3-.1 3-.2 3 0 3 .5 3 .2 3 0 3-.2 3-.1 3-.3 3-.2 3 .2 3 .6 3 .4 3-.2 3-.3 3-.1 3 .3 3-.1 3-.4 3 0 3 .2 3 .1 3 0 3-.1 3 .3 3 .1 3-.7 3-.4 3 .5 3 .4 3 .3 3-.1 3-.2 3 .3 3 .3 3-.1 3-.6 3-.5 3-.1 3-.5 3-.1 3 .5 3 .4 3 .1 3-.5 3-.3 3 .8 3 0 3-.5 3-.2 3 .4 3 .3 3 .1 3 0 3 .2 3-.3 3 .2 3 .7 3 .1 3-.5 3-.1 3 .2 3 .3 3-.2 3-.5 3-.4 3-.1 3 0 3 .5 3 .4 3-.1 3-.3 3-.1 3-.1 3-.1 3-.1 3-.1 3 .2 3 .2 3-.3 3-.1 3 .3 3 .2 3 0 3 0 3 .2 3 .6 3 .1 3-.6 3-.5 3-.2 3-.4 3-.1 3 .1 3 .1 3 .5 3 .3 3 .2 3-.1 3-.5 3-.3 3 .2 3 .2 3 .3 3 0 3 0 3 0 3 0 3-.2 3-.3 3-.2 3 .1 3-.1 3-.2 3 .2 3 .5 3 .3 3-.3 3-.5 3 .1 3 .7 3 .2 3-.4 3-.4 3-.2 3-.4 3 .1 3 .5 3 .5 3 .1 3-.1 3 0 3 .2 3-.3 3-.2 3-.3 3 .3 3 .4 3-.1 3 0 3 0 3-.1 3 .1 3 .2 3 0 3 0 3 .1 3-.1 3-.3 3 0 3 0 3-.3 .8-.1" fill="none" stroke="#F2CC0C" stroke-width="1.8" stroke-linejoin="round" stroke-linecap="round"/>
<path d="M742.2 1155.3l3 .3 3 .2 3-.1 3-.3 3-.1 3-.1 3-.1 3 .1 3 .1 3-.2 3 0 3 .1 3 .1 3-.1 3-.4 3-.4 3 .2 3 .3 3 .2 3 .3 3 .4 3 .4 3-.1 3-.7 3-.5 3 .1 3 .7 3 .2 3-.4 3-.3 3-.1 3-.3 3 .1 3 .4 3-.1 3-.1 3 .2 3 0 3 0 3 .3 3 .2 3-.6 3-.4 3 0 3 .2 3 .4 3 .2 3-.5 3-.6 3 .1 3 .3 3 .1 3 .1 3 .1 3 0 3 .1 3 .1 3 0 3-.1 3-.3 3-.5 3-.1 3 .8 3 .5 3 0 3 0 3-.6 3-.1 3 .3 3-.1 3-.2 3-.1 3 .2 3 .1 3 0 3 0 3-.1 3 0 3-.1 3-.3 3 .1 3 .1 3 .2 3 .2 3 .1 3-.2 3-.2 3 .2 3 .3 3-.1 3-.7 3-.4 3 .2 3 0 3-.1 3 0 3 0 3 .3 3 0 3-.2 3 .2 3 .5 3 0 3-.2 3-.4 3 .2 3 .2 3 0 3 .3 3 .2 3-.1 3-.2 3-.3 3 .1 3-.2 3-.2 3-.1 3-.2 3-.1 3 .2 3 .3 3 .4 3 .1 3-.2 3-.2 3-.1 3 .2 3-.2 3-.4 3 0 3 .4 3 .4 3 .3 3 0 3 .1 3 0 3-.3 3-.1 3 .2 3 0 3-.2 3 .1 3 .3 3-.4 3-.7 3-.1 3 0 3-.2 3-.1 3 .2 3 .5 3 .7 3 .3 3-.2 3-.5 3 0 3 .2 3-.1 3-.3 3 .2 3 .2 3 .4 3 .1 3-.1 3 0 3 .3 3 .1 3-.4 3-.6 3-.3 .8 .1" fill="none" stroke="#73BF69" stroke-width="1.8" stroke-linejoin="round" stroke-linecap="round"/>
<circle cx="755.7" cy="1160.7" r="1.8" fill="#4a2d7a"/>
<circle cx="778.4" cy="1160.7" r="1.8" fill="#6d4aa3"/>
<circle cx="801.1" cy="1160.7" r="1.8" fill="#4a2d7a"/>
<circle cx="823.8" cy="1160.7" r="1.8" fill="#6d4aa3"/>
<circle cx="846.5" cy="1160.7" r="1.8" fill="#4a2d7a"/>
<circle cx="869.2" cy="1160.7" r="1.8" fill="#6d4aa3"/>
<circle cx="891.9" cy="1160.7" r="1.8" fill="#4a2d7a"/>
<circle cx="914.6" cy="1160.7" r="1.8" fill="#6d4aa3"/>
<circle cx="937.3" cy="1160.7" r="1.8" fill="#4a2d7a"/>
<circle cx="960.0" cy="1160.7" r="1.8" fill="#6d4aa3"/>
<circle cx="982.7" cy="1160.7" r="1.8" fill="#4a2d7a"/>
<circle cx="1005.4" cy="1160.7" r="1.8" fill="#6d4aa3"/>
<circle cx="1028.1" cy="1160.7" r="1.8" fill="#4a2d7a"/>
<circle cx="1050.8" cy="1160.7" r="1.8" fill="#6d4aa3"/>
<circle cx="1073.5" cy="1160.7" r="1.8" fill="#4a2d7a"/>
<circle cx="1096.2" cy="1160.7" r="1.8" fill="#6d4aa3"/>
<circle cx="1118.9" cy="1160.7" r="1.8" fill="#4a2d7a"/>
<circle cx="1141.6" cy="1160.7" r="1.8" fill="#6d4aa3"/>
<circle cx="1164.3" cy="1160.7" r="1.8" fill="#4a2d7a"/>
<circle cx="1187.0" cy="1160.7" r="1.8" fill="#6d4aa3"/>
<circle cx="1209.7" cy="1160.7" r="1.8" fill="#4a2d7a"/>
<circle cx="1232.4" cy="1160.7" r="1.8" fill="#6d4aa3"/>
<text x="738.4" y="1147.1" text-anchor="end" letter-spacing="0.15" fill="#c7c7d6" stroke="#c7c7d6" stroke-width="0.4">500.0 p/s</text>
<text x="738.4" y="1164.6" text-anchor="end" letter-spacing="0.15" fill="#c7c7d6" stroke="#c7c7d6" stroke-width="0.4">0.0 p/s</text>
<text x="738.4" y="1182.0" text-anchor="end" letter-spacing="0.15" fill="#c7c7d6" stroke="#c7c7d6" stroke-width="0.4">-500.0 p/s</text>
<text x="738.4" y="1199.5" text-anchor="end" letter-spacing="0.15" fill="#c7c7d6" stroke="#c7c7d6" stroke-width="0.4">-1.0 kp/s</text>
<text x="738.4" y="1216.9" text-anchor="end" letter-spacing="0.15" fill="#c7c7d6" stroke="#c7c7d6" stroke-width="0.4">-1.5 kp/s</text>
<text x="738.4" y="1234.4" text-anchor="end" letter-spacing="0.15" fill="#c7c7d6" stroke="#c7c7d6" stroke-width="0.4">-2.0 kp/s</text>
<text x="738.4" y="1251.8" text-anchor="end" letter-spacing="0.15" fill="#c7c7d6" stroke="#c7c7d6" stroke-width="0.4">-2.5 kp/s</text>
<text x="738.4" y="1269.3" text-anchor="end" letter-spacing="0.15" fill="#c7c7d6" stroke="#c7c7d6" stroke-width="0.4">-3.0 kp/s</text>
<text x="787.3" y="1283.6" text-anchor="middle" letter-spacing="0.10" fill="#c7c7d6" stroke="#c7c7d6" stroke-width="0.4">11:00</text>
<text x="872.6" y="1283.6" text-anchor="middle" letter-spacing="0.10" fill="#c7c7d6" stroke="#c7c7d6" stroke-width="0.4">12:00</text>
<text x="957.9" y="1283.6" text-anchor="middle" letter-spacing="0.10" fill="#c7c7d6" stroke="#c7c7d6" stroke-width="0.4">13:00</text>
<text x="1043.2" y="1283.6" text-anchor="middle" letter-spacing="0.10" fill="#c7c7d6" stroke="#c7c7d6" stroke-width="0.4">14:00</text>
<text x="1128.5" y="1283.6" text-anchor="middle" letter-spacing="0.10" fill="#c7c7d6" stroke="#c7c7d6" stroke-width="0.4">15:00</text>
<text x="1213.8" y="1283.6" text-anchor="middle" letter-spacing="0.10" fill="#c7c7d6" stroke="#c7c7d6" stroke-width="0.4">16:00</text>
<text transform="translate(661.5 1204.0) rotate(-90)" text-anchor="middle" letter-spacing="0.3" fill="#c7c7d6" stroke="#c7c7d6" stroke-width="0.3">out(-) | in(+)</text>
<clipPath id="lb"><rect x="644" y="1290" width="626" height="77"/></clipPath><g clip-path="url(#lb)">
<rect x="655.5" y="1301.3" width="14" height="4" rx="2" fill="#73BF69"/>
<text x="676.0" y="1307.2" letter-spacing="0.21" stroke="#ccccdc" stroke-width="0.35">r-3: broadcast in</text>
<rect x="775.8" y="1301.3" width="14" height="4" rx="2" fill="#F2CC0C"/>
<text x="796.3" y="1307.2" letter-spacing="0.25" stroke="#ccccdc" stroke-width="0.35">r-4: broadcast in</text>
<rect x="896.8" y="1301.3" width="14" height="4" rx="2" fill="#8AB8FF"/>
<text x="917.3" y="1307.2" letter-spacing="0.23" stroke="#ccccdc" stroke-width="0.35">fw-1-sec.bn: broadcast in</text>
<rect x="1066.5" y="1301.3" width="14" height="4" rx="2" fill="#FF780A"/>
<text x="1087.0" y="1307.2" letter-spacing="0.25" stroke="#ccccdc" stroke-width="0.35">fw-1-pri.bn: broadcast in</text>
<rect x="655.5" y="1323.4" width="14" height="4" rx="2" fill="#F2495C"/>
<text x="676.0" y="1329.3" letter-spacing="0.08" stroke="#ccccdc" stroke-width="0.35">r-1: broadcast in</text>
<rect x="773.5" y="1323.4" width="14" height="4" rx="2" fill="#5794F2"/>
<text x="794.0" y="1329.3" letter-spacing="0.10" stroke="#ccccdc" stroke-width="0.35">box-1: broadcast in</text>
<rect x="907.5" y="1323.4" width="14" height="4" rx="2" fill="#B877D9"/>
<text x="928.0" y="1329.3" letter-spacing="0.19" stroke="#ccccdc" stroke-width="0.35">a-2: broadcast in</text>
<rect x="1030.2" y="1323.4" width="14" height="4" rx="2" fill="#705DA0"/>
<text x="1050.7" y="1329.3" letter-spacing="0.05" stroke="#ccccdc" stroke-width="0.35">a-1: broadcast in</text>
<rect x="655.5" y="1345.5" width="14" height="4" rx="2" fill="#37872D"/>
<text x="676.0" y="1351.4" letter-spacing="0.19" stroke="#ccccdc" stroke-width="0.35">a-3: broadcast in</text>
<rect x="778.2" y="1345.5" width="14" height="4" rx="2" fill="#FADE2A"/>
<text x="798.7" y="1351.4" letter-spacing="0.19" stroke="#ccccdc" stroke-width="0.35">r-2: broadcast in</text>
<rect x="898.5" y="1345.5" width="14" height="4" rx="2" fill="#447EBC"/>
<text x="919.0" y="1351.4" letter-spacing="0.12" stroke="#ccccdc" stroke-width="0.35">gw-1: broadcast in</text>
<rect x="1029.2" y="1345.5" width="14" height="4" rx="2" fill="#C15C17"/>
<text x="1049.7" y="1351.4" letter-spacing="0.28" stroke="#ccccdc" stroke-width="0.35">a-56-r2: broadcast in</text>
<rect x="655.5" y="1367.6" width="14" height="4" rx="2" fill="#890F02"/>
<text x="676.0" y="1373.5" letter-spacing="0.26" stroke="#ccccdc" stroke-width="0.35">a-56-r2-3: broadcast in</text>
<rect x="816.2" y="1367.6" width="14" height="4" rx="2" fill="#0A437C"/>
<text x="836.7" y="1373.5" letter-spacing="0.04" stroke="#ccccdc" stroke-width="0.35">a-56-r1: broadcast in</text>
<rect x="961.2" y="1367.6" width="14" height="4" rx="2" fill="#6D1F62"/>
<text x="981.7" y="1373.5" letter-spacing="0.38" stroke="#ccccdc" stroke-width="0.35">c9500-1: broadcast in</text>
<rect x="1116.2" y="1367.6" width="14" height="4" rx="2" fill="#584477"/>
<text x="1136.7" y="1373.5" letter-spacing="-0.09" stroke="#ccccdc" stroke-width="0.35">a-b1-1: broadcast in</text>
</g></svg>
<div class="a" style="left:1280.0px;top:1098.0px;width:628.0px;height:277.5px;background:#181b1f;border:1px solid #292b32;border-radius:3px"></div>
<span class="t" style="top:1104.3px;font-size:14px;left:1288.3px;letter-spacing:0.47px;-webkit-text-stroke:0.55px #ccccdc;">Multicast</span>
<svg class="a" style="left:1361.7px;top:1106.0px" width="16" height="16" viewBox="0 0 16 16"><circle cx="8" cy="8" r="6.2" fill="none" stroke="#9a9aa8" stroke-width="1.2"/><rect x="7.4" y="7.2" width="1.3" height="3.6" fill="#9a9aa8"/><rect x="7.4" y="5" width="1.3" height="1.3" fill="#9a9aa8"/></svg>
<svg class="a" style="left:1281px;top:1130px" width="626" height="244.5" viewBox="1281 1130 626 244.5">
<path d="M1422.7 1142.7V1264.0M1508.4 1142.7V1264.0M1594.1 1142.7V1264.0M1679.8 1142.7V1264.0M1765.5 1142.7V1264.0M1851.2 1142.7V1264.0M1377.0 1142.6H1891.7M1377.0 1161.0H1891.7M1377.0 1179.4H1891.7M1377.0 1197.8H1891.7M1377.0 1216.2H1891.7M1377.0 1234.6H1891.7M1377.0 1253.0H1891.7" stroke="#272a30" stroke-width="1" fill="none"/>
<defs><linearGradient id="m1" gradientUnits="userSpaceOnUse" x1="0" y1="1161.0" x2="0" y2="1242.0"><stop offset="0" stop-color="#AEA2E0" stop-opacity="0.27"/><stop offset="1" stop-color="#AEA2E0" stop-opacity="0.06"/></linearGradient><linearGradient id="m2" gradientUnits="userSpaceOnUse" x1="0" y1="1161.0" x2="0" y2="1242.0"><stop offset="0" stop-color="#73BF69" stop-opacity="0.2"/><stop offset="1" stop-color="#73BF69" stop-opacity="0.07"/></linearGradient><linearGradient id="m3" gradientUnits="userSpaceOnUse" x1="0" y1="1161.0" x2="0" y2="1242.0"><stop offset="0" stop-color="#F2CC0C" stop-opacity="0.25"/><stop offset="1" stop-color="#F2CC0C" stop-opacity="0.08"/></linearGradient><linearGradient id="m4" gradientUnits="userSpaceOnUse" x1="0" y1="1161.0" x2="0" y2="1242.0"><stop offset="0" stop-color="#5BC8DC" stop-opacity="0.17"/><stop offset="1" stop-color="#5BC8DC" stop-opacity="0.07"/></linearGradient></defs>
<path d="M1377.5 1247.3l2-.4 2 .3 2 .9 2-.8 2-3.5 2-7.7 2-.9 2-.5 2-.3 2-.6 2-1.2 2-2.1 2 .7 2 2.2 2 5.3 2 5.5 2 3.3 2 1.2 2-.4 2-.1 2 1.2 2-.7 2-3.3 2-9.7 2-.5 2 .1 2-1.7 2-.9 2 .1 2 9 2 4.2 2 2 2 1 2-.3 2-1.9 2-8 2-3.1 2-1.4 2-2.2 2 .5 2 3.5 2 6.5 2 4.4 2 2 2-1.2 2-.4 2-.2 2-.8 2-.5 2-.3 2-2.8 2-4.3 2-3.9 2-.1 2-.4 2-1.3 2-1 2-.1 2 .5 2 .1 2 .4 2 2.4 2 1.3 2 2.5 2 6.7 2 2.4 2 .3 2-2.2 2-1.1 2-2.2 2-7.4 2-1.9 2-.4 2 1.4 2 5.9 2 6.4 2 1.9 2-.1 2-.6 2-.5 2 0 2 .1 2-.1 2-.5 2-1.7 2-5.9 2-3.9 2-1.8 2-.6 2 .8 2 1.7 2-1.1 2 .3 2 2.4 2 5.1 2 1.3 2 0 2-4.3 2-3.6 2-1.6 2 .3 2 .5 2 .4 2-2.1 2-.8 2 .6 2 .7 2 .9 2 1.1 2 5.6 2 4.3 2 1.3 2 2 2 .7 2-1.1 2-5.6 2-7.1 2-4.7 2-.8 2-.1 2 .5 2 5 2 7.6 2 4.3 2 1.9 2 .5 2-2.6 2-6.5 2-6 2-1.1 2-1.3 2-.7 2 .9 2-.1 2-.5 2 2.1 2-.6 2-1.8 2 .7 2-.2 2-.8 2 .4 2 .9 2 1.9 2 2.6 2 4.6 2 5.1 2-.5 2-1.2 2-2.9 2-7.1 2-2.1 2 .5 2 .2 2 1.4 2 7 2 6.3 2 1.3 2-2.7 2-.5 2-2.3 2-9.5 2-.2 2-.1 2-.9 2-.1 2-.1 2-1.2 2 1.4 2 2.8 2 2.2 2 3.9 2 2.2 2-.6 2-1.4 2-1.8 2-1.1 2 0 2 .2 2-.8 2 1.6 2 2.5 2 .2 2-.7 2-1.7 2-.7 2-.9 2-1.2 2-1.1 2-1.5 2-1.4 2-.4 2 0 2 .7 2 3.5 2 4.6 2 3.6 2 .5 2 .4 2 .6 2 1 2 .1 2-1.5 2-1.9 2-2.7 2-2.7 2 .4 2 .2 2 0 2-.9 2-2.3 2-3.7 2-2.3 2-.6 2 .7 2 .8 2 .4 2 0 2 4.3 2 7.1 2 4.5 2-.8 2-1.6 2-.4 2-5.3 2-6 2-.6 2-.1 2 0 2 1.1 2 3 2 4.9 2 4.3 2 1.5 2 .6 2 .8 2 .1 2 0 2-2.4 2-3.9 2-4.8 2-3.9 2-1.7 2-.6 2 3.9 2 5.8 2 4.8 2-.8 2 0 2 1.1 2-.8 2-2.7 2-6.2 2-4 2-.9 2 1.2 .2 .3V1161H1377.5Z" fill="url(#m1)"/>
<path d="M1377.5 1237.2l2-.5 2 0 2 .3 2-.6 2-2.1 2-4.2 2-2.3 2-.5 2 0 2-.4 2-1.2 2-1.7 2 .8 2 1.6 2 2.2 2 4.4 2 3.8 2 2.1 2-.8 2-1.1 2-.5 2 1.4 2 .4 2-8.5 2-5 2-1.5 2 2.3 2 1.2 2 1.5 2 6 2 3.1 2 1.1 2-.7 2-.5 2-.7 2-7.4 2-3.2 2-1.1 2-.6 2 .2 2 1.4 2 5.7 2 4.5 2 2.4 2 .6 2-.4 2-1.2 2 .3 2 0 2-.8 2-2.7 2-3.4 2-2.6 2-.6 2 .1 2 .4 2-1.7 2-.7 2 1.1 2 1.3 2 .2 2-1.4 2 1.1 2 2.3 2 3.1 2 1 2 .6 2 .4 2-.6 2-2 2-3.3 2-1.7 2-.5 2 .8 2 4.1 2 4.9 2 1.6 2-.9 2-1.3 2 .9 2 .9 2 .4 2-1 2-3.1 2-4.2 2-2.1 2-.1 2 .1 2-.6 2-1 2-.8 2 .9 2 1.7 2 2.3 2 3.2 2 1 2 .2 2-3.8 2-3.7 2-2.1 2 .8 2 .9 2 .8 2 1.8 2 0 2-3 2-.9 2 .4 2 3.4 2 3.7 2 3 2 1.8 2-.7 2-.4 2 .1 2-1.5 2-3.6 2-5.6 2-1.2 2-.1 2 1.7 2 5.4 2 4.6 2 .6 2-.1 2-.7 2-3.2 2-3.7 2-2.4 2-.3 2-.8 2-.7 2 .2 2 .4 2 .8 2 .9 2 .3 2 .2 2-.1 2 0 2 0 2-.6 2-.9 2-.7 2 3.3 2 4.5 2 3.9 2 1.3 2-.7 2-4.5 2-5.2 2-2.1 2-.5 2 .1 2 1.4 2 5.8 2 2.7 2 1.9 2 1.2 2-.7 2-3.1 2-8.8 2 .5 2 .3 2-.7 2 .2 2 .3 2 .4 2-.7 2-.2 2 4 2 2 2 .5 2-.8 2 .5 2 .5 2-2.5 2-1.7 2-.6 2 1.4 2 .6 2 .4 2 1.1 2 1 2 .5 2-.3 2-.5 2-.7 2-1.2 2-.7 2-.5 2-1.7 2-.3 2 .4 2 2.4 2 4 2 4.3 2 1.4 2 .2 2-.5 2-2.9 2-1.6 2-.4 2-1.1 2-.3 2 .1 2-1.3 2-.3 2 2.2 2-1 2-2.2 2-2.7 2-1.7 2-.2 2 1.7 2 0 2-.3 2-.3 2 3.5 2 4.5 2 1.4 2-.3 2-.8 2-.9 2-3.4 2-3.4 2-.7 2-.4 2-.3 2 0 2 .7 2 2.2 2 4 2 1.9 2 .7 2 0 2 .5 2 .8 2-.8 2-2.2 2-3.2 2-.9 2-.9 2-.8 2 1 2 3.1 2 4.9 2 .6 2-.3 2-1.7 2-1.9 2-3.4 2-4.5 2 0 2 .2 2 1.7 .2 .2V1161H1377.5Z" fill="url(#m2)"/>
<path d="M1377.5 1223.3l2 .4 2-.7 2-2.2 2 .9 2 3.6 2 8 2 2.7 2 .3 2-1.2 2 0 2-.1 2-.8 2-.2 2-.8 2-4.1 2-7 2-2.7 2 3 2-.1 2-.1 2 .2 2-.2 2 .7 2 8.6 2 .3 2-.4 2 .9 2 0 2-.5 2-8.7 2-2 2-.2 2 .8 2 0 2 .1 2 9.3 2 3.4 2 .8 2-2.5 2-.7 2-.3 2-5.2 2-3.9 2-1.7 2 1.9 2 .4 2-.5 2-.7 2 .2 2 1.4 2 2.1 2 3.4 2 3.8 2-1.9 2-.7 2 .9 2 .5 2 1.1 2 1.8 2-.3 2-.6 2-.7 2-2.4 2-5 2-8.3 2 0 2 1.6 2 5.1 2-.5 2 .5 2 9.1 2 .4 2-.1 2 .3 2-3.1 2-4.9 2-1.9 2-2.3 2-1.2 2 .6 2 .6 2 .4 2-.4 2 .9 2 3 2 4.4 2 2 2 .6 2-.5 2 1.1 2 2.4 2-1.7 2-1.7 2-1.5 2-3.2 2-1.2 2-.3 2 3.7 2 1.8 2 .4 2 1.1 2 .5 2 0 2 .3 2 .1 2-.7 2-2.4 2-1.9 2-1 2-5.6 2-2.5 2 1.1 2-.2 2-.1 2 .1 2 2.7 2 4.4 2 3.3 2-.6 2-.4 2 1.7 2-3.9 2-4.3 2-.3 2-.6 2-.4 2 1.1 2 5 2 4.6 2-.3 2-.9 2-.8 2-.1 2 1.3 2 2.1 2 .1 2 .2 2 .5 2-1.4 2-.6 2-.2 2 .2 2 .8 2 1.3 2-3 2-4.1 2-3.8 2-2.6 2 .1 2 3 2 7.2 2 1.9 2-1.3 2-.3 2-1.2 2-4.5 2-3.9 2-1.5 2-.2 2 .6 2 3.1 2 9.8 2 .2 2-.7 2-1.8 2 .3 2 .9 2 1.7 2-.4 2-1.8 2-5.3 2-3 2-1 2 1.4 2 2.6 2 1.9 2 .5 2-.8 2-1.1 2 1 2 0 2-.6 2-1.5 2-1.9 2-1.1 2 3.2 2 2.4 2 1.7 2 2 2 .3 2 0 2-2.8 2-.2 2 1.4 2-4.3 2-4.8 2-3 2 1.2 2 1.8 2 1.5 2-1.5 2-.4 2 1.2 2 1.4 2 .4 2-.5 2 1.6 2 .8 2-.7 2 .8 2 1.9 2 2.1 2-.8 2-.1 2 3.2 2-.1 2-.6 2-1.2 2-4.9 2-3.8 2-.2 2-.4 2-.6 2-.6 2 5.6 2 6.3 2-2.6 2-1 2-.1 2 2.1 2 0 2-1.8 2-6.6 2-1.4 2-.1 2 .1 2 1.2 2 2.6 2 .3 2 2.3 2 4.5 2 1.5 2-.2 2-1.6 2-2 2-4.5 2-5.7 2 .6 2 .4 2 0 2 .8 2 3.5 2 8.5 2 1 2 .2 2-.1 .2 0V1161H1377.5Z" fill="url(#m3)"/>
<path d="M1377.5 1216.8l2 .8 2 .3 2 .1 2 .2 2 2.1 2 7 2 1.1 2 1.1 2 1.1 2-.4 2-.3 2 0 2-.4 2-1.1 2-3.5 2-4.8 2-2 2 .5 2-.1 2 0 2 .1 2 0 2 .8 2 9.2 2 1.6 2 .3 2 0 2-.3 2-1.4 2-7.2 2-1.5 2-.3 2-.1 2-.3 2-.1 2 9 2 1.5 2-.7 2-1.1 2-.9 2-.9 2-3.5 2-3.3 2-1.9 2 1.4 2 .4 2-.1 2-.6 2-.1 2 .8 2 4.3 2 3.2 2 1.3 2 .2 2 .2 2 .2 2 .2 2 .2 2 .2 2-.4 2-.2 2 .3 2-.4 2-2.2 2-7 2-.3 2 0 2 0 2 0 2 1.1 2 7.4 2 1.6 2 .3 2-.1 2-3.6 2-4.8 2-1.2 2-1 2-.5 2 .1 2 .2 2 .2 2-.5 2 .4 2 1.7 2 5.3 2 2.3 2 .9 2 .7 2 0 2-.5 2-.7 2-1 2-1.8 2-3.9 2-1.3 2-.2 2 5.4 2 3.4 2 1.1 2 .5 2-.1 2-.8 2-.5 2-.1 2 .3 2 0 2-.2 2-1.6 2-5.3 2-3.2 2-.6 2-.5 2-.2 2 0 2 3.3 2 4.9 2 2.7 2 .2 2 .1 2 .5 2-3.9 2-6 2-2.6 2-.9 2 0 2 3.5 2 5.8 2 3.9 2 .2 2 .2 2 .2 2-1 2-.9 2-.5 2 .4 2 .5 2 .7 2 1.3 2 .1 2-.3 2-.3 2-.6 2-1.3 2-2.3 2-3.6 2-3.8 2-.8 2 .2 2 1.6 2 6.5 2 3 2 .5 2-.2 2-1.6 2-5.6 2-3.2 2-.9 2-.1 2 .3 2 2.1 2 7.7 2 .1 2-.1 2 .6 2 .7 2 .2 2-.6 2-.7 2-1.1 2-3.1 2-2.5 2-1 2-.1 2 .8 2 1.5 2 .9 2 1.2 2 .7 2-.4 2-1.3 2-1.8 2-.7 2-.6 2-.5 2-.3 2 .9 2 3.3 2 3.2 2 1.9 2 1.2 2 1.1 2-.1 2-1.5 2-4.9 2-4.8 2-3 2 0 2 .4 2 1.5 2 .5 2 .2 2 0 2 .6 2 .9 2 .9 2 1.3 2 .9 2 .3 2 .6 2 1.3 2 2.7 2-.1 2-.3 2-.6 2 .3 2 .3 2-.2 2-4.3 2-5.2 2-1.5 2-.2 2 0 2 1.3 2 6 2 5.5 2 .3 2-.2 2-.2 2 .6 2-.3 2-1.8 2-6.5 2-2.3 2-.9 2-1 2-.1 2 .4 2 1.4 2 3.1 2 4.2 2 2.3 2 .3 2-.5 2-2.4 2-4.3 2-4.4 2 .4 2 .4 2 .2 2 .4 2 2.4 2 6.1 2 .4 2 .2 2 .2 .2 0V1161H1377.5Z" fill="url(#m4)"/>
<path d="M1377.5 1247.3l2-.4 2 .3 2 .9 2-.8 2-3.5 2-7.7 2-.9 2-.5 2-.3 2-.6 2-1.2 2-2.1 2 .7 2 2.2 2 5.3 2 5.5 2 3.3 2 1.2 2-.4 2-.1 2 1.2 2-.7 2-3.3 2-9.7 2-.5 2 .1 2-1.7 2-.9 2 .1 2 9 2 4.2 2 2 2 1 2-.3 2-1.9 2-8 2-3.1 2-1.4 2-2.2 2 .5 2 3.5 2 6.5 2 4.4 2 2 2-1.2 2-.4 2-.2 2-.8 2-.5 2-.3 2-2.8 2-4.3 2-3.9 2-.1 2-.4 2-1.3 2-1 2-.1 2 .5 2 .1 2 .4 2 2.4 2 1.3 2 2.5 2 6.7 2 2.4 2 .3 2-2.2 2-1.1 2-2.2 2-7.4 2-1.9 2-.4 2 1.4 2 5.9 2 6.4 2 1.9 2-.1 2-.6 2-.5 2 0 2 .1 2-.1 2-.5 2-1.7 2-5.9 2-3.9 2-1.8 2-.6 2 .8 2 1.7 2-1.1 2 .3 2 2.4 2 5.1 2 1.3 2 0 2-4.3 2-3.6 2-1.6 2 .3 2 .5 2 .4 2-2.1 2-.8 2 .6 2 .7 2 .9 2 1.1 2 5.6 2 4.3 2 1.3 2 2 2 .7 2-1.1 2-5.6 2-7.1 2-4.7 2-.8 2-.1 2 .5 2 5 2 7.6 2 4.3 2 1.9 2 .5 2-2.6 2-6.5 2-6 2-1.1 2-1.3 2-.7 2 .9 2-.1 2-.5 2 2.1 2-.6 2-1.8 2 .7 2-.2 2-.8 2 .4 2 .9 2 1.9 2 2.6 2 4.6 2 5.1 2-.5 2-1.2 2-2.9 2-7.1 2-2.1 2 .5 2 .2 2 1.4 2 7 2 6.3 2 1.3 2-2.7 2-.5 2-2.3 2-9.5 2-.2 2-.1 2-.9 2-.1 2-.1 2-1.2 2 1.4 2 2.8 2 2.2 2 3.9 2 2.2 2-.6 2-1.4 2-1.8 2-1.1 2 0 2 .2 2-.8 2 1.6 2 2.5 2 .2 2-.7 2-1.7 2-.7 2-.9 2-1.2 2-1.1 2-1.5 2-1.4 2-.4 2 0 2 .7 2 3.5 2 4.6 2 3.6 2 .5 2 .4 2 .6 2 1 2 .1 2-1.5 2-1.9 2-2.7 2-2.7 2 .4 2 .2 2 0 2-.9 2-2.3 2-3.7 2-2.3 2-.6 2 .7 2 .8 2 .4 2 0 2 4.3 2 7.1 2 4.5 2-.8 2-1.6 2-.4 2-5.3 2-6 2-.6 2-.1 2 0 2 1.1 2 3 2 4.9 2 4.3 2 1.5 2 .6 2 .8 2 .1 2 0 2-2.4 2-3.9 2-4.8 2-3.9 2-1.7 2-.6 2 3.9 2 5.8 2 4.8 2-.8 2 0 2 1.1 2-.8 2-2.7 2-6.2 2-4 2-.9 2 1.2 .2 .3" fill="none" stroke="#B8A5EB" stroke-width="2.5" stroke-linejoin="round" stroke-linecap="round"/>
<path d="M1377.5 1237.2l2-.5 2 0 2 .3 2-.6 2-2.1 2-4.2 2-2.3 2-.5 2 0 2-.4 2-1.2 2-1.7 2 .8 2 1.6 2 2.2 2 4.4 2 3.8 2 2.1 2-.8 2-1.1 2-.5 2 1.4 2 .4 2-8.5 2-5 2-1.5 2 2.3 2 1.2 2 1.5 2 6 2 3.1 2 1.1 2-.7 2-.5 2-.7 2-7.4 2-3.2 2-1.1 2-.6 2 .2 2 1.4 2 5.7 2 4.5 2 2.4 2 .6 2-.4 2-1.2 2 .3 2 0 2-.8 2-2.7 2-3.4 2-2.6 2-.6 2 .1 2 .4 2-1.7 2-.7 2 1.1 2 1.3 2 .2 2-1.4 2 1.1 2 2.3 2 3.1 2 1 2 .6 2 .4 2-.6 2-2 2-3.3 2-1.7 2-.5 2 .8 2 4.1 2 4.9 2 1.6 2-.9 2-1.3 2 .9 2 .9 2 .4 2-1 2-3.1 2-4.2 2-2.1 2-.1 2 .1 2-.6 2-1 2-.8 2 .9 2 1.7 2 2.3 2 3.2 2 1 2 .2 2-3.8 2-3.7 2-2.1 2 .8 2 .9 2 .8 2 1.8 2 0 2-3 2-.9 2 .4 2 3.4 2 3.7 2 3 2 1.8 2-.7 2-.4 2 .1 2-1.5 2-3.6 2-5.6 2-1.2 2-.1 2 1.7 2 5.4 2 4.6 2 .6 2-.1 2-.7 2-3.2 2-3.7 2-2.4 2-.3 2-.8 2-.7 2 .2 2 .4 2 .8 2 .9 2 .3 2 .2 2-.1 2 0 2 0 2-.6 2-.9 2-.7 2 3.3 2 4.5 2 3.9 2 1.3 2-.7 2-4.5 2-5.2 2-2.1 2-.5 2 .1 2 1.4 2 5.8 2 2.7 2 1.9 2 1.2 2-.7 2-3.1 2-8.8 2 .5 2 .3 2-.7 2 .2 2 .3 2 .4 2-.7 2-.2 2 4 2 2 2 .5 2-.8 2 .5 2 .5 2-2.5 2-1.7 2-.6 2 1.4 2 .6 2 .4 2 1.1 2 1 2 .5 2-.3 2-.5 2-.7 2-1.2 2-.7 2-.5 2-1.7 2-.3 2 .4 2 2.4 2 4 2 4.3 2 1.4 2 .2 2-.5 2-2.9 2-1.6 2-.4 2-1.1 2-.3 2 .1 2-1.3 2-.3 2 2.2 2-1 2-2.2 2-2.7 2-1.7 2-.2 2 1.7 2 0 2-.3 2-.3 2 3.5 2 4.5 2 1.4 2-.3 2-.8 2-.9 2-3.4 2-3.4 2-.7 2-.4 2-.3 2 0 2 .7 2 2.2 2 4 2 1.9 2 .7 2 0 2 .5 2 .8 2-.8 2-2.2 2-3.2 2-.9 2-.9 2-.8 2 1 2 3.1 2 4.9 2 .6 2-.3 2-1.7 2-1.9 2-3.4 2-4.5 2 0 2 .2 2 1.7 .2 .2" fill="none" stroke="#73BF69" stroke-width="2.5" stroke-linejoin="round" stroke-linecap="round"/>
<path d="M1377.5 1223.3l2 .4 2-.7 2-2.2 2 .9 2 3.6 2 8 2 2.7 2 .3 2-1.2 2 0 2-.1 2-.8 2-.2 2-.8 2-4.1 2-7 2-2.7 2 3 2-.1 2-.1 2 .2 2-.2 2 .7 2 8.6 2 .3 2-.4 2 .9 2 0 2-.5 2-8.7 2-2 2-.2 2 .8 2 0 2 .1 2 9.3 2 3.4 2 .8 2-2.5 2-.7 2-.3 2-5.2 2-3.9 2-1.7 2 1.9 2 .4 2-.5 2-.7 2 .2 2 1.4 2 2.1 2 3.4 2 3.8 2-1.9 2-.7 2 .9 2 .5 2 1.1 2 1.8 2-.3 2-.6 2-.7 2-2.4 2-5 2-8.3 2 0 2 1.6 2 5.1 2-.5 2 .5 2 9.1 2 .4 2-.1 2 .3 2-3.1 2-4.9 2-1.9 2-2.3 2-1.2 2 .6 2 .6 2 .4 2-.4 2 .9 2 3 2 4.4 2 2 2 .6 2-.5 2 1.1 2 2.4 2-1.7 2-1.7 2-1.5 2-3.2 2-1.2 2-.3 2 3.7 2 1.8 2 .4 2 1.1 2 .5 2 0 2 .3 2 .1 2-.7 2-2.4 2-1.9 2-1 2-5.6 2-2.5 2 1.1 2-.2 2-.1 2 .1 2 2.7 2 4.4 2 3.3 2-.6 2-.4 2 1.7 2-3.9 2-4.3 2-.3 2-.6 2-.4 2 1.1 2 5 2 4.6 2-.3 2-.9 2-.8 2-.1 2 1.3 2 2.1 2 .1 2 .2 2 .5 2-1.4 2-.6 2-.2 2 .2 2 .8 2 1.3 2-3 2-4.1 2-3.8 2-2.6 2 .1 2 3 2 7.2 2 1.9 2-1.3 2-.3 2-1.2 2-4.5 2-3.9 2-1.5 2-.2 2 .6 2 3.1 2 9.8 2 .2 2-.7 2-1.8 2 .3 2 .9 2 1.7 2-.4 2-1.8 2-5.3 2-3 2-1 2 1.4 2 2.6 2 1.9 2 .5 2-.8 2-1.1 2 1 2 0 2-.6 2-1.5 2-1.9 2-1.1 2 3.2 2 2.4 2 1.7 2 2 2 .3 2 0 2-2.8 2-.2 2 1.4 2-4.3 2-4.8 2-3 2 1.2 2 1.8 2 1.5 2-1.5 2-.4 2 1.2 2 1.4 2 .4 2-.5 2 1.6 2 .8 2-.7 2 .8 2 1.9 2 2.1 2-.8 2-.1 2 3.2 2-.1 2-.6 2-1.2 2-4.9 2-3.8 2-.2 2-.4 2-.6 2-.6 2 5.6 2 6.3 2-2.6 2-1 2-.1 2 2.1 2 0 2-1.8 2-6.6 2-1.4 2-.1 2 .1 2 1.2 2 2.6 2 .3 2 2.3 2 4.5 2 1.5 2-.2 2-1.6 2-2 2-4.5 2-5.7 2 .6 2 .4 2 0 2 .8 2 3.5 2 8.5 2 1 2 .2 2-.1 .2 0" fill="none" stroke="#F2B90C" stroke-width="2.5" stroke-linejoin="round" stroke-linecap="round"/>
<path d="M1377.5 1216.8l2 .8 2 .3 2 .1 2 .2 2 2.1 2 7 2 1.1 2 1.1 2 1.1 2-.4 2-.3 2 0 2-.4 2-1.1 2-3.5 2-4.8 2-2 2 .5 2-.1 2 0 2 .1 2 0 2 .8 2 9.2 2 1.6 2 .3 2 0 2-.3 2-1.4 2-7.2 2-1.5 2-.3 2-.1 2-.3 2-.1 2 9 2 1.5 2-.7 2-1.1 2-.9 2-.9 2-3.5 2-3.3 2-1.9 2 1.4 2 .4 2-.1 2-.6 2-.1 2 .8 2 4.3 2 3.2 2 1.3 2 .2 2 .2 2 .2 2 .2 2 .2 2 .2 2-.4 2-.2 2 .3 2-.4 2-2.2 2-7 2-.3 2 0 2 0 2 0 2 1.1 2 7.4 2 1.6 2 .3 2-.1 2-3.6 2-4.8 2-1.2 2-1 2-.5 2 .1 2 .2 2 .2 2-.5 2 .4 2 1.7 2 5.3 2 2.3 2 .9 2 .7 2 0 2-.5 2-.7 2-1 2-1.8 2-3.9 2-1.3 2-.2 2 5.4 2 3.4 2 1.1 2 .5 2-.1 2-.8 2-.5 2-.1 2 .3 2 0 2-.2 2-1.6 2-5.3 2-3.2 2-.6 2-.5 2-.2 2 0 2 3.3 2 4.9 2 2.7 2 .2 2 .1 2 .5 2-3.9 2-6 2-2.6 2-.9 2 0 2 3.5 2 5.8 2 3.9 2 .2 2 .2 2 .2 2-1 2-.9 2-.5 2 .4 2 .5 2 .7 2 1.3 2 .1 2-.3 2-.3 2-.6 2-1.3 2-2.3 2-3.6 2-3.8 2-.8 2 .2 2 1.6 2 6.5 2 3 2 .5 2-.2 2-1.6 2-5.6 2-3.2 2-.9 2-.1 2 .3 2 2.1 2 7.7 2 .1 2-.1 2 .6 2 .7 2 .2 2-.6 2-.7 2-1.1 2-3.1 2-2.5 2-1 2-.1 2 .8 2 1.5 2 .9 2 1.2 2 .7 2-.4 2-1.3 2-1.8 2-.7 2-.6 2-.5 2-.3 2 .9 2 3.3 2 3.2 2 1.9 2 1.2 2 1.1 2-.1 2-1.5 2-4.9 2-4.8 2-3 2 0 2 .4 2 1.5 2 .5 2 .2 2 0 2 .6 2 .9 2 .9 2 1.3 2 .9 2 .3 2 .6 2 1.3 2 2.7 2-.1 2-.3 2-.6 2 .3 2 .3 2-.2 2-4.3 2-5.2 2-1.5 2-.2 2 0 2 1.3 2 6 2 5.5 2 .3 2-.2 2-.2 2 .6 2-.3 2-1.8 2-6.5 2-2.3 2-.9 2-1 2-.1 2 .4 2 1.4 2 3.1 2 4.2 2 2.3 2 .3 2-.5 2-2.4 2-4.3 2-4.4 2 .4 2 .4 2 .2 2 .4 2 2.4 2 6.1 2 .4 2 .2 2 .2 .2 0" fill="none" stroke="#5BC8DC" stroke-width="2.5" stroke-linejoin="round" stroke-linecap="round"/>
<path d="M1377.5 1163.6l3-.1 3 .1 3-.1 3 .1 3 0 3-.1 3 .2 3 .2 3-.3 3-.1 3 0 3-.1 3 .1 3-.1 3 0 3 0 3 .2 3 .1 3 .1 3 .1 3 0 3 0 3 0 3-.1 3-.2 3 .2 3 .2 3 0 3-.1 3-.1 3 .1 3 0 3-.2 3 0 3 .1 3 .1 3 0 3 .1 3-.1 3-.2 3-.1 3 .1 3-.1 3-.1 3 .2 3 .1 3-.2 3 0 3-.1 3-.1 3 .1 3 .1 3 0 3-.1 3-.1 3 .3 3 .3 3 0 3-.1 3-.1 3-.1 3-.1 3-.1 3 0 3 .1 3-.1 3-.2 3 .1 3 .3 3 .2 3-.1 3-.1 3 0 3-.2 3-.1 3 .2 3 .1 3-.1 3 .1 3 .3 3 0 3-.1 3-.1 3 0 3-.1 3 0 3 0 3 0 3 .1 3-.1 3-.1 3-.2 3 0 3 .1 3 .1 3 0 3 0 3 .1 3 0 3 0 3 .1 3 .2 3 .2 3-.1 3-.3 3-.1 3 .1 3 .1 3-.2 3-.2 3-.2 3 0 3 .2 3 .1 3 0 3 .1 3 0 3 0 3 0 3 .1 3-.1 3-.2 3 .1 3 .1 3 0 3 .1 3 .1 3 0 3 0 3 0 3 .2 3-.3 3-.2 3-.1 3 0 3 .3 3 .2 3-.2 3-.2 3 0 3 .2 3 0 3-.2 3-.1 3 .1 3 0 3 .2 3 0 3-.1 3 0 3-.1 3 0 3-.2 3-.1 3 .1 3 .1 3-.1 3-.1 3 .1 3 0 3 .1 3 .3 3 0 3-.1 3-.1 3 .1 3 .2 3-.2 3 0 3 .1 2.2-.1" fill="none" stroke="#E0752D" stroke-width="1.7" stroke-linejoin="round" stroke-linecap="round"/>
<path d="M1377.5 1162.4l3 .1 3 0 3 0 3 .1 3-.1 3-.1 3 .1 3 0 3-.1 3 0 3 .1 3 .1 3 .1 3-.1 3-.1 3-.2 3-.2 3 .1 3 .3 3 .1 3 .1 3-.1 3-.1 3 0 3 .1 3 0 3-.1 3 0 3 .1 3-.1 3 0 3 .1 3 .1 3-.1 3 0 3 0 3 0 3 0 3 .1 3 0 3 .1 3 0 3-.1 3-.1 3-.1 3-.1 3 0 3 .1 3 .1 3 0 3 0 3 .1 3 0 3-.1 3-.1 3-.1 3-.1 3 .1 3 0 3 .1 3 .1 3-.1 3 0 3 .1 3 0 3 0 3 .1 3 0 3 0 3-.1 3 .1 3 .1 3 0 3-.1 3-.2 3-.1 3 .2 3 .2 3-.1 3-.2 3 0 3-.1 3 0 3 .1 3-.1 3 .1 3 .1 3 0 3 0 3 0 3-.1 3-.1 3 0 3 0 3 .1 3 .1 3 .1 3 0 3 0 3 0 3-.1 3-.1 3 .1 3 .1 3 0 3-.1 3 .1 3-.1 3-.1 3 0 3-.1 3 0 3 .1 3 0 3 0 3 .2 3-.1 3 0 3 0 3 0 3 .1 3-.1 3 0 3 .1 3-.1 3 0 3-.1 3 .2 3 .1 3-.1 3-.1 3 0 3 .1 3 0 3 0 3-.1 3 0 3-.1 3-.1 3 .1 3 .1 3 .1 3-.1 3 0 3 0 3 0 3 0 3 0 3-.1 3-.1 3 0 3 .2 3 0 3 0 3-.1 3 0 3 .1 3 0 3-.1 3 .1 3 .1 3 0 3-.1 3 0 3-.1 3 0 3 .1 3-.1 3 0 3 0 2.2-.1" fill="none" stroke="#B03060" stroke-width="1" stroke-linejoin="round" stroke-linecap="round"/>
<path d="M1377.5 1161.2l3 0 3 0 3 0 3-.1 3 .1 3 .1 3-.1 3 0 3 0 3-.1 3 0 3 .1 3 .1 3-.1 3-.1 3 0 3 .1 3 0 3 0 3 0 3 0 3 0 3 0 3 0 3 0 3 .1 3-.1 3 0 3 0 3 0 3 0 3 0 3 0 3-.1 3 0 3 .1 3 .1 3 0 3 0 3-.1 3-.1 3 .1 3-.1 3-.1 3 .1 3 .1 3 0 3 0 3-.1 3 .1 3 0 3 0 3-.1 3 .1 3 0 3 0 3 0 3 0 3 0 3 0 3 0 3 .1 3 0 3-.1 3-.1 3 0 3 0 3 .1 3 .1 3 0 3-.1 3 0 3 0 3 0 3 0 3 .1 3 0 3-.1 3-.1 3 0 3 .1 3 .1 3-.1 3-.1 3 0 3 .1 3 .1 3-.1 3-.1 3 0 3 0 3 0 3 0 3 0 3 0 3 0 3 0 3 0 3 0 3 0 3 .1 3 0 3 .1 3-.1 3 0 3-.1 3 0 3 0 3 0 3 0 3 0 3 .1 3 0 3 0 3 0 3 .1 3 0 3 0 3-.1 3 0 3 .1 3-.1 3 0 3 .1 3 0 3-.1 3 0 3 0 3-.1 3 0 3-.1 3 0 3 0 3 0 3 .2 3-.1 3-.1 3-.1 3 .2 3 .1 3 0 3 0 3 0 3-.1 3 0 3 0 3 0 3 0 3 .1 3 0 3 0 3-.1 3 0 3 0 3 .1 3 0 3 0 3 0 3 0 3 0 3 .1 3-.1 3 0 3-.1 3 0 3 0 3 0 3 .1 3 0 3 0 2.2-.1" fill="none" stroke="#1A3A9C" stroke-width="1.8" stroke-linejoin="round" stroke-linecap="round"/>
<path d="M1377.5 1159.2l3 .3 3 .1 3-.2 3 0 3 0 3-.1 3 0 3 0 3-.1 3 0 3 .1 3 .2 3-.1 3-.1 3 0 3 .1 3 0 3 .1 3-.1 3-.1 3 0 3 0 3-.1 3 .1 3 .1 3 0 3-.1 3-.1 3 .2 3 .1 3-.1 3 0 3 0 3 .1 3-.1 3-.1 3-.1 3 0 3 .2 3 0 3-.1 3 0 3 .1 3 .1 3 .1 3-.2 3-.1 3 .1 3 .1 3 0 3 0 3-.1 3 .1 3 0 3 0 3 0 3-.1 3 0 3 0 3 0 3-.1 3 0 3-.1 3 0 3 .1 3 .1 3 0 3-.1 3 0 3 .1 3-.1 3 0 3 .2 3 0 3-.2 3 0 3 .1 3-.1 3 0 3 0 3 .1 3 0 3-.1 3 0 3 .2 3 0 3-.2 3-.1 3 .1 3 0 3-.1 3 .1 3 .1 3 0 3-.2 3 .1 3 .1 3 0 3-.1 3 0 3-.1 3 0 3 .1 3 .2 3 .1 3-.1 3 0 3 .1 3 0 3-.1 3-.1 3-.1 3 0 3-.1 3 0 3 .1 3 0 3-.2 3 0 3 0 3-.1 3 .2 3 .1 3 .1 3 0 3 .1 3-.1 3-.2 3 0 3 .2 3 0 3-.1 3-.1 3 .1 3 0 3 0 3 0 3-.1 3 .1 3 .2 3-.1 3-.1 3-.2 3 .1 3 .2 3 0 3 0 3 0 3 0 3 .1 3-.1 3 0 3 0 3 0 3 0 3 0 3 .1 3 0 3-.1 3 0 3-.1 3-.1 3 .1 3 .2 3 .1 3-.2 3 0 3 .1 3 0 3-.1 2.2-.1" fill="none" stroke="#8A90BC" stroke-width="2.6" stroke-linejoin="round" stroke-linecap="round"/>
<path d="M1377.5 1158.1l3 .6 3-.1 3-.3 3 0 3 0 3-.1 3 0 3 .3 3-.4 3-.3 3 .1 3-.1 3-.3 3 .4 3 .5 3-.3 3 0 3-.2 3-.2 3 .2 3 .2 3-.2 3-.1 3 0 3 .2 3 .1 3-.1 3-.1 3-.1 3-.2 3 0 3 .4 3 .2 3-.3 3-.3 3 0 3 .2 3-.2 3-.1 3-.1 3 .3 3 .3 3-.3 3 0 3 .1 3-.2 3-.1 3-.1 3 .2 3 .3 3 .1 3-.2 3-.2 3 0 3 .3 3 .1 3 0 3 .2 3 0 3-.2 3-.2 3 .1 3 .1 3-.3 3-.2 3 .3 3 .1 3-.2 3-.1 3 .3 3 .1 3 0 3-.1 3-.1 3 0 3-.3 3 .1 3 .5 3 .1 3 0 3-.1 3-.1 3 .3 3 .2 3-.4 3-.1 3 .2 3 .1 3-.2 3 .4 3 0 3-.3 3 .1 3-.3 3-.5 3 .2 3 .4 3 0 3-.3 3 0 3 .4 3 .4 3 .1 3 .1 3-.3 3-.6 3-.4 3 0 3 .1 3 .2 3 .4 3 0 3 .3 3-.1 3-.4 3-.4 3 .3 3 .3 3-.3 3-.1 3 .3 3 0 3 0 3-.2 3-.1 3 0 3 .1 3 0 3 .1 3-.4 3-.4 3 .2 3 .4 3 0 3 .1 3 0 3-.3 3 0 3-.1 3 0 3 .3 3 0 3 .1 3 .1 3 .1 3 .1 3-.2 3 0 3-.1 3 0 3 .1 3 0 3 0 3-.2 3 0 3 0 3-.1 3 .4 3 .4 3-.1 3-.3 3-.3 3-.2 3 .1 3 .2 3-.2 3 .1 3 .1 3-.3 3-.3 2.2 .2" fill="none" stroke="#C9B458" stroke-width="1" stroke-linejoin="round" stroke-linecap="round"/>
<path d="M1377.5 1157.2l3 .2 3-.2 3 0 3 0 3-.1 3 .2 3-.1 3-.3 3-.1 3 .1 3 .1 3 .1 3 0 3 0 3 0 3 0 3-.2 3 .2 3 .2 3 .1 3-.1 3 .1 3-.2 3 0 3-.1 3-.3 3 0 3-.2 3-.1 3 .2 3 .4 3-.1 3-.2 3 0 3 0 3 .3 3 0 3 .1 3 .1 3 .1 3-.3 3-.1 3 .2 3 .2 3 .1 3-.3 3-.3 3 .1 3 .3 3 0 3-.1 3-.1 3 0 3-.1 3 .1 3 .1 3-.2 3 0 3 .2 3 .2 3-.2 3-.2 3-.1 3 .1 3 0 3 .2 3 .2 3-.2 3-.5 3 0 3 .6 3 .1 3-.1 3-.4 3-.1 3 .2 3 0 3 .2 3 .2 3-.1 3-.3 3 0 3-.2 3 .1 3 .3 3 .2 3 .1 3 0 3-.3 3-.2 3-.1 3 .2 3 .1 3-.1 3 0 3 .2 3 0 3 .1 3 .3 3-.3 3-.5 3-.1 3 .1 3-.1 3 .1 3 .1 3 .1 3 .2 3-.2 3-.2 3 .3 3 .4 3-.2 3 0 3 .3 3-.2 3-.2 3-.1 3-.1 3 .1 3 0 3 .2 3 .1 3-.2 3 0 3 .1 3 0 3 0 3 .1 3 0 3-.1 3-.4 3-.1 3 .1 3-.1 3 .2 3 .1 3-.2 3 0 3 .2 3 .1 3-.1 3-.1 3 0 3-.1 3-.2 3 .1 3 .4 3 .1 3-.1 3 0 3 0 3 0 3-.1 3-.3 3 0 3 0 3 .1 3 0 3-.1 3 .2 3 .1 3-.2 3-.1 3 .1 3-.1 3-.2 3 0 3 0 3 .3 2.2 .1" fill="none" stroke="#37872D" stroke-width="2.2" stroke-linejoin="round" stroke-linecap="round"/>
<text x="1373.9" y="1146.9" text-anchor="end" letter-spacing="0.15" fill="#c7c7d6" stroke="#c7c7d6" stroke-width="0.4">5.0 kp/s</text>
<text x="1373.9" y="1165.3" text-anchor="end" letter-spacing="0.15" fill="#c7c7d6" stroke="#c7c7d6" stroke-width="0.4">0.0 p/s</text>
<text x="1373.9" y="1183.7" text-anchor="end" letter-spacing="0.15" fill="#c7c7d6" stroke="#c7c7d6" stroke-width="0.4">-5.0 kp/s</text>
<text x="1373.9" y="1202.1" text-anchor="end" letter-spacing="0.15" fill="#c7c7d6" stroke="#c7c7d6" stroke-width="0.4">-10.0 kp/s</text>
<text x="1373.9" y="1220.5" text-anchor="end" letter-spacing="0.15" fill="#c7c7d6" stroke="#c7c7d6" stroke-width="0.4">-15.0 kp/s</text>
<text x="1373.9" y="1238.9" text-anchor="end" letter-spacing="0.15" fill="#c7c7d6" stroke="#c7c7d6" stroke-width="0.4">-20.0 kp/s</text>
<text x="1373.9" y="1257.3" text-anchor="end" letter-spacing="0.15" fill="#c7c7d6" stroke="#c7c7d6" stroke-width="0.4">-25.0 kp/s</text>
<text x="1422.7" y="1283.6" text-anchor="middle" letter-spacing="0.10" fill="#c7c7d6" stroke="#c7c7d6" stroke-width="0.4">11:00</text>
<text x="1508.4" y="1283.6" text-anchor="middle" letter-spacing="0.10" fill="#c7c7d6" stroke="#c7c7d6" stroke-width="0.4">12:00</text>
<text x="1594.1" y="1283.6" text-anchor="middle" letter-spacing="0.10" fill="#c7c7d6" stroke="#c7c7d6" stroke-width="0.4">13:00</text>
<text x="1679.8" y="1283.6" text-anchor="middle" letter-spacing="0.10" fill="#c7c7d6" stroke="#c7c7d6" stroke-width="0.4">14:00</text>
<text x="1765.5" y="1283.6" text-anchor="middle" letter-spacing="0.10" fill="#c7c7d6" stroke="#c7c7d6" stroke-width="0.4">15:00</text>
<text x="1851.2" y="1283.6" text-anchor="middle" letter-spacing="0.10" fill="#c7c7d6" stroke="#c7c7d6" stroke-width="0.4">16:00</text>
<text transform="translate(1297.5 1204.0) rotate(-90)" text-anchor="middle" letter-spacing="0.3" fill="#c7c7d6" stroke="#c7c7d6" stroke-width="0.3">out(-) | in(+)</text>
<clipPath id="lm"><rect x="1281" y="1290" width="626" height="77"/></clipPath><g clip-path="url(#lm)">
<rect x="1292.2" y="1301.3" width="14" height="4" rx="2" fill="#73BF69"/>
<text x="1312.7" y="1307.2" letter-spacing="0.21" stroke="#ccccdc" stroke-width="0.35">r-3: multicast in</text>
<rect x="1407.2" y="1301.3" width="14" height="4" rx="2" fill="#F2CC0C"/>
<text x="1427.7" y="1307.2" letter-spacing="0.25" stroke="#ccccdc" stroke-width="0.35">r-4: multicast in</text>
<rect x="1522.8" y="1301.3" width="14" height="4" rx="2" fill="#8AB8FF"/>
<text x="1543.3" y="1307.2" letter-spacing="0.10" stroke="#ccccdc" stroke-width="0.35">a-1: multicast in</text>
<rect x="1638.5" y="1301.3" width="14" height="4" rx="2" fill="#FF780A"/>
<text x="1659.0" y="1307.2" letter-spacing="0.19" stroke="#ccccdc" stroke-width="0.35">a-3: multicast in</text>
<rect x="1755.8" y="1301.3" width="14" height="4" rx="2" fill="#F2495C"/>
<text x="1776.3" y="1307.2" letter-spacing="0.11" stroke="#ccccdc" stroke-width="0.35">box-1: multicast in</text>
<rect x="1292.2" y="1323.4" width="14" height="4" rx="2" fill="#5794F2"/>
<text x="1312.7" y="1329.3" letter-spacing="0.10" stroke="#ccccdc" stroke-width="0.35">r-1: multicast in</text>
<rect x="1405.2" y="1323.4" width="14" height="4" rx="2" fill="#B877D9"/>
<text x="1425.7" y="1329.3" letter-spacing="0.17" stroke="#ccccdc" stroke-width="0.35">a-2: multicast in</text>
<rect x="1522.5" y="1323.4" width="14" height="4" rx="2" fill="#705DA0"/>
<text x="1543.0" y="1329.3" letter-spacing="0.14" stroke="#ccccdc" stroke-width="0.35">gw-1: multicast in</text>
<rect x="1647.8" y="1323.4" width="14" height="4" rx="2" fill="#37872D"/>
<text x="1668.3" y="1329.3" letter-spacing="0.18" stroke="#ccccdc" stroke-width="0.35">r-2: multicast in</text>
<rect x="1292.2" y="1345.5" width="14" height="4" rx="2" fill="#FADE2A"/>
<text x="1312.7" y="1351.4" letter-spacing="0.21" stroke="#ccccdc" stroke-width="0.35">fw-1-sec.bn: multicast in</text>
<rect x="1456.5" y="1345.5" width="14" height="4" rx="2" fill="#447EBC"/>
<text x="1477.0" y="1351.4" letter-spacing="0.25" stroke="#ccccdc" stroke-width="0.35">fw-1-pri.bn: multicast in</text>
<rect x="1616.2" y="1345.5" width="14" height="4" rx="2" fill="#C15C17"/>
<text x="1636.7" y="1351.4" letter-spacing="0.30" stroke="#ccccdc" stroke-width="0.35">a-56-r2: multicast in</text>
<rect x="1292.2" y="1367.6" width="14" height="4" rx="2" fill="#890F02"/>
<text x="1312.7" y="1373.5" letter-spacing="0.04" stroke="#ccccdc" stroke-width="0.35">a-1.skin: multicast in</text>
<rect x="1432.8" y="1367.6" width="14" height="4" rx="2" fill="#0A437C"/>
<text x="1453.3" y="1373.5" letter-spacing="0.28" stroke="#ccccdc" stroke-width="0.35">a-56-r2-3: multicast in</text>
<rect x="1587.8" y="1367.6" width="14" height="4" rx="2" fill="#6D1F62"/>
<text x="1608.3" y="1373.5" letter-spacing="0.06" stroke="#ccccdc" stroke-width="0.35">a-56-r1: multicast in</text>
<rect x="1726.2" y="1367.6" width="14" height="4" rx="2" fill="#584477"/>
<text x="1746.7" y="1373.5" letter-spacing="0.47" stroke="#ccccdc" stroke-width="0.35">c9500-1: multicast in</text>
</g></svg>
</body></html>
